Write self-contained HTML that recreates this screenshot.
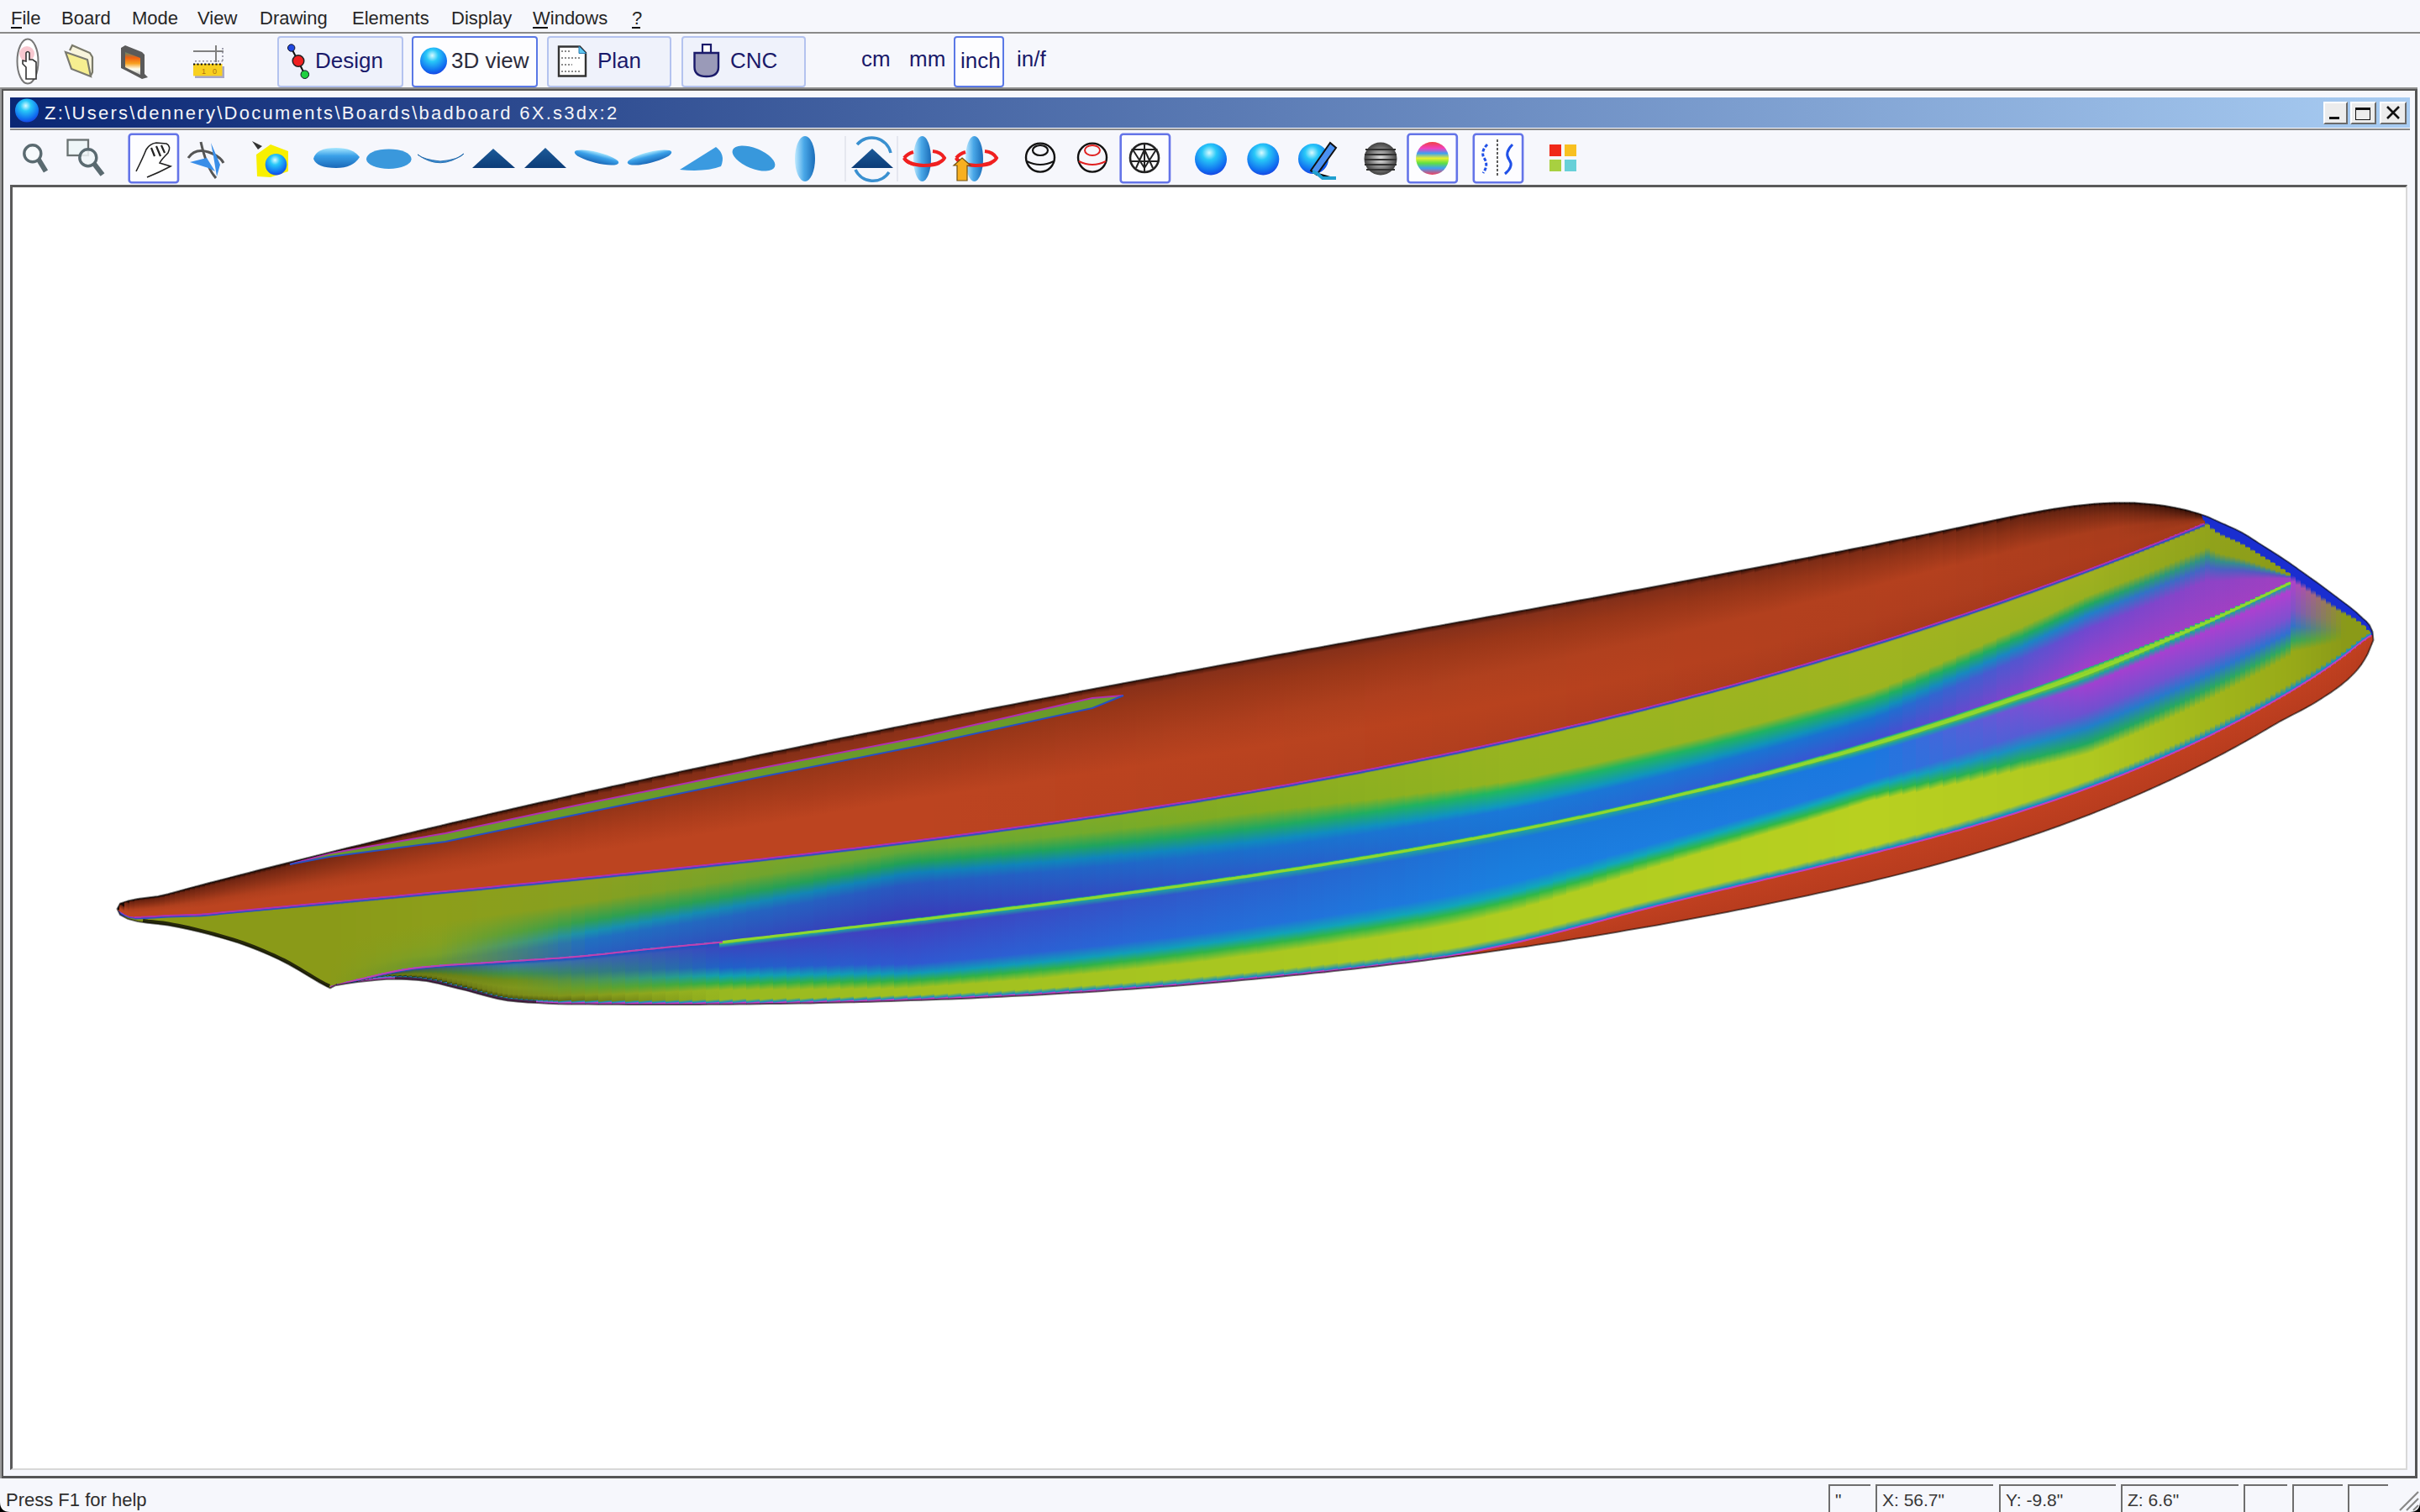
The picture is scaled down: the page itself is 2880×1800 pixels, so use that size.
<!DOCTYPE html>
<html><head><meta charset="utf-8">
<style>
*{margin:0;padding:0;box-sizing:border-box}
html,body{width:2880px;height:1800px;overflow:hidden;background:#f6f7fc;font-family:"Liberation Sans",sans-serif;position:relative}
.a{position:absolute}
.menu{font-size:22px;color:#262626;top:8px;line-height:28px}
.u{text-decoration:underline;text-underline-offset:3px}
.tbtn{position:absolute;top:43px;height:61px;border:2px solid #b4c3ef;border-radius:4px;background:#eff2fb}
.tbtn.sel{border-color:#5a78e6;background:#fdfdff}
.blab{position:absolute;font-size:26px;color:#1a1a6a;top:12px;line-height:30px}
.sbtn{position:absolute;top:158px;height:61px;border:2px solid #5a78e6;border-radius:4px;background:#fdfdff}
.pane{position:absolute;top:1767px;height:33px;border-left:2px solid #6e6e6e;border-top:2px solid #6e6e6e;font-size:21px;color:#383838;padding-left:6px;line-height:34px}
</style></head><body>
<!-- menu bar -->
<div class="a menu" style="left:13px">File</div>
<div class="a menu" style="left:73px">Board</div>
<div class="a menu" style="left:157px">Mode</div>
<div class="a menu" style="left:235px">View</div>
<div class="a menu" style="left:309px">Drawing</div>
<div class="a menu" style="left:419px">Elements</div>
<div class="a menu" style="left:537px">Display</div>
<div class="a menu" style="left:634px">Windows</div>
<div class="a menu" style="left:752px">?</div>
<div class="a" style="left:13px;top:32px;width:13px;height:2px;background:#111"></div>
<div class="a" style="left:634px;top:32px;width:18px;height:2px;background:#111"></div>
<div class="a" style="left:752px;top:32px;width:10px;height:2px;background:#111"></div>
<div class="a" style="left:0;top:38px;width:2880px;height:2px;background:#8a8a8a"></div>

<!-- main toolbar -->
<div class="tbtn" style="left:330px;width:150px"><div class="blab" style="left:43px">Design</div></div>
<div class="tbtn sel" style="left:490px;width:150px"><div class="blab" style="left:45px;color:#2c2c3c">3D view</div></div>
<div class="tbtn" style="left:651px;width:148px"><div class="blab" style="left:58px">Plan</div></div>
<div class="tbtn" style="left:811px;width:148px"><div class="blab" style="left:56px">CNC</div></div>
<div class="tbtn sel" style="left:1135px;width:60px"><div class="blab" style="left:6px">inch</div></div>
<div class="a blab" style="left:1025px;top:55px">cm</div>
<div class="a blab" style="left:1082px;top:55px">mm</div>
<div class="a blab" style="left:1210px;top:55px">in/f</div>

<!-- MDI window frame -->
<div class="a" style="left:0;top:104px;width:2877px;height:1656px;border-top:2px solid #8e8e8e;border-left:2px solid #9a9a9a"></div>
<div class="a" style="left:2px;top:106px;width:2875px;height:1654px;border-top:2px solid #555;border-left:2px solid #555;border-right:3px solid #555;border-bottom:3px solid #555;background:#f6f7fc"></div>
<!-- title bar -->
<div class="a" style="left:12px;top:116px;width:2856px;height:36px;background:linear-gradient(to right,#0a2674,#a8ccf2)"></div>
<div class="a" id="ttl" style="left:53px;top:121px;font-size:22px;line-height:28px;color:#f4f4f8;letter-spacing:2.28px">Z:\Users\dennery\Documents\Boards\badboard 6X.s3dx:2</div>
<div class="a" style="left:12px;top:153px;width:2856px;height:2px;background:#8a8a8a"></div>

<!-- canvas -->
<div class="a" style="left:12px;top:220px;width:2853px;height:1530px;border-top:3px solid #5a5a5a;border-left:3px solid #5a5a5a;border-right:2px solid #d8d8d8;border-bottom:2px solid #d8d8d8;background:#fff"></div>

<svg class="a" style="left:0;top:0" width="2880" height="1800" viewBox="0 0 2880 1800">
<defs><clipPath id="bc"><path d="M152.0,1072.6 L164.0,1070.0 L176.0,1068.6 L188.0,1067.0 L200.0,1064.3 L212.0,1060.9 L224.0,1057.6 L236.0,1054.5 L248.0,1051.3 L260.0,1048.2 L272.0,1045.1 L284.0,1042.0 L296.0,1038.9 L308.0,1035.8 L320.0,1032.8 L332.0,1029.7 L344.0,1026.7 L356.0,1023.7 L368.0,1020.7 L380.0,1017.7 L392.0,1014.7 L404.0,1011.7 L416.0,1008.8 L428.0,1005.9 L440.0,1003.0 L452.0,1000.0 L464.0,997.1 L476.0,994.2 L488.0,991.4 L500.0,988.5 L512.0,985.7 L524.0,982.9 L536.0,980.0 L548.0,977.2 L560.0,974.4 L572.0,971.6 L584.0,968.8 L596.0,966.0 L608.0,963.3 L620.0,960.5 L632.0,957.8 L644.0,955.1 L656.0,952.4 L668.0,949.7 L680.0,947.0 L692.0,944.3 L704.0,941.6 L716.0,939.0 L728.0,936.3 L740.0,933.7 L752.0,931.1 L764.0,928.4 L776.0,925.8 L788.0,923.2 L800.0,920.7 L812.0,918.1 L824.0,915.5 L836.0,913.0 L848.0,910.4 L860.0,907.9 L872.0,905.4 L884.0,902.9 L896.0,900.3 L908.0,897.8 L920.0,895.3 L932.0,892.9 L944.0,890.4 L956.0,887.9 L968.0,885.4 L980.0,883.0 L992.0,880.5 L1004.0,878.1 L1016.0,875.7 L1028.0,873.3 L1040.0,870.9 L1052.0,868.5 L1064.0,866.1 L1076.0,863.7 L1088.0,861.3 L1100.0,858.9 L1112.0,856.6 L1124.0,854.2 L1136.0,851.8 L1148.0,849.5 L1160.0,847.2 L1172.0,844.8 L1184.0,842.5 L1196.0,840.2 L1208.0,837.9 L1220.0,835.6 L1232.0,833.2 L1244.0,830.9 L1256.0,828.7 L1268.0,826.4 L1280.0,824.1 L1292.0,821.8 L1304.0,819.5 L1316.0,817.3 L1328.0,815.1 L1340.0,812.8 L1352.0,810.5 L1364.0,808.3 L1376.0,806.1 L1388.0,803.9 L1400.0,801.6 L1412.0,799.4 L1424.0,797.2 L1436.0,795.0 L1448.0,792.8 L1460.0,790.6 L1472.0,788.4 L1484.0,786.2 L1496.0,784.0 L1508.0,781.8 L1520.0,779.6 L1532.0,777.4 L1544.0,775.2 L1556.0,773.0 L1568.0,770.9 L1580.0,768.7 L1592.0,766.5 L1604.0,764.4 L1616.0,762.2 L1628.0,760.1 L1640.0,757.9 L1652.0,755.7 L1664.0,753.5 L1676.0,751.4 L1688.0,749.3 L1700.0,747.1 L1712.0,744.9 L1724.0,742.8 L1736.0,740.6 L1748.0,738.5 L1760.0,736.3 L1772.0,734.1 L1784.0,731.9 L1796.0,729.7 L1808.0,727.6 L1820.0,725.4 L1832.0,723.2 L1844.0,721.1 L1856.0,718.9 L1868.0,716.8 L1880.0,714.6 L1892.0,712.4 L1904.0,710.2 L1916.0,708.0 L1928.0,705.8 L1940.0,703.6 L1952.0,701.4 L1964.0,699.2 L1976.0,696.9 L1988.0,694.7 L2000.0,692.5 L2012.0,690.3 L2024.0,688.1 L2036.0,685.8 L2048.0,683.6 L2060.0,681.3 L2072.0,679.0 L2084.0,676.7 L2096.0,674.5 L2108.0,672.2 L2120.0,669.9 L2132.0,667.5 L2144.0,665.2 L2156.0,662.9 L2168.0,660.6 L2180.0,658.3 L2192.0,656.0 L2204.0,653.6 L2216.0,651.3 L2228.0,648.9 L2240.0,646.5 L2252.0,644.1 L2264.0,641.7 L2276.0,639.3 L2288.0,636.9 L2300.0,634.4 L2312.0,632.0 L2324.0,629.5 L2336.0,627.1 L2348.0,624.6 L2360.0,622.1 L2372.0,619.6 L2384.0,617.1 L2396.0,614.6 L2408.0,612.2 L2420.0,609.9 L2432.0,607.7 L2444.0,605.8 L2456.0,603.9 L2468.0,602.2 L2480.0,600.9 L2492.0,599.7 L2504.0,599.0 L2516.0,598.6 L2528.0,598.4 L2540.0,598.6 L2552.0,599.4 L2564.0,600.4 L2576.0,602.0 L2588.0,604.2 L2600.0,606.8 L2604.0,607.8 L2608.0,608.9 L2612.0,610.1 L2616.0,611.3 L2620.0,612.6 L2624.0,614.0 L2628.0,615.5 L2632.0,617.3 L2636.0,619.2 L2640.0,621.0 L2644.0,622.8 L2648.0,624.5 L2652.0,626.3 L2656.0,628.1 L2660.0,629.9 L2664.0,631.9 L2668.0,634.0 L2672.0,636.3 L2676.0,638.7 L2680.0,641.3 L2684.0,643.8 L2688.0,646.5 L2692.0,649.0 L2696.0,651.6 L2700.0,654.1 L2704.0,656.6 L2708.0,659.2 L2712.0,661.7 L2716.0,664.3 L2720.0,667.0 L2724.0,669.7 L2728.0,672.5 L2732.0,675.3 L2736.0,678.2 L2740.0,681.0 L2744.0,683.9 L2748.0,686.7 L2752.0,689.6 L2756.0,692.4 L2760.0,695.3 L2764.0,698.2 L2768.0,701.2 L2772.0,704.2 L2776.0,707.2 L2780.0,710.2 L2784.0,713.3 L2788.0,716.2 L2792.0,719.2 L2796.0,722.3 L2800.0,725.5 L2804.0,728.8 L2808.0,732.4 L2812.0,736.2 L2816.0,739.6 L2820.0,744.4 L2823.5,752.0 L2824.5,762.0 L2822.0,768.2 L2818.0,778.0 L2814.0,785.3 L2810.0,791.4 L2806.0,796.6 L2802.0,801.1 L2798.0,805.1 L2794.0,808.9 L2790.0,812.3 L2786.0,815.6 L2782.0,818.6 L2778.0,821.5 L2774.0,824.3 L2770.0,826.9 L2766.0,829.5 L2762.0,832.1 L2758.0,834.6 L2754.0,837.1 L2750.0,839.5 L2746.0,841.7 L2742.0,843.9 L2738.0,846.0 L2734.0,848.1 L2730.0,850.1 L2726.0,852.2 L2722.0,854.3 L2718.0,856.4 L2714.0,858.5 L2710.0,860.8 L2706.0,863.1 L2702.0,865.4 L2698.0,867.8 L2694.0,870.1 L2690.0,872.5 L2686.0,874.8 L2682.0,877.1 L2678.0,879.4 L2674.0,881.7 L2670.0,883.9 L2666.0,886.1 L2662.0,888.3 L2658.0,890.5 L2654.0,892.7 L2650.0,894.8 L2646.0,897.0 L2642.0,899.1 L2638.0,901.2 L2634.0,903.2 L2630.0,905.3 L2626.0,907.4 L2622.0,909.4 L2618.0,911.4 L2614.0,913.4 L2610.0,915.4 L2606.0,917.4 L2602.0,919.4 L2598.0,921.3 L2594.0,923.3 L2590.0,925.2 L2586.0,927.1 L2582.0,929.0 L2578.0,930.8 L2574.0,932.7 L2570.0,934.5 L2566.0,936.3 L2562.0,938.1 L2560.0,939.0 L2548.0,944.4 L2536.0,949.6 L2524.0,954.6 L2512.0,959.6 L2500.0,964.4 L2488.0,969.2 L2476.0,973.8 L2464.0,978.3 L2452.0,982.7 L2440.0,987.0 L2428.0,991.2 L2416.0,995.3 L2404.0,999.3 L2392.0,1003.2 L2380.0,1007.0 L2368.0,1010.7 L2356.0,1014.4 L2344.0,1018.0 L2332.0,1021.5 L2320.0,1024.9 L2308.0,1028.2 L2296.0,1031.5 L2284.0,1034.7 L2272.0,1037.8 L2260.0,1040.9 L2248.0,1043.9 L2236.0,1046.8 L2224.0,1049.7 L2212.0,1052.5 L2200.0,1055.3 L2188.0,1058.0 L2176.0,1060.7 L2164.0,1063.3 L2152.0,1065.9 L2140.0,1068.5 L2128.0,1071.1 L2116.0,1073.6 L2104.0,1076.0 L2092.0,1078.5 L2080.0,1080.9 L2068.0,1083.3 L2056.0,1085.7 L2044.0,1088.1 L2032.0,1090.3 L2020.0,1092.6 L2008.0,1094.8 L1996.0,1097.1 L1984.0,1099.3 L1972.0,1101.4 L1960.0,1103.5 L1948.0,1105.6 L1936.0,1107.6 L1924.0,1109.7 L1912.0,1111.8 L1900.0,1113.8 L1888.0,1115.7 L1876.0,1117.6 L1864.0,1119.5 L1852.0,1121.4 L1840.0,1123.3 L1828.0,1125.1 L1816.0,1126.9 L1804.0,1128.6 L1792.0,1130.3 L1780.0,1132.0 L1768.0,1133.7 L1756.0,1135.4 L1744.0,1137.0 L1732.0,1138.6 L1720.0,1140.2 L1708.0,1141.8 L1696.0,1143.4 L1684.0,1144.9 L1672.0,1146.4 L1660.0,1147.8 L1648.0,1149.3 L1636.0,1150.7 L1624.0,1152.1 L1612.0,1153.4 L1600.0,1154.7 L1588.0,1156.0 L1576.0,1157.4 L1564.0,1158.6 L1552.0,1159.9 L1540.0,1161.1 L1528.0,1162.3 L1516.0,1163.4 L1504.0,1164.6 L1492.0,1165.7 L1480.0,1166.8 L1468.0,1167.9 L1456.0,1169.0 L1444.0,1170.0 L1432.0,1171.0 L1420.0,1172.0 L1408.0,1173.0 L1396.0,1173.9 L1384.0,1174.8 L1372.0,1175.7 L1360.0,1176.6 L1348.0,1177.4 L1336.0,1178.3 L1324.0,1179.1 L1312.0,1179.9 L1300.0,1180.7 L1288.0,1181.4 L1276.0,1182.1 L1264.0,1182.8 L1252.0,1183.6 L1240.0,1184.3 L1228.0,1184.9 L1216.0,1185.5 L1204.0,1186.1 L1192.0,1186.7 L1180.0,1187.2 L1168.0,1187.8 L1156.0,1188.4 L1144.0,1188.9 L1132.0,1189.4 L1120.0,1189.8 L1108.0,1190.3 L1096.0,1190.7 L1084.0,1191.1 L1072.0,1191.5 L1060.0,1191.9 L1048.0,1192.3 L1036.0,1192.7 L1024.0,1193.0 L1012.0,1193.3 L1000.0,1193.5 L988.0,1193.8 L976.0,1194.1 L964.0,1194.4 L952.0,1194.6 L940.0,1194.8 L928.0,1195.0 L916.0,1195.1 L904.0,1195.3 L892.0,1195.5 L880.0,1195.6 L868.0,1195.7 L856.0,1195.8 L844.0,1195.8 L832.0,1195.9 L820.0,1195.9 L808.0,1196.0 L796.0,1196.0 L784.0,1196.0 L772.0,1196.0 L760.0,1196.0 L748.0,1195.9 L736.0,1195.8 L724.0,1195.8 L712.0,1195.7 L700.0,1195.6 L688.0,1195.5 L676.0,1195.4 L664.0,1195.2 L652.0,1194.7 L640.0,1194.1 L628.0,1193.4 L616.0,1192.4 L604.0,1191.2 L592.0,1188.9 L580.0,1186.0 L568.0,1182.7 L556.0,1179.4 L544.0,1176.5 L532.0,1173.5 L520.0,1170.4 L508.0,1168.0 L496.0,1166.7 L484.0,1165.9 L472.0,1165.5 L460.0,1165.8 L448.0,1166.7 L436.0,1167.9 L424.0,1169.2 L412.0,1171.1 L400.0,1173.0 L400.0,1172.6 L393.0,1176.3 L389.0,1174.4 L380.0,1169.6 L368.0,1162.5 L356.0,1155.2 L344.0,1148.3 L332.0,1142.2 L320.0,1136.7 L308.0,1131.6 L296.0,1126.9 L284.0,1122.6 L272.0,1118.9 L260.0,1115.4 L248.0,1112.1 L236.0,1109.1 L224.0,1106.3 L212.0,1103.8 L200.0,1101.5 L188.0,1100.0 L176.0,1098.7 L164.0,1096.9 L152.0,1093.9 L143.0,1089.0 L139.5,1082.0 L143.0,1075.5 Z"/></clipPath>
<linearGradient id="g0" gradientUnits="userSpaceOnUse" x1="139.0" y1="1074.0" x2="134.5" y2="1088.6"><stop offset="0.500" stop-color="#200a04"/><stop offset="0.507" stop-color="#6a2210"/><stop offset="0.522" stop-color="#8a3016"/><stop offset="0.537" stop-color="#b0401e"/><stop offset="0.550" stop-color="#bc4420"/><stop offset="0.562" stop-color="#bc4420"/><stop offset="0.594" stop-color="#b030b0"/><stop offset="0.688" stop-color="#3050c0"/></linearGradient>
<linearGradient id="g1" gradientUnits="userSpaceOnUse" x1="145.0" y1="1069.2" x2="133.2" y2="1089.0"><stop offset="0.299" stop-color="#200a04"/><stop offset="0.338" stop-color="#6a2210"/><stop offset="0.414" stop-color="#8a3016"/><stop offset="0.496" stop-color="#b0401e"/><stop offset="0.562" stop-color="#bc4420"/><stop offset="0.629" stop-color="#bc4420"/><stop offset="0.647" stop-color="#b030b0"/><stop offset="0.703" stop-color="#3050c0"/></linearGradient>
<linearGradient id="g2" gradientUnits="userSpaceOnUse" x1="151.0" y1="1065.0" x2="137.8" y2="1095.9"><stop offset="0.219" stop-color="#200a04"/><stop offset="0.272" stop-color="#6a2210"/><stop offset="0.375" stop-color="#8a3016"/><stop offset="0.488" stop-color="#b0401e"/><stop offset="0.577" stop-color="#bc4420"/><stop offset="0.668" stop-color="#bc4420"/><stop offset="0.681" stop-color="#b030b0"/><stop offset="0.722" stop-color="#3050c0"/><stop offset="0.750" stop-color="#8a9a18"/><stop offset="0.752" stop-color="#8a9a18"/><stop offset="0.752" stop-color="#8a9a18"/><stop offset="0.753" stop-color="#8a9a18"/><stop offset="0.753" stop-color="#8a9a18"/><stop offset="0.754" stop-color="#8a9a18"/></linearGradient>
<linearGradient id="g3" gradientUnits="userSpaceOnUse" x1="157.0" y1="1063.3" x2="152.8" y2="1102.9"><stop offset="0.200" stop-color="#200a04"/><stop offset="0.257" stop-color="#6b2210"/><stop offset="0.370" stop-color="#8a3016"/><stop offset="0.493" stop-color="#b0401e"/><stop offset="0.591" stop-color="#bc4420"/><stop offset="0.691" stop-color="#bc4420"/><stop offset="0.703" stop-color="#b030b0"/><stop offset="0.741" stop-color="#3050c0"/><stop offset="0.766" stop-color="#8a9a18"/><stop offset="0.770" stop-color="#8a9a18"/><stop offset="0.772" stop-color="#8a9a18"/><stop offset="0.774" stop-color="#8a9a18"/><stop offset="0.775" stop-color="#8a9a18"/><stop offset="0.775" stop-color="#8a9a18"/></linearGradient>
<linearGradient id="g4" gradientUnits="userSpaceOnUse" x1="163.0" y1="1062.2" x2="163.9" y2="1104.7"><stop offset="0.188" stop-color="#210a04"/><stop offset="0.245" stop-color="#6b2310"/><stop offset="0.357" stop-color="#8b3016"/><stop offset="0.479" stop-color="#b0401e"/><stop offset="0.577" stop-color="#bc4420"/><stop offset="0.676" stop-color="#bc4420"/><stop offset="0.688" stop-color="#b030b0"/><stop offset="0.723" stop-color="#3050c0"/><stop offset="0.747" stop-color="#8a9a18"/><stop offset="0.767" stop-color="#8a9a18"/><stop offset="0.776" stop-color="#8a9a18"/><stop offset="0.782" stop-color="#8a9a18"/><stop offset="0.786" stop-color="#8a9a18"/><stop offset="0.788" stop-color="#8a9a18"/></linearGradient>
<linearGradient id="g5" gradientUnits="userSpaceOnUse" x1="169.0" y1="1061.4" x2="170.9" y2="1105.7"><stop offset="0.180" stop-color="#210a04"/><stop offset="0.236" stop-color="#6b2310"/><stop offset="0.347" stop-color="#8b3016"/><stop offset="0.467" stop-color="#b0401e"/><stop offset="0.563" stop-color="#bc4420"/><stop offset="0.662" stop-color="#bc4420"/><stop offset="0.673" stop-color="#b030b0"/><stop offset="0.707" stop-color="#3050c0"/><stop offset="0.731" stop-color="#8a9a18"/><stop offset="0.763" stop-color="#8a9a18"/><stop offset="0.777" stop-color="#8a9a18"/><stop offset="0.787" stop-color="#8a9a18"/><stop offset="0.794" stop-color="#8a9a18"/><stop offset="0.797" stop-color="#8a9a18"/></linearGradient>
<linearGradient id="g6" gradientUnits="userSpaceOnUse" x1="175.0" y1="1060.7" x2="177.5" y2="1106.4"><stop offset="0.174" stop-color="#210a04"/><stop offset="0.229" stop-color="#6c2310"/><stop offset="0.338" stop-color="#8b3016"/><stop offset="0.457" stop-color="#b0401e"/><stop offset="0.551" stop-color="#bc4420"/><stop offset="0.649" stop-color="#bc4420"/><stop offset="0.659" stop-color="#b030b0"/><stop offset="0.692" stop-color="#3050c0"/><stop offset="0.716" stop-color="#8a9a18"/><stop offset="0.759" stop-color="#8a9a18"/><stop offset="0.777" stop-color="#8a9a18"/><stop offset="0.790" stop-color="#8a9a18"/><stop offset="0.799" stop-color="#8a9a18"/><stop offset="0.804" stop-color="#8a9a18"/></linearGradient>
<linearGradient id="g7" gradientUnits="userSpaceOnUse" x1="181.0" y1="1060.0" x2="183.9" y2="1107.0"><stop offset="0.169" stop-color="#210a04"/><stop offset="0.222" stop-color="#6c2310"/><stop offset="0.330" stop-color="#8b3016"/><stop offset="0.447" stop-color="#b0401e"/><stop offset="0.541" stop-color="#bc4420"/><stop offset="0.637" stop-color="#bc4420"/><stop offset="0.647" stop-color="#b030b0"/><stop offset="0.679" stop-color="#3050c0"/><stop offset="0.703" stop-color="#8a9a18"/><stop offset="0.755" stop-color="#8a9a18"/><stop offset="0.777" stop-color="#8a9a18"/><stop offset="0.793" stop-color="#8a9a18"/><stop offset="0.804" stop-color="#8a9a18"/><stop offset="0.809" stop-color="#8a9a18"/></linearGradient>
<linearGradient id="g8" gradientUnits="userSpaceOnUse" x1="187.0" y1="1059.1" x2="190.0" y2="1107.7"><stop offset="0.164" stop-color="#210b04"/><stop offset="0.216" stop-color="#6c2311"/><stop offset="0.323" stop-color="#8b3116"/><stop offset="0.439" stop-color="#b0401e"/><stop offset="0.532" stop-color="#bc4420"/><stop offset="0.627" stop-color="#bc4420"/><stop offset="0.638" stop-color="#b030b0"/><stop offset="0.668" stop-color="#3050c0"/><stop offset="0.692" stop-color="#8a9a18"/><stop offset="0.752" stop-color="#8a9a18"/><stop offset="0.777" stop-color="#8a9a18"/><stop offset="0.796" stop-color="#8a9a18"/><stop offset="0.809" stop-color="#8a9a18"/><stop offset="0.815" stop-color="#8a9a18"/></linearGradient>
<linearGradient id="g9" gradientUnits="userSpaceOnUse" x1="193.0" y1="1058.0" x2="195.8" y2="1108.4"><stop offset="0.158" stop-color="#210b04"/><stop offset="0.210" stop-color="#6c2311"/><stop offset="0.317" stop-color="#8b3116"/><stop offset="0.432" stop-color="#b0401e"/><stop offset="0.525" stop-color="#bc4420"/><stop offset="0.621" stop-color="#bc4420"/><stop offset="0.631" stop-color="#b030b0"/><stop offset="0.660" stop-color="#3050c0"/><stop offset="0.683" stop-color="#8a9a18"/><stop offset="0.751" stop-color="#8a9a18"/><stop offset="0.779" stop-color="#8a9a18"/><stop offset="0.801" stop-color="#8a9a18"/><stop offset="0.815" stop-color="#8a9a18"/><stop offset="0.822" stop-color="#8a9a18"/></linearGradient>
<linearGradient id="g10" gradientUnits="userSpaceOnUse" x1="199.0" y1="1056.5" x2="201.3" y2="1109.2"><stop offset="0.151" stop-color="#220b04"/><stop offset="0.203" stop-color="#6d2311"/><stop offset="0.310" stop-color="#8c3116"/><stop offset="0.426" stop-color="#b0401e"/><stop offset="0.519" stop-color="#bc4420"/><stop offset="0.616" stop-color="#bc4420"/><stop offset="0.625" stop-color="#b030b0"/><stop offset="0.654" stop-color="#3050c0"/><stop offset="0.676" stop-color="#8a9a18"/><stop offset="0.751" stop-color="#8a9a18"/><stop offset="0.783" stop-color="#8a9a18"/><stop offset="0.806" stop-color="#8a9a18"/><stop offset="0.822" stop-color="#8a9a18"/><stop offset="0.830" stop-color="#8a9a18"/></linearGradient>
<linearGradient id="g11" gradientUnits="userSpaceOnUse" x1="205.0" y1="1054.9" x2="206.9" y2="1110.3"><stop offset="0.144" stop-color="#220b04"/><stop offset="0.195" stop-color="#6d2311"/><stop offset="0.303" stop-color="#8c3116"/><stop offset="0.420" stop-color="#b0401e"/><stop offset="0.514" stop-color="#bc4420"/><stop offset="0.611" stop-color="#bc4420"/><stop offset="0.620" stop-color="#b030b0"/><stop offset="0.647" stop-color="#3050c0"/><stop offset="0.669" stop-color="#8a9a18"/><stop offset="0.752" stop-color="#8a9a18"/><stop offset="0.786" stop-color="#8a9a18"/><stop offset="0.812" stop-color="#8a9a18"/><stop offset="0.829" stop-color="#8a9a18"/><stop offset="0.838" stop-color="#8a9a18"/></linearGradient>
<linearGradient id="g12" gradientUnits="userSpaceOnUse" x1="211.0" y1="1053.2" x2="212.8" y2="1111.5"><stop offset="0.137" stop-color="#220b04"/><stop offset="0.188" stop-color="#6d2411"/><stop offset="0.297" stop-color="#8c3116"/><stop offset="0.414" stop-color="#b0401e"/><stop offset="0.508" stop-color="#bc4420"/><stop offset="0.607" stop-color="#bc4420"/><stop offset="0.615" stop-color="#b030b0"/><stop offset="0.641" stop-color="#3050c0"/><stop offset="0.662" stop-color="#8a9a18"/><stop offset="0.752" stop-color="#8a9a18"/><stop offset="0.790" stop-color="#8a9a18"/><stop offset="0.818" stop-color="#8a9a18"/><stop offset="0.836" stop-color="#8a9a18"/><stop offset="0.846" stop-color="#8a9a18"/></linearGradient>
<linearGradient id="g13" gradientUnits="userSpaceOnUse" x1="217.0" y1="1051.5" x2="218.8" y2="1112.8"><stop offset="0.130" stop-color="#220b04"/><stop offset="0.181" stop-color="#6d2411"/><stop offset="0.291" stop-color="#8c3116"/><stop offset="0.409" stop-color="#b0401e"/><stop offset="0.503" stop-color="#bc4420"/><stop offset="0.602" stop-color="#bc4420"/><stop offset="0.611" stop-color="#b030b0"/><stop offset="0.635" stop-color="#3050c0"/><stop offset="0.655" stop-color="#8a9a18"/><stop offset="0.752" stop-color="#8a9a18"/><stop offset="0.793" stop-color="#8a9a18"/><stop offset="0.823" stop-color="#8a9a18"/><stop offset="0.843" stop-color="#8a9a18"/><stop offset="0.853" stop-color="#8a9a18"/></linearGradient>
<linearGradient id="g14" gradientUnits="userSpaceOnUse" x1="223.0" y1="1049.9" x2="225.0" y2="1114.1"><stop offset="0.125" stop-color="#220b04"/><stop offset="0.175" stop-color="#6e2411"/><stop offset="0.285" stop-color="#8c3116"/><stop offset="0.403" stop-color="#b0401e"/><stop offset="0.497" stop-color="#bc4420"/><stop offset="0.597" stop-color="#bc4420"/><stop offset="0.605" stop-color="#b030b0"/><stop offset="0.629" stop-color="#3050c0"/><stop offset="0.648" stop-color="#8a9a18"/><stop offset="0.752" stop-color="#8a9a18"/><stop offset="0.795" stop-color="#8a9a18"/><stop offset="0.827" stop-color="#8a9a18"/><stop offset="0.849" stop-color="#8a9a18"/><stop offset="0.860" stop-color="#8a9a18"/></linearGradient>
<linearGradient id="g15" gradientUnits="userSpaceOnUse" x1="229.0" y1="1048.3" x2="231.4" y2="1115.4"><stop offset="0.119" stop-color="#220b04"/><stop offset="0.169" stop-color="#6e2411"/><stop offset="0.279" stop-color="#8c3116"/><stop offset="0.397" stop-color="#b0401e"/><stop offset="0.492" stop-color="#bc4420"/><stop offset="0.592" stop-color="#bc4420"/><stop offset="0.599" stop-color="#b030b0"/><stop offset="0.622" stop-color="#3050c0"/><stop offset="0.641" stop-color="#8a9a18"/><stop offset="0.751" stop-color="#8a9a18"/><stop offset="0.797" stop-color="#8a9a18"/><stop offset="0.832" stop-color="#8a9a18"/><stop offset="0.855" stop-color="#8a9a18"/><stop offset="0.866" stop-color="#8a9a18"/></linearGradient>
<linearGradient id="g16" gradientUnits="userSpaceOnUse" x1="235.0" y1="1046.7" x2="238.1" y2="1116.8"><stop offset="0.114" stop-color="#230b05"/><stop offset="0.163" stop-color="#6e2411"/><stop offset="0.273" stop-color="#8d3117"/><stop offset="0.391" stop-color="#b03f1d"/><stop offset="0.485" stop-color="#bc4420"/><stop offset="0.586" stop-color="#bc4420"/><stop offset="0.593" stop-color="#b030b0"/><stop offset="0.614" stop-color="#3050c0"/><stop offset="0.634" stop-color="#8a9a18"/><stop offset="0.750" stop-color="#8a9a18"/><stop offset="0.799" stop-color="#8a9a18"/><stop offset="0.835" stop-color="#8a9a18"/><stop offset="0.860" stop-color="#8a9a18"/><stop offset="0.872" stop-color="#8a9a18"/></linearGradient>
<linearGradient id="g17" gradientUnits="userSpaceOnUse" x1="241.0" y1="1045.2" x2="245.4" y2="1118.1"><stop offset="0.109" stop-color="#230b05"/><stop offset="0.158" stop-color="#6e2411"/><stop offset="0.267" stop-color="#8d3117"/><stop offset="0.385" stop-color="#b03f1d"/><stop offset="0.479" stop-color="#bc4420"/><stop offset="0.579" stop-color="#bc4420"/><stop offset="0.586" stop-color="#b030b0"/><stop offset="0.606" stop-color="#3050c0"/><stop offset="0.625" stop-color="#8a9a18"/><stop offset="0.749" stop-color="#8a9a18"/><stop offset="0.800" stop-color="#8a9a18"/><stop offset="0.838" stop-color="#8a9a18"/><stop offset="0.864" stop-color="#8a9a18"/><stop offset="0.877" stop-color="#8a9a18"/></linearGradient>
<linearGradient id="g18" gradientUnits="userSpaceOnUse" x1="247.0" y1="1043.6" x2="253.5" y2="1119.3"><stop offset="0.105" stop-color="#230b05"/><stop offset="0.152" stop-color="#6f2411"/><stop offset="0.261" stop-color="#8d3117"/><stop offset="0.377" stop-color="#b03f1d"/><stop offset="0.470" stop-color="#bc4420"/><stop offset="0.570" stop-color="#bc4420"/><stop offset="0.577" stop-color="#b030b0"/><stop offset="0.597" stop-color="#3050c0"/><stop offset="0.615" stop-color="#8a9a18"/><stop offset="0.746" stop-color="#8a9a18"/><stop offset="0.800" stop-color="#8a9a18"/><stop offset="0.841" stop-color="#8a9a18"/><stop offset="0.868" stop-color="#8a9a18"/><stop offset="0.882" stop-color="#8a9a18"/></linearGradient>
<linearGradient id="g19" gradientUnits="userSpaceOnUse" x1="253.0" y1="1042.0" x2="261.2" y2="1120.6"><stop offset="0.101" stop-color="#230b05"/><stop offset="0.147" stop-color="#6f2511"/><stop offset="0.254" stop-color="#8d3117"/><stop offset="0.369" stop-color="#b03f1d"/><stop offset="0.461" stop-color="#bc4420"/><stop offset="0.560" stop-color="#bc4420"/><stop offset="0.567" stop-color="#b030b0"/><stop offset="0.585" stop-color="#3050c0"/><stop offset="0.604" stop-color="#8a9a18"/><stop offset="0.742" stop-color="#8a9a18"/><stop offset="0.800" stop-color="#8a9a18"/><stop offset="0.843" stop-color="#8a9a18"/><stop offset="0.872" stop-color="#8a9a18"/><stop offset="0.887" stop-color="#8a9a18"/></linearGradient>
<linearGradient id="g20" gradientUnits="userSpaceOnUse" x1="259.0" y1="1040.4" x2="268.0" y2="1122.1"><stop offset="0.097" stop-color="#230b05"/><stop offset="0.142" stop-color="#6f2511"/><stop offset="0.248" stop-color="#8d3117"/><stop offset="0.361" stop-color="#b03f1d"/><stop offset="0.452" stop-color="#bc4420"/><stop offset="0.550" stop-color="#bc4420"/><stop offset="0.556" stop-color="#b030b0"/><stop offset="0.574" stop-color="#3050c0"/><stop offset="0.592" stop-color="#8a9a18"/><stop offset="0.738" stop-color="#8a9a18"/><stop offset="0.800" stop-color="#8a9a18"/><stop offset="0.845" stop-color="#8a9a18"/><stop offset="0.876" stop-color="#8a9a18"/><stop offset="0.891" stop-color="#8a9a18"/></linearGradient>
<linearGradient id="g21" gradientUnits="userSpaceOnUse" x1="265.0" y1="1038.9" x2="274.0" y2="1123.8"><stop offset="0.093" stop-color="#230b05"/><stop offset="0.137" stop-color="#702511"/><stop offset="0.241" stop-color="#8d3117"/><stop offset="0.353" stop-color="#b03f1d"/><stop offset="0.442" stop-color="#bc4420"/><stop offset="0.539" stop-color="#bc4420"/><stop offset="0.545" stop-color="#b030b0"/><stop offset="0.562" stop-color="#3050c0"/><stop offset="0.580" stop-color="#8a9a18"/><stop offset="0.735" stop-color="#8a9a18"/><stop offset="0.799" stop-color="#8a9a18"/><stop offset="0.847" stop-color="#8a9a18"/><stop offset="0.879" stop-color="#8a9a18"/><stop offset="0.895" stop-color="#8a9a18"/></linearGradient>
<linearGradient id="g22" gradientUnits="userSpaceOnUse" x1="271.0" y1="1037.3" x2="279.5" y2="1125.7"><stop offset="0.090" stop-color="#240b05"/><stop offset="0.133" stop-color="#702511"/><stop offset="0.236" stop-color="#8e3117"/><stop offset="0.346" stop-color="#b03f1d"/><stop offset="0.434" stop-color="#bc4420"/><stop offset="0.530" stop-color="#bc4420"/><stop offset="0.535" stop-color="#b030b0"/><stop offset="0.552" stop-color="#3050c0"/><stop offset="0.570" stop-color="#8a9a18"/><stop offset="0.731" stop-color="#8a9a18"/><stop offset="0.798" stop-color="#8a9a18"/><stop offset="0.849" stop-color="#8a9a18"/><stop offset="0.882" stop-color="#8a9a18"/><stop offset="0.899" stop-color="#8a9a18"/></linearGradient>
<linearGradient id="g23" gradientUnits="userSpaceOnUse" x1="277.0" y1="1035.8" x2="285.6" y2="1127.6"><stop offset="0.086" stop-color="#240c05"/><stop offset="0.129" stop-color="#702512"/><stop offset="0.230" stop-color="#8e3217"/><stop offset="0.339" stop-color="#b03f1d"/><stop offset="0.426" stop-color="#bc4420"/><stop offset="0.521" stop-color="#bc4420"/><stop offset="0.527" stop-color="#b030b0"/><stop offset="0.543" stop-color="#3050c0"/><stop offset="0.561" stop-color="#8a9a18"/><stop offset="0.728" stop-color="#8a9a18"/><stop offset="0.798" stop-color="#8a9a18"/><stop offset="0.850" stop-color="#8a9a18"/><stop offset="0.885" stop-color="#8a9a18"/><stop offset="0.903" stop-color="#8a9a18"/></linearGradient>
<linearGradient id="g24" gradientUnits="userSpaceOnUse" x1="283.0" y1="1034.2" x2="291.8" y2="1129.5"><stop offset="0.083" stop-color="#240c05"/><stop offset="0.125" stop-color="#702512"/><stop offset="0.225" stop-color="#8e3217"/><stop offset="0.332" stop-color="#b03f1d"/><stop offset="0.418" stop-color="#bc4420"/><stop offset="0.513" stop-color="#bc4420"/><stop offset="0.518" stop-color="#b030b0"/><stop offset="0.534" stop-color="#3050c0"/><stop offset="0.551" stop-color="#8a9a18"/><stop offset="0.725" stop-color="#8a9a18"/><stop offset="0.798" stop-color="#8a9a18"/><stop offset="0.852" stop-color="#8a9a18"/><stop offset="0.888" stop-color="#8a9a18"/><stop offset="0.906" stop-color="#8a9a18"/></linearGradient>
<linearGradient id="g25" gradientUnits="userSpaceOnUse" x1="289.0" y1="1032.7" x2="298.2" y2="1131.5"><stop offset="0.080" stop-color="#240c05"/><stop offset="0.121" stop-color="#712512"/><stop offset="0.220" stop-color="#8e3217"/><stop offset="0.326" stop-color="#b03f1d"/><stop offset="0.411" stop-color="#bc4420"/><stop offset="0.504" stop-color="#bc4420"/><stop offset="0.509" stop-color="#b030b0"/><stop offset="0.524" stop-color="#3050c0"/><stop offset="0.542" stop-color="#8a9a18"/><stop offset="0.722" stop-color="#8a9a18"/><stop offset="0.797" stop-color="#8a9a18"/><stop offset="0.853" stop-color="#8a9a18"/><stop offset="0.891" stop-color="#8a9a18"/><stop offset="0.910" stop-color="#8a9a18"/></linearGradient>
<linearGradient id="g26" gradientUnits="userSpaceOnUse" x1="295.0" y1="1031.1" x2="304.6" y2="1133.6"><stop offset="0.077" stop-color="#240c05"/><stop offset="0.117" stop-color="#712512"/><stop offset="0.215" stop-color="#8e3217"/><stop offset="0.319" stop-color="#b03f1d"/><stop offset="0.403" stop-color="#bc4420"/><stop offset="0.496" stop-color="#bc4420"/><stop offset="0.500" stop-color="#b030b0"/><stop offset="0.515" stop-color="#3050c0"/><stop offset="0.532" stop-color="#8a9a18"/><stop offset="0.719" stop-color="#8a9a18"/><stop offset="0.796" stop-color="#8a9a18"/><stop offset="0.855" stop-color="#8a9a18"/><stop offset="0.894" stop-color="#8a9a18"/><stop offset="0.913" stop-color="#8a9a18"/></linearGradient>
<linearGradient id="g27" gradientUnits="userSpaceOnUse" x1="301.0" y1="1029.6" x2="311.1" y2="1135.9"><stop offset="0.075" stop-color="#240c05"/><stop offset="0.113" stop-color="#712612"/><stop offset="0.210" stop-color="#8e3217"/><stop offset="0.313" stop-color="#b03f1d"/><stop offset="0.395" stop-color="#bc4420"/><stop offset="0.487" stop-color="#bc4420"/><stop offset="0.492" stop-color="#b030b0"/><stop offset="0.506" stop-color="#3050c0"/><stop offset="0.523" stop-color="#8a9a18"/><stop offset="0.715" stop-color="#8a9a18"/><stop offset="0.796" stop-color="#8a9a18"/><stop offset="0.856" stop-color="#8a9a18"/><stop offset="0.896" stop-color="#8a9a18"/><stop offset="0.916" stop-color="#8a9a18"/></linearGradient>
<linearGradient id="g28" gradientUnits="userSpaceOnUse" x1="307.0" y1="1028.1" x2="317.7" y2="1138.2"><stop offset="0.072" stop-color="#250c05"/><stop offset="0.109" stop-color="#712612"/><stop offset="0.205" stop-color="#8f3217"/><stop offset="0.306" stop-color="#b03f1d"/><stop offset="0.388" stop-color="#bc4420"/><stop offset="0.478" stop-color="#bc4420"/><stop offset="0.483" stop-color="#b030b0"/><stop offset="0.496" stop-color="#3050c0"/><stop offset="0.514" stop-color="#8a9a18"/><stop offset="0.712" stop-color="#8a9a18"/><stop offset="0.795" stop-color="#8a9a18"/><stop offset="0.857" stop-color="#8a9a18"/><stop offset="0.898" stop-color="#8a9a18"/><stop offset="0.919" stop-color="#8a9a18"/></linearGradient>
<linearGradient id="g29" gradientUnits="userSpaceOnUse" x1="313.0" y1="1026.5" x2="324.1" y2="1140.6"><stop offset="0.069" stop-color="#250c05"/><stop offset="0.106" stop-color="#722612"/><stop offset="0.200" stop-color="#8f3217"/><stop offset="0.300" stop-color="#b03f1d"/><stop offset="0.380" stop-color="#bc4420"/><stop offset="0.470" stop-color="#bc4420"/><stop offset="0.474" stop-color="#b030b0"/><stop offset="0.487" stop-color="#3050c0"/><stop offset="0.504" stop-color="#8a9a18"/><stop offset="0.709" stop-color="#8a9a18"/><stop offset="0.794" stop-color="#8a9a18"/><stop offset="0.858" stop-color="#8a9a18"/><stop offset="0.901" stop-color="#8a9a18"/><stop offset="0.922" stop-color="#8a9a18"/></linearGradient>
<linearGradient id="g30" gradientUnits="userSpaceOnUse" x1="319.0" y1="1025.0" x2="330.5" y2="1143.2"><stop offset="0.067" stop-color="#250c05"/><stop offset="0.103" stop-color="#722612"/><stop offset="0.195" stop-color="#8f3217"/><stop offset="0.294" stop-color="#b03f1d"/><stop offset="0.373" stop-color="#bc4420"/><stop offset="0.461" stop-color="#bc4420"/><stop offset="0.466" stop-color="#b030b0"/><stop offset="0.478" stop-color="#3050c0"/><stop offset="0.495" stop-color="#8a9a18"/><stop offset="0.706" stop-color="#8a9a18"/><stop offset="0.793" stop-color="#8a9a18"/><stop offset="0.859" stop-color="#8a9a18"/><stop offset="0.903" stop-color="#8a9a18"/><stop offset="0.925" stop-color="#8a9a18"/></linearGradient>
<linearGradient id="g31" gradientUnits="userSpaceOnUse" x1="325.0" y1="1023.5" x2="336.8" y2="1145.8"><stop offset="0.065" stop-color="#250c05"/><stop offset="0.099" stop-color="#722612"/><stop offset="0.191" stop-color="#8f3217"/><stop offset="0.288" stop-color="#b03f1d"/><stop offset="0.366" stop-color="#bc4420"/><stop offset="0.453" stop-color="#bc4420"/><stop offset="0.457" stop-color="#b030b0"/><stop offset="0.470" stop-color="#3050c0"/><stop offset="0.487" stop-color="#8a9a18"/><stop offset="0.702" stop-color="#8a9a18"/><stop offset="0.792" stop-color="#8a9a18"/><stop offset="0.860" stop-color="#8a9a18"/><stop offset="0.905" stop-color="#8a9a18"/><stop offset="0.927" stop-color="#8a9a18"/></linearGradient>
<linearGradient id="g32" gradientUnits="userSpaceOnUse" x1="331.0" y1="1022.0" x2="343.0" y2="1148.6"><stop offset="0.063" stop-color="#250c05"/><stop offset="0.096" stop-color="#722612"/><stop offset="0.187" stop-color="#8f3217"/><stop offset="0.282" stop-color="#b03f1d"/><stop offset="0.359" stop-color="#bc4420"/><stop offset="0.446" stop-color="#bc4420"/><stop offset="0.450" stop-color="#b030b0"/><stop offset="0.461" stop-color="#3050c0"/><stop offset="0.478" stop-color="#8a9a18"/><stop offset="0.699" stop-color="#8a9a18"/><stop offset="0.791" stop-color="#8a9a18"/><stop offset="0.860" stop-color="#8a9a18"/><stop offset="0.907" stop-color="#8a9a18"/><stop offset="0.930" stop-color="#8a9a18"/></linearGradient>
<linearGradient id="g33" gradientUnits="userSpaceOnUse" x1="337.0" y1="1020.5" x2="349.3" y2="1151.4"><stop offset="0.061" stop-color="#250c05"/><stop offset="0.093" stop-color="#732612"/><stop offset="0.182" stop-color="#8f3217"/><stop offset="0.277" stop-color="#b03f1d"/><stop offset="0.352" stop-color="#bc4420"/><stop offset="0.438" stop-color="#bc4420"/><stop offset="0.442" stop-color="#b030b0"/><stop offset="0.453" stop-color="#3050c0"/><stop offset="0.470" stop-color="#8a9a18"/><stop offset="0.696" stop-color="#8a9a18"/><stop offset="0.791" stop-color="#8a9a18"/><stop offset="0.861" stop-color="#8a9a18"/><stop offset="0.908" stop-color="#8a9a18"/><stop offset="0.932" stop-color="#8a9a18"/></linearGradient>
<linearGradient id="g34" gradientUnits="userSpaceOnUse" x1="343.0" y1="1018.9" x2="355.6" y2="1154.6"><stop offset="0.058" stop-color="#260c05"/><stop offset="0.091" stop-color="#732712"/><stop offset="0.178" stop-color="#903217"/><stop offset="0.271" stop-color="#b03f1d"/><stop offset="0.345" stop-color="#bc4420"/><stop offset="0.430" stop-color="#bc4420"/><stop offset="0.434" stop-color="#b030b0"/><stop offset="0.445" stop-color="#3050c0"/><stop offset="0.462" stop-color="#8a9a18"/><stop offset="0.693" stop-color="#8a9a18"/><stop offset="0.790" stop-color="#8a9a18"/><stop offset="0.862" stop-color="#8a9a18"/><stop offset="0.910" stop-color="#8a9a18"/><stop offset="0.934" stop-color="#8a9a18"/></linearGradient>
<linearGradient id="g35" gradientUnits="userSpaceOnUse" x1="349.0" y1="1017.4" x2="362.0" y2="1157.9"><stop offset="0.056" stop-color="#260c05"/><stop offset="0.088" stop-color="#732712"/><stop offset="0.174" stop-color="#903217"/><stop offset="0.265" stop-color="#b03f1d"/><stop offset="0.338" stop-color="#bc4420"/><stop offset="0.422" stop-color="#bc4420"/><stop offset="0.426" stop-color="#b030b0"/><stop offset="0.436" stop-color="#3050c0"/><stop offset="0.453" stop-color="#8a9a18"/><stop offset="0.690" stop-color="#8a9a18"/><stop offset="0.788" stop-color="#8a9a18"/><stop offset="0.862" stop-color="#8a9a18"/><stop offset="0.912" stop-color="#8a9a18"/><stop offset="0.936" stop-color="#8a9a18"/></linearGradient>
<linearGradient id="g36" gradientUnits="userSpaceOnUse" x1="355.0" y1="1015.9" x2="368.5" y2="1161.4"><stop offset="0.055" stop-color="#260c05"/><stop offset="0.085" stop-color="#742712"/><stop offset="0.170" stop-color="#903217"/><stop offset="0.259" stop-color="#b03f1d"/><stop offset="0.331" stop-color="#bc4420"/><stop offset="0.414" stop-color="#bc4420"/><stop offset="0.417" stop-color="#b030b0"/><stop offset="0.428" stop-color="#3050c0"/><stop offset="0.445" stop-color="#8a9a18"/><stop offset="0.687" stop-color="#8a9a18"/><stop offset="0.787" stop-color="#8a9a18"/><stop offset="0.863" stop-color="#8a9a18"/><stop offset="0.913" stop-color="#8a9a18"/><stop offset="0.939" stop-color="#8a9a18"/></linearGradient>
<linearGradient id="g37" gradientUnits="userSpaceOnUse" x1="361.0" y1="1014.4" x2="375.0" y2="1164.9"><stop offset="0.053" stop-color="#260c05"/><stop offset="0.082" stop-color="#742712"/><stop offset="0.166" stop-color="#903217"/><stop offset="0.254" stop-color="#b03f1d"/><stop offset="0.325" stop-color="#bc4420"/><stop offset="0.406" stop-color="#bc4420"/><stop offset="0.409" stop-color="#b030b0"/><stop offset="0.419" stop-color="#3050c0"/><stop offset="0.436" stop-color="#8a9a18"/><stop offset="0.683" stop-color="#8a9a18"/><stop offset="0.786" stop-color="#8a9a18"/><stop offset="0.863" stop-color="#8a9a18"/><stop offset="0.915" stop-color="#8a9a18"/><stop offset="0.941" stop-color="#8a9a18"/></linearGradient>
<linearGradient id="g38" gradientUnits="userSpaceOnUse" x1="367.0" y1="1012.9" x2="381.5" y2="1168.6"><stop offset="0.051" stop-color="#260d05"/><stop offset="0.080" stop-color="#742713"/><stop offset="0.162" stop-color="#903317"/><stop offset="0.249" stop-color="#b03f1d"/><stop offset="0.318" stop-color="#bc4420"/><stop offset="0.399" stop-color="#bc4420"/><stop offset="0.402" stop-color="#b030b0"/><stop offset="0.412" stop-color="#3050c0"/><stop offset="0.428" stop-color="#8a9a18"/><stop offset="0.680" stop-color="#8a9a18"/><stop offset="0.785" stop-color="#8a9a18"/><stop offset="0.864" stop-color="#8a9a18"/><stop offset="0.916" stop-color="#8a9a18"/><stop offset="0.943" stop-color="#8a9a18"/></linearGradient>
<linearGradient id="g39" gradientUnits="userSpaceOnUse" x1="373.0" y1="1011.4" x2="387.9" y2="1172.1"><stop offset="0.049" stop-color="#260d05"/><stop offset="0.077" stop-color="#742713"/><stop offset="0.158" stop-color="#903317"/><stop offset="0.244" stop-color="#b03f1d"/><stop offset="0.312" stop-color="#bc4420"/><stop offset="0.392" stop-color="#bc4420"/><stop offset="0.395" stop-color="#b030b0"/><stop offset="0.404" stop-color="#3050c0"/><stop offset="0.421" stop-color="#8a9a18"/><stop offset="0.678" stop-color="#8a9a18"/><stop offset="0.784" stop-color="#8a9a18"/><stop offset="0.864" stop-color="#8a9a18"/><stop offset="0.918" stop-color="#8a9a18"/><stop offset="0.944" stop-color="#8a9a18"/></linearGradient>
<linearGradient id="g40" gradientUnits="userSpaceOnUse" x1="379.0" y1="1009.9" x2="394.4" y2="1175.6"><stop offset="0.048" stop-color="#270d05"/><stop offset="0.075" stop-color="#752713"/><stop offset="0.155" stop-color="#913317"/><stop offset="0.240" stop-color="#b03f1d"/><stop offset="0.307" stop-color="#bc4420"/><stop offset="0.386" stop-color="#bc4420"/><stop offset="0.389" stop-color="#b030b0"/><stop offset="0.398" stop-color="#3050c0"/><stop offset="0.415" stop-color="#8a9a18"/><stop offset="0.675" stop-color="#8a9a18"/><stop offset="0.783" stop-color="#8a9a18"/><stop offset="0.865" stop-color="#8a9a18"/><stop offset="0.919" stop-color="#8a9a18"/><stop offset="0.946" stop-color="#8a9a18"/></linearGradient>
<linearGradient id="g41" gradientUnits="userSpaceOnUse" x1="385.0" y1="1008.4" x2="401.0" y2="1178.8"><stop offset="0.047" stop-color="#270d05"/><stop offset="0.073" stop-color="#752713"/><stop offset="0.152" stop-color="#913317"/><stop offset="0.236" stop-color="#b03f1d"/><stop offset="0.302" stop-color="#bc4420"/><stop offset="0.381" stop-color="#bc4420"/><stop offset="0.384" stop-color="#b030b0"/><stop offset="0.392" stop-color="#3050c0"/><stop offset="0.409" stop-color="#8a9a18"/><stop offset="0.673" stop-color="#8a9a18"/><stop offset="0.783" stop-color="#8a9a18"/><stop offset="0.865" stop-color="#8a9a18"/><stop offset="0.920" stop-color="#8a9a18"/><stop offset="0.948" stop-color="#8a9a18"/></linearGradient>
<linearGradient id="g42" gradientUnits="userSpaceOnUse" x1="391.0" y1="1006.9" x2="407.7" y2="1181.8"><stop offset="0.045" stop-color="#270d05"/><stop offset="0.071" stop-color="#752813"/><stop offset="0.150" stop-color="#913317"/><stop offset="0.232" stop-color="#b03f1d"/><stop offset="0.298" stop-color="#bc4420"/><stop offset="0.376" stop-color="#bc4420"/><stop offset="0.379" stop-color="#b030b0"/><stop offset="0.388" stop-color="#3050c0"/><stop offset="0.404" stop-color="#8a9a18"/><stop offset="0.671" stop-color="#8a9a18"/><stop offset="0.782" stop-color="#8a9a18"/><stop offset="0.866" stop-color="#8a9a18"/><stop offset="0.921" stop-color="#8a9a18"/><stop offset="0.949" stop-color="#8a9a18"/></linearGradient>
<linearGradient id="g43" gradientUnits="userSpaceOnUse" x1="397.0" y1="1005.4" x2="429.3" y2="1175.3"><stop offset="0.045" stop-color="#270d05"/><stop offset="0.071" stop-color="#752813"/><stop offset="0.151" stop-color="#913317"/><stop offset="0.236" stop-color="#b03f1d"/><stop offset="0.303" stop-color="#bc4420"/><stop offset="0.382" stop-color="#bc4420"/><stop offset="0.385" stop-color="#b030b0"/><stop offset="0.394" stop-color="#3050c0"/><stop offset="0.410" stop-color="#8a9a18"/><stop offset="0.674" stop-color="#8a9a18"/><stop offset="0.786" stop-color="#8a9a18"/><stop offset="0.868" stop-color="#899a19"/><stop offset="0.924" stop-color="#899a19"/><stop offset="0.951" stop-color="#899a19"/><stop offset="0.951" stop-color="#20a0c0"/><stop offset="0.957" stop-color="#c040b0"/><stop offset="0.965" stop-color="#2050c0"/></linearGradient>
<linearGradient id="g44" gradientUnits="userSpaceOnUse" x1="403.0" y1="1004.0" x2="435.0" y2="1174.5"><stop offset="0.045" stop-color="#270d05"/><stop offset="0.071" stop-color="#762813"/><stop offset="0.152" stop-color="#913317"/><stop offset="0.237" stop-color="#b03f1d"/><stop offset="0.306" stop-color="#bc4420"/><stop offset="0.386" stop-color="#bc4420"/><stop offset="0.389" stop-color="#b030b0"/><stop offset="0.397" stop-color="#3050c0"/><stop offset="0.414" stop-color="#8a9a18"/><stop offset="0.671" stop-color="#8a9a18"/><stop offset="0.784" stop-color="#8a9a19"/><stop offset="0.865" stop-color="#899a19"/><stop offset="0.920" stop-color="#879a1a"/><stop offset="0.947" stop-color="#879a1a"/><stop offset="0.947" stop-color="#20a0c0"/><stop offset="0.953" stop-color="#c040b0"/><stop offset="0.961" stop-color="#2050c0"/></linearGradient>
<linearGradient id="g45" gradientUnits="userSpaceOnUse" x1="409.0" y1="1002.5" x2="440.5" y2="1173.8"><stop offset="0.045" stop-color="#270d05"/><stop offset="0.071" stop-color="#762813"/><stop offset="0.153" stop-color="#913317"/><stop offset="0.239" stop-color="#b03f1d"/><stop offset="0.308" stop-color="#bc4420"/><stop offset="0.390" stop-color="#bc4420"/><stop offset="0.393" stop-color="#b030b0"/><stop offset="0.401" stop-color="#3050c0"/><stop offset="0.418" stop-color="#8a9b18"/><stop offset="0.668" stop-color="#8a9b18"/><stop offset="0.782" stop-color="#899b19"/><stop offset="0.863" stop-color="#889b1a"/><stop offset="0.916" stop-color="#869a1b"/><stop offset="0.943" stop-color="#869a1b"/><stop offset="0.943" stop-color="#20a0c0"/><stop offset="0.949" stop-color="#c040b0"/><stop offset="0.957" stop-color="#2050c0"/></linearGradient>
<linearGradient id="g46" gradientUnits="userSpaceOnUse" x1="415.0" y1="1001.0" x2="445.7" y2="1173.1"><stop offset="0.045" stop-color="#280d06"/><stop offset="0.071" stop-color="#762813"/><stop offset="0.154" stop-color="#923318"/><stop offset="0.241" stop-color="#b03e1c"/><stop offset="0.311" stop-color="#bc4420"/><stop offset="0.394" stop-color="#bc4420"/><stop offset="0.397" stop-color="#b030b0"/><stop offset="0.405" stop-color="#3050c0"/><stop offset="0.421" stop-color="#8a9b18"/><stop offset="0.666" stop-color="#8a9b18"/><stop offset="0.781" stop-color="#899b19"/><stop offset="0.861" stop-color="#879b1b"/><stop offset="0.914" stop-color="#849a1c"/><stop offset="0.940" stop-color="#849a1c"/><stop offset="0.940" stop-color="#20a0c0"/><stop offset="0.946" stop-color="#c040b0"/><stop offset="0.954" stop-color="#2050c0"/></linearGradient>
<linearGradient id="g47" gradientUnits="userSpaceOnUse" x1="421.0" y1="999.6" x2="450.8" y2="1172.5"><stop offset="0.045" stop-color="#280d06"/><stop offset="0.071" stop-color="#762813"/><stop offset="0.155" stop-color="#923318"/><stop offset="0.243" stop-color="#b03e1c"/><stop offset="0.313" stop-color="#bc4420"/><stop offset="0.398" stop-color="#bc4420"/><stop offset="0.401" stop-color="#b030b0"/><stop offset="0.409" stop-color="#3050c0"/><stop offset="0.425" stop-color="#8a9b18"/><stop offset="0.664" stop-color="#8a9b18"/><stop offset="0.780" stop-color="#899b1a"/><stop offset="0.858" stop-color="#869b1c"/><stop offset="0.911" stop-color="#839a1d"/><stop offset="0.937" stop-color="#839a1d"/><stop offset="0.937" stop-color="#20a0c0"/><stop offset="0.942" stop-color="#c040b0"/><stop offset="0.951" stop-color="#2050c0"/></linearGradient>
<linearGradient id="g48" gradientUnits="userSpaceOnUse" x1="427.0" y1="998.1" x2="455.8" y2="1172.1"><stop offset="0.045" stop-color="#280d06"/><stop offset="0.070" stop-color="#772813"/><stop offset="0.155" stop-color="#923318"/><stop offset="0.244" stop-color="#b03e1c"/><stop offset="0.316" stop-color="#bc4420"/><stop offset="0.401" stop-color="#bc4420"/><stop offset="0.404" stop-color="#b030b0"/><stop offset="0.412" stop-color="#3050c0"/><stop offset="0.428" stop-color="#8b9b19"/><stop offset="0.662" stop-color="#8b9b19"/><stop offset="0.779" stop-color="#889c1a"/><stop offset="0.856" stop-color="#869c1c"/><stop offset="0.908" stop-color="#81991e"/><stop offset="0.933" stop-color="#81991e"/><stop offset="0.933" stop-color="#20a0c0"/><stop offset="0.939" stop-color="#c040b0"/><stop offset="0.947" stop-color="#2050c0"/><stop offset="0.952" stop-color="#3f5020"/><stop offset="0.952" stop-color="#4e6219"/><stop offset="0.952" stop-color="#5d6b12"/><stop offset="0.952" stop-color="#606c12"/><stop offset="0.952" stop-color="#49520a"/><stop offset="0.952" stop-color="#272909"/><stop offset="0.952" stop-color="#1890c0"/><stop offset="0.952" stop-color="#c040c0"/></linearGradient>
<linearGradient id="g49" gradientUnits="userSpaceOnUse" x1="433.0" y1="996.7" x2="461.3" y2="1171.6"><stop offset="0.045" stop-color="#280d06"/><stop offset="0.070" stop-color="#772913"/><stop offset="0.156" stop-color="#923318"/><stop offset="0.246" stop-color="#b03e1c"/><stop offset="0.318" stop-color="#bc4420"/><stop offset="0.404" stop-color="#bc4420"/><stop offset="0.407" stop-color="#b030b0"/><stop offset="0.416" stop-color="#3050c0"/><stop offset="0.431" stop-color="#8b9b19"/><stop offset="0.659" stop-color="#8b9b19"/><stop offset="0.777" stop-color="#889c1b"/><stop offset="0.853" stop-color="#859c1d"/><stop offset="0.904" stop-color="#809920"/><stop offset="0.930" stop-color="#809920"/><stop offset="0.930" stop-color="#20a0c0"/><stop offset="0.935" stop-color="#c040b0"/><stop offset="0.943" stop-color="#2050c0"/><stop offset="0.948" stop-color="#3f5124"/><stop offset="0.948" stop-color="#4d641b"/><stop offset="0.948" stop-color="#5e6c12"/><stop offset="0.948" stop-color="#616d12"/><stop offset="0.948" stop-color="#4b540b"/><stop offset="0.948" stop-color="#292b09"/><stop offset="0.948" stop-color="#1890c0"/><stop offset="0.948" stop-color="#c040c0"/></linearGradient>
<linearGradient id="g50" gradientUnits="userSpaceOnUse" x1="439.0" y1="995.2" x2="467.5" y2="1170.9"><stop offset="0.044" stop-color="#280d06"/><stop offset="0.070" stop-color="#772913"/><stop offset="0.156" stop-color="#923318"/><stop offset="0.247" stop-color="#b03e1c"/><stop offset="0.320" stop-color="#bc4420"/><stop offset="0.408" stop-color="#bc4420"/><stop offset="0.410" stop-color="#b030b0"/><stop offset="0.419" stop-color="#3050c0"/><stop offset="0.434" stop-color="#8b9b19"/><stop offset="0.657" stop-color="#8b9b19"/><stop offset="0.775" stop-color="#889c1b"/><stop offset="0.850" stop-color="#849c1e"/><stop offset="0.901" stop-color="#7e9921"/><stop offset="0.926" stop-color="#7e9921"/><stop offset="0.926" stop-color="#20a0c0"/><stop offset="0.931" stop-color="#c040b0"/><stop offset="0.940" stop-color="#2050c0"/><stop offset="0.944" stop-color="#3f5328"/><stop offset="0.944" stop-color="#4d651c"/><stop offset="0.944" stop-color="#5f6d12"/><stop offset="0.944" stop-color="#626f13"/><stop offset="0.944" stop-color="#4c560b"/><stop offset="0.944" stop-color="#2a2c0a"/><stop offset="0.944" stop-color="#1890c0"/><stop offset="0.947" stop-color="#c040c0"/></linearGradient>
<linearGradient id="g51" gradientUnits="userSpaceOnUse" x1="445.0" y1="993.7" x2="473.7" y2="1170.3"><stop offset="0.044" stop-color="#280d06"/><stop offset="0.069" stop-color="#782913"/><stop offset="0.157" stop-color="#923318"/><stop offset="0.249" stop-color="#b03e1c"/><stop offset="0.322" stop-color="#bc4420"/><stop offset="0.411" stop-color="#bc4420"/><stop offset="0.413" stop-color="#b030b0"/><stop offset="0.422" stop-color="#3050c0"/><stop offset="0.437" stop-color="#8b9c19"/><stop offset="0.654" stop-color="#8b9c19"/><stop offset="0.773" stop-color="#889c1b"/><stop offset="0.848" stop-color="#839c1f"/><stop offset="0.897" stop-color="#7d9922"/><stop offset="0.922" stop-color="#7d9922"/><stop offset="0.922" stop-color="#20a0c0"/><stop offset="0.927" stop-color="#c040b0"/><stop offset="0.935" stop-color="#2050c0"/><stop offset="0.941" stop-color="#3f542c"/><stop offset="0.941" stop-color="#4c671e"/><stop offset="0.941" stop-color="#5f6e12"/><stop offset="0.941" stop-color="#637013"/><stop offset="0.941" stop-color="#4e580c"/><stop offset="0.941" stop-color="#2b2e0a"/><stop offset="0.941" stop-color="#1890c0"/><stop offset="0.948" stop-color="#c040c0"/></linearGradient>
<linearGradient id="g52" gradientUnits="userSpaceOnUse" x1="451.0" y1="992.3" x2="479.5" y2="1169.8"><stop offset="0.044" stop-color="#290d06"/><stop offset="0.069" stop-color="#782913"/><stop offset="0.157" stop-color="#933318"/><stop offset="0.250" stop-color="#b03e1c"/><stop offset="0.324" stop-color="#bc4420"/><stop offset="0.414" stop-color="#bc4420"/><stop offset="0.416" stop-color="#b030b0"/><stop offset="0.425" stop-color="#3050c0"/><stop offset="0.440" stop-color="#8b9c19"/><stop offset="0.652" stop-color="#8b9c19"/><stop offset="0.771" stop-color="#879d1c"/><stop offset="0.844" stop-color="#839d1f"/><stop offset="0.893" stop-color="#7b9923"/><stop offset="0.917" stop-color="#7b9923"/><stop offset="0.917" stop-color="#20a0c0"/><stop offset="0.923" stop-color="#c040b0"/><stop offset="0.931" stop-color="#2050c0"/><stop offset="0.937" stop-color="#3e5530"/><stop offset="0.937" stop-color="#4c681f"/><stop offset="0.937" stop-color="#607013"/><stop offset="0.937" stop-color="#647113"/><stop offset="0.937" stop-color="#4f5a0c"/><stop offset="0.937" stop-color="#2d2f0a"/><stop offset="0.940" stop-color="#1890c0"/><stop offset="0.948" stop-color="#c040c0"/></linearGradient>
<linearGradient id="g53" gradientUnits="userSpaceOnUse" x1="457.0" y1="990.8" x2="485.1" y2="1169.5"><stop offset="0.044" stop-color="#290e06"/><stop offset="0.069" stop-color="#782914"/><stop offset="0.158" stop-color="#933418"/><stop offset="0.251" stop-color="#b03e1c"/><stop offset="0.325" stop-color="#bc4420"/><stop offset="0.416" stop-color="#bc4420"/><stop offset="0.419" stop-color="#b030b0"/><stop offset="0.427" stop-color="#3050c0"/><stop offset="0.442" stop-color="#8b9c19"/><stop offset="0.649" stop-color="#8b9c19"/><stop offset="0.769" stop-color="#879d1c"/><stop offset="0.841" stop-color="#829d20"/><stop offset="0.889" stop-color="#7a9924"/><stop offset="0.913" stop-color="#7a9924"/><stop offset="0.913" stop-color="#20a0c0"/><stop offset="0.918" stop-color="#c040b0"/><stop offset="0.927" stop-color="#2050c0"/><stop offset="0.932" stop-color="#3e5735"/><stop offset="0.933" stop-color="#4b6a21"/><stop offset="0.933" stop-color="#607113"/><stop offset="0.934" stop-color="#657314"/><stop offset="0.934" stop-color="#515b0d"/><stop offset="0.934" stop-color="#2e310a"/><stop offset="0.940" stop-color="#1890c0"/><stop offset="0.948" stop-color="#c040c0"/></linearGradient>
<linearGradient id="g54" gradientUnits="userSpaceOnUse" x1="463.0" y1="989.4" x2="490.5" y2="1169.4"><stop offset="0.043" stop-color="#290e06"/><stop offset="0.068" stop-color="#782914"/><stop offset="0.158" stop-color="#933418"/><stop offset="0.252" stop-color="#b03e1c"/><stop offset="0.327" stop-color="#bc4420"/><stop offset="0.419" stop-color="#bc4420"/><stop offset="0.421" stop-color="#b030b0"/><stop offset="0.429" stop-color="#3050c0"/><stop offset="0.444" stop-color="#8b9c19"/><stop offset="0.645" stop-color="#8b9c19"/><stop offset="0.766" stop-color="#879d1c"/><stop offset="0.837" stop-color="#819d21"/><stop offset="0.884" stop-color="#789925"/><stop offset="0.908" stop-color="#789925"/><stop offset="0.908" stop-color="#20a0c0"/><stop offset="0.914" stop-color="#c040b0"/><stop offset="0.922" stop-color="#2050c0"/><stop offset="0.928" stop-color="#3e5839"/><stop offset="0.929" stop-color="#4b6b23"/><stop offset="0.931" stop-color="#617213"/><stop offset="0.933" stop-color="#667414"/><stop offset="0.934" stop-color="#535d0d"/><stop offset="0.935" stop-color="#2f330b"/><stop offset="0.940" stop-color="#1890c0"/><stop offset="0.948" stop-color="#c040c0"/></linearGradient>
<linearGradient id="g55" gradientUnits="userSpaceOnUse" x1="469.0" y1="987.9" x2="495.7" y2="1169.6"><stop offset="0.043" stop-color="#290e06"/><stop offset="0.068" stop-color="#792914"/><stop offset="0.158" stop-color="#933418"/><stop offset="0.252" stop-color="#b03e1c"/><stop offset="0.328" stop-color="#bc4420"/><stop offset="0.420" stop-color="#bc4420"/><stop offset="0.423" stop-color="#b030b0"/><stop offset="0.431" stop-color="#3050c0"/><stop offset="0.446" stop-color="#8b9c19"/><stop offset="0.642" stop-color="#8b9c19"/><stop offset="0.763" stop-color="#869e1d"/><stop offset="0.833" stop-color="#809e22"/><stop offset="0.880" stop-color="#779926"/><stop offset="0.903" stop-color="#779926"/><stop offset="0.903" stop-color="#20a0c0"/><stop offset="0.908" stop-color="#c040b0"/><stop offset="0.916" stop-color="#2050c0"/><stop offset="0.922" stop-color="#3e593d"/><stop offset="0.926" stop-color="#4a6d24"/><stop offset="0.929" stop-color="#627313"/><stop offset="0.931" stop-color="#677514"/><stop offset="0.934" stop-color="#545f0e"/><stop offset="0.935" stop-color="#31340b"/><stop offset="0.941" stop-color="#1890c0"/><stop offset="0.949" stop-color="#c040c0"/></linearGradient>
<linearGradient id="g56" gradientUnits="userSpaceOnUse" x1="475.0" y1="986.5" x2="500.7" y2="1170.0"><stop offset="0.043" stop-color="#290e06"/><stop offset="0.067" stop-color="#792914"/><stop offset="0.158" stop-color="#933418"/><stop offset="0.252" stop-color="#b03e1c"/><stop offset="0.328" stop-color="#bc4420"/><stop offset="0.422" stop-color="#bc4420"/><stop offset="0.424" stop-color="#b030b0"/><stop offset="0.432" stop-color="#3050c0"/><stop offset="0.447" stop-color="#8b9d19"/><stop offset="0.638" stop-color="#8b9d19"/><stop offset="0.759" stop-color="#869e1d"/><stop offset="0.828" stop-color="#809e22"/><stop offset="0.874" stop-color="#759927"/><stop offset="0.897" stop-color="#759927"/><stop offset="0.897" stop-color="#20a0c0"/><stop offset="0.902" stop-color="#c040b0"/><stop offset="0.910" stop-color="#2050c0"/><stop offset="0.917" stop-color="#3e5b41"/><stop offset="0.922" stop-color="#4a6e26"/><stop offset="0.926" stop-color="#627514"/><stop offset="0.930" stop-color="#687715"/><stop offset="0.934" stop-color="#56610e"/><stop offset="0.936" stop-color="#32360b"/><stop offset="0.941" stop-color="#1890c0"/><stop offset="0.949" stop-color="#c040c0"/></linearGradient>
<linearGradient id="g57" gradientUnits="userSpaceOnUse" x1="481.0" y1="985.0" x2="505.5" y2="1170.5"><stop offset="0.042" stop-color="#290e06"/><stop offset="0.066" stop-color="#792a14"/><stop offset="0.157" stop-color="#933418"/><stop offset="0.253" stop-color="#b03e1c"/><stop offset="0.329" stop-color="#bc4420"/><stop offset="0.423" stop-color="#bc4420"/><stop offset="0.425" stop-color="#b030b0"/><stop offset="0.433" stop-color="#3050c0"/><stop offset="0.448" stop-color="#8b9d19"/><stop offset="0.634" stop-color="#8b9d19"/><stop offset="0.755" stop-color="#869e1e"/><stop offset="0.823" stop-color="#7f9e23"/><stop offset="0.869" stop-color="#749929"/><stop offset="0.891" stop-color="#749929"/><stop offset="0.891" stop-color="#20a0c0"/><stop offset="0.897" stop-color="#c040b0"/><stop offset="0.905" stop-color="#2050c0"/><stop offset="0.911" stop-color="#3e5c45"/><stop offset="0.918" stop-color="#4a7027"/><stop offset="0.923" stop-color="#637614"/><stop offset="0.928" stop-color="#697815"/><stop offset="0.934" stop-color="#57630e"/><stop offset="0.936" stop-color="#33370b"/><stop offset="0.942" stop-color="#1890c0"/><stop offset="0.950" stop-color="#c040c0"/></linearGradient>
<linearGradient id="g58" gradientUnits="userSpaceOnUse" x1="487.0" y1="983.6" x2="509.9" y2="1171.3"><stop offset="0.042" stop-color="#2a0e06"/><stop offset="0.066" stop-color="#792a14"/><stop offset="0.157" stop-color="#943418"/><stop offset="0.252" stop-color="#b03e1c"/><stop offset="0.329" stop-color="#bc4420"/><stop offset="0.423" stop-color="#bc4420"/><stop offset="0.426" stop-color="#b030b0"/><stop offset="0.434" stop-color="#3050c0"/><stop offset="0.448" stop-color="#8b9d19"/><stop offset="0.629" stop-color="#8b9d19"/><stop offset="0.752" stop-color="#869e1e"/><stop offset="0.819" stop-color="#7e9e24"/><stop offset="0.863" stop-color="#72992a"/><stop offset="0.886" stop-color="#72992a"/><stop offset="0.886" stop-color="#20a0c0"/><stop offset="0.891" stop-color="#c040b0"/><stop offset="0.899" stop-color="#2050c0"/><stop offset="0.906" stop-color="#3d5e4a"/><stop offset="0.914" stop-color="#497129"/><stop offset="0.920" stop-color="#637714"/><stop offset="0.927" stop-color="#6a7a15"/><stop offset="0.934" stop-color="#59640f"/><stop offset="0.937" stop-color="#35390b"/><stop offset="0.942" stop-color="#1890c0"/><stop offset="0.950" stop-color="#c040c0"/></linearGradient>
<linearGradient id="g59" gradientUnits="userSpaceOnUse" x1="493.0" y1="982.2" x2="514.0" y2="1172.1"><stop offset="0.042" stop-color="#2a0e06"/><stop offset="0.065" stop-color="#7a2a14"/><stop offset="0.157" stop-color="#943418"/><stop offset="0.252" stop-color="#b03e1c"/><stop offset="0.329" stop-color="#bc4420"/><stop offset="0.424" stop-color="#bc4420"/><stop offset="0.426" stop-color="#b030b0"/><stop offset="0.434" stop-color="#3050c0"/><stop offset="0.448" stop-color="#8c9d1a"/><stop offset="0.625" stop-color="#8c9d1a"/><stop offset="0.748" stop-color="#859f1e"/><stop offset="0.814" stop-color="#7d9f25"/><stop offset="0.858" stop-color="#71982b"/><stop offset="0.880" stop-color="#71982b"/><stop offset="0.880" stop-color="#20a0c0"/><stop offset="0.886" stop-color="#c040b0"/><stop offset="0.893" stop-color="#2050c0"/><stop offset="0.900" stop-color="#3d5f4e"/><stop offset="0.910" stop-color="#49732b"/><stop offset="0.918" stop-color="#647815"/><stop offset="0.926" stop-color="#6b7b16"/><stop offset="0.934" stop-color="#5b660f"/><stop offset="0.938" stop-color="#363b0c"/><stop offset="0.943" stop-color="#1890c0"/><stop offset="0.951" stop-color="#c040c0"/></linearGradient>
<linearGradient id="g60" gradientUnits="userSpaceOnUse" x1="499.0" y1="980.8" x2="518.5" y2="1173.0"><stop offset="0.041" stop-color="#2a0e06"/><stop offset="0.064" stop-color="#7a2a14"/><stop offset="0.156" stop-color="#943418"/><stop offset="0.252" stop-color="#b03e1c"/><stop offset="0.328" stop-color="#bc4420"/><stop offset="0.424" stop-color="#bc4420"/><stop offset="0.426" stop-color="#b030b0"/><stop offset="0.434" stop-color="#3050c0"/><stop offset="0.448" stop-color="#8c9d1a"/><stop offset="0.621" stop-color="#8c9d1a"/><stop offset="0.745" stop-color="#859f1f"/><stop offset="0.810" stop-color="#7d9f25"/><stop offset="0.854" stop-color="#6f982c"/><stop offset="0.876" stop-color="#6f982c"/><stop offset="0.876" stop-color="#20a0c0"/><stop offset="0.881" stop-color="#c040b0"/><stop offset="0.889" stop-color="#2050c0"/><stop offset="0.896" stop-color="#3d6052"/><stop offset="0.907" stop-color="#48742c"/><stop offset="0.916" stop-color="#657915"/><stop offset="0.925" stop-color="#6c7c16"/><stop offset="0.934" stop-color="#5c6810"/><stop offset="0.938" stop-color="#373c0c"/><stop offset="0.943" stop-color="#1890c0"/><stop offset="0.951" stop-color="#c040c0"/></linearGradient>
<linearGradient id="g61" gradientUnits="userSpaceOnUse" x1="505.0" y1="979.3" x2="523.8" y2="1173.7"><stop offset="0.041" stop-color="#2a0e06"/><stop offset="0.064" stop-color="#7a2a14"/><stop offset="0.155" stop-color="#943418"/><stop offset="0.251" stop-color="#b03e1c"/><stop offset="0.328" stop-color="#bc4420"/><stop offset="0.424" stop-color="#bc4420"/><stop offset="0.426" stop-color="#b030b0"/><stop offset="0.434" stop-color="#3050c0"/><stop offset="0.448" stop-color="#8c9e1a"/><stop offset="0.617" stop-color="#8c9e1a"/><stop offset="0.741" stop-color="#859f1f"/><stop offset="0.806" stop-color="#7c9f26"/><stop offset="0.849" stop-color="#6e982d"/><stop offset="0.871" stop-color="#6e982d"/><stop offset="0.871" stop-color="#20a0c0"/><stop offset="0.876" stop-color="#c040b0"/><stop offset="0.884" stop-color="#2050c0"/><stop offset="0.891" stop-color="#3d6256"/><stop offset="0.904" stop-color="#48762e"/><stop offset="0.914" stop-color="#657b15"/><stop offset="0.924" stop-color="#6e7e16"/><stop offset="0.934" stop-color="#5e6a10"/><stop offset="0.939" stop-color="#393e0c"/><stop offset="0.944" stop-color="#1890c0"/><stop offset="0.952" stop-color="#c040c0"/></linearGradient>
<linearGradient id="g62" gradientUnits="userSpaceOnUse" x1="511.0" y1="977.9" x2="529.3" y2="1174.8"><stop offset="0.040" stop-color="#2a0e06"/><stop offset="0.063" stop-color="#7a2a14"/><stop offset="0.154" stop-color="#943418"/><stop offset="0.250" stop-color="#b03e1c"/><stop offset="0.327" stop-color="#bc4420"/><stop offset="0.423" stop-color="#bc4420"/><stop offset="0.425" stop-color="#b030b0"/><stop offset="0.433" stop-color="#3050c0"/><stop offset="0.447" stop-color="#8c9e1a"/><stop offset="0.612" stop-color="#8c9e1a"/><stop offset="0.737" stop-color="#84a01f"/><stop offset="0.801" stop-color="#7ba027"/><stop offset="0.843" stop-color="#6c982e"/><stop offset="0.865" stop-color="#6c982e"/><stop offset="0.865" stop-color="#20a0c0"/><stop offset="0.870" stop-color="#c040b0"/><stop offset="0.877" stop-color="#2050c0"/><stop offset="0.885" stop-color="#3d635a"/><stop offset="0.900" stop-color="#47772f"/><stop offset="0.911" stop-color="#667c15"/><stop offset="0.922" stop-color="#6f7f16"/><stop offset="0.934" stop-color="#5f6c11"/><stop offset="0.940" stop-color="#3a3f0c"/><stop offset="0.945" stop-color="#1890c0"/><stop offset="0.952" stop-color="#c040c0"/></linearGradient>
<linearGradient id="g63" gradientUnits="userSpaceOnUse" x1="517.0" y1="976.5" x2="535.0" y2="1176.1"><stop offset="0.040" stop-color="#2a0e06"/><stop offset="0.062" stop-color="#7a2a14"/><stop offset="0.153" stop-color="#943418"/><stop offset="0.249" stop-color="#b03e1c"/><stop offset="0.325" stop-color="#bc4420"/><stop offset="0.421" stop-color="#bc4420"/><stop offset="0.424" stop-color="#b030b0"/><stop offset="0.431" stop-color="#3050c0"/><stop offset="0.445" stop-color="#8c9e1a"/><stop offset="0.606" stop-color="#8c9e1a"/><stop offset="0.731" stop-color="#84a020"/><stop offset="0.795" stop-color="#7aa028"/><stop offset="0.837" stop-color="#6b982f"/><stop offset="0.858" stop-color="#6b982f"/><stop offset="0.858" stop-color="#20a0c0"/><stop offset="0.863" stop-color="#c040b0"/><stop offset="0.870" stop-color="#2050c0"/><stop offset="0.878" stop-color="#3d645e"/><stop offset="0.895" stop-color="#477931"/><stop offset="0.908" stop-color="#677d16"/><stop offset="0.921" stop-color="#708017"/><stop offset="0.934" stop-color="#616e11"/><stop offset="0.940" stop-color="#3b410d"/><stop offset="0.945" stop-color="#1890c0"/><stop offset="0.953" stop-color="#c040c0"/></linearGradient>
<linearGradient id="g64" gradientUnits="userSpaceOnUse" x1="523.0" y1="975.1" x2="540.6" y2="1177.6"><stop offset="0.039" stop-color="#2b0e06"/><stop offset="0.062" stop-color="#7b2a14"/><stop offset="0.152" stop-color="#943418"/><stop offset="0.247" stop-color="#b03e1c"/><stop offset="0.323" stop-color="#bc4420"/><stop offset="0.420" stop-color="#bc4420"/><stop offset="0.422" stop-color="#b030b0"/><stop offset="0.429" stop-color="#3050c0"/><stop offset="0.443" stop-color="#8c9e1a"/><stop offset="0.600" stop-color="#8c9e1a"/><stop offset="0.725" stop-color="#83a021"/><stop offset="0.787" stop-color="#78a02a"/><stop offset="0.829" stop-color="#699732"/><stop offset="0.850" stop-color="#699732"/><stop offset="0.850" stop-color="#20a0c0"/><stop offset="0.855" stop-color="#c040b0"/><stop offset="0.863" stop-color="#2050c0"/><stop offset="0.871" stop-color="#3c6663"/><stop offset="0.890" stop-color="#467a33"/><stop offset="0.904" stop-color="#677e16"/><stop offset="0.919" stop-color="#718217"/><stop offset="0.934" stop-color="#636f12"/><stop offset="0.941" stop-color="#3d430d"/><stop offset="0.946" stop-color="#1890c0"/><stop offset="0.953" stop-color="#c040c0"/></linearGradient>
<linearGradient id="g65" gradientUnits="userSpaceOnUse" x1="529.0" y1="973.7" x2="546.4" y2="1179.2"><stop offset="0.039" stop-color="#2b0e06"/><stop offset="0.061" stop-color="#7b2a14"/><stop offset="0.150" stop-color="#943418"/><stop offset="0.245" stop-color="#b03e1c"/><stop offset="0.321" stop-color="#bc4420"/><stop offset="0.418" stop-color="#bc4420"/><stop offset="0.420" stop-color="#b030b0"/><stop offset="0.427" stop-color="#3050c0"/><stop offset="0.440" stop-color="#8c9e1a"/><stop offset="0.594" stop-color="#8c9e1a"/><stop offset="0.717" stop-color="#80a022"/><stop offset="0.778" stop-color="#759f2f"/><stop offset="0.819" stop-color="#669637"/><stop offset="0.843" stop-color="#679537"/><stop offset="0.843" stop-color="#20a0c0"/><stop offset="0.848" stop-color="#c040b0"/><stop offset="0.855" stop-color="#2050c0"/><stop offset="0.864" stop-color="#3c6767"/><stop offset="0.884" stop-color="#467c34"/><stop offset="0.901" stop-color="#687f16"/><stop offset="0.917" stop-color="#728317"/><stop offset="0.934" stop-color="#647112"/><stop offset="0.942" stop-color="#3e440d"/><stop offset="0.947" stop-color="#1890c0"/><stop offset="0.954" stop-color="#c040c0"/></linearGradient>
<linearGradient id="g66" gradientUnits="userSpaceOnUse" x1="535.0" y1="972.2" x2="552.1" y2="1180.9"><stop offset="0.038" stop-color="#2b0e06"/><stop offset="0.060" stop-color="#7b2a14"/><stop offset="0.149" stop-color="#943418"/><stop offset="0.244" stop-color="#b03e1c"/><stop offset="0.319" stop-color="#bc4420"/><stop offset="0.416" stop-color="#bc4420"/><stop offset="0.418" stop-color="#b030b0"/><stop offset="0.425" stop-color="#3050c0"/><stop offset="0.438" stop-color="#8c9e1a"/><stop offset="0.589" stop-color="#8b9e1a"/><stop offset="0.709" stop-color="#7da024"/><stop offset="0.770" stop-color="#729f33"/><stop offset="0.810" stop-color="#64953c"/><stop offset="0.836" stop-color="#64933c"/><stop offset="0.836" stop-color="#20a0c0"/><stop offset="0.840" stop-color="#c040b0"/><stop offset="0.848" stop-color="#2050c0"/><stop offset="0.857" stop-color="#3c696b"/><stop offset="0.879" stop-color="#467d36"/><stop offset="0.898" stop-color="#688117"/><stop offset="0.916" stop-color="#738518"/><stop offset="0.934" stop-color="#667312"/><stop offset="0.943" stop-color="#3f460d"/><stop offset="0.948" stop-color="#1890c0"/><stop offset="0.955" stop-color="#c040c0"/></linearGradient>
<linearGradient id="g67" gradientUnits="userSpaceOnUse" x1="541.0" y1="970.8" x2="557.8" y2="1182.5"><stop offset="0.038" stop-color="#2b0e06"/><stop offset="0.060" stop-color="#7b2a14"/><stop offset="0.148" stop-color="#943418"/><stop offset="0.242" stop-color="#b03e1c"/><stop offset="0.317" stop-color="#bc4420"/><stop offset="0.414" stop-color="#bc4420"/><stop offset="0.416" stop-color="#b030b0"/><stop offset="0.423" stop-color="#3050c0"/><stop offset="0.436" stop-color="#8c9e1b"/><stop offset="0.584" stop-color="#8b9e1b"/><stop offset="0.702" stop-color="#7aa026"/><stop offset="0.762" stop-color="#6f9e38"/><stop offset="0.802" stop-color="#619341"/><stop offset="0.829" stop-color="#629141"/><stop offset="0.829" stop-color="#20a0c0"/><stop offset="0.834" stop-color="#c040b0"/><stop offset="0.841" stop-color="#2050c0"/><stop offset="0.850" stop-color="#3c6a6f"/><stop offset="0.875" stop-color="#457f37"/><stop offset="0.894" stop-color="#698217"/><stop offset="0.914" stop-color="#748618"/><stop offset="0.934" stop-color="#677513"/><stop offset="0.944" stop-color="#41470d"/><stop offset="0.948" stop-color="#1890c0"/><stop offset="0.955" stop-color="#c040c0"/></linearGradient>
<linearGradient id="g68" gradientUnits="userSpaceOnUse" x1="547.0" y1="969.4" x2="563.6" y2="1183.9"><stop offset="0.037" stop-color="#2b0e06"/><stop offset="0.059" stop-color="#7b2a14"/><stop offset="0.147" stop-color="#943418"/><stop offset="0.241" stop-color="#b03e1c"/><stop offset="0.316" stop-color="#bc4420"/><stop offset="0.413" stop-color="#bc4420"/><stop offset="0.415" stop-color="#b030b0"/><stop offset="0.422" stop-color="#3050c0"/><stop offset="0.434" stop-color="#8c9e1b"/><stop offset="0.579" stop-color="#8b9e1b"/><stop offset="0.695" stop-color="#77a027"/><stop offset="0.754" stop-color="#6b9e3c"/><stop offset="0.794" stop-color="#5f9246"/><stop offset="0.823" stop-color="#609046"/><stop offset="0.823" stop-color="#20a0c0"/><stop offset="0.827" stop-color="#c040b0"/><stop offset="0.834" stop-color="#2050c0"/><stop offset="0.844" stop-color="#3c6b73"/><stop offset="0.871" stop-color="#458039"/><stop offset="0.892" stop-color="#6a8317"/><stop offset="0.913" stop-color="#758718"/><stop offset="0.934" stop-color="#697713"/><stop offset="0.944" stop-color="#42490e"/><stop offset="0.949" stop-color="#1890c0"/><stop offset="0.956" stop-color="#c040c0"/></linearGradient>
<linearGradient id="g69" gradientUnits="userSpaceOnUse" x1="553.0" y1="968.0" x2="569.5" y2="1185.4"><stop offset="0.037" stop-color="#2b0e06"/><stop offset="0.058" stop-color="#7b2b14"/><stop offset="0.146" stop-color="#943418"/><stop offset="0.239" stop-color="#af3e1c"/><stop offset="0.314" stop-color="#bc4420"/><stop offset="0.411" stop-color="#bc4420"/><stop offset="0.413" stop-color="#b030b0"/><stop offset="0.420" stop-color="#3050c0"/><stop offset="0.433" stop-color="#8c9e1b"/><stop offset="0.574" stop-color="#8b9e1b"/><stop offset="0.688" stop-color="#75a029"/><stop offset="0.747" stop-color="#689d41"/><stop offset="0.787" stop-color="#5c914a"/><stop offset="0.817" stop-color="#5e8e4a"/><stop offset="0.817" stop-color="#20a0c0"/><stop offset="0.821" stop-color="#c040b0"/><stop offset="0.828" stop-color="#2050c0"/><stop offset="0.839" stop-color="#3c6d78"/><stop offset="0.867" stop-color="#44823b"/><stop offset="0.889" stop-color="#6a8417"/><stop offset="0.911" stop-color="#768919"/><stop offset="0.934" stop-color="#6b7814"/><stop offset="0.945" stop-color="#434b0e"/><stop offset="0.950" stop-color="#1890c0"/><stop offset="0.957" stop-color="#c040c0"/></linearGradient>
<linearGradient id="g70" gradientUnits="userSpaceOnUse" x1="559.0" y1="966.6" x2="575.7" y2="1187.0"><stop offset="0.036" stop-color="#2c0e06"/><stop offset="0.058" stop-color="#7c2b14"/><stop offset="0.144" stop-color="#943418"/><stop offset="0.238" stop-color="#af3e1c"/><stop offset="0.312" stop-color="#bc4420"/><stop offset="0.409" stop-color="#bc4420"/><stop offset="0.412" stop-color="#b030b0"/><stop offset="0.418" stop-color="#3050c0"/><stop offset="0.431" stop-color="#8c9e1b"/><stop offset="0.570" stop-color="#8b9e1b"/><stop offset="0.682" stop-color="#72a02a"/><stop offset="0.740" stop-color="#659d45"/><stop offset="0.779" stop-color="#5a8f4f"/><stop offset="0.811" stop-color="#5c8c4f"/><stop offset="0.811" stop-color="#20a0c0"/><stop offset="0.815" stop-color="#c040b0"/><stop offset="0.822" stop-color="#2050c0"/><stop offset="0.832" stop-color="#3b6e7c"/><stop offset="0.862" stop-color="#44833c"/><stop offset="0.886" stop-color="#6b8618"/><stop offset="0.910" stop-color="#778a19"/><stop offset="0.934" stop-color="#6c7a14"/><stop offset="0.946" stop-color="#454c0e"/><stop offset="0.950" stop-color="#1890c0"/><stop offset="0.957" stop-color="#c040c0"/></linearGradient>
<linearGradient id="g71" gradientUnits="userSpaceOnUse" x1="565.0" y1="965.2" x2="582.1" y2="1188.6"><stop offset="0.036" stop-color="#2c0e06"/><stop offset="0.057" stop-color="#7c2b14"/><stop offset="0.143" stop-color="#943418"/><stop offset="0.236" stop-color="#af3e1c"/><stop offset="0.310" stop-color="#bc4420"/><stop offset="0.408" stop-color="#bc4420"/><stop offset="0.410" stop-color="#b030b0"/><stop offset="0.417" stop-color="#3050c0"/><stop offset="0.429" stop-color="#8c9e1c"/><stop offset="0.565" stop-color="#8a9e1c"/><stop offset="0.675" stop-color="#6fa02c"/><stop offset="0.732" stop-color="#629c4a"/><stop offset="0.771" stop-color="#588e54"/><stop offset="0.804" stop-color="#5a8a54"/><stop offset="0.804" stop-color="#20a0c0"/><stop offset="0.809" stop-color="#c040b0"/><stop offset="0.816" stop-color="#2050c0"/><stop offset="0.826" stop-color="#3b6f80"/><stop offset="0.858" stop-color="#43853e"/><stop offset="0.883" stop-color="#6b8718"/><stop offset="0.909" stop-color="#788b19"/><stop offset="0.934" stop-color="#6e7c15"/><stop offset="0.947" stop-color="#464e0e"/><stop offset="0.951" stop-color="#1890c0"/><stop offset="0.958" stop-color="#c040c0"/></linearGradient>
<linearGradient id="g72" gradientUnits="userSpaceOnUse" x1="571.0" y1="963.8" x2="588.7" y2="1190.2"><stop offset="0.035" stop-color="#2c0e06"/><stop offset="0.056" stop-color="#7c2b14"/><stop offset="0.142" stop-color="#943418"/><stop offset="0.234" stop-color="#af3e1c"/><stop offset="0.309" stop-color="#bc4420"/><stop offset="0.406" stop-color="#bc4420"/><stop offset="0.408" stop-color="#b030b0"/><stop offset="0.415" stop-color="#3050c0"/><stop offset="0.427" stop-color="#8b9f1c"/><stop offset="0.560" stop-color="#8a9f1c"/><stop offset="0.668" stop-color="#6ca02e"/><stop offset="0.725" stop-color="#5e9b4f"/><stop offset="0.763" stop-color="#558d59"/><stop offset="0.798" stop-color="#578859"/><stop offset="0.798" stop-color="#20a0c0"/><stop offset="0.803" stop-color="#c040b0"/><stop offset="0.809" stop-color="#2050c0"/><stop offset="0.820" stop-color="#3b7184"/><stop offset="0.854" stop-color="#43863f"/><stop offset="0.880" stop-color="#6c8818"/><stop offset="0.907" stop-color="#798d1a"/><stop offset="0.934" stop-color="#6f7e15"/><stop offset="0.947" stop-color="#474f0f"/><stop offset="0.952" stop-color="#1890c0"/><stop offset="0.958" stop-color="#c040c0"/></linearGradient>
<linearGradient id="g73" gradientUnits="userSpaceOnUse" x1="577.0" y1="962.4" x2="595.3" y2="1191.7"><stop offset="0.035" stop-color="#2c0f06"/><stop offset="0.056" stop-color="#7c2b15"/><stop offset="0.141" stop-color="#953418"/><stop offset="0.233" stop-color="#af3e1c"/><stop offset="0.307" stop-color="#bc4420"/><stop offset="0.404" stop-color="#bc4420"/><stop offset="0.406" stop-color="#b030b0"/><stop offset="0.413" stop-color="#3050c0"/><stop offset="0.424" stop-color="#8b9f1c"/><stop offset="0.555" stop-color="#8a9f1c"/><stop offset="0.662" stop-color="#69a02f"/><stop offset="0.718" stop-color="#5b9b53"/><stop offset="0.756" stop-color="#538b5e"/><stop offset="0.792" stop-color="#55865e"/><stop offset="0.792" stop-color="#20a0c0"/><stop offset="0.796" stop-color="#c040b0"/><stop offset="0.803" stop-color="#2050c0"/><stop offset="0.814" stop-color="#3b7288"/><stop offset="0.849" stop-color="#428841"/><stop offset="0.878" stop-color="#6d8918"/><stop offset="0.906" stop-color="#7a8e1a"/><stop offset="0.934" stop-color="#718016"/><stop offset="0.948" stop-color="#49510f"/><stop offset="0.952" stop-color="#1890c0"/><stop offset="0.959" stop-color="#c040c0"/></linearGradient>
<linearGradient id="g74" gradientUnits="userSpaceOnUse" x1="583.0" y1="961.0" x2="601.9" y2="1193.2"><stop offset="0.034" stop-color="#2c0f06"/><stop offset="0.055" stop-color="#7c2b15"/><stop offset="0.139" stop-color="#953418"/><stop offset="0.231" stop-color="#af3e1c"/><stop offset="0.305" stop-color="#bc4420"/><stop offset="0.402" stop-color="#bc4420"/><stop offset="0.404" stop-color="#b030b0"/><stop offset="0.411" stop-color="#3050c0"/><stop offset="0.422" stop-color="#8b9f1c"/><stop offset="0.551" stop-color="#8a9f1c"/><stop offset="0.655" stop-color="#67a031"/><stop offset="0.711" stop-color="#589a58"/><stop offset="0.748" stop-color="#508a62"/><stop offset="0.786" stop-color="#538462"/><stop offset="0.786" stop-color="#20a0c0"/><stop offset="0.791" stop-color="#c040b0"/><stop offset="0.797" stop-color="#2050c0"/><stop offset="0.809" stop-color="#3b748c"/><stop offset="0.846" stop-color="#428943"/><stop offset="0.875" stop-color="#6d8a19"/><stop offset="0.904" stop-color="#7b901a"/><stop offset="0.934" stop-color="#738216"/><stop offset="0.949" stop-color="#4a530f"/><stop offset="0.953" stop-color="#1890c0"/><stop offset="0.959" stop-color="#c040c0"/></linearGradient>
<linearGradient id="g75" gradientUnits="userSpaceOnUse" x1="589.0" y1="959.6" x2="608.5" y2="1194.6"><stop offset="0.034" stop-color="#2c0f06"/><stop offset="0.055" stop-color="#7c2b15"/><stop offset="0.138" stop-color="#953418"/><stop offset="0.230" stop-color="#af3e1c"/><stop offset="0.303" stop-color="#bc4420"/><stop offset="0.401" stop-color="#bc4420"/><stop offset="0.403" stop-color="#b030b0"/><stop offset="0.409" stop-color="#3050c0"/><stop offset="0.421" stop-color="#8b9f1c"/><stop offset="0.546" stop-color="#8a9f1c"/><stop offset="0.650" stop-color="#64a032"/><stop offset="0.705" stop-color="#549a5c"/><stop offset="0.742" stop-color="#4e8967"/><stop offset="0.781" stop-color="#518367"/><stop offset="0.781" stop-color="#20a0c0"/><stop offset="0.785" stop-color="#c040b0"/><stop offset="0.792" stop-color="#2050c0"/><stop offset="0.804" stop-color="#3b7591"/><stop offset="0.842" stop-color="#428b44"/><stop offset="0.873" stop-color="#6e8c19"/><stop offset="0.903" stop-color="#7c911b"/><stop offset="0.934" stop-color="#748316"/><stop offset="0.949" stop-color="#4b540f"/><stop offset="0.954" stop-color="#1890c0"/><stop offset="0.960" stop-color="#c040c0"/></linearGradient>
<linearGradient id="g76" gradientUnits="userSpaceOnUse" x1="595.0" y1="958.2" x2="614.9" y2="1195.9"><stop offset="0.033" stop-color="#2d0f06"/><stop offset="0.054" stop-color="#7d2b15"/><stop offset="0.137" stop-color="#953418"/><stop offset="0.229" stop-color="#af3e1c"/><stop offset="0.302" stop-color="#bc4420"/><stop offset="0.399" stop-color="#bc4420"/><stop offset="0.401" stop-color="#b030b0"/><stop offset="0.408" stop-color="#3050c0"/><stop offset="0.419" stop-color="#8b9f1c"/><stop offset="0.542" stop-color="#8a9f1c"/><stop offset="0.644" stop-color="#61a034"/><stop offset="0.699" stop-color="#519961"/><stop offset="0.735" stop-color="#4b876c"/><stop offset="0.776" stop-color="#4e816c"/><stop offset="0.776" stop-color="#20a0c0"/><stop offset="0.781" stop-color="#c040b0"/><stop offset="0.787" stop-color="#2050c0"/><stop offset="0.799" stop-color="#3a7695"/><stop offset="0.839" stop-color="#418c46"/><stop offset="0.870" stop-color="#6e8d19"/><stop offset="0.902" stop-color="#7d921b"/><stop offset="0.934" stop-color="#768517"/><stop offset="0.950" stop-color="#4c560f"/><stop offset="0.954" stop-color="#1890c0"/><stop offset="0.960" stop-color="#c040c0"/></linearGradient>
<linearGradient id="g77" gradientUnits="userSpaceOnUse" x1="601.0" y1="956.9" x2="620.8" y2="1197.1"><stop offset="0.033" stop-color="#2d0f06"/><stop offset="0.054" stop-color="#7d2b15"/><stop offset="0.136" stop-color="#953418"/><stop offset="0.228" stop-color="#af3e1c"/><stop offset="0.301" stop-color="#bc4420"/><stop offset="0.398" stop-color="#bc4420"/><stop offset="0.400" stop-color="#b030b0"/><stop offset="0.407" stop-color="#3050c0"/><stop offset="0.418" stop-color="#8b9f1d"/><stop offset="0.539" stop-color="#899f1d"/><stop offset="0.639" stop-color="#5ea036"/><stop offset="0.694" stop-color="#4e9965"/><stop offset="0.730" stop-color="#498671"/><stop offset="0.772" stop-color="#4c7f71"/><stop offset="0.772" stop-color="#20a0c0"/><stop offset="0.777" stop-color="#c040b0"/><stop offset="0.783" stop-color="#2050c0"/><stop offset="0.795" stop-color="#3a7899"/><stop offset="0.836" stop-color="#418e47"/><stop offset="0.869" stop-color="#6f8e1a"/><stop offset="0.901" stop-color="#7e941b"/><stop offset="0.934" stop-color="#778717"/><stop offset="0.950" stop-color="#4e5710"/><stop offset="0.955" stop-color="#1890c0"/><stop offset="0.961" stop-color="#c040c0"/></linearGradient>
<linearGradient id="g78" gradientUnits="userSpaceOnUse" x1="607.0" y1="955.5" x2="626.6" y2="1198.0"><stop offset="0.033" stop-color="#2d0f06"/><stop offset="0.053" stop-color="#7d2b15"/><stop offset="0.136" stop-color="#953418"/><stop offset="0.227" stop-color="#af3e1c"/><stop offset="0.300" stop-color="#bc4420"/><stop offset="0.398" stop-color="#bc4420"/><stop offset="0.400" stop-color="#b030b0"/><stop offset="0.406" stop-color="#3050c0"/><stop offset="0.417" stop-color="#8b9f1d"/><stop offset="0.536" stop-color="#899f1d"/><stop offset="0.636" stop-color="#5ba037"/><stop offset="0.689" stop-color="#4b986a"/><stop offset="0.725" stop-color="#468576"/><stop offset="0.769" stop-color="#4a7d76"/><stop offset="0.769" stop-color="#20a0c0"/><stop offset="0.773" stop-color="#c040b0"/><stop offset="0.780" stop-color="#2050c0"/><stop offset="0.792" stop-color="#3a799d"/><stop offset="0.834" stop-color="#408f49"/><stop offset="0.867" stop-color="#708f1a"/><stop offset="0.901" stop-color="#7f951c"/><stop offset="0.934" stop-color="#798918"/><stop offset="0.951" stop-color="#4f5910"/><stop offset="0.955" stop-color="#1890c0"/><stop offset="0.961" stop-color="#c040c0"/></linearGradient>
<linearGradient id="g79" gradientUnits="userSpaceOnUse" x1="613.0" y1="954.1" x2="632.5" y2="1198.6"><stop offset="0.033" stop-color="#2d0f06"/><stop offset="0.053" stop-color="#7d2b15"/><stop offset="0.135" stop-color="#953418"/><stop offset="0.226" stop-color="#af3e1c"/><stop offset="0.299" stop-color="#bc4420"/><stop offset="0.398" stop-color="#bc4420"/><stop offset="0.400" stop-color="#b030b0"/><stop offset="0.406" stop-color="#3050c0"/><stop offset="0.417" stop-color="#8b9f1d"/><stop offset="0.535" stop-color="#899f1d"/><stop offset="0.632" stop-color="#59a039"/><stop offset="0.686" stop-color="#47986e"/><stop offset="0.722" stop-color="#44837a"/><stop offset="0.767" stop-color="#487b7a"/><stop offset="0.767" stop-color="#20a0c0"/><stop offset="0.771" stop-color="#c040b0"/><stop offset="0.777" stop-color="#2050c0"/><stop offset="0.790" stop-color="#3a7aa0"/><stop offset="0.832" stop-color="#40904b"/><stop offset="0.866" stop-color="#6f901b"/><stop offset="0.900" stop-color="#7f961c"/><stop offset="0.934" stop-color="#7a8a18"/><stop offset="0.951" stop-color="#515b10"/><stop offset="0.955" stop-color="#1890c0"/><stop offset="0.961" stop-color="#c040c0"/></linearGradient>
<linearGradient id="g80" gradientUnits="userSpaceOnUse" x1="619.0" y1="952.8" x2="638.6" y2="1199.1"><stop offset="0.032" stop-color="#2d0f06"/><stop offset="0.053" stop-color="#7d2b15"/><stop offset="0.135" stop-color="#953418"/><stop offset="0.226" stop-color="#af3e1c"/><stop offset="0.299" stop-color="#bc4420"/><stop offset="0.398" stop-color="#bc4420"/><stop offset="0.400" stop-color="#b030b0"/><stop offset="0.406" stop-color="#3050c0"/><stop offset="0.417" stop-color="#8b9f1d"/><stop offset="0.533" stop-color="#899f1d"/><stop offset="0.630" stop-color="#56a03a"/><stop offset="0.683" stop-color="#449773"/><stop offset="0.718" stop-color="#41827f"/><stop offset="0.765" stop-color="#46797f"/><stop offset="0.765" stop-color="#20a0c0"/><stop offset="0.769" stop-color="#c040b0"/><stop offset="0.775" stop-color="#2050c0"/><stop offset="0.788" stop-color="#3a78a1"/><stop offset="0.832" stop-color="#3f8e4e"/><stop offset="0.866" stop-color="#6d911f"/><stop offset="0.900" stop-color="#7d971d"/><stop offset="0.934" stop-color="#7b8b18"/><stop offset="0.951" stop-color="#525d11"/><stop offset="0.956" stop-color="#1890c0"/><stop offset="0.962" stop-color="#c040c0"/></linearGradient>
<linearGradient id="g81" gradientUnits="userSpaceOnUse" x1="625.0" y1="951.4" x2="644.8" y2="1199.6"><stop offset="0.032" stop-color="#2d0f06"/><stop offset="0.052" stop-color="#7d2b15"/><stop offset="0.134" stop-color="#953418"/><stop offset="0.226" stop-color="#af3e1c"/><stop offset="0.299" stop-color="#bc4420"/><stop offset="0.398" stop-color="#bc4420"/><stop offset="0.400" stop-color="#b030b0"/><stop offset="0.406" stop-color="#3050c0"/><stop offset="0.417" stop-color="#8b9f1e"/><stop offset="0.531" stop-color="#889f1e"/><stop offset="0.627" stop-color="#53a03c"/><stop offset="0.680" stop-color="#419777"/><stop offset="0.715" stop-color="#3f8184"/><stop offset="0.764" stop-color="#447784"/><stop offset="0.764" stop-color="#20a0c0"/><stop offset="0.768" stop-color="#c040b0"/><stop offset="0.774" stop-color="#2050c0"/><stop offset="0.786" stop-color="#3a77a2"/><stop offset="0.831" stop-color="#3e8d51"/><stop offset="0.865" stop-color="#6b9122"/><stop offset="0.899" stop-color="#7c971e"/><stop offset="0.934" stop-color="#7c8d18"/><stop offset="0.952" stop-color="#545f11"/><stop offset="0.956" stop-color="#1890c0"/><stop offset="0.962" stop-color="#c040c0"/></linearGradient>
<linearGradient id="g82" gradientUnits="userSpaceOnUse" x1="631.0" y1="950.0" x2="651.1" y2="1200.0"><stop offset="0.032" stop-color="#2e0f06"/><stop offset="0.052" stop-color="#7e2b15"/><stop offset="0.134" stop-color="#953418"/><stop offset="0.225" stop-color="#af3e1c"/><stop offset="0.299" stop-color="#bc4420"/><stop offset="0.399" stop-color="#bc4420"/><stop offset="0.401" stop-color="#b030b0"/><stop offset="0.407" stop-color="#3050c0"/><stop offset="0.418" stop-color="#8b9f1e"/><stop offset="0.530" stop-color="#889f1e"/><stop offset="0.624" stop-color="#50a03e"/><stop offset="0.677" stop-color="#3e967c"/><stop offset="0.712" stop-color="#3c7f89"/><stop offset="0.762" stop-color="#417589"/><stop offset="0.762" stop-color="#20a0c0"/><stop offset="0.766" stop-color="#c040b0"/><stop offset="0.772" stop-color="#2050c0"/><stop offset="0.785" stop-color="#3a76a3"/><stop offset="0.830" stop-color="#3d8c54"/><stop offset="0.865" stop-color="#689126"/><stop offset="0.899" stop-color="#7a9820"/><stop offset="0.933" stop-color="#7c8e19"/><stop offset="0.952" stop-color="#566211"/><stop offset="0.956" stop-color="#1890c0"/><stop offset="0.962" stop-color="#c040c0"/></linearGradient>
<linearGradient id="g83" gradientUnits="userSpaceOnUse" x1="637.0" y1="948.7" x2="657.4" y2="1200.3"><stop offset="0.032" stop-color="#2e0f06"/><stop offset="0.052" stop-color="#7e2b15"/><stop offset="0.133" stop-color="#953418"/><stop offset="0.225" stop-color="#af3e1c"/><stop offset="0.298" stop-color="#bc4420"/><stop offset="0.399" stop-color="#bc4420"/><stop offset="0.401" stop-color="#b030b0"/><stop offset="0.407" stop-color="#3050c0"/><stop offset="0.418" stop-color="#8b9f1e"/><stop offset="0.528" stop-color="#889f1e"/><stop offset="0.622" stop-color="#4da03f"/><stop offset="0.674" stop-color="#3a9680"/><stop offset="0.709" stop-color="#3a7e8e"/><stop offset="0.761" stop-color="#3f748e"/><stop offset="0.761" stop-color="#20a0c0"/><stop offset="0.765" stop-color="#c040b0"/><stop offset="0.771" stop-color="#2050c0"/><stop offset="0.784" stop-color="#3a75a3"/><stop offset="0.830" stop-color="#3d8b57"/><stop offset="0.865" stop-color="#66922a"/><stop offset="0.899" stop-color="#789921"/><stop offset="0.933" stop-color="#7d8f19"/><stop offset="0.952" stop-color="#586412"/><stop offset="0.957" stop-color="#1890c0"/><stop offset="0.962" stop-color="#c040c0"/></linearGradient>
<linearGradient id="g84" gradientUnits="userSpaceOnUse" x1="643.0" y1="947.3" x2="663.8" y2="1200.6"><stop offset="0.031" stop-color="#2e0f06"/><stop offset="0.052" stop-color="#7e2b15"/><stop offset="0.133" stop-color="#953418"/><stop offset="0.225" stop-color="#af3e1c"/><stop offset="0.298" stop-color="#bc4420"/><stop offset="0.399" stop-color="#bc4420"/><stop offset="0.401" stop-color="#b030b0"/><stop offset="0.407" stop-color="#3050c0"/><stop offset="0.418" stop-color="#8b9f1e"/><stop offset="0.527" stop-color="#889f1e"/><stop offset="0.619" stop-color="#4ba041"/><stop offset="0.672" stop-color="#379585"/><stop offset="0.706" stop-color="#377d92"/><stop offset="0.760" stop-color="#3d7292"/><stop offset="0.760" stop-color="#20a0c0"/><stop offset="0.763" stop-color="#c040b0"/><stop offset="0.769" stop-color="#2050c0"/><stop offset="0.782" stop-color="#3a74a4"/><stop offset="0.829" stop-color="#3c8a5a"/><stop offset="0.864" stop-color="#64922d"/><stop offset="0.899" stop-color="#769922"/><stop offset="0.933" stop-color="#7e9019"/><stop offset="0.952" stop-color="#596612"/><stop offset="0.957" stop-color="#1890c0"/><stop offset="0.963" stop-color="#c040c0"/></linearGradient>
<linearGradient id="g85" gradientUnits="userSpaceOnUse" x1="649.0" y1="946.0" x2="670.1" y2="1200.9"><stop offset="0.031" stop-color="#2e0f07"/><stop offset="0.051" stop-color="#7e2c15"/><stop offset="0.132" stop-color="#953518"/><stop offset="0.224" stop-color="#ae3d1c"/><stop offset="0.298" stop-color="#bc4420"/><stop offset="0.400" stop-color="#bc4420"/><stop offset="0.402" stop-color="#b030b0"/><stop offset="0.407" stop-color="#3050c0"/><stop offset="0.418" stop-color="#8b9f1e"/><stop offset="0.525" stop-color="#889f1e"/><stop offset="0.617" stop-color="#48a042"/><stop offset="0.669" stop-color="#349589"/><stop offset="0.704" stop-color="#357b97"/><stop offset="0.758" stop-color="#3b7097"/><stop offset="0.758" stop-color="#20a0c0"/><stop offset="0.762" stop-color="#c040b0"/><stop offset="0.768" stop-color="#2050c0"/><stop offset="0.781" stop-color="#3a72a5"/><stop offset="0.829" stop-color="#3b895d"/><stop offset="0.864" stop-color="#619231"/><stop offset="0.898" stop-color="#749a23"/><stop offset="0.932" stop-color="#7f9119"/><stop offset="0.952" stop-color="#5b6812"/><stop offset="0.957" stop-color="#1890c0"/><stop offset="0.963" stop-color="#c040c0"/></linearGradient>
<linearGradient id="g86" gradientUnits="userSpaceOnUse" x1="655.0" y1="944.6" x2="676.4" y2="1201.1"><stop offset="0.031" stop-color="#2e0f07"/><stop offset="0.051" stop-color="#7e2c15"/><stop offset="0.132" stop-color="#953518"/><stop offset="0.224" stop-color="#ae3d1c"/><stop offset="0.298" stop-color="#bc4420"/><stop offset="0.400" stop-color="#bc4420"/><stop offset="0.402" stop-color="#b030b0"/><stop offset="0.408" stop-color="#3050c0"/><stop offset="0.419" stop-color="#8aa01e"/><stop offset="0.524" stop-color="#88a01e"/><stop offset="0.615" stop-color="#45a044"/><stop offset="0.667" stop-color="#30948e"/><stop offset="0.701" stop-color="#327a9c"/><stop offset="0.757" stop-color="#386e9c"/><stop offset="0.757" stop-color="#20a0c0"/><stop offset="0.761" stop-color="#c040b0"/><stop offset="0.767" stop-color="#2050c0"/><stop offset="0.780" stop-color="#3a71a6"/><stop offset="0.829" stop-color="#3a8860"/><stop offset="0.864" stop-color="#5f9335"/><stop offset="0.898" stop-color="#729b24"/><stop offset="0.932" stop-color="#7f9219"/><stop offset="0.953" stop-color="#5d6b13"/><stop offset="0.957" stop-color="#1890c0"/><stop offset="0.963" stop-color="#c040c0"/></linearGradient>
<linearGradient id="g87" gradientUnits="userSpaceOnUse" x1="661.0" y1="943.2" x2="682.8" y2="1201.2"><stop offset="0.031" stop-color="#2e0f07"/><stop offset="0.051" stop-color="#7e2c15"/><stop offset="0.131" stop-color="#953518"/><stop offset="0.224" stop-color="#ae3d1c"/><stop offset="0.298" stop-color="#bc4420"/><stop offset="0.401" stop-color="#bc4420"/><stop offset="0.402" stop-color="#b030b0"/><stop offset="0.408" stop-color="#3050c0"/><stop offset="0.419" stop-color="#8aa01f"/><stop offset="0.523" stop-color="#87a01f"/><stop offset="0.613" stop-color="#42a046"/><stop offset="0.664" stop-color="#2d9393"/><stop offset="0.699" stop-color="#3079a1"/><stop offset="0.757" stop-color="#366ca1"/><stop offset="0.757" stop-color="#20a0c0"/><stop offset="0.760" stop-color="#c040b0"/><stop offset="0.766" stop-color="#2050c0"/><stop offset="0.779" stop-color="#3a70a6"/><stop offset="0.829" stop-color="#3a8663"/><stop offset="0.864" stop-color="#5d9338"/><stop offset="0.898" stop-color="#709b25"/><stop offset="0.932" stop-color="#80931a"/><stop offset="0.953" stop-color="#5e6d13"/><stop offset="0.958" stop-color="#1890c0"/><stop offset="0.963" stop-color="#c040c0"/></linearGradient>
<linearGradient id="g88" gradientUnits="userSpaceOnUse" x1="672.0" y1="940.8" x2="694.7" y2="1201.3"><stop offset="0.030" stop-color="#2f0f07"/><stop offset="0.051" stop-color="#7f2c15"/><stop offset="0.131" stop-color="#953518"/><stop offset="0.224" stop-color="#ae3d1c"/><stop offset="0.298" stop-color="#bc4420"/><stop offset="0.402" stop-color="#bc4420"/><stop offset="0.404" stop-color="#b030b0"/><stop offset="0.409" stop-color="#3050c0"/><stop offset="0.420" stop-color="#8aa01f"/><stop offset="0.521" stop-color="#87a01f"/><stop offset="0.609" stop-color="#3da049"/><stop offset="0.660" stop-color="#27929b"/><stop offset="0.695" stop-color="#2c76aa"/><stop offset="0.755" stop-color="#3269aa"/><stop offset="0.755" stop-color="#20a0c0"/><stop offset="0.759" stop-color="#c040b0"/><stop offset="0.765" stop-color="#2050c0"/><stop offset="0.778" stop-color="#3a6ea8"/><stop offset="0.829" stop-color="#388469"/><stop offset="0.864" stop-color="#58943f"/><stop offset="0.898" stop-color="#6c9c27"/><stop offset="0.931" stop-color="#81951a"/><stop offset="0.953" stop-color="#627114"/><stop offset="0.958" stop-color="#1890c0"/><stop offset="0.964" stop-color="#c040c0"/></linearGradient>
<linearGradient id="g89" gradientUnits="userSpaceOnUse" x1="688.0" y1="937.2" x2="712.6" y2="1201.2"><stop offset="0.030" stop-color="#2f0f07"/><stop offset="0.050" stop-color="#7f2c15"/><stop offset="0.130" stop-color="#953518"/><stop offset="0.223" stop-color="#ae3d1c"/><stop offset="0.298" stop-color="#bc4420"/><stop offset="0.403" stop-color="#bc4420"/><stop offset="0.405" stop-color="#b030b0"/><stop offset="0.411" stop-color="#3050c0"/><stop offset="0.421" stop-color="#8aa020"/><stop offset="0.518" stop-color="#86a020"/><stop offset="0.604" stop-color="#36a04d"/><stop offset="0.655" stop-color="#1f91a7"/><stop offset="0.689" stop-color="#2573b6"/><stop offset="0.753" stop-color="#2c64b6"/><stop offset="0.753" stop-color="#20a0c0"/><stop offset="0.757" stop-color="#c040b0"/><stop offset="0.763" stop-color="#2050c0"/><stop offset="0.776" stop-color="#396baa"/><stop offset="0.829" stop-color="#368171"/><stop offset="0.864" stop-color="#529548"/><stop offset="0.897" stop-color="#679e2a"/><stop offset="0.930" stop-color="#83981a"/><stop offset="0.953" stop-color="#667715"/><stop offset="0.959" stop-color="#1890c0"/><stop offset="0.964" stop-color="#c040c0"/></linearGradient>
<linearGradient id="g90" gradientUnits="userSpaceOnUse" x1="704.0" y1="933.6" x2="730.9" y2="1200.9"><stop offset="0.030" stop-color="#300f07"/><stop offset="0.050" stop-color="#802c15"/><stop offset="0.129" stop-color="#953518"/><stop offset="0.223" stop-color="#ae3d1c"/><stop offset="0.298" stop-color="#bc4420"/><stop offset="0.405" stop-color="#bc4420"/><stop offset="0.407" stop-color="#b030b0"/><stop offset="0.413" stop-color="#3050c0"/><stop offset="0.423" stop-color="#8aa020"/><stop offset="0.516" stop-color="#86a020"/><stop offset="0.599" stop-color="#30a050"/><stop offset="0.649" stop-color="#1890b0"/><stop offset="0.683" stop-color="#2070c0"/><stop offset="0.750" stop-color="#2860c0"/><stop offset="0.750" stop-color="#20a0c0"/><stop offset="0.754" stop-color="#c040b0"/><stop offset="0.760" stop-color="#2050c0"/><stop offset="0.773" stop-color="#3967ac"/><stop offset="0.828" stop-color="#347e79"/><stop offset="0.863" stop-color="#4c9652"/><stop offset="0.896" stop-color="#62a02c"/><stop offset="0.929" stop-color="#859b1b"/><stop offset="0.953" stop-color="#6b7d16"/><stop offset="0.959" stop-color="#1890c0"/><stop offset="0.965" stop-color="#c040c0"/></linearGradient>
<linearGradient id="g91" gradientUnits="userSpaceOnUse" x1="720.0" y1="930.1" x2="748.7" y2="1200.7"><stop offset="0.029" stop-color="#301007"/><stop offset="0.049" stop-color="#802c16"/><stop offset="0.128" stop-color="#963518"/><stop offset="0.223" stop-color="#ae3d1c"/><stop offset="0.298" stop-color="#bc4420"/><stop offset="0.407" stop-color="#bc4420"/><stop offset="0.409" stop-color="#b030b0"/><stop offset="0.414" stop-color="#3050c0"/><stop offset="0.424" stop-color="#89a021"/><stop offset="0.513" stop-color="#84a021"/><stop offset="0.594" stop-color="#2fa050"/><stop offset="0.643" stop-color="#188fb0"/><stop offset="0.677" stop-color="#206fc0"/><stop offset="0.747" stop-color="#295ec0"/><stop offset="0.747" stop-color="#20a0c0"/><stop offset="0.751" stop-color="#c040b0"/><stop offset="0.756" stop-color="#2050c0"/><stop offset="0.770" stop-color="#3964ae"/><stop offset="0.827" stop-color="#327b81"/><stop offset="0.862" stop-color="#46975c"/><stop offset="0.896" stop-color="#5da12f"/><stop offset="0.928" stop-color="#879e1c"/><stop offset="0.954" stop-color="#708317"/><stop offset="0.960" stop-color="#1890c0"/><stop offset="0.965" stop-color="#c040c0"/></linearGradient>
<linearGradient id="g92" gradientUnits="userSpaceOnUse" x1="736.0" y1="926.6" x2="765.7" y2="1200.6"><stop offset="0.029" stop-color="#311007"/><stop offset="0.049" stop-color="#812c16"/><stop offset="0.127" stop-color="#963518"/><stop offset="0.222" stop-color="#ae3d1c"/><stop offset="0.298" stop-color="#bc4420"/><stop offset="0.408" stop-color="#bc4420"/><stop offset="0.410" stop-color="#b030b0"/><stop offset="0.415" stop-color="#3050c0"/><stop offset="0.425" stop-color="#88a122"/><stop offset="0.510" stop-color="#82a122"/><stop offset="0.588" stop-color="#2ea051"/><stop offset="0.637" stop-color="#178eb1"/><stop offset="0.671" stop-color="#216ec0"/><stop offset="0.744" stop-color="#2a5cbf"/><stop offset="0.744" stop-color="#20a0c0"/><stop offset="0.747" stop-color="#c040b0"/><stop offset="0.753" stop-color="#2050c0"/><stop offset="0.766" stop-color="#3961b0"/><stop offset="0.826" stop-color="#307889"/><stop offset="0.861" stop-color="#409865"/><stop offset="0.895" stop-color="#58a332"/><stop offset="0.927" stop-color="#89a11c"/><stop offset="0.954" stop-color="#748918"/><stop offset="0.960" stop-color="#1890c0"/><stop offset="0.966" stop-color="#c040c0"/></linearGradient>
<linearGradient id="g93" gradientUnits="userSpaceOnUse" x1="752.0" y1="923.1" x2="781.3" y2="1200.9"><stop offset="0.028" stop-color="#311007"/><stop offset="0.048" stop-color="#812d16"/><stop offset="0.126" stop-color="#963518"/><stop offset="0.221" stop-color="#ad3d1c"/><stop offset="0.298" stop-color="#bc4420"/><stop offset="0.410" stop-color="#bc4420"/><stop offset="0.411" stop-color="#b030b0"/><stop offset="0.417" stop-color="#3050c0"/><stop offset="0.427" stop-color="#86a122"/><stop offset="0.507" stop-color="#81a123"/><stop offset="0.583" stop-color="#2ea051"/><stop offset="0.631" stop-color="#178eb1"/><stop offset="0.665" stop-color="#216dc0"/><stop offset="0.740" stop-color="#2a5bbf"/><stop offset="0.740" stop-color="#20a0c0"/><stop offset="0.744" stop-color="#c040b0"/><stop offset="0.749" stop-color="#2050c0"/><stop offset="0.763" stop-color="#395eb2"/><stop offset="0.826" stop-color="#2e7591"/><stop offset="0.861" stop-color="#3a996f"/><stop offset="0.894" stop-color="#53a535"/><stop offset="0.925" stop-color="#8ba41d"/><stop offset="0.954" stop-color="#798f19"/><stop offset="0.961" stop-color="#1890c0"/><stop offset="0.966" stop-color="#c040c0"/></linearGradient>
<linearGradient id="g94" gradientUnits="userSpaceOnUse" x1="768.0" y1="919.6" x2="796.8" y2="1201.0"><stop offset="0.028" stop-color="#311007"/><stop offset="0.048" stop-color="#812d16"/><stop offset="0.125" stop-color="#963518"/><stop offset="0.221" stop-color="#ad3d1c"/><stop offset="0.298" stop-color="#bc4420"/><stop offset="0.411" stop-color="#bc4420"/><stop offset="0.413" stop-color="#b030b0"/><stop offset="0.418" stop-color="#3050c0"/><stop offset="0.428" stop-color="#85a123"/><stop offset="0.505" stop-color="#7fa124"/><stop offset="0.578" stop-color="#2da051"/><stop offset="0.626" stop-color="#178db1"/><stop offset="0.660" stop-color="#216cc0"/><stop offset="0.737" stop-color="#2b59bf"/><stop offset="0.737" stop-color="#20a0c0"/><stop offset="0.741" stop-color="#c040b0"/><stop offset="0.746" stop-color="#2050c0"/><stop offset="0.760" stop-color="#395ab4"/><stop offset="0.825" stop-color="#2c7299"/><stop offset="0.860" stop-color="#339a79"/><stop offset="0.893" stop-color="#4ea638"/><stop offset="0.924" stop-color="#8da71d"/><stop offset="0.954" stop-color="#7d951a"/><stop offset="0.961" stop-color="#1890c0"/><stop offset="0.967" stop-color="#c040c0"/></linearGradient>
<linearGradient id="g95" gradientUnits="userSpaceOnUse" x1="784.0" y1="916.1" x2="812.9" y2="1201.1"><stop offset="0.028" stop-color="#321007"/><stop offset="0.047" stop-color="#822d16"/><stop offset="0.124" stop-color="#963518"/><stop offset="0.220" stop-color="#ad3d1c"/><stop offset="0.297" stop-color="#bc4420"/><stop offset="0.412" stop-color="#bc4420"/><stop offset="0.414" stop-color="#b030b0"/><stop offset="0.419" stop-color="#3050c0"/><stop offset="0.429" stop-color="#84a224"/><stop offset="0.503" stop-color="#7ea225"/><stop offset="0.574" stop-color="#2ca052"/><stop offset="0.620" stop-color="#168cb2"/><stop offset="0.655" stop-color="#226bc0"/><stop offset="0.735" stop-color="#2c58be"/><stop offset="0.735" stop-color="#20a0c0"/><stop offset="0.738" stop-color="#c040b0"/><stop offset="0.744" stop-color="#2050c0"/><stop offset="0.758" stop-color="#3957b6"/><stop offset="0.825" stop-color="#2a6fa2"/><stop offset="0.860" stop-color="#2d9b82"/><stop offset="0.892" stop-color="#48a83b"/><stop offset="0.923" stop-color="#8faa1e"/><stop offset="0.954" stop-color="#829b1b"/><stop offset="0.962" stop-color="#1890c0"/><stop offset="0.967" stop-color="#c040c0"/></linearGradient>
<linearGradient id="g96" gradientUnits="userSpaceOnUse" x1="800.0" y1="912.7" x2="829.0" y2="1201.1"><stop offset="0.027" stop-color="#321007"/><stop offset="0.047" stop-color="#822d16"/><stop offset="0.123" stop-color="#963518"/><stop offset="0.220" stop-color="#ad3d1c"/><stop offset="0.297" stop-color="#bc4420"/><stop offset="0.414" stop-color="#bc4420"/><stop offset="0.415" stop-color="#b030b0"/><stop offset="0.420" stop-color="#3050c0"/><stop offset="0.430" stop-color="#83a224"/><stop offset="0.500" stop-color="#7ca226"/><stop offset="0.569" stop-color="#2ca052"/><stop offset="0.616" stop-color="#168cb2"/><stop offset="0.651" stop-color="#226ac0"/><stop offset="0.733" stop-color="#2d56be"/><stop offset="0.733" stop-color="#20a0c0"/><stop offset="0.736" stop-color="#c040b0"/><stop offset="0.741" stop-color="#2050c0"/><stop offset="0.755" stop-color="#3854b8"/><stop offset="0.825" stop-color="#286caa"/><stop offset="0.860" stop-color="#279c8c"/><stop offset="0.891" stop-color="#43aa3d"/><stop offset="0.921" stop-color="#91ad1e"/><stop offset="0.954" stop-color="#87a11c"/><stop offset="0.962" stop-color="#1890c0"/><stop offset="0.967" stop-color="#c040c0"/></linearGradient>
<linearGradient id="g97" gradientUnits="userSpaceOnUse" x1="816.0" y1="909.3" x2="844.7" y2="1201.1"><stop offset="0.027" stop-color="#331007"/><stop offset="0.046" stop-color="#832d16"/><stop offset="0.122" stop-color="#963518"/><stop offset="0.219" stop-color="#ad3d1c"/><stop offset="0.297" stop-color="#bc4420"/><stop offset="0.415" stop-color="#bc4420"/><stop offset="0.416" stop-color="#b030b0"/><stop offset="0.422" stop-color="#3050c0"/><stop offset="0.431" stop-color="#82a225"/><stop offset="0.498" stop-color="#7aa227"/><stop offset="0.565" stop-color="#2ba052"/><stop offset="0.611" stop-color="#168bb2"/><stop offset="0.646" stop-color="#2269c0"/><stop offset="0.731" stop-color="#2e54be"/><stop offset="0.731" stop-color="#20a0c0"/><stop offset="0.734" stop-color="#c040b0"/><stop offset="0.739" stop-color="#2050c0"/><stop offset="0.754" stop-color="#3851ba"/><stop offset="0.825" stop-color="#2668b2"/><stop offset="0.860" stop-color="#219d95"/><stop offset="0.891" stop-color="#3eab40"/><stop offset="0.920" stop-color="#93b01f"/><stop offset="0.954" stop-color="#8ba71d"/><stop offset="0.963" stop-color="#1890c0"/><stop offset="0.968" stop-color="#c040c0"/></linearGradient>
<linearGradient id="g98" gradientUnits="userSpaceOnUse" x1="832.0" y1="905.8" x2="861.3" y2="1201.0"><stop offset="0.027" stop-color="#331007"/><stop offset="0.046" stop-color="#832d16"/><stop offset="0.121" stop-color="#963518"/><stop offset="0.218" stop-color="#ad3d1c"/><stop offset="0.296" stop-color="#bc4420"/><stop offset="0.416" stop-color="#bc4420"/><stop offset="0.417" stop-color="#b030b0"/><stop offset="0.423" stop-color="#3050c0"/><stop offset="0.432" stop-color="#81a326"/><stop offset="0.496" stop-color="#79a328"/><stop offset="0.561" stop-color="#2aa053"/><stop offset="0.606" stop-color="#158ab3"/><stop offset="0.642" stop-color="#2368c0"/><stop offset="0.729" stop-color="#2e53bd"/><stop offset="0.729" stop-color="#20a0c0"/><stop offset="0.733" stop-color="#c040b0"/><stop offset="0.738" stop-color="#2050c0"/><stop offset="0.752" stop-color="#384ebc"/><stop offset="0.826" stop-color="#2465ba"/><stop offset="0.860" stop-color="#1b9e9f"/><stop offset="0.890" stop-color="#39ad43"/><stop offset="0.918" stop-color="#95b31f"/><stop offset="0.954" stop-color="#90ad1e"/><stop offset="0.963" stop-color="#1890c0"/><stop offset="0.968" stop-color="#c040c0"/></linearGradient>
<linearGradient id="g99" gradientUnits="userSpaceOnUse" x1="848.0" y1="902.4" x2="879.1" y2="1200.6"><stop offset="0.027" stop-color="#341007"/><stop offset="0.045" stop-color="#842e16"/><stop offset="0.120" stop-color="#963518"/><stop offset="0.218" stop-color="#ac3d1c"/><stop offset="0.296" stop-color="#bc4420"/><stop offset="0.417" stop-color="#bc4420"/><stop offset="0.418" stop-color="#b030b0"/><stop offset="0.423" stop-color="#3050c0"/><stop offset="0.433" stop-color="#80a326"/><stop offset="0.493" stop-color="#77a329"/><stop offset="0.557" stop-color="#2aa053"/><stop offset="0.602" stop-color="#158ab3"/><stop offset="0.638" stop-color="#2367c0"/><stop offset="0.727" stop-color="#2f51bd"/><stop offset="0.727" stop-color="#20a0c0"/><stop offset="0.731" stop-color="#c040b0"/><stop offset="0.736" stop-color="#2050c0"/><stop offset="0.750" stop-color="#384abe"/><stop offset="0.826" stop-color="#2262c2"/><stop offset="0.860" stop-color="#159fa9"/><stop offset="0.890" stop-color="#34af46"/><stop offset="0.917" stop-color="#97b620"/><stop offset="0.954" stop-color="#95b31f"/><stop offset="0.964" stop-color="#1890c0"/><stop offset="0.968" stop-color="#c040c0"/></linearGradient>
<linearGradient id="g100" gradientUnits="userSpaceOnUse" x1="864.0" y1="899.1" x2="898.0" y2="1199.9"><stop offset="0.026" stop-color="#341107"/><stop offset="0.045" stop-color="#842e17"/><stop offset="0.119" stop-color="#973518"/><stop offset="0.217" stop-color="#ac3d1c"/><stop offset="0.295" stop-color="#bc4420"/><stop offset="0.418" stop-color="#bc4420"/><stop offset="0.419" stop-color="#b030b0"/><stop offset="0.424" stop-color="#3050c0"/><stop offset="0.433" stop-color="#7fa327"/><stop offset="0.491" stop-color="#76a32a"/><stop offset="0.552" stop-color="#29a053"/><stop offset="0.597" stop-color="#1589b3"/><stop offset="0.633" stop-color="#2366c0"/><stop offset="0.725" stop-color="#3050bd"/><stop offset="0.728" stop-color="#20b080"/><stop offset="0.731" stop-color="#98d828"/><stop offset="0.734" stop-color="#70c030"/><stop offset="0.738" stop-color="#20a0a0"/><stop offset="0.752" stop-color="#3848c0"/><stop offset="0.830" stop-color="#2060c8"/><stop offset="0.863" stop-color="#10a0b0"/><stop offset="0.891" stop-color="#30b048"/><stop offset="0.917" stop-color="#98b820"/><stop offset="0.954" stop-color="#98b820"/><stop offset="0.964" stop-color="#1890c0"/><stop offset="0.969" stop-color="#c040c0"/></linearGradient>
<linearGradient id="g101" gradientUnits="userSpaceOnUse" x1="880.0" y1="895.7" x2="916.0" y2="1199.3"><stop offset="0.026" stop-color="#351107"/><stop offset="0.044" stop-color="#852e17"/><stop offset="0.118" stop-color="#973518"/><stop offset="0.216" stop-color="#ac3d1c"/><stop offset="0.294" stop-color="#bc4420"/><stop offset="0.418" stop-color="#bc4420"/><stop offset="0.420" stop-color="#b030b0"/><stop offset="0.425" stop-color="#3050c0"/><stop offset="0.434" stop-color="#7ea428"/><stop offset="0.488" stop-color="#74a42b"/><stop offset="0.548" stop-color="#28a054"/><stop offset="0.592" stop-color="#1488b4"/><stop offset="0.628" stop-color="#2465c0"/><stop offset="0.722" stop-color="#314ebc"/><stop offset="0.725" stop-color="#20b080"/><stop offset="0.728" stop-color="#98d828"/><stop offset="0.731" stop-color="#70c030"/><stop offset="0.735" stop-color="#20a0a0"/><stop offset="0.749" stop-color="#3947c0"/><stop offset="0.830" stop-color="#215fc9"/><stop offset="0.863" stop-color="#109fb1"/><stop offset="0.892" stop-color="#30b048"/><stop offset="0.918" stop-color="#99b920"/><stop offset="0.954" stop-color="#99b920"/><stop offset="0.964" stop-color="#1890c0"/><stop offset="0.969" stop-color="#c040c0"/></linearGradient>
<linearGradient id="g102" gradientUnits="userSpaceOnUse" x1="896.0" y1="892.3" x2="931.5" y2="1199.3"><stop offset="0.026" stop-color="#351107"/><stop offset="0.044" stop-color="#852e17"/><stop offset="0.117" stop-color="#973518"/><stop offset="0.215" stop-color="#ac3d1c"/><stop offset="0.294" stop-color="#bc4420"/><stop offset="0.419" stop-color="#bc4420"/><stop offset="0.421" stop-color="#b030b0"/><stop offset="0.426" stop-color="#3050c0"/><stop offset="0.435" stop-color="#7da428"/><stop offset="0.486" stop-color="#72a42c"/><stop offset="0.543" stop-color="#28a054"/><stop offset="0.587" stop-color="#1488b4"/><stop offset="0.623" stop-color="#2464c0"/><stop offset="0.719" stop-color="#314cbc"/><stop offset="0.722" stop-color="#20b080"/><stop offset="0.725" stop-color="#98d828"/><stop offset="0.728" stop-color="#70c030"/><stop offset="0.732" stop-color="#20a0a0"/><stop offset="0.746" stop-color="#3947c0"/><stop offset="0.831" stop-color="#235fc9"/><stop offset="0.864" stop-color="#109fb1"/><stop offset="0.893" stop-color="#30b048"/><stop offset="0.919" stop-color="#99b920"/><stop offset="0.955" stop-color="#99b920"/><stop offset="0.965" stop-color="#1890c0"/><stop offset="0.969" stop-color="#c040c0"/></linearGradient>
<linearGradient id="g103" gradientUnits="userSpaceOnUse" x1="912.0" y1="889.0" x2="948.2" y2="1199.0"><stop offset="0.025" stop-color="#351107"/><stop offset="0.044" stop-color="#852e17"/><stop offset="0.116" stop-color="#973518"/><stop offset="0.214" stop-color="#ac3d1c"/><stop offset="0.293" stop-color="#bc4420"/><stop offset="0.420" stop-color="#bc4420"/><stop offset="0.422" stop-color="#b030b0"/><stop offset="0.426" stop-color="#3050c0"/><stop offset="0.435" stop-color="#7ba429"/><stop offset="0.483" stop-color="#71a42d"/><stop offset="0.539" stop-color="#27a054"/><stop offset="0.582" stop-color="#1487b4"/><stop offset="0.619" stop-color="#2463c0"/><stop offset="0.716" stop-color="#324bbc"/><stop offset="0.720" stop-color="#20b080"/><stop offset="0.722" stop-color="#98d828"/><stop offset="0.725" stop-color="#70c030"/><stop offset="0.729" stop-color="#20a0a0"/><stop offset="0.744" stop-color="#3a46c0"/><stop offset="0.832" stop-color="#245eca"/><stop offset="0.866" stop-color="#109eb2"/><stop offset="0.894" stop-color="#30b048"/><stop offset="0.920" stop-color="#9aba20"/><stop offset="0.955" stop-color="#9aba20"/><stop offset="0.965" stop-color="#1890c0"/><stop offset="0.970" stop-color="#c040c0"/></linearGradient>
<linearGradient id="g104" gradientUnits="userSpaceOnUse" x1="928.0" y1="885.7" x2="965.1" y2="1198.6"><stop offset="0.025" stop-color="#361107"/><stop offset="0.043" stop-color="#862e17"/><stop offset="0.115" stop-color="#973518"/><stop offset="0.213" stop-color="#ac3d1c"/><stop offset="0.293" stop-color="#bc4420"/><stop offset="0.421" stop-color="#bc4420"/><stop offset="0.422" stop-color="#b030b0"/><stop offset="0.427" stop-color="#3050c0"/><stop offset="0.436" stop-color="#7aa52a"/><stop offset="0.481" stop-color="#6fa52e"/><stop offset="0.535" stop-color="#26a055"/><stop offset="0.577" stop-color="#1386b5"/><stop offset="0.614" stop-color="#2562c0"/><stop offset="0.714" stop-color="#3349bb"/><stop offset="0.717" stop-color="#20b080"/><stop offset="0.719" stop-color="#98d828"/><stop offset="0.722" stop-color="#70c030"/><stop offset="0.726" stop-color="#20a0a0"/><stop offset="0.741" stop-color="#3a46c0"/><stop offset="0.833" stop-color="#255eca"/><stop offset="0.867" stop-color="#109eb2"/><stop offset="0.895" stop-color="#30b048"/><stop offset="0.921" stop-color="#9aba20"/><stop offset="0.955" stop-color="#9aba20"/><stop offset="0.965" stop-color="#1890c0"/><stop offset="0.970" stop-color="#c040c0"/></linearGradient>
<linearGradient id="g105" gradientUnits="userSpaceOnUse" x1="944.0" y1="882.4" x2="981.2" y2="1198.4"><stop offset="0.025" stop-color="#361108"/><stop offset="0.043" stop-color="#862f17"/><stop offset="0.113" stop-color="#973618"/><stop offset="0.213" stop-color="#ab3c1c"/><stop offset="0.292" stop-color="#bc4420"/><stop offset="0.421" stop-color="#bc4420"/><stop offset="0.423" stop-color="#b030b0"/><stop offset="0.427" stop-color="#3050c0"/><stop offset="0.436" stop-color="#79a52a"/><stop offset="0.479" stop-color="#6ea52f"/><stop offset="0.531" stop-color="#26a055"/><stop offset="0.573" stop-color="#1386b5"/><stop offset="0.610" stop-color="#2561c0"/><stop offset="0.711" stop-color="#3448bb"/><stop offset="0.714" stop-color="#20b080"/><stop offset="0.716" stop-color="#98d828"/><stop offset="0.720" stop-color="#70c030"/><stop offset="0.723" stop-color="#20a0a0"/><stop offset="0.738" stop-color="#3b45c0"/><stop offset="0.835" stop-color="#265dcb"/><stop offset="0.868" stop-color="#109db3"/><stop offset="0.896" stop-color="#30b048"/><stop offset="0.923" stop-color="#9bbb20"/><stop offset="0.955" stop-color="#9bbb20"/><stop offset="0.966" stop-color="#1890c0"/><stop offset="0.970" stop-color="#c040c0"/></linearGradient>
<linearGradient id="g106" gradientUnits="userSpaceOnUse" x1="960.0" y1="879.1" x2="997.7" y2="1198.0"><stop offset="0.025" stop-color="#371108"/><stop offset="0.042" stop-color="#872f17"/><stop offset="0.112" stop-color="#973618"/><stop offset="0.212" stop-color="#ab3c1c"/><stop offset="0.291" stop-color="#bc4420"/><stop offset="0.422" stop-color="#bc4420"/><stop offset="0.423" stop-color="#b030b0"/><stop offset="0.428" stop-color="#3050c0"/><stop offset="0.437" stop-color="#78a52b"/><stop offset="0.476" stop-color="#6ca530"/><stop offset="0.527" stop-color="#25a055"/><stop offset="0.568" stop-color="#1385b5"/><stop offset="0.606" stop-color="#2560c0"/><stop offset="0.709" stop-color="#3446bb"/><stop offset="0.712" stop-color="#20b080"/><stop offset="0.714" stop-color="#98d828"/><stop offset="0.717" stop-color="#70c030"/><stop offset="0.721" stop-color="#20a0a0"/><stop offset="0.736" stop-color="#3c44c0"/><stop offset="0.836" stop-color="#275ccc"/><stop offset="0.870" stop-color="#109cb4"/><stop offset="0.897" stop-color="#30b048"/><stop offset="0.924" stop-color="#9cbc20"/><stop offset="0.956" stop-color="#9cbc20"/><stop offset="0.966" stop-color="#1890c0"/><stop offset="0.971" stop-color="#c040c0"/></linearGradient>
<linearGradient id="g107" gradientUnits="userSpaceOnUse" x1="976.0" y1="875.8" x2="1014.9" y2="1197.4"><stop offset="0.025" stop-color="#371108"/><stop offset="0.042" stop-color="#872f17"/><stop offset="0.111" stop-color="#973618"/><stop offset="0.211" stop-color="#ab3c1c"/><stop offset="0.290" stop-color="#bc4420"/><stop offset="0.422" stop-color="#bc4420"/><stop offset="0.424" stop-color="#b030b0"/><stop offset="0.428" stop-color="#3050c0"/><stop offset="0.437" stop-color="#77a62c"/><stop offset="0.474" stop-color="#6aa631"/><stop offset="0.523" stop-color="#24a056"/><stop offset="0.564" stop-color="#1284b6"/><stop offset="0.601" stop-color="#265fc0"/><stop offset="0.706" stop-color="#3544ba"/><stop offset="0.709" stop-color="#20b080"/><stop offset="0.712" stop-color="#98d828"/><stop offset="0.715" stop-color="#70c030"/><stop offset="0.719" stop-color="#20a0a0"/><stop offset="0.734" stop-color="#3c44c0"/><stop offset="0.838" stop-color="#285ccc"/><stop offset="0.871" stop-color="#109cb4"/><stop offset="0.899" stop-color="#30b048"/><stop offset="0.925" stop-color="#9cbc20"/><stop offset="0.956" stop-color="#9cbc20"/><stop offset="0.966" stop-color="#1890c0"/><stop offset="0.971" stop-color="#c040c0"/></linearGradient>
<linearGradient id="g108" gradientUnits="userSpaceOnUse" x1="992.0" y1="872.5" x2="1031.2" y2="1197.0"><stop offset="0.024" stop-color="#381108"/><stop offset="0.041" stop-color="#882f17"/><stop offset="0.110" stop-color="#973618"/><stop offset="0.210" stop-color="#ab3c1c"/><stop offset="0.289" stop-color="#bc4420"/><stop offset="0.423" stop-color="#bc4420"/><stop offset="0.424" stop-color="#b030b0"/><stop offset="0.429" stop-color="#3050c0"/><stop offset="0.437" stop-color="#76a62c"/><stop offset="0.472" stop-color="#69a632"/><stop offset="0.519" stop-color="#24a056"/><stop offset="0.559" stop-color="#1284b6"/><stop offset="0.597" stop-color="#265ec0"/><stop offset="0.704" stop-color="#3643ba"/><stop offset="0.707" stop-color="#20b080"/><stop offset="0.709" stop-color="#98d828"/><stop offset="0.713" stop-color="#70c030"/><stop offset="0.716" stop-color="#20a0a0"/><stop offset="0.732" stop-color="#3d43c0"/><stop offset="0.839" stop-color="#2a5bcd"/><stop offset="0.873" stop-color="#109bb5"/><stop offset="0.900" stop-color="#30b048"/><stop offset="0.926" stop-color="#9dbd20"/><stop offset="0.956" stop-color="#9dbd20"/><stop offset="0.967" stop-color="#1890c0"/><stop offset="0.971" stop-color="#c040c0"/></linearGradient>
<linearGradient id="g109" gradientUnits="userSpaceOnUse" x1="1008.0" y1="869.3" x2="1047.0" y2="1196.7"><stop offset="0.024" stop-color="#381208"/><stop offset="0.041" stop-color="#882f18"/><stop offset="0.109" stop-color="#983618"/><stop offset="0.209" stop-color="#ab3c1c"/><stop offset="0.288" stop-color="#bc4420"/><stop offset="0.423" stop-color="#bc4420"/><stop offset="0.425" stop-color="#b030b0"/><stop offset="0.429" stop-color="#3050c0"/><stop offset="0.438" stop-color="#75a72d"/><stop offset="0.469" stop-color="#67a734"/><stop offset="0.515" stop-color="#23a057"/><stop offset="0.555" stop-color="#1183b7"/><stop offset="0.593" stop-color="#275cc0"/><stop offset="0.702" stop-color="#3741b9"/><stop offset="0.705" stop-color="#20b080"/><stop offset="0.707" stop-color="#98d828"/><stop offset="0.710" stop-color="#70c030"/><stop offset="0.714" stop-color="#20a0a0"/><stop offset="0.729" stop-color="#3d43c0"/><stop offset="0.841" stop-color="#2b5bcd"/><stop offset="0.874" stop-color="#109bb5"/><stop offset="0.902" stop-color="#30b048"/><stop offset="0.928" stop-color="#9dbd20"/><stop offset="0.956" stop-color="#9dbd20"/><stop offset="0.967" stop-color="#1890c0"/><stop offset="0.971" stop-color="#c040c0"/></linearGradient>
<linearGradient id="g110" gradientUnits="userSpaceOnUse" x1="1024.0" y1="866.1" x2="1063.7" y2="1196.2"><stop offset="0.024" stop-color="#381208"/><stop offset="0.041" stop-color="#882f18"/><stop offset="0.108" stop-color="#983618"/><stop offset="0.208" stop-color="#ab3c1c"/><stop offset="0.287" stop-color="#bc4420"/><stop offset="0.423" stop-color="#bc4420"/><stop offset="0.425" stop-color="#b030b0"/><stop offset="0.429" stop-color="#3050c0"/><stop offset="0.438" stop-color="#74a72e"/><stop offset="0.467" stop-color="#66a735"/><stop offset="0.511" stop-color="#22a057"/><stop offset="0.551" stop-color="#1182b7"/><stop offset="0.589" stop-color="#275bc0"/><stop offset="0.700" stop-color="#3740b9"/><stop offset="0.703" stop-color="#20b080"/><stop offset="0.705" stop-color="#98d828"/><stop offset="0.708" stop-color="#70c030"/><stop offset="0.712" stop-color="#20a0a0"/><stop offset="0.727" stop-color="#3e42c0"/><stop offset="0.842" stop-color="#2c5ace"/><stop offset="0.876" stop-color="#109ab6"/><stop offset="0.903" stop-color="#30b048"/><stop offset="0.929" stop-color="#9ebe20"/><stop offset="0.957" stop-color="#9ebe20"/><stop offset="0.967" stop-color="#1890c0"/><stop offset="0.972" stop-color="#c040c0"/></linearGradient>
<linearGradient id="g111" gradientUnits="userSpaceOnUse" x1="1040.0" y1="862.9" x2="1080.9" y2="1195.5"><stop offset="0.024" stop-color="#391208"/><stop offset="0.040" stop-color="#893018"/><stop offset="0.106" stop-color="#983618"/><stop offset="0.206" stop-color="#aa3c1c"/><stop offset="0.286" stop-color="#bc4420"/><stop offset="0.424" stop-color="#bc4420"/><stop offset="0.425" stop-color="#b030b0"/><stop offset="0.430" stop-color="#3050c0"/><stop offset="0.438" stop-color="#73a72e"/><stop offset="0.465" stop-color="#64a736"/><stop offset="0.507" stop-color="#22a057"/><stop offset="0.547" stop-color="#1182b7"/><stop offset="0.585" stop-color="#275ac0"/><stop offset="0.698" stop-color="#383eb9"/><stop offset="0.701" stop-color="#20b080"/><stop offset="0.703" stop-color="#98d828"/><stop offset="0.706" stop-color="#70c030"/><stop offset="0.710" stop-color="#20a0a0"/><stop offset="0.725" stop-color="#3f41c0"/><stop offset="0.844" stop-color="#2d59cf"/><stop offset="0.878" stop-color="#1099b7"/><stop offset="0.905" stop-color="#30b048"/><stop offset="0.931" stop-color="#9fbf20"/><stop offset="0.957" stop-color="#9fbf20"/><stop offset="0.967" stop-color="#1890c0"/><stop offset="0.972" stop-color="#c040c0"/></linearGradient>
<linearGradient id="g112" gradientUnits="userSpaceOnUse" x1="1056.0" y1="859.7" x2="1097.4" y2="1194.9"><stop offset="0.024" stop-color="#391208"/><stop offset="0.040" stop-color="#893018"/><stop offset="0.105" stop-color="#983618"/><stop offset="0.205" stop-color="#aa3c1c"/><stop offset="0.285" stop-color="#bc4420"/><stop offset="0.424" stop-color="#bc4420"/><stop offset="0.425" stop-color="#b030b0"/><stop offset="0.430" stop-color="#3050c0"/><stop offset="0.438" stop-color="#72a82f"/><stop offset="0.462" stop-color="#62a837"/><stop offset="0.503" stop-color="#21a058"/><stop offset="0.543" stop-color="#1081b8"/><stop offset="0.581" stop-color="#2859c0"/><stop offset="0.696" stop-color="#393cb8"/><stop offset="0.699" stop-color="#20b080"/><stop offset="0.701" stop-color="#98d828"/><stop offset="0.705" stop-color="#70c030"/><stop offset="0.708" stop-color="#20a0a0"/><stop offset="0.724" stop-color="#3f41c0"/><stop offset="0.847" stop-color="#2e59cf"/><stop offset="0.880" stop-color="#1099b7"/><stop offset="0.906" stop-color="#30b048"/><stop offset="0.932" stop-color="#9fbf20"/><stop offset="0.957" stop-color="#9fbf20"/><stop offset="0.968" stop-color="#1890c0"/><stop offset="0.972" stop-color="#c040c0"/></linearGradient>
<linearGradient id="g113" gradientUnits="userSpaceOnUse" x1="1072.0" y1="856.5" x2="1113.4" y2="1194.5"><stop offset="0.023" stop-color="#3a1208"/><stop offset="0.039" stop-color="#8a3018"/><stop offset="0.104" stop-color="#983618"/><stop offset="0.204" stop-color="#aa3c1c"/><stop offset="0.284" stop-color="#bc4420"/><stop offset="0.424" stop-color="#bc4420"/><stop offset="0.426" stop-color="#b030b0"/><stop offset="0.430" stop-color="#3050c0"/><stop offset="0.438" stop-color="#70a830"/><stop offset="0.460" stop-color="#61a838"/><stop offset="0.500" stop-color="#20a058"/><stop offset="0.539" stop-color="#1080b8"/><stop offset="0.578" stop-color="#2858c0"/><stop offset="0.694" stop-color="#3a3bb8"/><stop offset="0.697" stop-color="#20b080"/><stop offset="0.699" stop-color="#98d828"/><stop offset="0.703" stop-color="#70c030"/><stop offset="0.707" stop-color="#20a0a0"/><stop offset="0.723" stop-color="#4040c0"/><stop offset="0.849" stop-color="#2f58d0"/><stop offset="0.882" stop-color="#1098b8"/><stop offset="0.908" stop-color="#30b048"/><stop offset="0.934" stop-color="#a0c020"/><stop offset="0.957" stop-color="#a0c020"/><stop offset="0.968" stop-color="#1890c0"/><stop offset="0.972" stop-color="#c040c0"/></linearGradient>
<linearGradient id="g114" gradientUnits="userSpaceOnUse" x1="1088.0" y1="853.3" x2="1129.8" y2="1193.9"><stop offset="0.023" stop-color="#3a1208"/><stop offset="0.039" stop-color="#8a3018"/><stop offset="0.103" stop-color="#983618"/><stop offset="0.204" stop-color="#aa3c1c"/><stop offset="0.284" stop-color="#bc4420"/><stop offset="0.424" stop-color="#bc4420"/><stop offset="0.426" stop-color="#b030b0"/><stop offset="0.430" stop-color="#3050c0"/><stop offset="0.438" stop-color="#71a830"/><stop offset="0.460" stop-color="#61a837"/><stop offset="0.499" stop-color="#20a058"/><stop offset="0.538" stop-color="#1080b8"/><stop offset="0.577" stop-color="#2859c0"/><stop offset="0.692" stop-color="#3a3bb8"/><stop offset="0.695" stop-color="#20b080"/><stop offset="0.698" stop-color="#98d828"/><stop offset="0.702" stop-color="#70c030"/><stop offset="0.706" stop-color="#20a0a0"/><stop offset="0.722" stop-color="#4041c0"/><stop offset="0.850" stop-color="#3058d0"/><stop offset="0.883" stop-color="#1098b8"/><stop offset="0.908" stop-color="#30b048"/><stop offset="0.934" stop-color="#a0c020"/><stop offset="0.958" stop-color="#a0c020"/><stop offset="0.968" stop-color="#1890c0"/><stop offset="0.973" stop-color="#c040c0"/></linearGradient>
<linearGradient id="g115" gradientUnits="userSpaceOnUse" x1="1104.0" y1="850.1" x2="1146.9" y2="1193.1"><stop offset="0.023" stop-color="#3a1208"/><stop offset="0.039" stop-color="#8a3018"/><stop offset="0.103" stop-color="#983618"/><stop offset="0.204" stop-color="#aa3c1c"/><stop offset="0.285" stop-color="#bc4420"/><stop offset="0.424" stop-color="#bc4420"/><stop offset="0.426" stop-color="#b030b0"/><stop offset="0.430" stop-color="#3050c0"/><stop offset="0.438" stop-color="#72a82f"/><stop offset="0.461" stop-color="#62a837"/><stop offset="0.501" stop-color="#20a058"/><stop offset="0.539" stop-color="#1080b8"/><stop offset="0.577" stop-color="#2759c1"/><stop offset="0.691" stop-color="#393cb9"/><stop offset="0.694" stop-color="#20b080"/><stop offset="0.696" stop-color="#98d828"/><stop offset="0.701" stop-color="#70c030"/><stop offset="0.705" stop-color="#20a0a0"/><stop offset="0.721" stop-color="#3f42c1"/><stop offset="0.849" stop-color="#2f59d1"/><stop offset="0.882" stop-color="#1099b8"/><stop offset="0.907" stop-color="#30b048"/><stop offset="0.933" stop-color="#a1c020"/><stop offset="0.958" stop-color="#a1c020"/><stop offset="0.968" stop-color="#1890c0"/><stop offset="0.973" stop-color="#c040c0"/></linearGradient>
<linearGradient id="g116" gradientUnits="userSpaceOnUse" x1="1120.0" y1="847.0" x2="1163.7" y2="1192.3"><stop offset="0.023" stop-color="#3a1208"/><stop offset="0.039" stop-color="#8a3018"/><stop offset="0.103" stop-color="#983618"/><stop offset="0.204" stop-color="#aa3c1c"/><stop offset="0.285" stop-color="#bc4420"/><stop offset="0.424" stop-color="#bb4420"/><stop offset="0.426" stop-color="#b030b0"/><stop offset="0.430" stop-color="#3050c0"/><stop offset="0.438" stop-color="#73a82e"/><stop offset="0.462" stop-color="#64a836"/><stop offset="0.502" stop-color="#20a159"/><stop offset="0.541" stop-color="#1081b9"/><stop offset="0.578" stop-color="#275ac1"/><stop offset="0.689" stop-color="#383dba"/><stop offset="0.692" stop-color="#20b080"/><stop offset="0.695" stop-color="#98d828"/><stop offset="0.699" stop-color="#70c030"/><stop offset="0.703" stop-color="#20a0a0"/><stop offset="0.719" stop-color="#3e43c1"/><stop offset="0.848" stop-color="#2f5ad1"/><stop offset="0.881" stop-color="#1099b8"/><stop offset="0.906" stop-color="#30b048"/><stop offset="0.932" stop-color="#a1c120"/><stop offset="0.958" stop-color="#a1c120"/><stop offset="0.969" stop-color="#1890c0"/><stop offset="0.973" stop-color="#c040c0"/></linearGradient>
<linearGradient id="g117" gradientUnits="userSpaceOnUse" x1="1136.0" y1="843.8" x2="1180.2" y2="1191.6"><stop offset="0.023" stop-color="#3a1208"/><stop offset="0.039" stop-color="#8a3018"/><stop offset="0.102" stop-color="#983618"/><stop offset="0.203" stop-color="#aa3c1c"/><stop offset="0.285" stop-color="#bc4420"/><stop offset="0.424" stop-color="#bb4420"/><stop offset="0.426" stop-color="#b030b0"/><stop offset="0.430" stop-color="#3050c0"/><stop offset="0.438" stop-color="#74a92e"/><stop offset="0.464" stop-color="#65a935"/><stop offset="0.503" stop-color="#20a159"/><stop offset="0.542" stop-color="#1081b9"/><stop offset="0.579" stop-color="#265bc2"/><stop offset="0.687" stop-color="#383fba"/><stop offset="0.690" stop-color="#20b080"/><stop offset="0.693" stop-color="#98d828"/><stop offset="0.697" stop-color="#70c030"/><stop offset="0.702" stop-color="#20a0a0"/><stop offset="0.718" stop-color="#3d44c2"/><stop offset="0.846" stop-color="#2e5bd1"/><stop offset="0.880" stop-color="#1099b8"/><stop offset="0.905" stop-color="#30b148"/><stop offset="0.931" stop-color="#a1c120"/><stop offset="0.958" stop-color="#a1c120"/><stop offset="0.969" stop-color="#1890c0"/><stop offset="0.973" stop-color="#c040c0"/></linearGradient>
<linearGradient id="g118" gradientUnits="userSpaceOnUse" x1="1152.0" y1="840.7" x2="1196.9" y2="1190.8"><stop offset="0.022" stop-color="#3a1208"/><stop offset="0.039" stop-color="#8a3018"/><stop offset="0.102" stop-color="#983618"/><stop offset="0.203" stop-color="#ab3c1c"/><stop offset="0.286" stop-color="#bc4420"/><stop offset="0.424" stop-color="#bb4320"/><stop offset="0.426" stop-color="#b030b0"/><stop offset="0.430" stop-color="#3050c0"/><stop offset="0.438" stop-color="#75a92d"/><stop offset="0.465" stop-color="#66a934"/><stop offset="0.505" stop-color="#20a159"/><stop offset="0.544" stop-color="#1081b9"/><stop offset="0.579" stop-color="#265cc2"/><stop offset="0.686" stop-color="#3740bb"/><stop offset="0.689" stop-color="#20b080"/><stop offset="0.692" stop-color="#98d828"/><stop offset="0.696" stop-color="#70c030"/><stop offset="0.700" stop-color="#20a0a0"/><stop offset="0.716" stop-color="#3c46c2"/><stop offset="0.845" stop-color="#2e5cd2"/><stop offset="0.879" stop-color="#109ab8"/><stop offset="0.904" stop-color="#30b148"/><stop offset="0.930" stop-color="#a2c120"/><stop offset="0.958" stop-color="#a2c120"/><stop offset="0.969" stop-color="#1890c0"/><stop offset="0.973" stop-color="#c040c0"/></linearGradient>
<linearGradient id="g119" gradientUnits="userSpaceOnUse" x1="1168.0" y1="837.6" x2="1214.0" y2="1189.8"><stop offset="0.022" stop-color="#3a1208"/><stop offset="0.038" stop-color="#8a3018"/><stop offset="0.102" stop-color="#983618"/><stop offset="0.203" stop-color="#ab3c1c"/><stop offset="0.286" stop-color="#bc4420"/><stop offset="0.424" stop-color="#bb4320"/><stop offset="0.426" stop-color="#b030b0"/><stop offset="0.430" stop-color="#3050c0"/><stop offset="0.438" stop-color="#75a92d"/><stop offset="0.466" stop-color="#68a933"/><stop offset="0.506" stop-color="#20a25a"/><stop offset="0.545" stop-color="#1082ba"/><stop offset="0.580" stop-color="#255dc3"/><stop offset="0.684" stop-color="#3741bb"/><stop offset="0.687" stop-color="#20b080"/><stop offset="0.690" stop-color="#98d828"/><stop offset="0.694" stop-color="#70c030"/><stop offset="0.699" stop-color="#20a0a0"/><stop offset="0.715" stop-color="#3b47c3"/><stop offset="0.844" stop-color="#2d5dd2"/><stop offset="0.877" stop-color="#109ab8"/><stop offset="0.903" stop-color="#30b148"/><stop offset="0.929" stop-color="#a2c120"/><stop offset="0.958" stop-color="#a2c120"/><stop offset="0.969" stop-color="#1890c0"/><stop offset="0.973" stop-color="#c040c0"/></linearGradient>
<linearGradient id="g120" gradientUnits="userSpaceOnUse" x1="1184.0" y1="834.5" x2="1230.8" y2="1188.9"><stop offset="0.022" stop-color="#3a1208"/><stop offset="0.038" stop-color="#893018"/><stop offset="0.101" stop-color="#983618"/><stop offset="0.203" stop-color="#ab3d1c"/><stop offset="0.286" stop-color="#bb4420"/><stop offset="0.424" stop-color="#ba4320"/><stop offset="0.425" stop-color="#b030b0"/><stop offset="0.430" stop-color="#3050c0"/><stop offset="0.437" stop-color="#76a92c"/><stop offset="0.467" stop-color="#69a932"/><stop offset="0.507" stop-color="#20a25a"/><stop offset="0.546" stop-color="#1082ba"/><stop offset="0.581" stop-color="#255ec3"/><stop offset="0.683" stop-color="#3642bc"/><stop offset="0.686" stop-color="#20b080"/><stop offset="0.689" stop-color="#98d828"/><stop offset="0.693" stop-color="#70c030"/><stop offset="0.697" stop-color="#20a0a0"/><stop offset="0.713" stop-color="#3a48c3"/><stop offset="0.843" stop-color="#2d5ed2"/><stop offset="0.876" stop-color="#109ab8"/><stop offset="0.902" stop-color="#30b148"/><stop offset="0.928" stop-color="#a2c220"/><stop offset="0.958" stop-color="#a2c220"/><stop offset="0.969" stop-color="#1890c0"/><stop offset="0.974" stop-color="#c040c0"/></linearGradient>
<linearGradient id="g121" gradientUnits="userSpaceOnUse" x1="1200.0" y1="831.4" x2="1247.0" y2="1188.1"><stop offset="0.022" stop-color="#3a1208"/><stop offset="0.038" stop-color="#893018"/><stop offset="0.101" stop-color="#983618"/><stop offset="0.203" stop-color="#ab3d1c"/><stop offset="0.287" stop-color="#bb4420"/><stop offset="0.424" stop-color="#ba4320"/><stop offset="0.425" stop-color="#b030b0"/><stop offset="0.429" stop-color="#3050c0"/><stop offset="0.437" stop-color="#77a92b"/><stop offset="0.468" stop-color="#6aa931"/><stop offset="0.509" stop-color="#20a25a"/><stop offset="0.548" stop-color="#1082ba"/><stop offset="0.581" stop-color="#245fc3"/><stop offset="0.681" stop-color="#3544bd"/><stop offset="0.684" stop-color="#20b080"/><stop offset="0.687" stop-color="#98d828"/><stop offset="0.691" stop-color="#70c030"/><stop offset="0.696" stop-color="#20a0a0"/><stop offset="0.712" stop-color="#3a49c4"/><stop offset="0.842" stop-color="#2c5fd3"/><stop offset="0.875" stop-color="#109bb8"/><stop offset="0.901" stop-color="#30b148"/><stop offset="0.927" stop-color="#a3c220"/><stop offset="0.958" stop-color="#a3c220"/><stop offset="0.970" stop-color="#1890c0"/><stop offset="0.974" stop-color="#c040c0"/></linearGradient>
<linearGradient id="g122" gradientUnits="userSpaceOnUse" x1="1216.0" y1="828.3" x2="1263.2" y2="1187.4"><stop offset="0.022" stop-color="#3a1208"/><stop offset="0.038" stop-color="#893018"/><stop offset="0.101" stop-color="#983618"/><stop offset="0.203" stop-color="#ab3d1c"/><stop offset="0.287" stop-color="#bb4420"/><stop offset="0.424" stop-color="#ba4320"/><stop offset="0.425" stop-color="#b030b0"/><stop offset="0.429" stop-color="#3050c0"/><stop offset="0.437" stop-color="#78a92b"/><stop offset="0.469" stop-color="#6ca930"/><stop offset="0.510" stop-color="#20a35b"/><stop offset="0.549" stop-color="#1083bb"/><stop offset="0.582" stop-color="#2360c4"/><stop offset="0.680" stop-color="#3545bd"/><stop offset="0.683" stop-color="#20b080"/><stop offset="0.686" stop-color="#98d828"/><stop offset="0.690" stop-color="#70c030"/><stop offset="0.694" stop-color="#20a0a0"/><stop offset="0.710" stop-color="#394bc5"/><stop offset="0.840" stop-color="#2c60d3"/><stop offset="0.874" stop-color="#109bb8"/><stop offset="0.899" stop-color="#30b248"/><stop offset="0.926" stop-color="#a3c220"/><stop offset="0.958" stop-color="#a3c220"/><stop offset="0.970" stop-color="#1890c0"/><stop offset="0.974" stop-color="#c040c0"/></linearGradient>
<linearGradient id="g123" gradientUnits="userSpaceOnUse" x1="1232.0" y1="825.2" x2="1280.1" y2="1186.3"><stop offset="0.022" stop-color="#3a1208"/><stop offset="0.038" stop-color="#893018"/><stop offset="0.100" stop-color="#983618"/><stop offset="0.203" stop-color="#ab3d1c"/><stop offset="0.287" stop-color="#bb4420"/><stop offset="0.423" stop-color="#b94320"/><stop offset="0.425" stop-color="#b030b0"/><stop offset="0.429" stop-color="#3050c0"/><stop offset="0.437" stop-color="#79a92a"/><stop offset="0.470" stop-color="#6da92f"/><stop offset="0.511" stop-color="#20a35b"/><stop offset="0.550" stop-color="#1083bb"/><stop offset="0.583" stop-color="#2361c4"/><stop offset="0.679" stop-color="#3446be"/><stop offset="0.682" stop-color="#20b080"/><stop offset="0.684" stop-color="#98d828"/><stop offset="0.688" stop-color="#70c030"/><stop offset="0.693" stop-color="#20a0a0"/><stop offset="0.709" stop-color="#384cc5"/><stop offset="0.839" stop-color="#2b60d3"/><stop offset="0.873" stop-color="#109bb8"/><stop offset="0.898" stop-color="#30b248"/><stop offset="0.926" stop-color="#a3c320"/><stop offset="0.958" stop-color="#a3c320"/><stop offset="0.970" stop-color="#1890c0"/><stop offset="0.974" stop-color="#c040c0"/></linearGradient>
<linearGradient id="g124" gradientUnits="userSpaceOnUse" x1="1248.0" y1="822.2" x2="1297.4" y2="1185.1"><stop offset="0.022" stop-color="#3a1208"/><stop offset="0.038" stop-color="#893018"/><stop offset="0.100" stop-color="#983618"/><stop offset="0.202" stop-color="#ab3d1c"/><stop offset="0.287" stop-color="#bb4420"/><stop offset="0.423" stop-color="#b94320"/><stop offset="0.424" stop-color="#b030b0"/><stop offset="0.428" stop-color="#3050c0"/><stop offset="0.436" stop-color="#7aaa2a"/><stop offset="0.471" stop-color="#6eaa2e"/><stop offset="0.513" stop-color="#20a35b"/><stop offset="0.552" stop-color="#1083bb"/><stop offset="0.584" stop-color="#2262c5"/><stop offset="0.678" stop-color="#3448be"/><stop offset="0.680" stop-color="#20b080"/><stop offset="0.683" stop-color="#98d828"/><stop offset="0.687" stop-color="#70c030"/><stop offset="0.692" stop-color="#20a0a0"/><stop offset="0.708" stop-color="#374dc6"/><stop offset="0.838" stop-color="#2b61d4"/><stop offset="0.872" stop-color="#109cb8"/><stop offset="0.897" stop-color="#30b248"/><stop offset="0.925" stop-color="#a4c320"/><stop offset="0.958" stop-color="#a4c320"/><stop offset="0.970" stop-color="#1890c0"/><stop offset="0.974" stop-color="#c040c0"/></linearGradient>
<linearGradient id="g125" gradientUnits="userSpaceOnUse" x1="1264.0" y1="819.1" x2="1314.3" y2="1183.9"><stop offset="0.022" stop-color="#3a1208"/><stop offset="0.038" stop-color="#893019"/><stop offset="0.100" stop-color="#993618"/><stop offset="0.202" stop-color="#ac3d1d"/><stop offset="0.287" stop-color="#bb431f"/><stop offset="0.423" stop-color="#b9421f"/><stop offset="0.424" stop-color="#b030b0"/><stop offset="0.428" stop-color="#3050c0"/><stop offset="0.436" stop-color="#7baa29"/><stop offset="0.471" stop-color="#70aa2d"/><stop offset="0.514" stop-color="#20a45c"/><stop offset="0.553" stop-color="#1084bc"/><stop offset="0.584" stop-color="#2263c5"/><stop offset="0.677" stop-color="#3349bf"/><stop offset="0.679" stop-color="#20b080"/><stop offset="0.682" stop-color="#98d828"/><stop offset="0.686" stop-color="#70c030"/><stop offset="0.690" stop-color="#20a0a0"/><stop offset="0.707" stop-color="#364ec6"/><stop offset="0.837" stop-color="#2a62d4"/><stop offset="0.871" stop-color="#109cb8"/><stop offset="0.896" stop-color="#30b248"/><stop offset="0.923" stop-color="#a4c320"/><stop offset="0.958" stop-color="#a4c320"/><stop offset="0.970" stop-color="#1890c0"/><stop offset="0.974" stop-color="#c040c0"/></linearGradient>
<linearGradient id="g126" gradientUnits="userSpaceOnUse" x1="1280.0" y1="816.1" x2="1331.1" y2="1182.7"><stop offset="0.021" stop-color="#3a1208"/><stop offset="0.037" stop-color="#893019"/><stop offset="0.099" stop-color="#993618"/><stop offset="0.202" stop-color="#ac3d1d"/><stop offset="0.287" stop-color="#bb431f"/><stop offset="0.422" stop-color="#b9421f"/><stop offset="0.423" stop-color="#b030b0"/><stop offset="0.427" stop-color="#3050c0"/><stop offset="0.435" stop-color="#7caa28"/><stop offset="0.472" stop-color="#71aa2d"/><stop offset="0.515" stop-color="#20a45c"/><stop offset="0.554" stop-color="#1084bc"/><stop offset="0.585" stop-color="#2163c6"/><stop offset="0.675" stop-color="#324ac0"/><stop offset="0.678" stop-color="#20b080"/><stop offset="0.681" stop-color="#98d828"/><stop offset="0.685" stop-color="#70c030"/><stop offset="0.689" stop-color="#20a0a0"/><stop offset="0.706" stop-color="#3550c7"/><stop offset="0.836" stop-color="#2a63d4"/><stop offset="0.870" stop-color="#109cb8"/><stop offset="0.895" stop-color="#30b248"/><stop offset="0.922" stop-color="#a4c320"/><stop offset="0.958" stop-color="#a4c320"/><stop offset="0.971" stop-color="#1890c0"/><stop offset="0.975" stop-color="#c040c0"/></linearGradient>
<linearGradient id="g127" gradientUnits="userSpaceOnUse" x1="1296.0" y1="813.1" x2="1347.5" y2="1181.7"><stop offset="0.021" stop-color="#3a1208"/><stop offset="0.037" stop-color="#893019"/><stop offset="0.099" stop-color="#993618"/><stop offset="0.201" stop-color="#ac3d1d"/><stop offset="0.288" stop-color="#bb431f"/><stop offset="0.422" stop-color="#b8421f"/><stop offset="0.423" stop-color="#b030b0"/><stop offset="0.427" stop-color="#3050c0"/><stop offset="0.434" stop-color="#7daa28"/><stop offset="0.473" stop-color="#73aa2c"/><stop offset="0.516" stop-color="#20a45c"/><stop offset="0.555" stop-color="#1084bc"/><stop offset="0.585" stop-color="#2164c6"/><stop offset="0.674" stop-color="#324cc0"/><stop offset="0.677" stop-color="#20b080"/><stop offset="0.679" stop-color="#98d828"/><stop offset="0.683" stop-color="#70c030"/><stop offset="0.688" stop-color="#20a0a0"/><stop offset="0.704" stop-color="#3551c7"/><stop offset="0.835" stop-color="#2964d5"/><stop offset="0.868" stop-color="#109db8"/><stop offset="0.894" stop-color="#30b248"/><stop offset="0.921" stop-color="#a5c420"/><stop offset="0.958" stop-color="#a5c420"/><stop offset="0.971" stop-color="#1890c0"/><stop offset="0.975" stop-color="#c040c0"/></linearGradient>
<linearGradient id="g128" gradientUnits="userSpaceOnUse" x1="1312.0" y1="810.1" x2="1363.9" y2="1180.6"><stop offset="0.021" stop-color="#3a1208"/><stop offset="0.037" stop-color="#893019"/><stop offset="0.099" stop-color="#993618"/><stop offset="0.201" stop-color="#ac3d1d"/><stop offset="0.288" stop-color="#bb431f"/><stop offset="0.421" stop-color="#b8421f"/><stop offset="0.422" stop-color="#b030b0"/><stop offset="0.426" stop-color="#3050c0"/><stop offset="0.434" stop-color="#7eaa27"/><stop offset="0.474" stop-color="#74aa2b"/><stop offset="0.517" stop-color="#20a45c"/><stop offset="0.556" stop-color="#1084bc"/><stop offset="0.586" stop-color="#2065c7"/><stop offset="0.673" stop-color="#314dc1"/><stop offset="0.675" stop-color="#20b080"/><stop offset="0.678" stop-color="#98d828"/><stop offset="0.682" stop-color="#70c030"/><stop offset="0.687" stop-color="#20a0a0"/><stop offset="0.703" stop-color="#3452c8"/><stop offset="0.834" stop-color="#2965d5"/><stop offset="0.867" stop-color="#109db8"/><stop offset="0.892" stop-color="#30b348"/><stop offset="0.920" stop-color="#a5c420"/><stop offset="0.958" stop-color="#a5c420"/><stop offset="0.971" stop-color="#1890c0"/><stop offset="0.975" stop-color="#c040c0"/></linearGradient>
<linearGradient id="g129" gradientUnits="userSpaceOnUse" x1="1328.0" y1="807.1" x2="1381.1" y2="1179.2"><stop offset="0.021" stop-color="#3a1208"/><stop offset="0.037" stop-color="#893019"/><stop offset="0.098" stop-color="#993618"/><stop offset="0.201" stop-color="#ac3d1d"/><stop offset="0.288" stop-color="#bb431f"/><stop offset="0.421" stop-color="#b8421f"/><stop offset="0.422" stop-color="#b030b0"/><stop offset="0.426" stop-color="#3050c0"/><stop offset="0.433" stop-color="#7faa27"/><stop offset="0.474" stop-color="#75aa2a"/><stop offset="0.518" stop-color="#20a55d"/><stop offset="0.557" stop-color="#1085bd"/><stop offset="0.587" stop-color="#2066c7"/><stop offset="0.672" stop-color="#314ec1"/><stop offset="0.674" stop-color="#20b080"/><stop offset="0.677" stop-color="#98d828"/><stop offset="0.681" stop-color="#70c030"/><stop offset="0.685" stop-color="#20a0a0"/><stop offset="0.702" stop-color="#3353c8"/><stop offset="0.833" stop-color="#2866d6"/><stop offset="0.866" stop-color="#109eb8"/><stop offset="0.891" stop-color="#30b348"/><stop offset="0.919" stop-color="#a6c420"/><stop offset="0.958" stop-color="#a6c420"/><stop offset="0.971" stop-color="#1890c0"/><stop offset="0.975" stop-color="#c040c0"/></linearGradient>
<linearGradient id="g130" gradientUnits="userSpaceOnUse" x1="1344.0" y1="804.0" x2="1398.3" y2="1177.8"><stop offset="0.021" stop-color="#3a1208"/><stop offset="0.037" stop-color="#893019"/><stop offset="0.098" stop-color="#993618"/><stop offset="0.201" stop-color="#ac3d1d"/><stop offset="0.288" stop-color="#bb431f"/><stop offset="0.420" stop-color="#b8421f"/><stop offset="0.421" stop-color="#b030b0"/><stop offset="0.425" stop-color="#3050c0"/><stop offset="0.433" stop-color="#80ab26"/><stop offset="0.475" stop-color="#77ab29"/><stop offset="0.519" stop-color="#20a55d"/><stop offset="0.559" stop-color="#1085bd"/><stop offset="0.587" stop-color="#1f67c8"/><stop offset="0.671" stop-color="#304fc2"/><stop offset="0.673" stop-color="#20b080"/><stop offset="0.676" stop-color="#98d828"/><stop offset="0.680" stop-color="#70c030"/><stop offset="0.684" stop-color="#20a0a0"/><stop offset="0.701" stop-color="#3255c9"/><stop offset="0.831" stop-color="#2867d6"/><stop offset="0.865" stop-color="#109eb8"/><stop offset="0.890" stop-color="#30b348"/><stop offset="0.918" stop-color="#a6c420"/><stop offset="0.958" stop-color="#a6c420"/><stop offset="0.971" stop-color="#1890c0"/><stop offset="0.975" stop-color="#c040c0"/></linearGradient>
<linearGradient id="g131" gradientUnits="userSpaceOnUse" x1="1360.0" y1="801.0" x2="1415.1" y2="1176.5"><stop offset="0.021" stop-color="#3a1208"/><stop offset="0.037" stop-color="#883019"/><stop offset="0.097" stop-color="#993618"/><stop offset="0.200" stop-color="#ac3e1d"/><stop offset="0.288" stop-color="#ba431f"/><stop offset="0.419" stop-color="#b7421f"/><stop offset="0.421" stop-color="#b030b0"/><stop offset="0.425" stop-color="#3050c0"/><stop offset="0.432" stop-color="#81ab25"/><stop offset="0.476" stop-color="#78ab28"/><stop offset="0.520" stop-color="#20a55d"/><stop offset="0.560" stop-color="#1085bd"/><stop offset="0.588" stop-color="#1f68c8"/><stop offset="0.669" stop-color="#2f51c3"/><stop offset="0.672" stop-color="#20b080"/><stop offset="0.675" stop-color="#98d828"/><stop offset="0.679" stop-color="#70c030"/><stop offset="0.683" stop-color="#20a0a0"/><stop offset="0.700" stop-color="#3156c9"/><stop offset="0.830" stop-color="#2768d6"/><stop offset="0.864" stop-color="#109eb8"/><stop offset="0.889" stop-color="#30b348"/><stop offset="0.917" stop-color="#a6c520"/><stop offset="0.958" stop-color="#a6c520"/><stop offset="0.971" stop-color="#1890c0"/><stop offset="0.975" stop-color="#c040c0"/></linearGradient>
<linearGradient id="g132" gradientUnits="userSpaceOnUse" x1="1376.0" y1="798.1" x2="1431.4" y2="1175.3"><stop offset="0.021" stop-color="#3a1208"/><stop offset="0.037" stop-color="#883019"/><stop offset="0.097" stop-color="#993618"/><stop offset="0.200" stop-color="#ac3e1d"/><stop offset="0.287" stop-color="#ba431f"/><stop offset="0.418" stop-color="#b7421f"/><stop offset="0.420" stop-color="#b030b0"/><stop offset="0.424" stop-color="#3050c0"/><stop offset="0.431" stop-color="#82ab25"/><stop offset="0.476" stop-color="#79ab27"/><stop offset="0.521" stop-color="#20a65e"/><stop offset="0.561" stop-color="#1086be"/><stop offset="0.588" stop-color="#1e69c8"/><stop offset="0.668" stop-color="#2f52c3"/><stop offset="0.671" stop-color="#20b080"/><stop offset="0.674" stop-color="#98d828"/><stop offset="0.678" stop-color="#70c030"/><stop offset="0.682" stop-color="#20a0a0"/><stop offset="0.699" stop-color="#3057ca"/><stop offset="0.829" stop-color="#2768d7"/><stop offset="0.863" stop-color="#109fb8"/><stop offset="0.888" stop-color="#30b348"/><stop offset="0.916" stop-color="#a7c520"/><stop offset="0.958" stop-color="#a7c520"/><stop offset="0.971" stop-color="#1890c0"/><stop offset="0.975" stop-color="#c040c0"/></linearGradient>
<linearGradient id="g133" gradientUnits="userSpaceOnUse" x1="1392.0" y1="795.1" x2="1448.2" y2="1173.9"><stop offset="0.021" stop-color="#3a1208"/><stop offset="0.037" stop-color="#883019"/><stop offset="0.097" stop-color="#993618"/><stop offset="0.199" stop-color="#ad3e1d"/><stop offset="0.287" stop-color="#ba431f"/><stop offset="0.418" stop-color="#b7411f"/><stop offset="0.419" stop-color="#b030b0"/><stop offset="0.423" stop-color="#3050c0"/><stop offset="0.430" stop-color="#83ab24"/><stop offset="0.477" stop-color="#7bab26"/><stop offset="0.522" stop-color="#20a65e"/><stop offset="0.562" stop-color="#1086be"/><stop offset="0.589" stop-color="#1e6ac9"/><stop offset="0.667" stop-color="#2e53c4"/><stop offset="0.670" stop-color="#20b080"/><stop offset="0.673" stop-color="#98d828"/><stop offset="0.677" stop-color="#70c030"/><stop offset="0.681" stop-color="#20a0a0"/><stop offset="0.698" stop-color="#3058ca"/><stop offset="0.828" stop-color="#2669d7"/><stop offset="0.862" stop-color="#109fb8"/><stop offset="0.886" stop-color="#30b348"/><stop offset="0.915" stop-color="#a7c520"/><stop offset="0.958" stop-color="#a7c520"/><stop offset="0.972" stop-color="#1890c0"/><stop offset="0.975" stop-color="#c040c0"/></linearGradient>
<linearGradient id="g134" gradientUnits="userSpaceOnUse" x1="1408.0" y1="792.1" x2="1465.8" y2="1172.2"><stop offset="0.021" stop-color="#3a1208"/><stop offset="0.036" stop-color="#883019"/><stop offset="0.096" stop-color="#993618"/><stop offset="0.199" stop-color="#ad3e1d"/><stop offset="0.287" stop-color="#ba431f"/><stop offset="0.417" stop-color="#b7411f"/><stop offset="0.418" stop-color="#b030b0"/><stop offset="0.422" stop-color="#3050c0"/><stop offset="0.429" stop-color="#84ab23"/><stop offset="0.477" stop-color="#7cab25"/><stop offset="0.523" stop-color="#20a65e"/><stop offset="0.563" stop-color="#1086be"/><stop offset="0.590" stop-color="#1d6bc9"/><stop offset="0.666" stop-color="#2d55c5"/><stop offset="0.669" stop-color="#20b080"/><stop offset="0.672" stop-color="#98d828"/><stop offset="0.675" stop-color="#70c030"/><stop offset="0.680" stop-color="#20a0a0"/><stop offset="0.697" stop-color="#2f5acb"/><stop offset="0.827" stop-color="#266ad7"/><stop offset="0.860" stop-color="#109fb8"/><stop offset="0.885" stop-color="#30b448"/><stop offset="0.914" stop-color="#a7c520"/><stop offset="0.958" stop-color="#a7c520"/><stop offset="0.972" stop-color="#1890c0"/><stop offset="0.976" stop-color="#c040c0"/></linearGradient>
<linearGradient id="g135" gradientUnits="userSpaceOnUse" x1="1424.0" y1="789.2" x2="1482.6" y2="1170.7"><stop offset="0.020" stop-color="#3a1208"/><stop offset="0.036" stop-color="#883019"/><stop offset="0.096" stop-color="#993618"/><stop offset="0.198" stop-color="#ad3e1d"/><stop offset="0.287" stop-color="#ba431f"/><stop offset="0.416" stop-color="#b6411f"/><stop offset="0.417" stop-color="#b030b0"/><stop offset="0.421" stop-color="#3050c0"/><stop offset="0.429" stop-color="#85ab23"/><stop offset="0.478" stop-color="#7eab24"/><stop offset="0.524" stop-color="#20a75f"/><stop offset="0.564" stop-color="#1087bf"/><stop offset="0.590" stop-color="#1d6cca"/><stop offset="0.665" stop-color="#2d56c5"/><stop offset="0.668" stop-color="#20b080"/><stop offset="0.670" stop-color="#98d828"/><stop offset="0.674" stop-color="#70c030"/><stop offset="0.679" stop-color="#20a0a0"/><stop offset="0.696" stop-color="#2e5bcb"/><stop offset="0.826" stop-color="#256bd8"/><stop offset="0.859" stop-color="#10a0b8"/><stop offset="0.884" stop-color="#30b448"/><stop offset="0.913" stop-color="#a8c620"/><stop offset="0.958" stop-color="#a8c620"/><stop offset="0.972" stop-color="#1890c0"/><stop offset="0.976" stop-color="#c040c0"/></linearGradient>
<linearGradient id="g136" gradientUnits="userSpaceOnUse" x1="1440.0" y1="786.2" x2="1499.3" y2="1169.2"><stop offset="0.020" stop-color="#3a1208"/><stop offset="0.036" stop-color="#883019"/><stop offset="0.095" stop-color="#993618"/><stop offset="0.198" stop-color="#ad3e1d"/><stop offset="0.287" stop-color="#ba431f"/><stop offset="0.415" stop-color="#b6411f"/><stop offset="0.416" stop-color="#b030b0"/><stop offset="0.420" stop-color="#3050c0"/><stop offset="0.428" stop-color="#86ab22"/><stop offset="0.478" stop-color="#7fab23"/><stop offset="0.524" stop-color="#20a75f"/><stop offset="0.565" stop-color="#1087bf"/><stop offset="0.591" stop-color="#1c6dca"/><stop offset="0.664" stop-color="#2c57c6"/><stop offset="0.667" stop-color="#20b080"/><stop offset="0.669" stop-color="#98d828"/><stop offset="0.673" stop-color="#70c030"/><stop offset="0.678" stop-color="#20a0a0"/><stop offset="0.695" stop-color="#2d5ccc"/><stop offset="0.825" stop-color="#256cd8"/><stop offset="0.858" stop-color="#10a0b8"/><stop offset="0.883" stop-color="#30b448"/><stop offset="0.912" stop-color="#a8c620"/><stop offset="0.958" stop-color="#a8c620"/><stop offset="0.972" stop-color="#1890c0"/><stop offset="0.976" stop-color="#c040c0"/></linearGradient>
<linearGradient id="g137" gradientUnits="userSpaceOnUse" x1="1456.0" y1="783.3" x2="1516.5" y2="1167.4"><stop offset="0.020" stop-color="#3a1208"/><stop offset="0.036" stop-color="#883019"/><stop offset="0.095" stop-color="#993618"/><stop offset="0.197" stop-color="#ad3e1d"/><stop offset="0.287" stop-color="#ba431f"/><stop offset="0.414" stop-color="#b6411f"/><stop offset="0.415" stop-color="#b030b0"/><stop offset="0.419" stop-color="#3050c0"/><stop offset="0.426" stop-color="#87ac22"/><stop offset="0.478" stop-color="#80ac23"/><stop offset="0.525" stop-color="#20a75f"/><stop offset="0.566" stop-color="#1087bf"/><stop offset="0.591" stop-color="#1b6dcb"/><stop offset="0.663" stop-color="#2c58c6"/><stop offset="0.665" stop-color="#20b080"/><stop offset="0.668" stop-color="#98d828"/><stop offset="0.672" stop-color="#70c030"/><stop offset="0.677" stop-color="#20a0a0"/><stop offset="0.694" stop-color="#2c5dcd"/><stop offset="0.824" stop-color="#246dd8"/><stop offset="0.857" stop-color="#10a0b8"/><stop offset="0.881" stop-color="#30b448"/><stop offset="0.910" stop-color="#a8c620"/><stop offset="0.958" stop-color="#a8c620"/><stop offset="0.972" stop-color="#1890c0"/><stop offset="0.976" stop-color="#c040c0"/></linearGradient>
<linearGradient id="g138" gradientUnits="userSpaceOnUse" x1="1472.0" y1="780.4" x2="1532.8" y2="1165.9"><stop offset="0.020" stop-color="#3a1208"/><stop offset="0.036" stop-color="#883019"/><stop offset="0.095" stop-color="#993618"/><stop offset="0.197" stop-color="#ad3e1d"/><stop offset="0.286" stop-color="#ba431f"/><stop offset="0.413" stop-color="#b5411f"/><stop offset="0.414" stop-color="#b030b0"/><stop offset="0.418" stop-color="#3050c0"/><stop offset="0.425" stop-color="#88ac21"/><stop offset="0.479" stop-color="#82ac22"/><stop offset="0.526" stop-color="#20a75f"/><stop offset="0.567" stop-color="#1087bf"/><stop offset="0.592" stop-color="#1b6ecb"/><stop offset="0.662" stop-color="#2b5ac7"/><stop offset="0.665" stop-color="#20b080"/><stop offset="0.667" stop-color="#98d828"/><stop offset="0.671" stop-color="#70c030"/><stop offset="0.676" stop-color="#20a0a0"/><stop offset="0.693" stop-color="#2b5fcd"/><stop offset="0.823" stop-color="#246ed9"/><stop offset="0.856" stop-color="#10a1b8"/><stop offset="0.880" stop-color="#30b448"/><stop offset="0.909" stop-color="#a9c720"/><stop offset="0.958" stop-color="#a9c720"/><stop offset="0.972" stop-color="#1890c0"/><stop offset="0.976" stop-color="#c040c0"/></linearGradient>
<linearGradient id="g139" gradientUnits="userSpaceOnUse" x1="1488.0" y1="777.4" x2="1549.7" y2="1164.2"><stop offset="0.020" stop-color="#3a1208"/><stop offset="0.036" stop-color="#883019"/><stop offset="0.094" stop-color="#993618"/><stop offset="0.197" stop-color="#ad3e1d"/><stop offset="0.286" stop-color="#ba431f"/><stop offset="0.412" stop-color="#b5411f"/><stop offset="0.413" stop-color="#b030b0"/><stop offset="0.417" stop-color="#3050c0"/><stop offset="0.424" stop-color="#89ac20"/><stop offset="0.479" stop-color="#83ac21"/><stop offset="0.527" stop-color="#20a860"/><stop offset="0.568" stop-color="#1088c0"/><stop offset="0.592" stop-color="#1a6fcc"/><stop offset="0.661" stop-color="#2a5bc8"/><stop offset="0.664" stop-color="#20b080"/><stop offset="0.666" stop-color="#98d828"/><stop offset="0.670" stop-color="#70c030"/><stop offset="0.675" stop-color="#20a0a0"/><stop offset="0.692" stop-color="#2a60ce"/><stop offset="0.822" stop-color="#246fd9"/><stop offset="0.855" stop-color="#10a1b8"/><stop offset="0.879" stop-color="#30b548"/><stop offset="0.908" stop-color="#a9c720"/><stop offset="0.958" stop-color="#a9c720"/><stop offset="0.972" stop-color="#1890c0"/><stop offset="0.976" stop-color="#c040c0"/></linearGradient>
<linearGradient id="g140" gradientUnits="userSpaceOnUse" x1="1504.0" y1="774.5" x2="1567.6" y2="1162.1"><stop offset="0.020" stop-color="#3a1208"/><stop offset="0.036" stop-color="#883019"/><stop offset="0.094" stop-color="#993618"/><stop offset="0.196" stop-color="#ae3e1d"/><stop offset="0.286" stop-color="#ba431f"/><stop offset="0.411" stop-color="#b5401f"/><stop offset="0.412" stop-color="#b030b0"/><stop offset="0.416" stop-color="#3050c0"/><stop offset="0.423" stop-color="#8aac20"/><stop offset="0.480" stop-color="#84ac20"/><stop offset="0.527" stop-color="#20a860"/><stop offset="0.568" stop-color="#1088c0"/><stop offset="0.592" stop-color="#1a70cc"/><stop offset="0.660" stop-color="#2a5cc8"/><stop offset="0.662" stop-color="#20b080"/><stop offset="0.665" stop-color="#98d828"/><stop offset="0.669" stop-color="#70c030"/><stop offset="0.674" stop-color="#20a0a0"/><stop offset="0.691" stop-color="#2a61ce"/><stop offset="0.820" stop-color="#2370d9"/><stop offset="0.853" stop-color="#10a1b8"/><stop offset="0.878" stop-color="#30b548"/><stop offset="0.907" stop-color="#a9c720"/><stop offset="0.958" stop-color="#a9c720"/><stop offset="0.972" stop-color="#1890c0"/><stop offset="0.976" stop-color="#c040c0"/></linearGradient>
<linearGradient id="g141" gradientUnits="userSpaceOnUse" x1="1520.0" y1="771.6" x2="1584.4" y2="1160.4"><stop offset="0.020" stop-color="#3a1208"/><stop offset="0.036" stop-color="#883019"/><stop offset="0.093" stop-color="#993618"/><stop offset="0.195" stop-color="#ae3e1d"/><stop offset="0.285" stop-color="#ba431f"/><stop offset="0.410" stop-color="#b5401f"/><stop offset="0.411" stop-color="#b030b0"/><stop offset="0.415" stop-color="#3050c0"/><stop offset="0.422" stop-color="#8bad20"/><stop offset="0.481" stop-color="#85ad20"/><stop offset="0.528" stop-color="#20a960"/><stop offset="0.569" stop-color="#1089c0"/><stop offset="0.592" stop-color="#1a71cd"/><stop offset="0.659" stop-color="#295ec9"/><stop offset="0.661" stop-color="#20b080"/><stop offset="0.664" stop-color="#98d828"/><stop offset="0.668" stop-color="#70c030"/><stop offset="0.672" stop-color="#20a0a0"/><stop offset="0.690" stop-color="#2962cf"/><stop offset="0.819" stop-color="#2370da"/><stop offset="0.852" stop-color="#10a2b8"/><stop offset="0.876" stop-color="#30b548"/><stop offset="0.906" stop-color="#aac720"/><stop offset="0.957" stop-color="#aac720"/><stop offset="0.972" stop-color="#1890c0"/><stop offset="0.976" stop-color="#c040c0"/></linearGradient>
<linearGradient id="g142" gradientUnits="userSpaceOnUse" x1="1536.0" y1="768.6" x2="1601.3" y2="1158.6"><stop offset="0.020" stop-color="#3a1208"/><stop offset="0.036" stop-color="#873019"/><stop offset="0.093" stop-color="#993618"/><stop offset="0.195" stop-color="#ae3f1d"/><stop offset="0.285" stop-color="#b9431f"/><stop offset="0.409" stop-color="#b4401f"/><stop offset="0.410" stop-color="#b030b0"/><stop offset="0.414" stop-color="#3050c0"/><stop offset="0.421" stop-color="#8cad20"/><stop offset="0.482" stop-color="#86ad20"/><stop offset="0.528" stop-color="#20aa60"/><stop offset="0.569" stop-color="#108ac0"/><stop offset="0.592" stop-color="#1a71cd"/><stop offset="0.658" stop-color="#285fc9"/><stop offset="0.660" stop-color="#20b080"/><stop offset="0.663" stop-color="#98d828"/><stop offset="0.667" stop-color="#70c030"/><stop offset="0.671" stop-color="#20a0a0"/><stop offset="0.689" stop-color="#2863cf"/><stop offset="0.818" stop-color="#2271da"/><stop offset="0.851" stop-color="#10a2b8"/><stop offset="0.875" stop-color="#30b548"/><stop offset="0.904" stop-color="#aac820"/><stop offset="0.957" stop-color="#aac820"/><stop offset="0.973" stop-color="#1890c0"/><stop offset="0.976" stop-color="#c040c0"/></linearGradient>
<linearGradient id="g143" gradientUnits="userSpaceOnUse" x1="1552.0" y1="765.7" x2="1618.7" y2="1156.5"><stop offset="0.020" stop-color="#3a1208"/><stop offset="0.035" stop-color="#873019"/><stop offset="0.092" stop-color="#993618"/><stop offset="0.194" stop-color="#ae3f1d"/><stop offset="0.284" stop-color="#b9431f"/><stop offset="0.407" stop-color="#b4401f"/><stop offset="0.408" stop-color="#b030b0"/><stop offset="0.412" stop-color="#3050c0"/><stop offset="0.419" stop-color="#8cad20"/><stop offset="0.483" stop-color="#87ad20"/><stop offset="0.528" stop-color="#20ab60"/><stop offset="0.569" stop-color="#108bc0"/><stop offset="0.591" stop-color="#1a71ce"/><stop offset="0.657" stop-color="#2760ca"/><stop offset="0.659" stop-color="#20b080"/><stop offset="0.662" stop-color="#98d828"/><stop offset="0.666" stop-color="#70c030"/><stop offset="0.670" stop-color="#20a0a0"/><stop offset="0.688" stop-color="#2765d0"/><stop offset="0.817" stop-color="#2272da"/><stop offset="0.850" stop-color="#10a2b8"/><stop offset="0.874" stop-color="#30b548"/><stop offset="0.903" stop-color="#aac820"/><stop offset="0.957" stop-color="#aac820"/><stop offset="0.973" stop-color="#1890c0"/><stop offset="0.976" stop-color="#c040c0"/></linearGradient>
<linearGradient id="g144" gradientUnits="userSpaceOnUse" x1="1568.0" y1="762.9" x2="1635.2" y2="1154.7"><stop offset="0.020" stop-color="#3a1208"/><stop offset="0.035" stop-color="#873019"/><stop offset="0.092" stop-color="#993618"/><stop offset="0.194" stop-color="#ae3f1d"/><stop offset="0.284" stop-color="#b9431f"/><stop offset="0.406" stop-color="#b4401f"/><stop offset="0.407" stop-color="#b030b0"/><stop offset="0.411" stop-color="#3050c0"/><stop offset="0.418" stop-color="#8dae20"/><stop offset="0.485" stop-color="#88ae20"/><stop offset="0.528" stop-color="#20ac60"/><stop offset="0.569" stop-color="#108cc0"/><stop offset="0.591" stop-color="#1a72cf"/><stop offset="0.655" stop-color="#2661cb"/><stop offset="0.658" stop-color="#20b080"/><stop offset="0.661" stop-color="#98d828"/><stop offset="0.665" stop-color="#70c030"/><stop offset="0.669" stop-color="#20a0a0"/><stop offset="0.687" stop-color="#2666d0"/><stop offset="0.816" stop-color="#2173db"/><stop offset="0.848" stop-color="#10a3b8"/><stop offset="0.872" stop-color="#30b548"/><stop offset="0.902" stop-color="#abc820"/><stop offset="0.957" stop-color="#abc820"/><stop offset="0.973" stop-color="#1890c0"/><stop offset="0.976" stop-color="#c040c0"/></linearGradient>
<linearGradient id="g145" gradientUnits="userSpaceOnUse" x1="1584.0" y1="760.0" x2="1652.0" y2="1152.7"><stop offset="0.020" stop-color="#3a1208"/><stop offset="0.035" stop-color="#873019"/><stop offset="0.091" stop-color="#993618"/><stop offset="0.193" stop-color="#ae3f1d"/><stop offset="0.283" stop-color="#b9431f"/><stop offset="0.405" stop-color="#b4401f"/><stop offset="0.406" stop-color="#b030b0"/><stop offset="0.409" stop-color="#3050c0"/><stop offset="0.417" stop-color="#8eae20"/><stop offset="0.486" stop-color="#88ae20"/><stop offset="0.528" stop-color="#20ac60"/><stop offset="0.569" stop-color="#108cc0"/><stop offset="0.591" stop-color="#1a72cf"/><stop offset="0.654" stop-color="#2663cb"/><stop offset="0.657" stop-color="#20b080"/><stop offset="0.660" stop-color="#98d828"/><stop offset="0.664" stop-color="#70c030"/><stop offset="0.668" stop-color="#20a0a0"/><stop offset="0.685" stop-color="#2567d1"/><stop offset="0.814" stop-color="#2174db"/><stop offset="0.847" stop-color="#10a3b8"/><stop offset="0.871" stop-color="#30b648"/><stop offset="0.901" stop-color="#abc820"/><stop offset="0.957" stop-color="#abc820"/><stop offset="0.973" stop-color="#1890c0"/><stop offset="0.977" stop-color="#c040c0"/></linearGradient>
<linearGradient id="g146" gradientUnits="userSpaceOnUse" x1="1600.0" y1="757.1" x2="1669.4" y2="1150.5"><stop offset="0.020" stop-color="#3a1208"/><stop offset="0.035" stop-color="#873019"/><stop offset="0.091" stop-color="#993618"/><stop offset="0.192" stop-color="#ae3f1d"/><stop offset="0.283" stop-color="#b9431f"/><stop offset="0.403" stop-color="#b3401f"/><stop offset="0.404" stop-color="#b030b0"/><stop offset="0.408" stop-color="#3050c0"/><stop offset="0.415" stop-color="#8faf20"/><stop offset="0.487" stop-color="#89af20"/><stop offset="0.528" stop-color="#20ad60"/><stop offset="0.569" stop-color="#108dc0"/><stop offset="0.590" stop-color="#1a73d0"/><stop offset="0.653" stop-color="#2564cc"/><stop offset="0.656" stop-color="#20b080"/><stop offset="0.658" stop-color="#98d828"/><stop offset="0.662" stop-color="#70c030"/><stop offset="0.667" stop-color="#20a0a0"/><stop offset="0.684" stop-color="#2568d1"/><stop offset="0.813" stop-color="#2075dc"/><stop offset="0.846" stop-color="#10a4b8"/><stop offset="0.869" stop-color="#30b648"/><stop offset="0.899" stop-color="#acc920"/><stop offset="0.957" stop-color="#acc920"/><stop offset="0.973" stop-color="#1890c0"/><stop offset="0.977" stop-color="#c040c0"/></linearGradient>
<linearGradient id="g147" gradientUnits="userSpaceOnUse" x1="1616.0" y1="754.2" x2="1686.5" y2="1148.4"><stop offset="0.020" stop-color="#3a1208"/><stop offset="0.035" stop-color="#873019"/><stop offset="0.090" stop-color="#993618"/><stop offset="0.192" stop-color="#ae3f1d"/><stop offset="0.282" stop-color="#b9431f"/><stop offset="0.402" stop-color="#b3401f"/><stop offset="0.403" stop-color="#b030b0"/><stop offset="0.407" stop-color="#3050c0"/><stop offset="0.414" stop-color="#8faf20"/><stop offset="0.489" stop-color="#8aaf20"/><stop offset="0.528" stop-color="#20ae60"/><stop offset="0.569" stop-color="#108ec0"/><stop offset="0.590" stop-color="#1a73d1"/><stop offset="0.652" stop-color="#2465cd"/><stop offset="0.654" stop-color="#20b080"/><stop offset="0.657" stop-color="#98d828"/><stop offset="0.661" stop-color="#70c030"/><stop offset="0.666" stop-color="#20a0a0"/><stop offset="0.683" stop-color="#246ad2"/><stop offset="0.812" stop-color="#2076dc"/><stop offset="0.844" stop-color="#10a4b8"/><stop offset="0.868" stop-color="#30b648"/><stop offset="0.898" stop-color="#acc920"/><stop offset="0.957" stop-color="#acc920"/><stop offset="0.973" stop-color="#1890c0"/><stop offset="0.977" stop-color="#c040c0"/></linearGradient>
<linearGradient id="g148" gradientUnits="userSpaceOnUse" x1="1632.0" y1="751.3" x2="1703.9" y2="1146.1"><stop offset="0.020" stop-color="#3a1208"/><stop offset="0.035" stop-color="#87301a"/><stop offset="0.090" stop-color="#9a3618"/><stop offset="0.191" stop-color="#af3f1e"/><stop offset="0.281" stop-color="#b9421e"/><stop offset="0.400" stop-color="#b33f1e"/><stop offset="0.401" stop-color="#b030b0"/><stop offset="0.405" stop-color="#3050c0"/><stop offset="0.412" stop-color="#90b020"/><stop offset="0.490" stop-color="#8bb020"/><stop offset="0.528" stop-color="#20af60"/><stop offset="0.569" stop-color="#108fc0"/><stop offset="0.589" stop-color="#1a74d1"/><stop offset="0.651" stop-color="#2367cd"/><stop offset="0.653" stop-color="#20b080"/><stop offset="0.656" stop-color="#98d828"/><stop offset="0.660" stop-color="#70c030"/><stop offset="0.664" stop-color="#20a0a0"/><stop offset="0.682" stop-color="#236bd2"/><stop offset="0.811" stop-color="#1f77dc"/><stop offset="0.843" stop-color="#10a4b8"/><stop offset="0.867" stop-color="#30b648"/><stop offset="0.897" stop-color="#acc920"/><stop offset="0.957" stop-color="#acc920"/><stop offset="0.973" stop-color="#1890c0"/><stop offset="0.977" stop-color="#c040c0"/></linearGradient>
<linearGradient id="g149" gradientUnits="userSpaceOnUse" x1="1648.0" y1="748.4" x2="1721.2" y2="1143.7"><stop offset="0.020" stop-color="#3a1208"/><stop offset="0.035" stop-color="#87301a"/><stop offset="0.089" stop-color="#9a3618"/><stop offset="0.190" stop-color="#af3f1e"/><stop offset="0.281" stop-color="#b9421e"/><stop offset="0.398" stop-color="#b33f1e"/><stop offset="0.400" stop-color="#b030b0"/><stop offset="0.403" stop-color="#3050c0"/><stop offset="0.411" stop-color="#91b020"/><stop offset="0.491" stop-color="#8cb020"/><stop offset="0.528" stop-color="#20b060"/><stop offset="0.569" stop-color="#1090c0"/><stop offset="0.589" stop-color="#1a74d2"/><stop offset="0.650" stop-color="#2268ce"/><stop offset="0.652" stop-color="#20b080"/><stop offset="0.655" stop-color="#98d828"/><stop offset="0.659" stop-color="#70c030"/><stop offset="0.663" stop-color="#20a0a0"/><stop offset="0.681" stop-color="#226cd3"/><stop offset="0.809" stop-color="#1f78dd"/><stop offset="0.842" stop-color="#10a5b8"/><stop offset="0.865" stop-color="#30b648"/><stop offset="0.896" stop-color="#adc920"/><stop offset="0.957" stop-color="#adc920"/><stop offset="0.973" stop-color="#1890c0"/><stop offset="0.977" stop-color="#c040c0"/></linearGradient>
<linearGradient id="g150" gradientUnits="userSpaceOnUse" x1="1664.0" y1="745.5" x2="1738.2" y2="1141.4"><stop offset="0.020" stop-color="#3a1208"/><stop offset="0.035" stop-color="#87301a"/><stop offset="0.089" stop-color="#9a3618"/><stop offset="0.189" stop-color="#af3f1e"/><stop offset="0.280" stop-color="#b9421e"/><stop offset="0.397" stop-color="#b23f1e"/><stop offset="0.398" stop-color="#b030b0"/><stop offset="0.402" stop-color="#3050c0"/><stop offset="0.409" stop-color="#92b020"/><stop offset="0.492" stop-color="#8db020"/><stop offset="0.527" stop-color="#20b160"/><stop offset="0.569" stop-color="#1091c0"/><stop offset="0.588" stop-color="#1a74d3"/><stop offset="0.648" stop-color="#2169cf"/><stop offset="0.651" stop-color="#20b080"/><stop offset="0.654" stop-color="#98d828"/><stop offset="0.658" stop-color="#70c030"/><stop offset="0.662" stop-color="#20a0a0"/><stop offset="0.680" stop-color="#216dd3"/><stop offset="0.808" stop-color="#1e78dd"/><stop offset="0.840" stop-color="#10a5b8"/><stop offset="0.864" stop-color="#30b648"/><stop offset="0.894" stop-color="#adca20"/><stop offset="0.957" stop-color="#adca20"/><stop offset="0.973" stop-color="#1890c0"/><stop offset="0.977" stop-color="#c040c0"/></linearGradient>
<linearGradient id="g151" gradientUnits="userSpaceOnUse" x1="1680.0" y1="742.7" x2="1754.9" y2="1139.2"><stop offset="0.019" stop-color="#3a1208"/><stop offset="0.034" stop-color="#87301a"/><stop offset="0.088" stop-color="#9a3618"/><stop offset="0.188" stop-color="#af3f1e"/><stop offset="0.279" stop-color="#b9421e"/><stop offset="0.395" stop-color="#b23f1e"/><stop offset="0.396" stop-color="#b030b0"/><stop offset="0.400" stop-color="#3050c0"/><stop offset="0.407" stop-color="#92b120"/><stop offset="0.493" stop-color="#8eb120"/><stop offset="0.527" stop-color="#20b260"/><stop offset="0.569" stop-color="#1092c0"/><stop offset="0.587" stop-color="#1a75d3"/><stop offset="0.647" stop-color="#206acf"/><stop offset="0.650" stop-color="#20b080"/><stop offset="0.652" stop-color="#98d828"/><stop offset="0.656" stop-color="#70c030"/><stop offset="0.661" stop-color="#20a0a0"/><stop offset="0.679" stop-color="#206fd4"/><stop offset="0.807" stop-color="#1e79dd"/><stop offset="0.839" stop-color="#10a5b8"/><stop offset="0.862" stop-color="#30b748"/><stop offset="0.893" stop-color="#adca20"/><stop offset="0.956" stop-color="#adca20"/><stop offset="0.973" stop-color="#1890c0"/><stop offset="0.977" stop-color="#c040c0"/></linearGradient>
<linearGradient id="g152" gradientUnits="userSpaceOnUse" x1="1696.0" y1="739.8" x2="1771.7" y2="1137.0"><stop offset="0.019" stop-color="#3a1208"/><stop offset="0.034" stop-color="#87301a"/><stop offset="0.088" stop-color="#9a3618"/><stop offset="0.188" stop-color="#af3f1e"/><stop offset="0.278" stop-color="#b9421e"/><stop offset="0.393" stop-color="#b23f1e"/><stop offset="0.394" stop-color="#b030b0"/><stop offset="0.398" stop-color="#3050c0"/><stop offset="0.405" stop-color="#93b120"/><stop offset="0.494" stop-color="#8eb120"/><stop offset="0.527" stop-color="#20b260"/><stop offset="0.569" stop-color="#1092c0"/><stop offset="0.587" stop-color="#1a75d4"/><stop offset="0.646" stop-color="#206cd0"/><stop offset="0.648" stop-color="#20b080"/><stop offset="0.651" stop-color="#98d828"/><stop offset="0.655" stop-color="#70c030"/><stop offset="0.660" stop-color="#20a0a0"/><stop offset="0.677" stop-color="#1f70d5"/><stop offset="0.805" stop-color="#1d7ade"/><stop offset="0.838" stop-color="#10a6b8"/><stop offset="0.861" stop-color="#30b748"/><stop offset="0.892" stop-color="#aeca20"/><stop offset="0.956" stop-color="#aeca20"/><stop offset="0.973" stop-color="#1890c0"/><stop offset="0.977" stop-color="#c040c0"/></linearGradient>
<linearGradient id="g153" gradientUnits="userSpaceOnUse" x1="1712.0" y1="736.9" x2="1788.8" y2="1134.5"><stop offset="0.019" stop-color="#3a1208"/><stop offset="0.034" stop-color="#86301a"/><stop offset="0.087" stop-color="#9a3618"/><stop offset="0.187" stop-color="#af401e"/><stop offset="0.278" stop-color="#b8421e"/><stop offset="0.392" stop-color="#b13f1e"/><stop offset="0.393" stop-color="#b030b0"/><stop offset="0.396" stop-color="#3050c0"/><stop offset="0.404" stop-color="#94b220"/><stop offset="0.495" stop-color="#8fb220"/><stop offset="0.527" stop-color="#20b360"/><stop offset="0.569" stop-color="#1093c0"/><stop offset="0.586" stop-color="#1a76d4"/><stop offset="0.645" stop-color="#1f6dd0"/><stop offset="0.647" stop-color="#20b080"/><stop offset="0.650" stop-color="#98d828"/><stop offset="0.654" stop-color="#70c030"/><stop offset="0.658" stop-color="#20a0a0"/><stop offset="0.676" stop-color="#1f71d5"/><stop offset="0.804" stop-color="#1d7bde"/><stop offset="0.836" stop-color="#10a6b8"/><stop offset="0.859" stop-color="#30b748"/><stop offset="0.890" stop-color="#aecb20"/><stop offset="0.956" stop-color="#aecb20"/><stop offset="0.973" stop-color="#1890c0"/><stop offset="0.977" stop-color="#c040c0"/></linearGradient>
<linearGradient id="g154" gradientUnits="userSpaceOnUse" x1="1728.0" y1="734.1" x2="1806.2" y2="1131.8"><stop offset="0.019" stop-color="#3a1208"/><stop offset="0.034" stop-color="#86301a"/><stop offset="0.087" stop-color="#9a3618"/><stop offset="0.186" stop-color="#af401e"/><stop offset="0.277" stop-color="#b8421e"/><stop offset="0.390" stop-color="#b13f1e"/><stop offset="0.391" stop-color="#b030b0"/><stop offset="0.395" stop-color="#3050c0"/><stop offset="0.402" stop-color="#95b220"/><stop offset="0.496" stop-color="#90b220"/><stop offset="0.527" stop-color="#20b460"/><stop offset="0.568" stop-color="#1094c0"/><stop offset="0.586" stop-color="#1a76d5"/><stop offset="0.643" stop-color="#1e6ed1"/><stop offset="0.646" stop-color="#20b080"/><stop offset="0.649" stop-color="#98d828"/><stop offset="0.653" stop-color="#70c030"/><stop offset="0.657" stop-color="#20a0a0"/><stop offset="0.675" stop-color="#1e72d6"/><stop offset="0.802" stop-color="#1c7cde"/><stop offset="0.834" stop-color="#10a6b8"/><stop offset="0.857" stop-color="#30b748"/><stop offset="0.888" stop-color="#aecb20"/><stop offset="0.955" stop-color="#aecb20"/><stop offset="0.972" stop-color="#1890c0"/><stop offset="0.976" stop-color="#c040c0"/><stop offset="0.979" stop-color="#c04020"/><stop offset="0.981" stop-color="#b83c1e"/></linearGradient>
<linearGradient id="g155" gradientUnits="userSpaceOnUse" x1="1744.0" y1="731.2" x2="1823.8" y2="1129.1"><stop offset="0.019" stop-color="#3a1208"/><stop offset="0.034" stop-color="#86301a"/><stop offset="0.086" stop-color="#9a3618"/><stop offset="0.185" stop-color="#b0401e"/><stop offset="0.276" stop-color="#b8421e"/><stop offset="0.388" stop-color="#b13e1e"/><stop offset="0.389" stop-color="#b030b0"/><stop offset="0.393" stop-color="#3050c0"/><stop offset="0.400" stop-color="#95b320"/><stop offset="0.497" stop-color="#91b320"/><stop offset="0.526" stop-color="#20b560"/><stop offset="0.568" stop-color="#1095c0"/><stop offset="0.585" stop-color="#1a77d6"/><stop offset="0.642" stop-color="#1d70d2"/><stop offset="0.644" stop-color="#20b080"/><stop offset="0.647" stop-color="#98d828"/><stop offset="0.651" stop-color="#70c030"/><stop offset="0.656" stop-color="#20a0a0"/><stop offset="0.674" stop-color="#1d74d6"/><stop offset="0.800" stop-color="#1c7ddf"/><stop offset="0.831" stop-color="#10a7b8"/><stop offset="0.854" stop-color="#30b748"/><stop offset="0.885" stop-color="#afcb20"/><stop offset="0.953" stop-color="#afcb20"/><stop offset="0.970" stop-color="#1890c0"/><stop offset="0.974" stop-color="#c040c0"/><stop offset="0.977" stop-color="#c04020"/><stop offset="0.981" stop-color="#b83c1e"/></linearGradient>
<linearGradient id="g156" gradientUnits="userSpaceOnUse" x1="1760.0" y1="728.3" x2="1841.2" y2="1126.3"><stop offset="0.019" stop-color="#3a1208"/><stop offset="0.034" stop-color="#86301a"/><stop offset="0.086" stop-color="#9a3618"/><stop offset="0.184" stop-color="#b0401e"/><stop offset="0.275" stop-color="#b8421e"/><stop offset="0.386" stop-color="#b13e1e"/><stop offset="0.387" stop-color="#b030b0"/><stop offset="0.391" stop-color="#3050c0"/><stop offset="0.398" stop-color="#96b320"/><stop offset="0.498" stop-color="#92b320"/><stop offset="0.526" stop-color="#20b660"/><stop offset="0.568" stop-color="#1096c0"/><stop offset="0.584" stop-color="#1a77d6"/><stop offset="0.641" stop-color="#1c71d2"/><stop offset="0.643" stop-color="#20b080"/><stop offset="0.646" stop-color="#98d828"/><stop offset="0.650" stop-color="#70c030"/><stop offset="0.655" stop-color="#20a0a0"/><stop offset="0.672" stop-color="#1c75d7"/><stop offset="0.797" stop-color="#1b7edf"/><stop offset="0.829" stop-color="#10a7b8"/><stop offset="0.851" stop-color="#30b848"/><stop offset="0.882" stop-color="#afcb20"/><stop offset="0.950" stop-color="#afcb20"/><stop offset="0.968" stop-color="#1890c0"/><stop offset="0.971" stop-color="#c040c0"/><stop offset="0.975" stop-color="#c04020"/><stop offset="0.981" stop-color="#b83c1e"/></linearGradient>
<linearGradient id="g157" gradientUnits="userSpaceOnUse" x1="1776.0" y1="725.3" x2="1858.2" y2="1123.6"><stop offset="0.019" stop-color="#3a1208"/><stop offset="0.034" stop-color="#86301a"/><stop offset="0.085" stop-color="#9a3618"/><stop offset="0.183" stop-color="#b0401e"/><stop offset="0.274" stop-color="#b8421e"/><stop offset="0.384" stop-color="#b03e1e"/><stop offset="0.385" stop-color="#b030b0"/><stop offset="0.389" stop-color="#3050c0"/><stop offset="0.396" stop-color="#97b320"/><stop offset="0.499" stop-color="#93b320"/><stop offset="0.526" stop-color="#20b760"/><stop offset="0.568" stop-color="#1097c0"/><stop offset="0.583" stop-color="#1a77d7"/><stop offset="0.639" stop-color="#1b72d3"/><stop offset="0.642" stop-color="#20b080"/><stop offset="0.645" stop-color="#98d828"/><stop offset="0.649" stop-color="#70c030"/><stop offset="0.653" stop-color="#20a0a0"/><stop offset="0.671" stop-color="#1b76d7"/><stop offset="0.795" stop-color="#1b7fdf"/><stop offset="0.826" stop-color="#10a7b8"/><stop offset="0.848" stop-color="#30b848"/><stop offset="0.878" stop-color="#afcc20"/><stop offset="0.948" stop-color="#afcc20"/><stop offset="0.965" stop-color="#1890c0"/><stop offset="0.969" stop-color="#c040c0"/><stop offset="0.973" stop-color="#c04020"/><stop offset="0.981" stop-color="#b83c1e"/></linearGradient>
<linearGradient id="g158" gradientUnits="userSpaceOnUse" x1="1792.0" y1="722.4" x2="1874.9" y2="1121.1"><stop offset="0.019" stop-color="#3a1208"/><stop offset="0.034" stop-color="#86301a"/><stop offset="0.085" stop-color="#9a3618"/><stop offset="0.182" stop-color="#b0401e"/><stop offset="0.273" stop-color="#b8421e"/><stop offset="0.382" stop-color="#b03e1e"/><stop offset="0.383" stop-color="#b030b0"/><stop offset="0.386" stop-color="#3050c0"/><stop offset="0.394" stop-color="#98b420"/><stop offset="0.500" stop-color="#94b420"/><stop offset="0.525" stop-color="#20b860"/><stop offset="0.567" stop-color="#1098c0"/><stop offset="0.583" stop-color="#1a78d8"/><stop offset="0.638" stop-color="#1a73d4"/><stop offset="0.640" stop-color="#20b080"/><stop offset="0.643" stop-color="#98d828"/><stop offset="0.647" stop-color="#70c030"/><stop offset="0.652" stop-color="#20a0a0"/><stop offset="0.669" stop-color="#1a77d8"/><stop offset="0.792" stop-color="#1a80e0"/><stop offset="0.823" stop-color="#10a8b8"/><stop offset="0.844" stop-color="#30b848"/><stop offset="0.875" stop-color="#b0cc20"/><stop offset="0.945" stop-color="#b0cc20"/><stop offset="0.963" stop-color="#1890c0"/><stop offset="0.966" stop-color="#c040c0"/><stop offset="0.970" stop-color="#c04020"/><stop offset="0.981" stop-color="#b83c1e"/></linearGradient>
<linearGradient id="g159" gradientUnits="userSpaceOnUse" x1="1808.0" y1="719.6" x2="1891.5" y2="1118.6"><stop offset="0.019" stop-color="#3a1208"/><stop offset="0.034" stop-color="#86301a"/><stop offset="0.084" stop-color="#9a3618"/><stop offset="0.181" stop-color="#b0401e"/><stop offset="0.272" stop-color="#b8421e"/><stop offset="0.380" stop-color="#b03e1e"/><stop offset="0.381" stop-color="#b030b0"/><stop offset="0.384" stop-color="#3050c0"/><stop offset="0.392" stop-color="#98b420"/><stop offset="0.499" stop-color="#94b420"/><stop offset="0.524" stop-color="#20b860"/><stop offset="0.566" stop-color="#1098c0"/><stop offset="0.581" stop-color="#1a78d8"/><stop offset="0.636" stop-color="#1b73d4"/><stop offset="0.639" stop-color="#20b080"/><stop offset="0.642" stop-color="#98d828"/><stop offset="0.646" stop-color="#70c030"/><stop offset="0.650" stop-color="#20a0a0"/><stop offset="0.668" stop-color="#1a78d8"/><stop offset="0.789" stop-color="#1a80e0"/><stop offset="0.819" stop-color="#10a8b8"/><stop offset="0.840" stop-color="#30b848"/><stop offset="0.871" stop-color="#b0cc20"/><stop offset="0.942" stop-color="#b0cc20"/><stop offset="0.960" stop-color="#1890c0"/><stop offset="0.963" stop-color="#c040c0"/><stop offset="0.967" stop-color="#c04020"/><stop offset="0.981" stop-color="#b83c1e"/></linearGradient>
<linearGradient id="g160" gradientUnits="userSpaceOnUse" x1="1824.0" y1="716.7" x2="1909.0" y2="1115.6"><stop offset="0.019" stop-color="#391208"/><stop offset="0.034" stop-color="#85301a"/><stop offset="0.084" stop-color="#9a3618"/><stop offset="0.180" stop-color="#b0401e"/><stop offset="0.271" stop-color="#b8421e"/><stop offset="0.377" stop-color="#b03e1e"/><stop offset="0.379" stop-color="#b030b0"/><stop offset="0.382" stop-color="#3050c0"/><stop offset="0.390" stop-color="#98b420"/><stop offset="0.498" stop-color="#94b420"/><stop offset="0.523" stop-color="#20b860"/><stop offset="0.564" stop-color="#1098c0"/><stop offset="0.580" stop-color="#1a78d8"/><stop offset="0.635" stop-color="#1c72d4"/><stop offset="0.637" stop-color="#20b080"/><stop offset="0.640" stop-color="#98d828"/><stop offset="0.644" stop-color="#70c030"/><stop offset="0.649" stop-color="#20a0a0"/><stop offset="0.666" stop-color="#1a78d8"/><stop offset="0.785" stop-color="#1a80e0"/><stop offset="0.814" stop-color="#10a8b8"/><stop offset="0.836" stop-color="#30b848"/><stop offset="0.865" stop-color="#b0cc20"/><stop offset="0.939" stop-color="#b0cc20"/><stop offset="0.956" stop-color="#1890c0"/><stop offset="0.960" stop-color="#c040c0"/><stop offset="0.963" stop-color="#c04020"/><stop offset="0.981" stop-color="#b83c1e"/></linearGradient>
<linearGradient id="g161" gradientUnits="userSpaceOnUse" x1="1840.0" y1="713.8" x2="1927.1" y2="1112.2"><stop offset="0.019" stop-color="#391208"/><stop offset="0.033" stop-color="#85301a"/><stop offset="0.083" stop-color="#9a3618"/><stop offset="0.178" stop-color="#b0401e"/><stop offset="0.270" stop-color="#b7421e"/><stop offset="0.375" stop-color="#af3e1e"/><stop offset="0.376" stop-color="#b030b0"/><stop offset="0.380" stop-color="#3050c0"/><stop offset="0.387" stop-color="#99b420"/><stop offset="0.496" stop-color="#95b420"/><stop offset="0.521" stop-color="#20b760"/><stop offset="0.563" stop-color="#1097bf"/><stop offset="0.578" stop-color="#1a77d7"/><stop offset="0.633" stop-color="#1e71d4"/><stop offset="0.636" stop-color="#20b080"/><stop offset="0.639" stop-color="#98d828"/><stop offset="0.643" stop-color="#70c030"/><stop offset="0.647" stop-color="#20a0a0"/><stop offset="0.664" stop-color="#1a78d9"/><stop offset="0.781" stop-color="#1b7fe0"/><stop offset="0.810" stop-color="#10a8b8"/><stop offset="0.831" stop-color="#30b848"/><stop offset="0.860" stop-color="#b1cc20"/><stop offset="0.935" stop-color="#b1cc20"/><stop offset="0.952" stop-color="#1890c0"/><stop offset="0.956" stop-color="#c040c0"/><stop offset="0.960" stop-color="#c04020"/><stop offset="0.981" stop-color="#b83c1e"/></linearGradient>
<linearGradient id="g162" gradientUnits="userSpaceOnUse" x1="1856.0" y1="710.9" x2="1944.3" y2="1109.2"><stop offset="0.019" stop-color="#381108"/><stop offset="0.033" stop-color="#852f19"/><stop offset="0.083" stop-color="#993618"/><stop offset="0.177" stop-color="#b0401e"/><stop offset="0.269" stop-color="#b7421e"/><stop offset="0.373" stop-color="#af3e1e"/><stop offset="0.374" stop-color="#b030b0"/><stop offset="0.377" stop-color="#3050c0"/><stop offset="0.385" stop-color="#99b420"/><stop offset="0.494" stop-color="#95b420"/><stop offset="0.519" stop-color="#20b760"/><stop offset="0.560" stop-color="#1097bf"/><stop offset="0.576" stop-color="#1a77d7"/><stop offset="0.632" stop-color="#1f6fd3"/><stop offset="0.634" stop-color="#20b080"/><stop offset="0.637" stop-color="#98d828"/><stop offset="0.641" stop-color="#70c030"/><stop offset="0.646" stop-color="#20a0a0"/><stop offset="0.662" stop-color="#1a78d9"/><stop offset="0.776" stop-color="#1b7fe0"/><stop offset="0.805" stop-color="#10a8b8"/><stop offset="0.826" stop-color="#30b848"/><stop offset="0.854" stop-color="#b1cd20"/><stop offset="0.931" stop-color="#b1cd20"/><stop offset="0.949" stop-color="#1890c0"/><stop offset="0.952" stop-color="#c040c0"/><stop offset="0.956" stop-color="#c04020"/><stop offset="0.981" stop-color="#b83c1e"/></linearGradient>
<linearGradient id="g163" gradientUnits="userSpaceOnUse" x1="1872.0" y1="708.0" x2="1961.1" y2="1106.3"><stop offset="0.019" stop-color="#381108"/><stop offset="0.033" stop-color="#842f19"/><stop offset="0.082" stop-color="#993618"/><stop offset="0.176" stop-color="#b1401e"/><stop offset="0.267" stop-color="#b7411e"/><stop offset="0.370" stop-color="#af3d1e"/><stop offset="0.371" stop-color="#b030b0"/><stop offset="0.375" stop-color="#3050c0"/><stop offset="0.382" stop-color="#99b420"/><stop offset="0.492" stop-color="#95b420"/><stop offset="0.518" stop-color="#20b760"/><stop offset="0.558" stop-color="#1097bf"/><stop offset="0.574" stop-color="#1a77d7"/><stop offset="0.630" stop-color="#206ed3"/><stop offset="0.632" stop-color="#20b080"/><stop offset="0.635" stop-color="#98d828"/><stop offset="0.639" stop-color="#70c030"/><stop offset="0.644" stop-color="#20a0a0"/><stop offset="0.660" stop-color="#1a78d9"/><stop offset="0.772" stop-color="#1b7fe0"/><stop offset="0.800" stop-color="#10a8b8"/><stop offset="0.821" stop-color="#30b848"/><stop offset="0.848" stop-color="#b1cd20"/><stop offset="0.927" stop-color="#b1cd20"/><stop offset="0.945" stop-color="#1890c0"/><stop offset="0.948" stop-color="#c040c0"/><stop offset="0.952" stop-color="#c04020"/><stop offset="0.981" stop-color="#b83c1e"/></linearGradient>
<linearGradient id="g164" gradientUnits="userSpaceOnUse" x1="1888.0" y1="705.1" x2="1978.5" y2="1103.2"><stop offset="0.019" stop-color="#371108"/><stop offset="0.033" stop-color="#842f19"/><stop offset="0.082" stop-color="#993618"/><stop offset="0.174" stop-color="#b1401e"/><stop offset="0.266" stop-color="#b7411e"/><stop offset="0.368" stop-color="#af3d1e"/><stop offset="0.369" stop-color="#b030b0"/><stop offset="0.373" stop-color="#3050c0"/><stop offset="0.380" stop-color="#9ab420"/><stop offset="0.491" stop-color="#96b420"/><stop offset="0.516" stop-color="#20b660"/><stop offset="0.556" stop-color="#1096be"/><stop offset="0.572" stop-color="#1a76d6"/><stop offset="0.628" stop-color="#226dd3"/><stop offset="0.631" stop-color="#20b080"/><stop offset="0.634" stop-color="#98d828"/><stop offset="0.638" stop-color="#70c030"/><stop offset="0.642" stop-color="#20a0a0"/><stop offset="0.658" stop-color="#1a78da"/><stop offset="0.768" stop-color="#1b7ee0"/><stop offset="0.795" stop-color="#10a8b8"/><stop offset="0.816" stop-color="#30b848"/><stop offset="0.843" stop-color="#b2cd20"/><stop offset="0.923" stop-color="#b2cd20"/><stop offset="0.940" stop-color="#1890c0"/><stop offset="0.944" stop-color="#c040c0"/><stop offset="0.948" stop-color="#c04020"/><stop offset="0.981" stop-color="#b83c1e"/></linearGradient>
<linearGradient id="g165" gradientUnits="userSpaceOnUse" x1="1904.0" y1="702.2" x2="1995.9" y2="1099.9"><stop offset="0.019" stop-color="#371108"/><stop offset="0.033" stop-color="#842f19"/><stop offset="0.081" stop-color="#993618"/><stop offset="0.173" stop-color="#b1401e"/><stop offset="0.265" stop-color="#b6411e"/><stop offset="0.365" stop-color="#ae3d1e"/><stop offset="0.367" stop-color="#b030b0"/><stop offset="0.370" stop-color="#3050c0"/><stop offset="0.378" stop-color="#9ab420"/><stop offset="0.489" stop-color="#96b420"/><stop offset="0.514" stop-color="#20b660"/><stop offset="0.554" stop-color="#1096be"/><stop offset="0.570" stop-color="#1a76d6"/><stop offset="0.626" stop-color="#236bd3"/><stop offset="0.629" stop-color="#20b080"/><stop offset="0.632" stop-color="#98d828"/><stop offset="0.636" stop-color="#70c030"/><stop offset="0.641" stop-color="#20a0a0"/><stop offset="0.656" stop-color="#1a78da"/><stop offset="0.763" stop-color="#1b7ee0"/><stop offset="0.790" stop-color="#10a8b8"/><stop offset="0.811" stop-color="#30b848"/><stop offset="0.837" stop-color="#b2cd20"/><stop offset="0.920" stop-color="#b2cd20"/><stop offset="0.937" stop-color="#1890c0"/><stop offset="0.940" stop-color="#c040c0"/><stop offset="0.944" stop-color="#c04020"/><stop offset="0.981" stop-color="#b83c1e"/></linearGradient>
<linearGradient id="g166" gradientUnits="userSpaceOnUse" x1="1920.0" y1="699.2" x2="2012.9" y2="1096.7"><stop offset="0.019" stop-color="#361108"/><stop offset="0.033" stop-color="#832f19"/><stop offset="0.081" stop-color="#993618"/><stop offset="0.171" stop-color="#b1401e"/><stop offset="0.264" stop-color="#b6411e"/><stop offset="0.363" stop-color="#ae3d1e"/><stop offset="0.364" stop-color="#b030b0"/><stop offset="0.368" stop-color="#3050c0"/><stop offset="0.375" stop-color="#9ab420"/><stop offset="0.487" stop-color="#96b420"/><stop offset="0.512" stop-color="#20b660"/><stop offset="0.552" stop-color="#1096be"/><stop offset="0.568" stop-color="#1a76d6"/><stop offset="0.625" stop-color="#256ad3"/><stop offset="0.627" stop-color="#20b080"/><stop offset="0.630" stop-color="#98d828"/><stop offset="0.634" stop-color="#70c030"/><stop offset="0.639" stop-color="#20a0a0"/><stop offset="0.654" stop-color="#1a78da"/><stop offset="0.759" stop-color="#1c7ee0"/><stop offset="0.785" stop-color="#10a8b8"/><stop offset="0.806" stop-color="#30b848"/><stop offset="0.832" stop-color="#b2cd20"/><stop offset="0.916" stop-color="#b2cd20"/><stop offset="0.933" stop-color="#1890c0"/><stop offset="0.936" stop-color="#c040c0"/><stop offset="0.940" stop-color="#c04020"/><stop offset="0.981" stop-color="#b83c1e"/></linearGradient>
<linearGradient id="g167" gradientUnits="userSpaceOnUse" x1="1936.0" y1="696.3" x2="2029.6" y2="1093.6"><stop offset="0.019" stop-color="#361007"/><stop offset="0.033" stop-color="#832e18"/><stop offset="0.080" stop-color="#983518"/><stop offset="0.170" stop-color="#b1401e"/><stop offset="0.263" stop-color="#b6411e"/><stop offset="0.360" stop-color="#ae3d1d"/><stop offset="0.361" stop-color="#b030b0"/><stop offset="0.365" stop-color="#3050c0"/><stop offset="0.373" stop-color="#9bb420"/><stop offset="0.485" stop-color="#97b420"/><stop offset="0.510" stop-color="#20b560"/><stop offset="0.550" stop-color="#1095bd"/><stop offset="0.566" stop-color="#1a75d5"/><stop offset="0.623" stop-color="#2669d3"/><stop offset="0.625" stop-color="#20b080"/><stop offset="0.628" stop-color="#98d828"/><stop offset="0.632" stop-color="#70c030"/><stop offset="0.637" stop-color="#20a0a0"/><stop offset="0.652" stop-color="#1a78db"/><stop offset="0.755" stop-color="#1c7de0"/><stop offset="0.780" stop-color="#10a8b8"/><stop offset="0.801" stop-color="#30b848"/><stop offset="0.826" stop-color="#b3cd20"/><stop offset="0.912" stop-color="#b3cd20"/><stop offset="0.929" stop-color="#1890c0"/><stop offset="0.932" stop-color="#c040c0"/><stop offset="0.936" stop-color="#c04020"/><stop offset="0.981" stop-color="#b83c1e"/></linearGradient>
<linearGradient id="g168" gradientUnits="userSpaceOnUse" x1="1952.0" y1="693.4" x2="2046.8" y2="1090.2"><stop offset="0.019" stop-color="#351007"/><stop offset="0.033" stop-color="#822e18"/><stop offset="0.080" stop-color="#983518"/><stop offset="0.168" stop-color="#b1401e"/><stop offset="0.261" stop-color="#b6411e"/><stop offset="0.358" stop-color="#ae3d1d"/><stop offset="0.359" stop-color="#b030b0"/><stop offset="0.362" stop-color="#3050c0"/><stop offset="0.370" stop-color="#9bb420"/><stop offset="0.483" stop-color="#97b420"/><stop offset="0.508" stop-color="#20b560"/><stop offset="0.547" stop-color="#1095bd"/><stop offset="0.564" stop-color="#1a75d5"/><stop offset="0.621" stop-color="#2767d3"/><stop offset="0.623" stop-color="#20b080"/><stop offset="0.626" stop-color="#98d828"/><stop offset="0.631" stop-color="#70c030"/><stop offset="0.635" stop-color="#20a0a0"/><stop offset="0.650" stop-color="#1a78db"/><stop offset="0.751" stop-color="#1c7de0"/><stop offset="0.776" stop-color="#10a8b8"/><stop offset="0.796" stop-color="#30b848"/><stop offset="0.821" stop-color="#b3cd20"/><stop offset="0.909" stop-color="#b3cd20"/><stop offset="0.925" stop-color="#1890c0"/><stop offset="0.929" stop-color="#c040c0"/><stop offset="0.933" stop-color="#c04020"/><stop offset="0.981" stop-color="#b83c1e"/></linearGradient>
<linearGradient id="g169" gradientUnits="userSpaceOnUse" x1="1968.0" y1="690.4" x2="2064.7" y2="1086.4"><stop offset="0.019" stop-color="#351007"/><stop offset="0.032" stop-color="#822e18"/><stop offset="0.079" stop-color="#983518"/><stop offset="0.167" stop-color="#b1401e"/><stop offset="0.260" stop-color="#b5411e"/><stop offset="0.355" stop-color="#ad3d1d"/><stop offset="0.356" stop-color="#b030b0"/><stop offset="0.360" stop-color="#3050c0"/><stop offset="0.367" stop-color="#9bb420"/><stop offset="0.481" stop-color="#97b420"/><stop offset="0.506" stop-color="#20b560"/><stop offset="0.545" stop-color="#1095bd"/><stop offset="0.562" stop-color="#1a75d5"/><stop offset="0.619" stop-color="#2966d2"/><stop offset="0.622" stop-color="#20b080"/><stop offset="0.625" stop-color="#98d828"/><stop offset="0.629" stop-color="#70c030"/><stop offset="0.633" stop-color="#20a0a0"/><stop offset="0.648" stop-color="#1a78db"/><stop offset="0.747" stop-color="#1c7de0"/><stop offset="0.771" stop-color="#10a8b8"/><stop offset="0.792" stop-color="#30b848"/><stop offset="0.816" stop-color="#b3ce20"/><stop offset="0.906" stop-color="#b3ce20"/><stop offset="0.922" stop-color="#1890c0"/><stop offset="0.926" stop-color="#c040c0"/><stop offset="0.929" stop-color="#c04020"/><stop offset="0.981" stop-color="#b83c1e"/></linearGradient>
<linearGradient id="g170" gradientUnits="userSpaceOnUse" x1="1984.0" y1="687.4" x2="2082.0" y2="1083.0"><stop offset="0.019" stop-color="#341007"/><stop offset="0.032" stop-color="#822e18"/><stop offset="0.079" stop-color="#983518"/><stop offset="0.165" stop-color="#b1401e"/><stop offset="0.258" stop-color="#b5411e"/><stop offset="0.352" stop-color="#ad3d1d"/><stop offset="0.353" stop-color="#b030b0"/><stop offset="0.357" stop-color="#3050c0"/><stop offset="0.364" stop-color="#9bb420"/><stop offset="0.478" stop-color="#97b420"/><stop offset="0.504" stop-color="#20b560"/><stop offset="0.543" stop-color="#1095bd"/><stop offset="0.559" stop-color="#1a75d5"/><stop offset="0.617" stop-color="#2a65d2"/><stop offset="0.620" stop-color="#20b080"/><stop offset="0.622" stop-color="#98d828"/><stop offset="0.627" stop-color="#70c030"/><stop offset="0.631" stop-color="#20a0a0"/><stop offset="0.645" stop-color="#1a78db"/><stop offset="0.743" stop-color="#1d7de0"/><stop offset="0.767" stop-color="#10a8b8"/><stop offset="0.788" stop-color="#30b848"/><stop offset="0.811" stop-color="#b3ce20"/><stop offset="0.903" stop-color="#b3ce20"/><stop offset="0.919" stop-color="#1890c0"/><stop offset="0.923" stop-color="#c040c0"/><stop offset="0.927" stop-color="#c04020"/><stop offset="0.981" stop-color="#b83c1e"/></linearGradient>
<linearGradient id="g171" gradientUnits="userSpaceOnUse" x1="2000.0" y1="684.5" x2="2098.9" y2="1079.6"><stop offset="0.019" stop-color="#341007"/><stop offset="0.032" stop-color="#812e18"/><stop offset="0.078" stop-color="#983518"/><stop offset="0.164" stop-color="#b2401e"/><stop offset="0.257" stop-color="#b5401e"/><stop offset="0.349" stop-color="#ad3c1d"/><stop offset="0.350" stop-color="#b030b0"/><stop offset="0.354" stop-color="#3050c0"/><stop offset="0.361" stop-color="#9cb420"/><stop offset="0.476" stop-color="#98b420"/><stop offset="0.502" stop-color="#20b460"/><stop offset="0.540" stop-color="#1094bc"/><stop offset="0.557" stop-color="#1a74d4"/><stop offset="0.615" stop-color="#2c63d2"/><stop offset="0.617" stop-color="#20b080"/><stop offset="0.620" stop-color="#98d828"/><stop offset="0.625" stop-color="#70c030"/><stop offset="0.629" stop-color="#20a0a0"/><stop offset="0.643" stop-color="#1a78dc"/><stop offset="0.739" stop-color="#1d7ce0"/><stop offset="0.762" stop-color="#10a8b8"/><stop offset="0.783" stop-color="#30b848"/><stop offset="0.806" stop-color="#b4ce20"/><stop offset="0.900" stop-color="#b4ce20"/><stop offset="0.917" stop-color="#1890c0"/><stop offset="0.920" stop-color="#c040c0"/><stop offset="0.924" stop-color="#c04020"/><stop offset="0.981" stop-color="#b83c1e"/></linearGradient>
<linearGradient id="g172" gradientUnits="userSpaceOnUse" x1="2016.0" y1="681.5" x2="2116.2" y2="1075.9"><stop offset="0.019" stop-color="#330f07"/><stop offset="0.032" stop-color="#812d17"/><stop offset="0.078" stop-color="#973518"/><stop offset="0.162" stop-color="#b2401e"/><stop offset="0.255" stop-color="#b5401e"/><stop offset="0.346" stop-color="#ad3c1d"/><stop offset="0.347" stop-color="#b030b0"/><stop offset="0.351" stop-color="#3050c0"/><stop offset="0.358" stop-color="#9cb420"/><stop offset="0.474" stop-color="#98b420"/><stop offset="0.500" stop-color="#20b460"/><stop offset="0.538" stop-color="#1094bc"/><stop offset="0.554" stop-color="#1a74d4"/><stop offset="0.613" stop-color="#2d62d2"/><stop offset="0.615" stop-color="#20b080"/><stop offset="0.618" stop-color="#98d828"/><stop offset="0.623" stop-color="#70c030"/><stop offset="0.628" stop-color="#20a0a0"/><stop offset="0.642" stop-color="#1a78dc"/><stop offset="0.736" stop-color="#1d7ce0"/><stop offset="0.758" stop-color="#10a8b8"/><stop offset="0.780" stop-color="#30b848"/><stop offset="0.802" stop-color="#b4ce20"/><stop offset="0.898" stop-color="#b4ce20"/><stop offset="0.914" stop-color="#1890c0"/><stop offset="0.918" stop-color="#c040c0"/><stop offset="0.922" stop-color="#c04020"/><stop offset="0.981" stop-color="#b83c1e"/></linearGradient>
<linearGradient id="g173" gradientUnits="userSpaceOnUse" x1="2032.0" y1="678.6" x2="2133.4" y2="1072.2"><stop offset="0.019" stop-color="#330f07"/><stop offset="0.032" stop-color="#802d17"/><stop offset="0.077" stop-color="#973518"/><stop offset="0.160" stop-color="#b2401e"/><stop offset="0.253" stop-color="#b4401e"/><stop offset="0.343" stop-color="#ac3c1d"/><stop offset="0.344" stop-color="#b030b0"/><stop offset="0.348" stop-color="#3050c0"/><stop offset="0.355" stop-color="#9cb420"/><stop offset="0.472" stop-color="#98b420"/><stop offset="0.498" stop-color="#20b460"/><stop offset="0.535" stop-color="#1094bc"/><stop offset="0.552" stop-color="#1a74d4"/><stop offset="0.611" stop-color="#2e61d2"/><stop offset="0.613" stop-color="#20b080"/><stop offset="0.616" stop-color="#98d828"/><stop offset="0.621" stop-color="#70c030"/><stop offset="0.626" stop-color="#20a0a0"/><stop offset="0.640" stop-color="#1a78dc"/><stop offset="0.733" stop-color="#1d7ce0"/><stop offset="0.755" stop-color="#10a8b8"/><stop offset="0.776" stop-color="#30b848"/><stop offset="0.798" stop-color="#b4ce20"/><stop offset="0.896" stop-color="#b4ce20"/><stop offset="0.912" stop-color="#1890c0"/><stop offset="0.916" stop-color="#c040c0"/><stop offset="0.919" stop-color="#c04020"/><stop offset="0.981" stop-color="#b83c1e"/></linearGradient>
<linearGradient id="g174" gradientUnits="userSpaceOnUse" x1="2048.0" y1="675.6" x2="2150.6" y2="1068.5"><stop offset="0.019" stop-color="#320f07"/><stop offset="0.032" stop-color="#802d17"/><stop offset="0.077" stop-color="#973518"/><stop offset="0.159" stop-color="#b2401e"/><stop offset="0.252" stop-color="#b4401e"/><stop offset="0.340" stop-color="#ac3c1d"/><stop offset="0.341" stop-color="#b030b0"/><stop offset="0.345" stop-color="#3050c0"/><stop offset="0.352" stop-color="#9db420"/><stop offset="0.469" stop-color="#99b420"/><stop offset="0.495" stop-color="#20b360"/><stop offset="0.532" stop-color="#1093bb"/><stop offset="0.549" stop-color="#1a73d3"/><stop offset="0.608" stop-color="#305fd2"/><stop offset="0.611" stop-color="#20b080"/><stop offset="0.614" stop-color="#98d828"/><stop offset="0.619" stop-color="#70c030"/><stop offset="0.625" stop-color="#20a0a0"/><stop offset="0.638" stop-color="#1a78dd"/><stop offset="0.729" stop-color="#1d7be0"/><stop offset="0.751" stop-color="#10a8b8"/><stop offset="0.772" stop-color="#30b848"/><stop offset="0.794" stop-color="#b5ce20"/><stop offset="0.894" stop-color="#b5ce20"/><stop offset="0.910" stop-color="#1890c0"/><stop offset="0.914" stop-color="#c040c0"/><stop offset="0.917" stop-color="#c04020"/><stop offset="0.981" stop-color="#b83c1e"/></linearGradient>
<linearGradient id="g175" gradientUnits="userSpaceOnUse" x1="2064.0" y1="672.5" x2="2167.8" y2="1064.7"><stop offset="0.019" stop-color="#320f07"/><stop offset="0.032" stop-color="#802d17"/><stop offset="0.076" stop-color="#973518"/><stop offset="0.157" stop-color="#b2401e"/><stop offset="0.250" stop-color="#b4401e"/><stop offset="0.337" stop-color="#ac3c1d"/><stop offset="0.338" stop-color="#b030b0"/><stop offset="0.342" stop-color="#3050c0"/><stop offset="0.349" stop-color="#9db420"/><stop offset="0.467" stop-color="#99b420"/><stop offset="0.493" stop-color="#20b360"/><stop offset="0.530" stop-color="#1093bb"/><stop offset="0.547" stop-color="#1a73d3"/><stop offset="0.606" stop-color="#315ed2"/><stop offset="0.609" stop-color="#20b080"/><stop offset="0.612" stop-color="#98d828"/><stop offset="0.618" stop-color="#70c030"/><stop offset="0.624" stop-color="#20a0a0"/><stop offset="0.636" stop-color="#1a78dd"/><stop offset="0.726" stop-color="#1e7be0"/><stop offset="0.747" stop-color="#10a8b8"/><stop offset="0.769" stop-color="#30b848"/><stop offset="0.790" stop-color="#b5ce20"/><stop offset="0.892" stop-color="#b5ce20"/><stop offset="0.908" stop-color="#1890c0"/><stop offset="0.912" stop-color="#c040c0"/><stop offset="0.916" stop-color="#c04020"/><stop offset="0.981" stop-color="#b83c1e"/></linearGradient>
<linearGradient id="g176" gradientUnits="userSpaceOnUse" x1="2080.0" y1="669.5" x2="2185.0" y2="1060.7"><stop offset="0.019" stop-color="#310f07"/><stop offset="0.032" stop-color="#7f2d17"/><stop offset="0.076" stop-color="#973518"/><stop offset="0.155" stop-color="#b2401e"/><stop offset="0.248" stop-color="#b4401e"/><stop offset="0.334" stop-color="#ac3c1d"/><stop offset="0.335" stop-color="#b030b0"/><stop offset="0.338" stop-color="#3050c0"/><stop offset="0.346" stop-color="#9db420"/><stop offset="0.464" stop-color="#99b420"/><stop offset="0.491" stop-color="#20b360"/><stop offset="0.527" stop-color="#1093bb"/><stop offset="0.544" stop-color="#1a73d3"/><stop offset="0.604" stop-color="#335dd1"/><stop offset="0.606" stop-color="#20b080"/><stop offset="0.610" stop-color="#98d828"/><stop offset="0.616" stop-color="#70c030"/><stop offset="0.622" stop-color="#20a0a0"/><stop offset="0.635" stop-color="#1a78dd"/><stop offset="0.723" stop-color="#1e7be0"/><stop offset="0.744" stop-color="#10a8b8"/><stop offset="0.765" stop-color="#30b848"/><stop offset="0.786" stop-color="#b5cf20"/><stop offset="0.891" stop-color="#b5cf20"/><stop offset="0.907" stop-color="#1890c0"/><stop offset="0.911" stop-color="#c040c0"/><stop offset="0.914" stop-color="#c04020"/><stop offset="0.981" stop-color="#b83c1e"/></linearGradient>
<linearGradient id="g177" gradientUnits="userSpaceOnUse" x1="2096.0" y1="666.5" x2="2202.6" y2="1056.5"><stop offset="0.019" stop-color="#310e07"/><stop offset="0.032" stop-color="#7f2c16"/><stop offset="0.075" stop-color="#963518"/><stop offset="0.154" stop-color="#b2401e"/><stop offset="0.246" stop-color="#b3401e"/><stop offset="0.330" stop-color="#ab3c1d"/><stop offset="0.331" stop-color="#b030b0"/><stop offset="0.335" stop-color="#3050c0"/><stop offset="0.343" stop-color="#9db420"/><stop offset="0.462" stop-color="#99b420"/><stop offset="0.488" stop-color="#20b360"/><stop offset="0.524" stop-color="#1093bb"/><stop offset="0.542" stop-color="#1a73d3"/><stop offset="0.602" stop-color="#345bd1"/><stop offset="0.604" stop-color="#20b080"/><stop offset="0.608" stop-color="#98d828"/><stop offset="0.614" stop-color="#70c030"/><stop offset="0.620" stop-color="#20a0a0"/><stop offset="0.633" stop-color="#1a78dd"/><stop offset="0.720" stop-color="#1e7be0"/><stop offset="0.740" stop-color="#10a8b8"/><stop offset="0.762" stop-color="#30b848"/><stop offset="0.782" stop-color="#b5cf20"/><stop offset="0.889" stop-color="#b5cf20"/><stop offset="0.905" stop-color="#1890c0"/><stop offset="0.909" stop-color="#c040c0"/><stop offset="0.913" stop-color="#c04020"/><stop offset="0.981" stop-color="#b83c1e"/></linearGradient>
<linearGradient id="g178" gradientUnits="userSpaceOnUse" x1="2112.0" y1="663.4" x2="2219.9" y2="1052.5"><stop offset="0.019" stop-color="#300e07"/><stop offset="0.031" stop-color="#7f2c16"/><stop offset="0.075" stop-color="#963518"/><stop offset="0.152" stop-color="#b2401e"/><stop offset="0.244" stop-color="#b3401e"/><stop offset="0.327" stop-color="#ab3c1d"/><stop offset="0.328" stop-color="#b030b0"/><stop offset="0.332" stop-color="#3050c0"/><stop offset="0.339" stop-color="#9eb420"/><stop offset="0.459" stop-color="#9ab420"/><stop offset="0.485" stop-color="#20b260"/><stop offset="0.521" stop-color="#1092ba"/><stop offset="0.539" stop-color="#1a72d2"/><stop offset="0.599" stop-color="#355ad1"/><stop offset="0.601" stop-color="#20b080"/><stop offset="0.606" stop-color="#98d828"/><stop offset="0.612" stop-color="#70c030"/><stop offset="0.618" stop-color="#20a0a0"/><stop offset="0.631" stop-color="#1a78de"/><stop offset="0.717" stop-color="#1e7ae0"/><stop offset="0.737" stop-color="#10a8b8"/><stop offset="0.758" stop-color="#30b848"/><stop offset="0.778" stop-color="#b6cf20"/><stop offset="0.888" stop-color="#b6cf20"/><stop offset="0.904" stop-color="#1890c0"/><stop offset="0.908" stop-color="#c040c0"/><stop offset="0.911" stop-color="#c04020"/><stop offset="0.981" stop-color="#b83c1e"/></linearGradient>
<linearGradient id="g179" gradientUnits="userSpaceOnUse" x1="2128.0" y1="660.3" x2="2236.9" y2="1048.5"><stop offset="0.019" stop-color="#300e07"/><stop offset="0.031" stop-color="#7e2c16"/><stop offset="0.074" stop-color="#963518"/><stop offset="0.150" stop-color="#b3401e"/><stop offset="0.242" stop-color="#b33f1e"/><stop offset="0.323" stop-color="#ab3b1d"/><stop offset="0.325" stop-color="#b030b0"/><stop offset="0.328" stop-color="#3050c0"/><stop offset="0.336" stop-color="#9eb420"/><stop offset="0.456" stop-color="#9ab420"/><stop offset="0.483" stop-color="#20b260"/><stop offset="0.518" stop-color="#1092ba"/><stop offset="0.536" stop-color="#1a72d2"/><stop offset="0.596" stop-color="#3759d1"/><stop offset="0.599" stop-color="#20b080"/><stop offset="0.603" stop-color="#98d828"/><stop offset="0.609" stop-color="#70c030"/><stop offset="0.616" stop-color="#20a0a0"/><stop offset="0.629" stop-color="#1a78de"/><stop offset="0.714" stop-color="#1f7ae0"/><stop offset="0.733" stop-color="#10a8b8"/><stop offset="0.755" stop-color="#30b848"/><stop offset="0.775" stop-color="#b6cf20"/><stop offset="0.887" stop-color="#b6cf20"/><stop offset="0.903" stop-color="#1890c0"/><stop offset="0.907" stop-color="#c040c0"/><stop offset="0.910" stop-color="#c04020"/><stop offset="0.981" stop-color="#b83c1e"/></linearGradient>
<linearGradient id="g180" gradientUnits="userSpaceOnUse" x1="2144.0" y1="657.2" x2="2254.0" y2="1044.4"><stop offset="0.019" stop-color="#2f0e07"/><stop offset="0.031" stop-color="#7e2c16"/><stop offset="0.073" stop-color="#963518"/><stop offset="0.148" stop-color="#b3401e"/><stop offset="0.240" stop-color="#b23f1e"/><stop offset="0.320" stop-color="#aa3b1d"/><stop offset="0.321" stop-color="#b030b0"/><stop offset="0.325" stop-color="#3050c0"/><stop offset="0.332" stop-color="#9eb420"/><stop offset="0.453" stop-color="#9ab420"/><stop offset="0.480" stop-color="#20b260"/><stop offset="0.515" stop-color="#1092ba"/><stop offset="0.533" stop-color="#1a72d2"/><stop offset="0.594" stop-color="#3857d1"/><stop offset="0.596" stop-color="#20b080"/><stop offset="0.601" stop-color="#98d828"/><stop offset="0.607" stop-color="#70c030"/><stop offset="0.614" stop-color="#20a0a0"/><stop offset="0.626" stop-color="#1a78de"/><stop offset="0.710" stop-color="#1f7ae0"/><stop offset="0.730" stop-color="#10a8b8"/><stop offset="0.752" stop-color="#30b848"/><stop offset="0.771" stop-color="#b6cf20"/><stop offset="0.885" stop-color="#b6cf20"/><stop offset="0.902" stop-color="#1890c0"/><stop offset="0.906" stop-color="#c040c0"/><stop offset="0.909" stop-color="#c04020"/><stop offset="0.981" stop-color="#b83c1e"/></linearGradient>
<linearGradient id="g181" gradientUnits="userSpaceOnUse" x1="2160.0" y1="654.1" x2="2271.0" y2="1040.3"><stop offset="0.019" stop-color="#2e0e07"/><stop offset="0.031" stop-color="#7d2c16"/><stop offset="0.073" stop-color="#963518"/><stop offset="0.146" stop-color="#b3401e"/><stop offset="0.238" stop-color="#b23f1e"/><stop offset="0.316" stop-color="#aa3b1d"/><stop offset="0.318" stop-color="#b030b0"/><stop offset="0.321" stop-color="#3050c0"/><stop offset="0.329" stop-color="#9fb420"/><stop offset="0.451" stop-color="#9bb420"/><stop offset="0.477" stop-color="#20b160"/><stop offset="0.512" stop-color="#1091b9"/><stop offset="0.530" stop-color="#1a71d1"/><stop offset="0.591" stop-color="#3a56d1"/><stop offset="0.593" stop-color="#20b080"/><stop offset="0.598" stop-color="#98d828"/><stop offset="0.605" stop-color="#70c030"/><stop offset="0.612" stop-color="#20a0a0"/><stop offset="0.624" stop-color="#1a78df"/><stop offset="0.707" stop-color="#1f79e0"/><stop offset="0.726" stop-color="#10a8b8"/><stop offset="0.748" stop-color="#30b848"/><stop offset="0.767" stop-color="#b7cf20"/><stop offset="0.884" stop-color="#b7cf20"/><stop offset="0.901" stop-color="#1890c0"/><stop offset="0.904" stop-color="#c040c0"/><stop offset="0.908" stop-color="#c04020"/><stop offset="0.981" stop-color="#b83c1e"/></linearGradient>
<linearGradient id="g182" gradientUnits="userSpaceOnUse" x1="2176.0" y1="651.0" x2="2288.3" y2="1035.9"><stop offset="0.019" stop-color="#2e0d06"/><stop offset="0.031" stop-color="#7d2b15"/><stop offset="0.072" stop-color="#953418"/><stop offset="0.145" stop-color="#b3401e"/><stop offset="0.236" stop-color="#b23f1e"/><stop offset="0.313" stop-color="#aa3b1c"/><stop offset="0.314" stop-color="#b030b0"/><stop offset="0.317" stop-color="#3050c0"/><stop offset="0.325" stop-color="#9fb420"/><stop offset="0.448" stop-color="#9bb420"/><stop offset="0.474" stop-color="#20b160"/><stop offset="0.508" stop-color="#1091b9"/><stop offset="0.527" stop-color="#1a71d1"/><stop offset="0.588" stop-color="#3b55d1"/><stop offset="0.591" stop-color="#20b080"/><stop offset="0.596" stop-color="#98d828"/><stop offset="0.602" stop-color="#70c030"/><stop offset="0.610" stop-color="#20a0a0"/><stop offset="0.622" stop-color="#1a78df"/><stop offset="0.704" stop-color="#1f79e0"/><stop offset="0.722" stop-color="#10a8b8"/><stop offset="0.745" stop-color="#30b848"/><stop offset="0.763" stop-color="#b7cf20"/><stop offset="0.883" stop-color="#b7cf20"/><stop offset="0.900" stop-color="#1890c0"/><stop offset="0.903" stop-color="#c040c0"/><stop offset="0.907" stop-color="#c04020"/><stop offset="0.981" stop-color="#b83c1e"/></linearGradient>
<linearGradient id="g183" gradientUnits="userSpaceOnUse" x1="2192.0" y1="648.0" x2="2305.7" y2="1031.5"><stop offset="0.019" stop-color="#2d0d06"/><stop offset="0.031" stop-color="#7d2b15"/><stop offset="0.071" stop-color="#953418"/><stop offset="0.143" stop-color="#b3401e"/><stop offset="0.233" stop-color="#b23f1e"/><stop offset="0.309" stop-color="#aa3b1c"/><stop offset="0.310" stop-color="#b030b0"/><stop offset="0.314" stop-color="#3050c0"/><stop offset="0.321" stop-color="#9fb420"/><stop offset="0.445" stop-color="#9bb420"/><stop offset="0.471" stop-color="#20b160"/><stop offset="0.505" stop-color="#1091b9"/><stop offset="0.524" stop-color="#1a71d1"/><stop offset="0.585" stop-color="#3c53d0"/><stop offset="0.588" stop-color="#20b080"/><stop offset="0.593" stop-color="#98d828"/><stop offset="0.600" stop-color="#70c030"/><stop offset="0.608" stop-color="#20a0a0"/><stop offset="0.619" stop-color="#1a78df"/><stop offset="0.700" stop-color="#1f79e0"/><stop offset="0.718" stop-color="#10a8b8"/><stop offset="0.741" stop-color="#30b848"/><stop offset="0.759" stop-color="#b7d020"/><stop offset="0.882" stop-color="#b7d020"/><stop offset="0.899" stop-color="#1890c0"/><stop offset="0.902" stop-color="#c040c0"/><stop offset="0.906" stop-color="#c04020"/><stop offset="0.981" stop-color="#b83c1e"/></linearGradient>
<linearGradient id="g184" gradientUnits="userSpaceOnUse" x1="2208.0" y1="644.8" x2="2322.9" y2="1026.9"><stop offset="0.019" stop-color="#2d0d06"/><stop offset="0.031" stop-color="#7c2b15"/><stop offset="0.071" stop-color="#953418"/><stop offset="0.141" stop-color="#b3401e"/><stop offset="0.231" stop-color="#b13f1e"/><stop offset="0.305" stop-color="#a93b1c"/><stop offset="0.306" stop-color="#b030b0"/><stop offset="0.310" stop-color="#3050c0"/><stop offset="0.318" stop-color="#a0b420"/><stop offset="0.441" stop-color="#9cb420"/><stop offset="0.468" stop-color="#20b060"/><stop offset="0.502" stop-color="#1090b8"/><stop offset="0.520" stop-color="#1a70d0"/><stop offset="0.582" stop-color="#3e52d0"/><stop offset="0.585" stop-color="#20b080"/><stop offset="0.590" stop-color="#98d828"/><stop offset="0.597" stop-color="#70c030"/><stop offset="0.606" stop-color="#20a0a0"/><stop offset="0.617" stop-color="#1a78e0"/><stop offset="0.697" stop-color="#2078e0"/><stop offset="0.715" stop-color="#10a8b8"/><stop offset="0.737" stop-color="#30b848"/><stop offset="0.755" stop-color="#b8d020"/><stop offset="0.881" stop-color="#b8d020"/><stop offset="0.898" stop-color="#1890c0"/><stop offset="0.902" stop-color="#c040c0"/><stop offset="0.905" stop-color="#c04020"/><stop offset="0.981" stop-color="#b83c1e"/></linearGradient>
<linearGradient id="g185" gradientUnits="userSpaceOnUse" x1="2224.0" y1="641.7" x2="2340.2" y2="1022.2"><stop offset="0.019" stop-color="#2c0d06"/><stop offset="0.031" stop-color="#7c2b15"/><stop offset="0.070" stop-color="#953418"/><stop offset="0.139" stop-color="#b3401e"/><stop offset="0.229" stop-color="#b13f1e"/><stop offset="0.301" stop-color="#a93b1c"/><stop offset="0.302" stop-color="#b030b0"/><stop offset="0.306" stop-color="#3050c0"/><stop offset="0.314" stop-color="#a0b420"/><stop offset="0.438" stop-color="#9cb420"/><stop offset="0.465" stop-color="#20b060"/><stop offset="0.498" stop-color="#1090b8"/><stop offset="0.517" stop-color="#1a70d0"/><stop offset="0.579" stop-color="#3f51d0"/><stop offset="0.582" stop-color="#20b080"/><stop offset="0.587" stop-color="#98d828"/><stop offset="0.595" stop-color="#70c030"/><stop offset="0.603" stop-color="#20a0a0"/><stop offset="0.614" stop-color="#1a78e0"/><stop offset="0.693" stop-color="#2078e0"/><stop offset="0.711" stop-color="#10a8b8"/><stop offset="0.734" stop-color="#30b848"/><stop offset="0.751" stop-color="#b8d020"/><stop offset="0.881" stop-color="#b8d020"/><stop offset="0.897" stop-color="#1890c0"/><stop offset="0.901" stop-color="#c040c0"/><stop offset="0.905" stop-color="#c04020"/><stop offset="0.981" stop-color="#b83c1e"/></linearGradient>
<linearGradient id="g186" gradientUnits="userSpaceOnUse" x1="2240.0" y1="638.5" x2="2357.1" y2="1017.6"><stop offset="0.019" stop-color="#2c0d06"/><stop offset="0.030" stop-color="#7b2b15"/><stop offset="0.069" stop-color="#953418"/><stop offset="0.137" stop-color="#b4401e"/><stop offset="0.226" stop-color="#b13e1e"/><stop offset="0.297" stop-color="#a93a1c"/><stop offset="0.298" stop-color="#b030b0"/><stop offset="0.302" stop-color="#3050c0"/><stop offset="0.310" stop-color="#a0b420"/><stop offset="0.433" stop-color="#9cb420"/><stop offset="0.460" stop-color="#20b060"/><stop offset="0.493" stop-color="#118fb9"/><stop offset="0.512" stop-color="#1d6fd0"/><stop offset="0.576" stop-color="#434fd0"/><stop offset="0.579" stop-color="#20b080"/><stop offset="0.584" stop-color="#98d828"/><stop offset="0.592" stop-color="#70c030"/><stop offset="0.601" stop-color="#20a0a0"/><stop offset="0.612" stop-color="#1e76df"/><stop offset="0.690" stop-color="#2377df"/><stop offset="0.709" stop-color="#11a7b9"/><stop offset="0.733" stop-color="#2fb749"/><stop offset="0.751" stop-color="#b8d020"/><stop offset="0.880" stop-color="#b8d020"/><stop offset="0.897" stop-color="#1890c0"/><stop offset="0.900" stop-color="#c040c0"/><stop offset="0.904" stop-color="#c04020"/><stop offset="0.981" stop-color="#b83c1e"/></linearGradient>
<linearGradient id="g187" gradientUnits="userSpaceOnUse" x1="2256.0" y1="635.3" x2="2373.9" y2="1013.1"><stop offset="0.019" stop-color="#2b0d06"/><stop offset="0.030" stop-color="#7b2b15"/><stop offset="0.069" stop-color="#953418"/><stop offset="0.135" stop-color="#b4401e"/><stop offset="0.224" stop-color="#b13e1e"/><stop offset="0.293" stop-color="#a93a1c"/><stop offset="0.295" stop-color="#b030b0"/><stop offset="0.298" stop-color="#3050c0"/><stop offset="0.306" stop-color="#a0b420"/><stop offset="0.426" stop-color="#9cb420"/><stop offset="0.453" stop-color="#20af60"/><stop offset="0.485" stop-color="#128eba"/><stop offset="0.506" stop-color="#226cd0"/><stop offset="0.573" stop-color="#494ecf"/><stop offset="0.576" stop-color="#20b080"/><stop offset="0.581" stop-color="#98d828"/><stop offset="0.589" stop-color="#70c030"/><stop offset="0.598" stop-color="#20a0a0"/><stop offset="0.610" stop-color="#2773de"/><stop offset="0.688" stop-color="#2874de"/><stop offset="0.709" stop-color="#12a4ba"/><stop offset="0.734" stop-color="#2eb64a"/><stop offset="0.753" stop-color="#b7cf20"/><stop offset="0.879" stop-color="#b7cf20"/><stop offset="0.896" stop-color="#1890c0"/><stop offset="0.900" stop-color="#c040c0"/><stop offset="0.903" stop-color="#c04020"/><stop offset="0.981" stop-color="#b83c1e"/></linearGradient>
<linearGradient id="g188" gradientUnits="userSpaceOnUse" x1="2272.0" y1="632.1" x2="2391.2" y2="1008.0"><stop offset="0.019" stop-color="#2b0c06"/><stop offset="0.030" stop-color="#7b2a14"/><stop offset="0.068" stop-color="#943418"/><stop offset="0.133" stop-color="#b4401e"/><stop offset="0.221" stop-color="#b03e1e"/><stop offset="0.289" stop-color="#a83a1c"/><stop offset="0.291" stop-color="#b030b0"/><stop offset="0.294" stop-color="#3050c0"/><stop offset="0.302" stop-color="#a0b320"/><stop offset="0.418" stop-color="#9bb320"/><stop offset="0.445" stop-color="#20af60"/><stop offset="0.477" stop-color="#138dbb"/><stop offset="0.500" stop-color="#286ad0"/><stop offset="0.570" stop-color="#4f4dcf"/><stop offset="0.573" stop-color="#20b080"/><stop offset="0.578" stop-color="#98d828"/><stop offset="0.586" stop-color="#70c030"/><stop offset="0.595" stop-color="#20a0a0"/><stop offset="0.607" stop-color="#2f6fdd"/><stop offset="0.686" stop-color="#2d72dd"/><stop offset="0.708" stop-color="#13a2bb"/><stop offset="0.735" stop-color="#2db54c"/><stop offset="0.755" stop-color="#b7cf20"/><stop offset="0.878" stop-color="#b7cf20"/><stop offset="0.896" stop-color="#1890c0"/><stop offset="0.899" stop-color="#c040c0"/><stop offset="0.903" stop-color="#c04020"/><stop offset="0.981" stop-color="#b83c1e"/></linearGradient>
<linearGradient id="g189" gradientUnits="userSpaceOnUse" x1="2288.0" y1="628.9" x2="2408.8" y2="1002.6"><stop offset="0.019" stop-color="#2a0c06"/><stop offset="0.030" stop-color="#7a2a14"/><stop offset="0.067" stop-color="#943418"/><stop offset="0.131" stop-color="#b4401e"/><stop offset="0.218" stop-color="#b03e1e"/><stop offset="0.285" stop-color="#a83a1c"/><stop offset="0.286" stop-color="#b030b0"/><stop offset="0.290" stop-color="#3050c0"/><stop offset="0.298" stop-color="#a0b320"/><stop offset="0.410" stop-color="#9bb320"/><stop offset="0.438" stop-color="#20ae60"/><stop offset="0.470" stop-color="#148cbc"/><stop offset="0.494" stop-color="#2d67d0"/><stop offset="0.567" stop-color="#554cce"/><stop offset="0.570" stop-color="#20b080"/><stop offset="0.575" stop-color="#98d828"/><stop offset="0.583" stop-color="#70c030"/><stop offset="0.592" stop-color="#20a0a0"/><stop offset="0.605" stop-color="#386cdc"/><stop offset="0.684" stop-color="#326fdc"/><stop offset="0.708" stop-color="#149fbc"/><stop offset="0.736" stop-color="#2cb44d"/><stop offset="0.757" stop-color="#b6ce20"/><stop offset="0.878" stop-color="#b6ce20"/><stop offset="0.895" stop-color="#1890c0"/><stop offset="0.899" stop-color="#c040c0"/><stop offset="0.902" stop-color="#c04020"/><stop offset="0.981" stop-color="#b83c1e"/></linearGradient>
<linearGradient id="g190" gradientUnits="userSpaceOnUse" x1="2304.0" y1="625.6" x2="2425.8" y2="997.4"><stop offset="0.019" stop-color="#2a0c06"/><stop offset="0.030" stop-color="#792a14"/><stop offset="0.067" stop-color="#943418"/><stop offset="0.129" stop-color="#b4401e"/><stop offset="0.216" stop-color="#b03e1e"/><stop offset="0.281" stop-color="#a83a1c"/><stop offset="0.282" stop-color="#b030b0"/><stop offset="0.286" stop-color="#3050c0"/><stop offset="0.294" stop-color="#a0b320"/><stop offset="0.403" stop-color="#9bb320"/><stop offset="0.430" stop-color="#20ae60"/><stop offset="0.462" stop-color="#158bbd"/><stop offset="0.487" stop-color="#3265d0"/><stop offset="0.564" stop-color="#5b4bce"/><stop offset="0.567" stop-color="#20b080"/><stop offset="0.572" stop-color="#98d828"/><stop offset="0.580" stop-color="#70c030"/><stop offset="0.590" stop-color="#20a0a0"/><stop offset="0.603" stop-color="#4068db"/><stop offset="0.682" stop-color="#376ddb"/><stop offset="0.708" stop-color="#159dbd"/><stop offset="0.738" stop-color="#2bb34f"/><stop offset="0.759" stop-color="#b6ce20"/><stop offset="0.877" stop-color="#b6ce20"/><stop offset="0.895" stop-color="#1890c0"/><stop offset="0.899" stop-color="#c040c0"/><stop offset="0.902" stop-color="#c04020"/><stop offset="0.981" stop-color="#b83c1e"/></linearGradient>
<linearGradient id="g191" gradientUnits="userSpaceOnUse" x1="2320.0" y1="622.3" x2="2442.2" y2="992.6"><stop offset="0.019" stop-color="#290c06"/><stop offset="0.030" stop-color="#772914"/><stop offset="0.066" stop-color="#923318"/><stop offset="0.128" stop-color="#b3401e"/><stop offset="0.213" stop-color="#b03e1e"/><stop offset="0.277" stop-color="#a83a1c"/><stop offset="0.278" stop-color="#b030b0"/><stop offset="0.282" stop-color="#3050c0"/><stop offset="0.290" stop-color="#a0b320"/><stop offset="0.395" stop-color="#9bb320"/><stop offset="0.423" stop-color="#20ad60"/><stop offset="0.454" stop-color="#168abe"/><stop offset="0.481" stop-color="#3862d0"/><stop offset="0.561" stop-color="#614acd"/><stop offset="0.564" stop-color="#20b080"/><stop offset="0.569" stop-color="#98d828"/><stop offset="0.577" stop-color="#70c030"/><stop offset="0.587" stop-color="#20a0a0"/><stop offset="0.600" stop-color="#4965da"/><stop offset="0.680" stop-color="#3c6ada"/><stop offset="0.708" stop-color="#169abe"/><stop offset="0.739" stop-color="#2ab250"/><stop offset="0.762" stop-color="#b5cd20"/><stop offset="0.877" stop-color="#b5cd20"/><stop offset="0.895" stop-color="#1890c0"/><stop offset="0.898" stop-color="#c040c0"/><stop offset="0.902" stop-color="#c04020"/><stop offset="0.981" stop-color="#b83c1e"/></linearGradient>
<linearGradient id="g192" gradientUnits="userSpaceOnUse" x1="2336.0" y1="619.1" x2="2458.8" y2="987.4"><stop offset="0.020" stop-color="#280b06"/><stop offset="0.030" stop-color="#752813"/><stop offset="0.066" stop-color="#903317"/><stop offset="0.127" stop-color="#b23f1e"/><stop offset="0.209" stop-color="#af3e1e"/><stop offset="0.273" stop-color="#a83a1c"/><stop offset="0.274" stop-color="#b030b0"/><stop offset="0.278" stop-color="#3050c0"/><stop offset="0.286" stop-color="#a0b220"/><stop offset="0.387" stop-color="#9ab220"/><stop offset="0.415" stop-color="#20ad60"/><stop offset="0.446" stop-color="#1789bf"/><stop offset="0.475" stop-color="#3d60d0"/><stop offset="0.558" stop-color="#6749cd"/><stop offset="0.560" stop-color="#20b080"/><stop offset="0.566" stop-color="#98d828"/><stop offset="0.575" stop-color="#70c030"/><stop offset="0.584" stop-color="#20a0a0"/><stop offset="0.598" stop-color="#5161d9"/><stop offset="0.678" stop-color="#4168d9"/><stop offset="0.708" stop-color="#1798bf"/><stop offset="0.741" stop-color="#29b152"/><stop offset="0.764" stop-color="#b5cd20"/><stop offset="0.876" stop-color="#b5cd20"/><stop offset="0.894" stop-color="#1890c0"/><stop offset="0.898" stop-color="#c040c0"/><stop offset="0.902" stop-color="#c04020"/><stop offset="0.980" stop-color="#b83c1e"/></linearGradient>
<linearGradient id="g193" gradientUnits="userSpaceOnUse" x1="2352.0" y1="615.8" x2="2476.0" y2="981.5"><stop offset="0.020" stop-color="#280b06"/><stop offset="0.030" stop-color="#722813"/><stop offset="0.066" stop-color="#8f3217"/><stop offset="0.126" stop-color="#b13f1e"/><stop offset="0.206" stop-color="#af3e1e"/><stop offset="0.268" stop-color="#a83a1c"/><stop offset="0.270" stop-color="#b030b0"/><stop offset="0.273" stop-color="#3050c0"/><stop offset="0.281" stop-color="#a0b220"/><stop offset="0.379" stop-color="#9ab220"/><stop offset="0.407" stop-color="#20ac60"/><stop offset="0.438" stop-color="#1888c0"/><stop offset="0.468" stop-color="#435dd0"/><stop offset="0.555" stop-color="#6e48cc"/><stop offset="0.557" stop-color="#20b080"/><stop offset="0.563" stop-color="#98d828"/><stop offset="0.572" stop-color="#70c030"/><stop offset="0.581" stop-color="#20a0a0"/><stop offset="0.596" stop-color="#5a5dd8"/><stop offset="0.676" stop-color="#4665d8"/><stop offset="0.708" stop-color="#1895c0"/><stop offset="0.742" stop-color="#28b053"/><stop offset="0.767" stop-color="#b4cc20"/><stop offset="0.876" stop-color="#b4cc20"/><stop offset="0.894" stop-color="#1890c0"/><stop offset="0.898" stop-color="#c040c0"/><stop offset="0.901" stop-color="#c04020"/><stop offset="0.980" stop-color="#b83c1e"/></linearGradient>
<linearGradient id="g194" gradientUnits="userSpaceOnUse" x1="2368.0" y1="612.4" x2="2493.4" y2="975.4"><stop offset="0.020" stop-color="#270b05"/><stop offset="0.030" stop-color="#702713"/><stop offset="0.065" stop-color="#8d3217"/><stop offset="0.125" stop-color="#b03f1d"/><stop offset="0.203" stop-color="#af3d1d"/><stop offset="0.264" stop-color="#a83a1c"/><stop offset="0.265" stop-color="#b030b0"/><stop offset="0.269" stop-color="#3050c0"/><stop offset="0.277" stop-color="#a0b220"/><stop offset="0.371" stop-color="#9ab220"/><stop offset="0.399" stop-color="#20ac60"/><stop offset="0.430" stop-color="#1987c1"/><stop offset="0.462" stop-color="#485ad0"/><stop offset="0.552" stop-color="#7447cc"/><stop offset="0.554" stop-color="#20b080"/><stop offset="0.560" stop-color="#98d828"/><stop offset="0.569" stop-color="#70c030"/><stop offset="0.578" stop-color="#20a0a0"/><stop offset="0.594" stop-color="#625ad7"/><stop offset="0.674" stop-color="#4b62d7"/><stop offset="0.708" stop-color="#1992c1"/><stop offset="0.744" stop-color="#27af55"/><stop offset="0.769" stop-color="#b4cc20"/><stop offset="0.876" stop-color="#b4cc20"/><stop offset="0.894" stop-color="#1890c0"/><stop offset="0.897" stop-color="#c040c0"/><stop offset="0.901" stop-color="#c04020"/><stop offset="0.980" stop-color="#b83c1e"/></linearGradient>
<linearGradient id="g195" gradientUnits="userSpaceOnUse" x1="2384.0" y1="609.1" x2="2510.0" y2="969.7"><stop offset="0.020" stop-color="#260a05"/><stop offset="0.030" stop-color="#6e2612"/><stop offset="0.065" stop-color="#8c3116"/><stop offset="0.123" stop-color="#af3e1d"/><stop offset="0.200" stop-color="#ae3d1d"/><stop offset="0.260" stop-color="#a83a1c"/><stop offset="0.261" stop-color="#b030b0"/><stop offset="0.265" stop-color="#3050c0"/><stop offset="0.273" stop-color="#a0b220"/><stop offset="0.363" stop-color="#9ab220"/><stop offset="0.391" stop-color="#20ab60"/><stop offset="0.422" stop-color="#1a86c2"/><stop offset="0.455" stop-color="#4e58d0"/><stop offset="0.549" stop-color="#7a46cb"/><stop offset="0.551" stop-color="#20b080"/><stop offset="0.557" stop-color="#98d828"/><stop offset="0.566" stop-color="#70c030"/><stop offset="0.576" stop-color="#20a0a0"/><stop offset="0.591" stop-color="#6b56d6"/><stop offset="0.672" stop-color="#5060d6"/><stop offset="0.708" stop-color="#1a90c2"/><stop offset="0.746" stop-color="#26ae56"/><stop offset="0.772" stop-color="#b3cb20"/><stop offset="0.875" stop-color="#b3cb20"/><stop offset="0.893" stop-color="#1890c0"/><stop offset="0.897" stop-color="#c040c0"/><stop offset="0.901" stop-color="#c04020"/><stop offset="0.980" stop-color="#b83c1e"/></linearGradient>
<linearGradient id="g196" gradientUnits="userSpaceOnUse" x1="2400.0" y1="605.8" x2="2526.5" y2="963.9"><stop offset="0.020" stop-color="#250a05"/><stop offset="0.030" stop-color="#6b2512"/><stop offset="0.064" stop-color="#8a3016"/><stop offset="0.122" stop-color="#af3e1d"/><stop offset="0.196" stop-color="#ae3d1d"/><stop offset="0.255" stop-color="#a83a1c"/><stop offset="0.256" stop-color="#b030b0"/><stop offset="0.260" stop-color="#3050c0"/><stop offset="0.268" stop-color="#a0b120"/><stop offset="0.355" stop-color="#99b120"/><stop offset="0.383" stop-color="#20ab60"/><stop offset="0.414" stop-color="#1b85c3"/><stop offset="0.448" stop-color="#5355d0"/><stop offset="0.545" stop-color="#8045cb"/><stop offset="0.548" stop-color="#20b080"/><stop offset="0.554" stop-color="#98d828"/><stop offset="0.563" stop-color="#70c030"/><stop offset="0.573" stop-color="#20a0a0"/><stop offset="0.589" stop-color="#7353d5"/><stop offset="0.670" stop-color="#555dd5"/><stop offset="0.708" stop-color="#1b8dc3"/><stop offset="0.748" stop-color="#25ad58"/><stop offset="0.775" stop-color="#b3cb20"/><stop offset="0.875" stop-color="#b3cb20"/><stop offset="0.893" stop-color="#1890c0"/><stop offset="0.897" stop-color="#c040c0"/><stop offset="0.901" stop-color="#c04020"/><stop offset="0.980" stop-color="#b83c1e"/></linearGradient>
<linearGradient id="g197" gradientUnits="userSpaceOnUse" x1="2411.0" y1="603.6" x2="2538.1" y2="959.6"><stop offset="0.020" stop-color="#250a05"/><stop offset="0.030" stop-color="#6a2512"/><stop offset="0.064" stop-color="#893016"/><stop offset="0.121" stop-color="#ae3e1d"/><stop offset="0.194" stop-color="#ae3d1d"/><stop offset="0.252" stop-color="#a83a1c"/><stop offset="0.253" stop-color="#b030b0"/><stop offset="0.257" stop-color="#3050c0"/><stop offset="0.265" stop-color="#a0b120"/><stop offset="0.349" stop-color="#99b120"/><stop offset="0.378" stop-color="#20aa60"/><stop offset="0.408" stop-color="#1b85c3"/><stop offset="0.444" stop-color="#5754d0"/><stop offset="0.543" stop-color="#8445ca"/><stop offset="0.546" stop-color="#20b080"/><stop offset="0.552" stop-color="#98d828"/><stop offset="0.561" stop-color="#70c030"/><stop offset="0.572" stop-color="#20a0a0"/><stop offset="0.588" stop-color="#7950d5"/><stop offset="0.669" stop-color="#595cd5"/><stop offset="0.708" stop-color="#1b8cc3"/><stop offset="0.749" stop-color="#25ad59"/><stop offset="0.777" stop-color="#b2ca20"/><stop offset="0.875" stop-color="#b2ca20"/><stop offset="0.893" stop-color="#1890c0"/><stop offset="0.897" stop-color="#c040c0"/><stop offset="0.900" stop-color="#c04020"/><stop offset="0.980" stop-color="#b83c1e"/></linearGradient>
<linearGradient id="g198" gradientUnits="userSpaceOnUse" x1="2417.0" y1="602.5" x2="2544.4" y2="957.3"><stop offset="0.020" stop-color="#250a05"/><stop offset="0.030" stop-color="#692512"/><stop offset="0.064" stop-color="#883016"/><stop offset="0.120" stop-color="#ae3e1d"/><stop offset="0.192" stop-color="#ae3d1d"/><stop offset="0.250" stop-color="#a83a1c"/><stop offset="0.251" stop-color="#b030b0"/><stop offset="0.255" stop-color="#3050c0"/><stop offset="0.263" stop-color="#a0b120"/><stop offset="0.346" stop-color="#99b120"/><stop offset="0.374" stop-color="#20aa60"/><stop offset="0.404" stop-color="#1c84c4"/><stop offset="0.441" stop-color="#5953d0"/><stop offset="0.542" stop-color="#8644ca"/><stop offset="0.544" stop-color="#20b080"/><stop offset="0.551" stop-color="#98d828"/><stop offset="0.560" stop-color="#70c030"/><stop offset="0.571" stop-color="#20a0a0"/><stop offset="0.587" stop-color="#7c4fd4"/><stop offset="0.668" stop-color="#5a5bd4"/><stop offset="0.708" stop-color="#1c8bc4"/><stop offset="0.750" stop-color="#24ac5a"/><stop offset="0.778" stop-color="#b2ca20"/><stop offset="0.874" stop-color="#b2ca20"/><stop offset="0.893" stop-color="#1890c0"/><stop offset="0.896" stop-color="#c040c0"/><stop offset="0.900" stop-color="#c04020"/><stop offset="0.980" stop-color="#b83c1e"/></linearGradient>
<linearGradient id="g199" gradientUnits="userSpaceOnUse" x1="2423.0" y1="601.4" x2="2550.5" y2="954.9"><stop offset="0.020" stop-color="#240a05"/><stop offset="0.030" stop-color="#682412"/><stop offset="0.064" stop-color="#883016"/><stop offset="0.119" stop-color="#ad3e1d"/><stop offset="0.191" stop-color="#ae3d1d"/><stop offset="0.247" stop-color="#a83a1c"/><stop offset="0.249" stop-color="#b030b0"/><stop offset="0.252" stop-color="#3050c0"/><stop offset="0.261" stop-color="#a0b120"/><stop offset="0.342" stop-color="#99b120"/><stop offset="0.371" stop-color="#20aa60"/><stop offset="0.401" stop-color="#1c84c4"/><stop offset="0.438" stop-color="#5b52d0"/><stop offset="0.541" stop-color="#8844ca"/><stop offset="0.543" stop-color="#20b080"/><stop offset="0.550" stop-color="#98d828"/><stop offset="0.559" stop-color="#70c030"/><stop offset="0.570" stop-color="#20a0a0"/><stop offset="0.587" stop-color="#7f4ed4"/><stop offset="0.668" stop-color="#5c5ad4"/><stop offset="0.708" stop-color="#1c8ac4"/><stop offset="0.751" stop-color="#24ac5a"/><stop offset="0.779" stop-color="#b2ca20"/><stop offset="0.874" stop-color="#b2ca20"/><stop offset="0.893" stop-color="#1890c0"/><stop offset="0.896" stop-color="#c040c0"/><stop offset="0.900" stop-color="#c04020"/><stop offset="0.980" stop-color="#b83c1e"/></linearGradient>
<linearGradient id="g200" gradientUnits="userSpaceOnUse" x1="2429.0" y1="600.3" x2="2556.6" y2="952.6"><stop offset="0.020" stop-color="#240a05"/><stop offset="0.030" stop-color="#672412"/><stop offset="0.063" stop-color="#872f16"/><stop offset="0.119" stop-color="#ad3e1d"/><stop offset="0.189" stop-color="#ae3d1d"/><stop offset="0.245" stop-color="#a83a1c"/><stop offset="0.247" stop-color="#b030b0"/><stop offset="0.250" stop-color="#3050c0"/><stop offset="0.259" stop-color="#a0b120"/><stop offset="0.339" stop-color="#99b120"/><stop offset="0.368" stop-color="#20aa60"/><stop offset="0.398" stop-color="#1c84c4"/><stop offset="0.435" stop-color="#5d51d0"/><stop offset="0.539" stop-color="#8b44ca"/><stop offset="0.542" stop-color="#20b080"/><stop offset="0.549" stop-color="#98d828"/><stop offset="0.558" stop-color="#70c030"/><stop offset="0.569" stop-color="#20a0a0"/><stop offset="0.586" stop-color="#824cd4"/><stop offset="0.667" stop-color="#5e59d4"/><stop offset="0.709" stop-color="#1c89c4"/><stop offset="0.752" stop-color="#24ac5b"/><stop offset="0.781" stop-color="#b2ca20"/><stop offset="0.874" stop-color="#b2ca20"/><stop offset="0.893" stop-color="#1890c0"/><stop offset="0.896" stop-color="#c040c0"/><stop offset="0.900" stop-color="#c04020"/><stop offset="0.980" stop-color="#b83c1e"/></linearGradient>
<linearGradient id="g201" gradientUnits="userSpaceOnUse" x1="2435.0" y1="599.2" x2="2562.7" y2="950.3"><stop offset="0.020" stop-color="#240a05"/><stop offset="0.030" stop-color="#662412"/><stop offset="0.063" stop-color="#862f16"/><stop offset="0.118" stop-color="#ad3e1d"/><stop offset="0.187" stop-color="#ae3d1d"/><stop offset="0.243" stop-color="#a83a1c"/><stop offset="0.244" stop-color="#b030b0"/><stop offset="0.248" stop-color="#3050c0"/><stop offset="0.256" stop-color="#a0b120"/><stop offset="0.336" stop-color="#99b120"/><stop offset="0.364" stop-color="#20aa60"/><stop offset="0.394" stop-color="#1d83c5"/><stop offset="0.433" stop-color="#5f50d0"/><stop offset="0.538" stop-color="#8d43ca"/><stop offset="0.540" stop-color="#20b080"/><stop offset="0.547" stop-color="#98d828"/><stop offset="0.557" stop-color="#70c030"/><stop offset="0.569" stop-color="#20a0a0"/><stop offset="0.586" stop-color="#864bd3"/><stop offset="0.667" stop-color="#6058d3"/><stop offset="0.709" stop-color="#1d88c5"/><stop offset="0.752" stop-color="#23ab5b"/><stop offset="0.782" stop-color="#b2ca20"/><stop offset="0.874" stop-color="#b2ca20"/><stop offset="0.893" stop-color="#1890c0"/><stop offset="0.896" stop-color="#c040c0"/><stop offset="0.900" stop-color="#c04020"/><stop offset="0.980" stop-color="#b83c1e"/></linearGradient>
<linearGradient id="g202" gradientUnits="userSpaceOnUse" x1="2441.0" y1="598.2" x2="2568.8" y2="947.9"><stop offset="0.020" stop-color="#240905"/><stop offset="0.030" stop-color="#652411"/><stop offset="0.063" stop-color="#862f15"/><stop offset="0.117" stop-color="#ac3d1d"/><stop offset="0.186" stop-color="#ad3d1d"/><stop offset="0.241" stop-color="#a83a1c"/><stop offset="0.242" stop-color="#b030b0"/><stop offset="0.246" stop-color="#3050c0"/><stop offset="0.254" stop-color="#a0b120"/><stop offset="0.332" stop-color="#99b120"/><stop offset="0.361" stop-color="#20a960"/><stop offset="0.390" stop-color="#1d83c5"/><stop offset="0.430" stop-color="#614fd0"/><stop offset="0.536" stop-color="#8f43c9"/><stop offset="0.539" stop-color="#20b080"/><stop offset="0.546" stop-color="#98d828"/><stop offset="0.556" stop-color="#70c030"/><stop offset="0.568" stop-color="#20a0a0"/><stop offset="0.585" stop-color="#894ad3"/><stop offset="0.666" stop-color="#6257d3"/><stop offset="0.709" stop-color="#1d87c5"/><stop offset="0.753" stop-color="#23ab5c"/><stop offset="0.783" stop-color="#b1c920"/><stop offset="0.874" stop-color="#b1c920"/><stop offset="0.892" stop-color="#1890c0"/><stop offset="0.896" stop-color="#c040c0"/><stop offset="0.900" stop-color="#c04020"/><stop offset="0.980" stop-color="#b83c1e"/></linearGradient>
<linearGradient id="g203" gradientUnits="userSpaceOnUse" x1="2447.0" y1="597.3" x2="2575.0" y2="945.4"><stop offset="0.020" stop-color="#230905"/><stop offset="0.030" stop-color="#652311"/><stop offset="0.062" stop-color="#852f15"/><stop offset="0.116" stop-color="#ac3d1d"/><stop offset="0.184" stop-color="#ad3d1d"/><stop offset="0.238" stop-color="#a83a1c"/><stop offset="0.240" stop-color="#b030b0"/><stop offset="0.243" stop-color="#3050c0"/><stop offset="0.252" stop-color="#a0b120"/><stop offset="0.328" stop-color="#99b120"/><stop offset="0.357" stop-color="#20a960"/><stop offset="0.387" stop-color="#1e82c6"/><stop offset="0.427" stop-color="#634ed0"/><stop offset="0.535" stop-color="#9242c9"/><stop offset="0.537" stop-color="#20b080"/><stop offset="0.545" stop-color="#98d828"/><stop offset="0.555" stop-color="#70c030"/><stop offset="0.567" stop-color="#20a0a0"/><stop offset="0.584" stop-color="#8c48d2"/><stop offset="0.665" stop-color="#6456d2"/><stop offset="0.709" stop-color="#1e86c6"/><stop offset="0.754" stop-color="#22aa5c"/><stop offset="0.784" stop-color="#b1c920"/><stop offset="0.874" stop-color="#b1c920"/><stop offset="0.892" stop-color="#1890c0"/><stop offset="0.896" stop-color="#c040c0"/><stop offset="0.900" stop-color="#c04020"/><stop offset="0.980" stop-color="#b83c1e"/></linearGradient>
<linearGradient id="g204" gradientUnits="userSpaceOnUse" x1="2453.0" y1="596.3" x2="2579.3" y2="944.5"><stop offset="0.020" stop-color="#230905"/><stop offset="0.030" stop-color="#642311"/><stop offset="0.062" stop-color="#852e15"/><stop offset="0.115" stop-color="#ac3d1d"/><stop offset="0.182" stop-color="#ad3d1d"/><stop offset="0.236" stop-color="#a83a1c"/><stop offset="0.237" stop-color="#b030b0"/><stop offset="0.241" stop-color="#3050c0"/><stop offset="0.249" stop-color="#a0b120"/><stop offset="0.324" stop-color="#99b120"/><stop offset="0.353" stop-color="#20a960"/><stop offset="0.383" stop-color="#1e82c6"/><stop offset="0.424" stop-color="#654dd0"/><stop offset="0.533" stop-color="#9442c9"/><stop offset="0.536" stop-color="#20b080"/><stop offset="0.543" stop-color="#98d828"/><stop offset="0.554" stop-color="#70c030"/><stop offset="0.566" stop-color="#20a0a0"/><stop offset="0.584" stop-color="#8f47d2"/><stop offset="0.665" stop-color="#6655d2"/><stop offset="0.709" stop-color="#1e85c6"/><stop offset="0.755" stop-color="#22aa5d"/><stop offset="0.785" stop-color="#b1c920"/><stop offset="0.873" stop-color="#b1c920"/><stop offset="0.892" stop-color="#1890c0"/><stop offset="0.896" stop-color="#c040c0"/><stop offset="0.900" stop-color="#c04020"/><stop offset="0.980" stop-color="#b83c1e"/></linearGradient>
<linearGradient id="g205" gradientUnits="userSpaceOnUse" x1="2459.0" y1="595.4" x2="2581.5" y2="945.3"><stop offset="0.020" stop-color="#230905"/><stop offset="0.030" stop-color="#632311"/><stop offset="0.062" stop-color="#842e15"/><stop offset="0.114" stop-color="#ab3d1d"/><stop offset="0.180" stop-color="#ad3d1d"/><stop offset="0.233" stop-color="#a83a1c"/><stop offset="0.235" stop-color="#b030b0"/><stop offset="0.238" stop-color="#3050c0"/><stop offset="0.247" stop-color="#a0b020"/><stop offset="0.320" stop-color="#98b020"/><stop offset="0.350" stop-color="#20a960"/><stop offset="0.379" stop-color="#1e82c6"/><stop offset="0.420" stop-color="#674cd0"/><stop offset="0.531" stop-color="#9642c9"/><stop offset="0.534" stop-color="#20b080"/><stop offset="0.542" stop-color="#98d828"/><stop offset="0.553" stop-color="#70c030"/><stop offset="0.565" stop-color="#20a0a0"/><stop offset="0.583" stop-color="#9246d2"/><stop offset="0.664" stop-color="#6854d2"/><stop offset="0.709" stop-color="#1e84c6"/><stop offset="0.755" stop-color="#22aa5e"/><stop offset="0.786" stop-color="#b1c920"/><stop offset="0.873" stop-color="#b1c920"/><stop offset="0.892" stop-color="#1890c0"/><stop offset="0.896" stop-color="#c040c0"/><stop offset="0.899" stop-color="#c04020"/><stop offset="0.980" stop-color="#b83c1e"/></linearGradient>
<linearGradient id="g206" gradientUnits="userSpaceOnUse" x1="2465.0" y1="594.6" x2="2583.3" y2="946.1"><stop offset="0.020" stop-color="#220904"/><stop offset="0.030" stop-color="#622211"/><stop offset="0.061" stop-color="#842e15"/><stop offset="0.113" stop-color="#ab3d1c"/><stop offset="0.178" stop-color="#ad3c1c"/><stop offset="0.231" stop-color="#a83a1c"/><stop offset="0.232" stop-color="#b030b0"/><stop offset="0.236" stop-color="#3050c0"/><stop offset="0.244" stop-color="#a0b020"/><stop offset="0.316" stop-color="#98b020"/><stop offset="0.346" stop-color="#20a960"/><stop offset="0.375" stop-color="#1f81c7"/><stop offset="0.417" stop-color="#694bd0"/><stop offset="0.530" stop-color="#9841c9"/><stop offset="0.532" stop-color="#20b080"/><stop offset="0.540" stop-color="#98d828"/><stop offset="0.551" stop-color="#70c030"/><stop offset="0.564" stop-color="#20a0a0"/><stop offset="0.582" stop-color="#9544d1"/><stop offset="0.663" stop-color="#6a53d1"/><stop offset="0.709" stop-color="#1f83c7"/><stop offset="0.756" stop-color="#21a95e"/><stop offset="0.787" stop-color="#b1c920"/><stop offset="0.873" stop-color="#b1c920"/><stop offset="0.892" stop-color="#1890c0"/><stop offset="0.895" stop-color="#c040c0"/><stop offset="0.899" stop-color="#c04020"/><stop offset="0.980" stop-color="#b83c1e"/></linearGradient>
<linearGradient id="g207" gradientUnits="userSpaceOnUse" x1="2471.0" y1="593.9" x2="2585.0" y2="946.9"><stop offset="0.021" stop-color="#220904"/><stop offset="0.030" stop-color="#612211"/><stop offset="0.061" stop-color="#832e15"/><stop offset="0.112" stop-color="#ab3d1c"/><stop offset="0.176" stop-color="#ad3c1c"/><stop offset="0.228" stop-color="#a83a1c"/><stop offset="0.229" stop-color="#b030b0"/><stop offset="0.233" stop-color="#3050c0"/><stop offset="0.241" stop-color="#a0b020"/><stop offset="0.312" stop-color="#98b020"/><stop offset="0.341" stop-color="#20a860"/><stop offset="0.371" stop-color="#1f81c7"/><stop offset="0.414" stop-color="#6b4ad0"/><stop offset="0.528" stop-color="#9b41c8"/><stop offset="0.530" stop-color="#20b080"/><stop offset="0.538" stop-color="#98d828"/><stop offset="0.550" stop-color="#70c030"/><stop offset="0.563" stop-color="#20a0a0"/><stop offset="0.581" stop-color="#9943d1"/><stop offset="0.662" stop-color="#6c52d1"/><stop offset="0.709" stop-color="#1f82c7"/><stop offset="0.757" stop-color="#21a95f"/><stop offset="0.788" stop-color="#b0c820"/><stop offset="0.873" stop-color="#b0c820"/><stop offset="0.891" stop-color="#1890c0"/><stop offset="0.895" stop-color="#c040c0"/><stop offset="0.899" stop-color="#c04020"/><stop offset="0.979" stop-color="#b83c1e"/></linearGradient>
<linearGradient id="g208" gradientUnits="userSpaceOnUse" x1="2477.0" y1="593.2" x2="2586.5" y2="947.6"><stop offset="0.021" stop-color="#220904"/><stop offset="0.030" stop-color="#602211"/><stop offset="0.061" stop-color="#822e15"/><stop offset="0.111" stop-color="#aa3d1c"/><stop offset="0.174" stop-color="#ad3c1c"/><stop offset="0.225" stop-color="#a83a1c"/><stop offset="0.226" stop-color="#b030b0"/><stop offset="0.230" stop-color="#3050c0"/><stop offset="0.238" stop-color="#a0b020"/><stop offset="0.308" stop-color="#98b020"/><stop offset="0.337" stop-color="#20a860"/><stop offset="0.367" stop-color="#1f81c7"/><stop offset="0.410" stop-color="#6d49d0"/><stop offset="0.526" stop-color="#9d41c8"/><stop offset="0.528" stop-color="#20b080"/><stop offset="0.537" stop-color="#98d828"/><stop offset="0.548" stop-color="#70c030"/><stop offset="0.561" stop-color="#20a0a0"/><stop offset="0.580" stop-color="#9c42d1"/><stop offset="0.661" stop-color="#6d51d1"/><stop offset="0.709" stop-color="#1f81c7"/><stop offset="0.757" stop-color="#21a95f"/><stop offset="0.789" stop-color="#b0c820"/><stop offset="0.872" stop-color="#b0c820"/><stop offset="0.891" stop-color="#1890c0"/><stop offset="0.895" stop-color="#c040c0"/><stop offset="0.899" stop-color="#c04020"/><stop offset="0.979" stop-color="#b83c1e"/></linearGradient>
<linearGradient id="g209" gradientUnits="userSpaceOnUse" x1="2483.0" y1="592.5" x2="2587.8" y2="948.2"><stop offset="0.021" stop-color="#220904"/><stop offset="0.030" stop-color="#5f2211"/><stop offset="0.060" stop-color="#822d15"/><stop offset="0.110" stop-color="#aa3d1c"/><stop offset="0.171" stop-color="#ad3c1c"/><stop offset="0.221" stop-color="#a83a1c"/><stop offset="0.223" stop-color="#b030b0"/><stop offset="0.227" stop-color="#3050c0"/><stop offset="0.235" stop-color="#a0b020"/><stop offset="0.303" stop-color="#98b020"/><stop offset="0.333" stop-color="#20a860"/><stop offset="0.362" stop-color="#2080c8"/><stop offset="0.406" stop-color="#6f48d0"/><stop offset="0.524" stop-color="#9f40c8"/><stop offset="0.526" stop-color="#20b080"/><stop offset="0.535" stop-color="#98d828"/><stop offset="0.546" stop-color="#70c030"/><stop offset="0.560" stop-color="#20a0a0"/><stop offset="0.578" stop-color="#9f40d0"/><stop offset="0.660" stop-color="#6f50d0"/><stop offset="0.709" stop-color="#2080c8"/><stop offset="0.757" stop-color="#20a860"/><stop offset="0.790" stop-color="#b0c820"/><stop offset="0.872" stop-color="#b0c820"/><stop offset="0.891" stop-color="#1890c0"/><stop offset="0.895" stop-color="#c040c0"/><stop offset="0.899" stop-color="#c04020"/><stop offset="0.979" stop-color="#b83c1e"/></linearGradient>
<linearGradient id="g210" gradientUnits="userSpaceOnUse" x1="2489.0" y1="591.9" x2="2589.2" y2="948.6"><stop offset="0.021" stop-color="#210904"/><stop offset="0.030" stop-color="#5f2111"/><stop offset="0.060" stop-color="#812d15"/><stop offset="0.109" stop-color="#aa3d1c"/><stop offset="0.169" stop-color="#ad3c1c"/><stop offset="0.218" stop-color="#a83a1c"/><stop offset="0.219" stop-color="#b030b0"/><stop offset="0.223" stop-color="#3050c0"/><stop offset="0.232" stop-color="#a0b020"/><stop offset="0.300" stop-color="#98b020"/><stop offset="0.330" stop-color="#21a761"/><stop offset="0.359" stop-color="#217fc8"/><stop offset="0.403" stop-color="#7148d0"/><stop offset="0.522" stop-color="#a040c8"/><stop offset="0.524" stop-color="#20b080"/><stop offset="0.533" stop-color="#98d828"/><stop offset="0.544" stop-color="#70c030"/><stop offset="0.558" stop-color="#20a0a0"/><stop offset="0.577" stop-color="#a040d0"/><stop offset="0.658" stop-color="#7050d0"/><stop offset="0.708" stop-color="#2080c8"/><stop offset="0.757" stop-color="#20a860"/><stop offset="0.790" stop-color="#b0c820"/><stop offset="0.872" stop-color="#b0c820"/><stop offset="0.891" stop-color="#1890c0"/><stop offset="0.895" stop-color="#c040c0"/><stop offset="0.898" stop-color="#c04020"/><stop offset="0.979" stop-color="#b83c1e"/></linearGradient>
<linearGradient id="g211" gradientUnits="userSpaceOnUse" x1="2495.0" y1="591.5" x2="2590.4" y2="948.9"><stop offset="0.021" stop-color="#210804"/><stop offset="0.030" stop-color="#5e2110"/><stop offset="0.059" stop-color="#802d14"/><stop offset="0.107" stop-color="#a93c1c"/><stop offset="0.166" stop-color="#ac3c1c"/><stop offset="0.214" stop-color="#a83a1c"/><stop offset="0.216" stop-color="#b030b0"/><stop offset="0.220" stop-color="#3050c0"/><stop offset="0.228" stop-color="#9faf20"/><stop offset="0.297" stop-color="#97af20"/><stop offset="0.326" stop-color="#21a663"/><stop offset="0.356" stop-color="#237ec8"/><stop offset="0.401" stop-color="#7248cf"/><stop offset="0.520" stop-color="#a040c8"/><stop offset="0.522" stop-color="#20b080"/><stop offset="0.531" stop-color="#98d828"/><stop offset="0.542" stop-color="#70c030"/><stop offset="0.555" stop-color="#20a0a0"/><stop offset="0.574" stop-color="#a140d0"/><stop offset="0.657" stop-color="#7150d0"/><stop offset="0.706" stop-color="#217fc8"/><stop offset="0.755" stop-color="#21a860"/><stop offset="0.788" stop-color="#afc720"/><stop offset="0.871" stop-color="#afc720"/><stop offset="0.890" stop-color="#1890c0"/><stop offset="0.894" stop-color="#c040c0"/><stop offset="0.898" stop-color="#c04020"/><stop offset="0.979" stop-color="#b83c1e"/></linearGradient>
<linearGradient id="g212" gradientUnits="userSpaceOnUse" x1="2501.0" y1="591.2" x2="2591.6" y2="949.0"><stop offset="0.021" stop-color="#210804"/><stop offset="0.030" stop-color="#5d2110"/><stop offset="0.059" stop-color="#802d14"/><stop offset="0.106" stop-color="#a93c1c"/><stop offset="0.163" stop-color="#ac3c1c"/><stop offset="0.210" stop-color="#a83a1c"/><stop offset="0.212" stop-color="#b030b0"/><stop offset="0.216" stop-color="#3050c0"/><stop offset="0.224" stop-color="#9faf1f"/><stop offset="0.293" stop-color="#97af1f"/><stop offset="0.323" stop-color="#22a564"/><stop offset="0.353" stop-color="#247dc7"/><stop offset="0.398" stop-color="#7347cf"/><stop offset="0.517" stop-color="#a040c7"/><stop offset="0.520" stop-color="#20b080"/><stop offset="0.528" stop-color="#98d828"/><stop offset="0.539" stop-color="#70c030"/><stop offset="0.552" stop-color="#20a0a0"/><stop offset="0.571" stop-color="#a140d0"/><stop offset="0.655" stop-color="#7150d0"/><stop offset="0.704" stop-color="#217fc9"/><stop offset="0.754" stop-color="#21a860"/><stop offset="0.787" stop-color="#aec61f"/><stop offset="0.871" stop-color="#aec61f"/><stop offset="0.890" stop-color="#1890c0"/><stop offset="0.894" stop-color="#c040c0"/><stop offset="0.898" stop-color="#c04020"/><stop offset="0.979" stop-color="#b83c1e"/></linearGradient>
<linearGradient id="g213" gradientUnits="userSpaceOnUse" x1="2507.0" y1="590.9" x2="2592.8" y2="949.1"><stop offset="0.021" stop-color="#210804"/><stop offset="0.030" stop-color="#5c2110"/><stop offset="0.058" stop-color="#7f2c14"/><stop offset="0.104" stop-color="#a93c1c"/><stop offset="0.160" stop-color="#ac3c1c"/><stop offset="0.206" stop-color="#a83a1c"/><stop offset="0.208" stop-color="#b030b0"/><stop offset="0.212" stop-color="#3050c0"/><stop offset="0.220" stop-color="#9eae1f"/><stop offset="0.289" stop-color="#97ae1f"/><stop offset="0.319" stop-color="#23a466"/><stop offset="0.349" stop-color="#267cc7"/><stop offset="0.395" stop-color="#7447cf"/><stop offset="0.515" stop-color="#a040c7"/><stop offset="0.517" stop-color="#20b080"/><stop offset="0.525" stop-color="#98d828"/><stop offset="0.536" stop-color="#70c030"/><stop offset="0.549" stop-color="#20a0a0"/><stop offset="0.568" stop-color="#a140d0"/><stop offset="0.652" stop-color="#7150d0"/><stop offset="0.703" stop-color="#217fc9"/><stop offset="0.752" stop-color="#21a860"/><stop offset="0.786" stop-color="#aec51f"/><stop offset="0.870" stop-color="#aec51f"/><stop offset="0.890" stop-color="#1890c0"/><stop offset="0.894" stop-color="#c040c0"/><stop offset="0.898" stop-color="#c04020"/><stop offset="0.979" stop-color="#b83c1e"/></linearGradient>
<linearGradient id="g214" gradientUnits="userSpaceOnUse" x1="2513.0" y1="590.7" x2="2593.7" y2="949.0"><stop offset="0.021" stop-color="#200804"/><stop offset="0.030" stop-color="#5b2010"/><stop offset="0.057" stop-color="#7f2c14"/><stop offset="0.102" stop-color="#a83c1c"/><stop offset="0.157" stop-color="#ac3c1c"/><stop offset="0.202" stop-color="#a83a1c"/><stop offset="0.203" stop-color="#b030b0"/><stop offset="0.207" stop-color="#3050c0"/><stop offset="0.216" stop-color="#9dad1f"/><stop offset="0.285" stop-color="#96ad1f"/><stop offset="0.316" stop-color="#24a367"/><stop offset="0.346" stop-color="#277ac7"/><stop offset="0.391" stop-color="#7647ce"/><stop offset="0.512" stop-color="#a040c7"/><stop offset="0.515" stop-color="#20b080"/><stop offset="0.523" stop-color="#98d828"/><stop offset="0.534" stop-color="#70c030"/><stop offset="0.546" stop-color="#20a0a0"/><stop offset="0.566" stop-color="#a240d0"/><stop offset="0.650" stop-color="#7250d0"/><stop offset="0.701" stop-color="#227ec9"/><stop offset="0.751" stop-color="#22a860"/><stop offset="0.784" stop-color="#adc51f"/><stop offset="0.870" stop-color="#adc51f"/><stop offset="0.889" stop-color="#1890c0"/><stop offset="0.893" stop-color="#c040c0"/><stop offset="0.897" stop-color="#c04020"/><stop offset="0.979" stop-color="#b83c1e"/></linearGradient>
<linearGradient id="g215" gradientUnits="userSpaceOnUse" x1="2519.0" y1="590.5" x2="2594.5" y2="948.8"><stop offset="0.021" stop-color="#200804"/><stop offset="0.030" stop-color="#5a2010"/><stop offset="0.057" stop-color="#7e2c14"/><stop offset="0.101" stop-color="#a83c1c"/><stop offset="0.153" stop-color="#ac3c1c"/><stop offset="0.197" stop-color="#a83a1c"/><stop offset="0.199" stop-color="#b030b0"/><stop offset="0.203" stop-color="#3050c0"/><stop offset="0.211" stop-color="#9dad1f"/><stop offset="0.281" stop-color="#96ad1f"/><stop offset="0.312" stop-color="#25a269"/><stop offset="0.342" stop-color="#2979c7"/><stop offset="0.388" stop-color="#7747ce"/><stop offset="0.509" stop-color="#a040c7"/><stop offset="0.512" stop-color="#20b080"/><stop offset="0.520" stop-color="#98d828"/><stop offset="0.531" stop-color="#70c030"/><stop offset="0.543" stop-color="#20a0a0"/><stop offset="0.562" stop-color="#a240d0"/><stop offset="0.648" stop-color="#7250d0"/><stop offset="0.699" stop-color="#227ec9"/><stop offset="0.749" stop-color="#22a860"/><stop offset="0.783" stop-color="#adc41f"/><stop offset="0.869" stop-color="#adc41f"/><stop offset="0.889" stop-color="#1890c0"/><stop offset="0.893" stop-color="#c040c0"/><stop offset="0.897" stop-color="#c04020"/><stop offset="0.979" stop-color="#b83c1e"/></linearGradient>
<linearGradient id="g216" gradientUnits="userSpaceOnUse" x1="2525.0" y1="590.4" x2="2595.2" y2="948.4"><stop offset="0.022" stop-color="#200804"/><stop offset="0.030" stop-color="#591f10"/><stop offset="0.057" stop-color="#7c2b14"/><stop offset="0.099" stop-color="#a73b1c"/><stop offset="0.150" stop-color="#ab3c1c"/><stop offset="0.193" stop-color="#a83a1c"/><stop offset="0.194" stop-color="#b030b0"/><stop offset="0.198" stop-color="#3050c0"/><stop offset="0.207" stop-color="#9cac1f"/><stop offset="0.277" stop-color="#96ac1f"/><stop offset="0.308" stop-color="#25a16b"/><stop offset="0.338" stop-color="#2b78c7"/><stop offset="0.384" stop-color="#7847cd"/><stop offset="0.507" stop-color="#a040c7"/><stop offset="0.509" stop-color="#20b080"/><stop offset="0.517" stop-color="#98d828"/><stop offset="0.527" stop-color="#70c030"/><stop offset="0.539" stop-color="#20a0a0"/><stop offset="0.559" stop-color="#a340d0"/><stop offset="0.645" stop-color="#7350d0"/><stop offset="0.697" stop-color="#237dc9"/><stop offset="0.747" stop-color="#23a860"/><stop offset="0.781" stop-color="#acc31f"/><stop offset="0.868" stop-color="#acc31f"/><stop offset="0.888" stop-color="#1890c0"/><stop offset="0.892" stop-color="#c040c0"/><stop offset="0.896" stop-color="#c04020"/><stop offset="0.978" stop-color="#b83c1e"/></linearGradient>
<linearGradient id="g217" gradientUnits="userSpaceOnUse" x1="2531.0" y1="590.4" x2="2595.8" y2="948.0"><stop offset="0.022" stop-color="#1f0804"/><stop offset="0.030" stop-color="#571f0f"/><stop offset="0.057" stop-color="#7a2b14"/><stop offset="0.098" stop-color="#a53b1b"/><stop offset="0.146" stop-color="#ab3c1c"/><stop offset="0.188" stop-color="#a73a1c"/><stop offset="0.189" stop-color="#b030b0"/><stop offset="0.193" stop-color="#3050c0"/><stop offset="0.202" stop-color="#9cac1e"/><stop offset="0.273" stop-color="#95ac1e"/><stop offset="0.304" stop-color="#26a06c"/><stop offset="0.334" stop-color="#2c77c6"/><stop offset="0.381" stop-color="#7946cd"/><stop offset="0.504" stop-color="#a040c6"/><stop offset="0.506" stop-color="#20b080"/><stop offset="0.514" stop-color="#98d828"/><stop offset="0.524" stop-color="#70c030"/><stop offset="0.536" stop-color="#20a0a0"/><stop offset="0.556" stop-color="#a340d0"/><stop offset="0.642" stop-color="#7350d0"/><stop offset="0.694" stop-color="#237dca"/><stop offset="0.745" stop-color="#23a860"/><stop offset="0.780" stop-color="#abc21e"/><stop offset="0.868" stop-color="#abc21e"/><stop offset="0.888" stop-color="#1890c0"/><stop offset="0.892" stop-color="#c040c0"/><stop offset="0.896" stop-color="#c04020"/><stop offset="0.978" stop-color="#b83c1e"/></linearGradient>
<linearGradient id="g218" gradientUnits="userSpaceOnUse" x1="2537.0" y1="590.5" x2="2596.3" y2="947.3"><stop offset="0.022" stop-color="#1f0804"/><stop offset="0.031" stop-color="#551e0f"/><stop offset="0.056" stop-color="#782a13"/><stop offset="0.097" stop-color="#a33a1b"/><stop offset="0.142" stop-color="#aa3c1c"/><stop offset="0.182" stop-color="#a73a1c"/><stop offset="0.184" stop-color="#b030b0"/><stop offset="0.188" stop-color="#3050c0"/><stop offset="0.197" stop-color="#9bab1e"/><stop offset="0.268" stop-color="#95ab1e"/><stop offset="0.299" stop-color="#279f6e"/><stop offset="0.330" stop-color="#2e76c6"/><stop offset="0.377" stop-color="#7a46cd"/><stop offset="0.500" stop-color="#a040c6"/><stop offset="0.503" stop-color="#20b080"/><stop offset="0.510" stop-color="#98d828"/><stop offset="0.521" stop-color="#70c030"/><stop offset="0.532" stop-color="#20a0a0"/><stop offset="0.552" stop-color="#a340d0"/><stop offset="0.640" stop-color="#7350d0"/><stop offset="0.692" stop-color="#237dca"/><stop offset="0.743" stop-color="#23a860"/><stop offset="0.778" stop-color="#abc21e"/><stop offset="0.867" stop-color="#abc21e"/><stop offset="0.887" stop-color="#1890c0"/><stop offset="0.891" stop-color="#c040c0"/><stop offset="0.895" stop-color="#c04020"/><stop offset="0.978" stop-color="#b83c1e"/></linearGradient>
<linearGradient id="g219" gradientUnits="userSpaceOnUse" x1="2543.0" y1="590.8" x2="2596.7" y2="946.5"><stop offset="0.022" stop-color="#1e0804"/><stop offset="0.031" stop-color="#531d0e"/><stop offset="0.056" stop-color="#762913"/><stop offset="0.095" stop-color="#a2391b"/><stop offset="0.138" stop-color="#a93c1c"/><stop offset="0.177" stop-color="#a63a1c"/><stop offset="0.178" stop-color="#b030b0"/><stop offset="0.182" stop-color="#3050c0"/><stop offset="0.191" stop-color="#9bab1e"/><stop offset="0.263" stop-color="#95ab1e"/><stop offset="0.294" stop-color="#289e6f"/><stop offset="0.325" stop-color="#2f74c6"/><stop offset="0.372" stop-color="#7c46cc"/><stop offset="0.497" stop-color="#a040c6"/><stop offset="0.500" stop-color="#20b080"/><stop offset="0.507" stop-color="#98d828"/><stop offset="0.517" stop-color="#70c030"/><stop offset="0.528" stop-color="#20a0a0"/><stop offset="0.549" stop-color="#a440d0"/><stop offset="0.637" stop-color="#7450d0"/><stop offset="0.690" stop-color="#247cca"/><stop offset="0.741" stop-color="#24a860"/><stop offset="0.776" stop-color="#aac11e"/><stop offset="0.866" stop-color="#aac11e"/><stop offset="0.886" stop-color="#1890c0"/><stop offset="0.891" stop-color="#c040c0"/><stop offset="0.895" stop-color="#c04020"/><stop offset="0.978" stop-color="#b83c1e"/></linearGradient>
<linearGradient id="g220" gradientUnits="userSpaceOnUse" x1="2549.0" y1="591.2" x2="2597.1" y2="945.4"><stop offset="0.022" stop-color="#1e0704"/><stop offset="0.031" stop-color="#521c0e"/><stop offset="0.056" stop-color="#752913"/><stop offset="0.093" stop-color="#a0391a"/><stop offset="0.133" stop-color="#a93b1b"/><stop offset="0.171" stop-color="#a63a1b"/><stop offset="0.172" stop-color="#b030b0"/><stop offset="0.176" stop-color="#3050c0"/><stop offset="0.185" stop-color="#9aaa1e"/><stop offset="0.258" stop-color="#94aa1e"/><stop offset="0.289" stop-color="#289d71"/><stop offset="0.320" stop-color="#3173c6"/><stop offset="0.368" stop-color="#7d46cc"/><stop offset="0.493" stop-color="#a040c6"/><stop offset="0.496" stop-color="#20b080"/><stop offset="0.503" stop-color="#98d828"/><stop offset="0.513" stop-color="#70c030"/><stop offset="0.524" stop-color="#20a0a0"/><stop offset="0.545" stop-color="#a440d0"/><stop offset="0.634" stop-color="#7450d0"/><stop offset="0.687" stop-color="#247cca"/><stop offset="0.739" stop-color="#24a860"/><stop offset="0.774" stop-color="#aac01e"/><stop offset="0.865" stop-color="#aac01e"/><stop offset="0.886" stop-color="#1890c0"/><stop offset="0.890" stop-color="#c040c0"/><stop offset="0.894" stop-color="#c04020"/><stop offset="0.978" stop-color="#b83c1e"/></linearGradient>
<linearGradient id="g221" gradientUnits="userSpaceOnUse" x1="2555.0" y1="591.6" x2="2597.4" y2="944.2"><stop offset="0.022" stop-color="#1d0704"/><stop offset="0.031" stop-color="#501c0d"/><stop offset="0.055" stop-color="#732813"/><stop offset="0.091" stop-color="#9e381a"/><stop offset="0.129" stop-color="#a83b1b"/><stop offset="0.164" stop-color="#a53a1b"/><stop offset="0.166" stop-color="#b030b0"/><stop offset="0.170" stop-color="#3050c0"/><stop offset="0.179" stop-color="#9aaa1e"/><stop offset="0.252" stop-color="#94aa1e"/><stop offset="0.284" stop-color="#299c73"/><stop offset="0.315" stop-color="#3372c6"/><stop offset="0.363" stop-color="#7e46cb"/><stop offset="0.490" stop-color="#a040c6"/><stop offset="0.492" stop-color="#20b080"/><stop offset="0.499" stop-color="#98d828"/><stop offset="0.509" stop-color="#70c030"/><stop offset="0.520" stop-color="#20a0a0"/><stop offset="0.541" stop-color="#a540d0"/><stop offset="0.630" stop-color="#7550d0"/><stop offset="0.684" stop-color="#257bca"/><stop offset="0.736" stop-color="#25a860"/><stop offset="0.772" stop-color="#a9bf1e"/><stop offset="0.864" stop-color="#a9bf1e"/><stop offset="0.885" stop-color="#1890c0"/><stop offset="0.889" stop-color="#c040c0"/><stop offset="0.893" stop-color="#c04020"/><stop offset="0.978" stop-color="#b83c1e"/></linearGradient>
<linearGradient id="g222" gradientUnits="userSpaceOnUse" x1="2561.0" y1="592.1" x2="2597.8" y2="942.7"><stop offset="0.023" stop-color="#1d0704"/><stop offset="0.031" stop-color="#4e1b0d"/><stop offset="0.055" stop-color="#712813"/><stop offset="0.088" stop-color="#9d381a"/><stop offset="0.124" stop-color="#a83b1b"/><stop offset="0.158" stop-color="#a53a1b"/><stop offset="0.159" stop-color="#b030b0"/><stop offset="0.163" stop-color="#3050c0"/><stop offset="0.172" stop-color="#99a91d"/><stop offset="0.246" stop-color="#94a91d"/><stop offset="0.278" stop-color="#2a9b74"/><stop offset="0.310" stop-color="#3471c5"/><stop offset="0.358" stop-color="#7f45cb"/><stop offset="0.486" stop-color="#a040c5"/><stop offset="0.489" stop-color="#20b080"/><stop offset="0.495" stop-color="#98d828"/><stop offset="0.505" stop-color="#70c030"/><stop offset="0.515" stop-color="#20a0a0"/><stop offset="0.536" stop-color="#a540d0"/><stop offset="0.627" stop-color="#7550d0"/><stop offset="0.682" stop-color="#257bcb"/><stop offset="0.734" stop-color="#25a860"/><stop offset="0.770" stop-color="#a8bf1d"/><stop offset="0.863" stop-color="#a8bf1d"/><stop offset="0.884" stop-color="#1890c0"/><stop offset="0.888" stop-color="#c040c0"/><stop offset="0.893" stop-color="#c04020"/><stop offset="0.977" stop-color="#b83c1e"/></linearGradient>
<linearGradient id="g223" gradientUnits="userSpaceOnUse" x1="2567.0" y1="592.7" x2="2598.1" y2="941.1"><stop offset="0.023" stop-color="#1d0704"/><stop offset="0.031" stop-color="#4c1a0d"/><stop offset="0.054" stop-color="#6f2712"/><stop offset="0.086" stop-color="#9b3719"/><stop offset="0.119" stop-color="#a73b1b"/><stop offset="0.150" stop-color="#a53a1b"/><stop offset="0.152" stop-color="#b030b0"/><stop offset="0.156" stop-color="#3050c0"/><stop offset="0.165" stop-color="#99a91d"/><stop offset="0.240" stop-color="#93a91d"/><stop offset="0.272" stop-color="#2b9a76"/><stop offset="0.304" stop-color="#3670c5"/><stop offset="0.353" stop-color="#8045cb"/><stop offset="0.482" stop-color="#a040c5"/><stop offset="0.484" stop-color="#20b080"/><stop offset="0.491" stop-color="#98d828"/><stop offset="0.500" stop-color="#70c030"/><stop offset="0.511" stop-color="#20a0a0"/><stop offset="0.532" stop-color="#a540d0"/><stop offset="0.624" stop-color="#7550d0"/><stop offset="0.679" stop-color="#257bcb"/><stop offset="0.731" stop-color="#25a860"/><stop offset="0.768" stop-color="#a8be1d"/><stop offset="0.862" stop-color="#a8be1d"/><stop offset="0.883" stop-color="#1890c0"/><stop offset="0.888" stop-color="#c040c0"/><stop offset="0.892" stop-color="#c04020"/><stop offset="0.977" stop-color="#b83c1e"/></linearGradient>
<linearGradient id="g224" gradientUnits="userSpaceOnUse" x1="2573.0" y1="593.5" x2="2598.5" y2="939.3"><stop offset="0.023" stop-color="#1c0704"/><stop offset="0.031" stop-color="#4b190c"/><stop offset="0.053" stop-color="#6d2612"/><stop offset="0.083" stop-color="#9a3619"/><stop offset="0.113" stop-color="#a63b1b"/><stop offset="0.143" stop-color="#a43a1b"/><stop offset="0.144" stop-color="#b030b0"/><stop offset="0.148" stop-color="#3050c0"/><stop offset="0.158" stop-color="#98a81d"/><stop offset="0.233" stop-color="#93a81d"/><stop offset="0.265" stop-color="#2c9977"/><stop offset="0.298" stop-color="#376ec5"/><stop offset="0.347" stop-color="#8245ca"/><stop offset="0.477" stop-color="#a040c5"/><stop offset="0.480" stop-color="#20b080"/><stop offset="0.486" stop-color="#98d828"/><stop offset="0.495" stop-color="#70c030"/><stop offset="0.506" stop-color="#20a0a0"/><stop offset="0.527" stop-color="#a640d0"/><stop offset="0.620" stop-color="#7650d0"/><stop offset="0.675" stop-color="#267acb"/><stop offset="0.728" stop-color="#26a860"/><stop offset="0.766" stop-color="#a7bd1d"/><stop offset="0.861" stop-color="#a7bd1d"/><stop offset="0.882" stop-color="#1890c0"/><stop offset="0.887" stop-color="#c040c0"/><stop offset="0.891" stop-color="#c04020"/><stop offset="0.977" stop-color="#b83c1e"/></linearGradient>
<linearGradient id="g225" gradientUnits="userSpaceOnUse" x1="2579.0" y1="594.5" x2="2598.8" y2="937.2"><stop offset="0.023" stop-color="#1c0704"/><stop offset="0.031" stop-color="#49180c"/><stop offset="0.051" stop-color="#6b2612"/><stop offset="0.079" stop-color="#983619"/><stop offset="0.107" stop-color="#a63b1b"/><stop offset="0.134" stop-color="#a43a1b"/><stop offset="0.136" stop-color="#b030b0"/><stop offset="0.140" stop-color="#3050c0"/><stop offset="0.150" stop-color="#97a71d"/><stop offset="0.225" stop-color="#93a71d"/><stop offset="0.258" stop-color="#2c9879"/><stop offset="0.291" stop-color="#396dc5"/><stop offset="0.340" stop-color="#8345ca"/><stop offset="0.472" stop-color="#a040c5"/><stop offset="0.475" stop-color="#20b080"/><stop offset="0.481" stop-color="#98d828"/><stop offset="0.490" stop-color="#70c030"/><stop offset="0.500" stop-color="#20a0a0"/><stop offset="0.522" stop-color="#a640d0"/><stop offset="0.616" stop-color="#7650d0"/><stop offset="0.672" stop-color="#267acb"/><stop offset="0.725" stop-color="#26a860"/><stop offset="0.763" stop-color="#a7bc1d"/><stop offset="0.860" stop-color="#a7bc1d"/><stop offset="0.881" stop-color="#1890c0"/><stop offset="0.886" stop-color="#c040c0"/><stop offset="0.890" stop-color="#c04020"/><stop offset="0.977" stop-color="#b83c1e"/></linearGradient>
<linearGradient id="g226" gradientUnits="userSpaceOnUse" x1="2585.0" y1="595.6" x2="2599.1" y2="935.0"><stop offset="0.024" stop-color="#1b0704"/><stop offset="0.030" stop-color="#47180b"/><stop offset="0.050" stop-color="#692512"/><stop offset="0.075" stop-color="#963518"/><stop offset="0.100" stop-color="#a53b1b"/><stop offset="0.125" stop-color="#a33a1b"/><stop offset="0.127" stop-color="#b030b0"/><stop offset="0.131" stop-color="#3050c0"/><stop offset="0.141" stop-color="#97a71d"/><stop offset="0.217" stop-color="#92a71d"/><stop offset="0.251" stop-color="#2d977b"/><stop offset="0.284" stop-color="#3b6cc5"/><stop offset="0.334" stop-color="#8445c9"/><stop offset="0.467" stop-color="#a040c5"/><stop offset="0.470" stop-color="#20b080"/><stop offset="0.476" stop-color="#98d828"/><stop offset="0.485" stop-color="#70c030"/><stop offset="0.494" stop-color="#20a0a0"/><stop offset="0.516" stop-color="#a740d0"/><stop offset="0.611" stop-color="#7750d0"/><stop offset="0.668" stop-color="#2779cb"/><stop offset="0.722" stop-color="#27a860"/><stop offset="0.760" stop-color="#a6bc1d"/><stop offset="0.858" stop-color="#a6bc1d"/><stop offset="0.880" stop-color="#1890c0"/><stop offset="0.885" stop-color="#c040c0"/><stop offset="0.889" stop-color="#c04020"/><stop offset="0.976" stop-color="#b83c1e"/></linearGradient>
<linearGradient id="g227" gradientUnits="userSpaceOnUse" x1="2591.0" y1="596.8" x2="2599.4" y2="932.5"><stop offset="0.024" stop-color="#1b0704"/><stop offset="0.030" stop-color="#45170b"/><stop offset="0.048" stop-color="#672411"/><stop offset="0.071" stop-color="#953418"/><stop offset="0.093" stop-color="#a43b1b"/><stop offset="0.116" stop-color="#a33a1b"/><stop offset="0.118" stop-color="#b030b0"/><stop offset="0.122" stop-color="#3050c0"/><stop offset="0.132" stop-color="#96a61c"/><stop offset="0.209" stop-color="#92a61c"/><stop offset="0.243" stop-color="#2e967c"/><stop offset="0.276" stop-color="#3c6bc4"/><stop offset="0.327" stop-color="#8544c9"/><stop offset="0.461" stop-color="#a040c4"/><stop offset="0.464" stop-color="#20b080"/><stop offset="0.470" stop-color="#98d828"/><stop offset="0.479" stop-color="#70c030"/><stop offset="0.489" stop-color="#20a0a0"/><stop offset="0.511" stop-color="#a740d0"/><stop offset="0.607" stop-color="#7750d0"/><stop offset="0.665" stop-color="#2779cc"/><stop offset="0.719" stop-color="#27a860"/><stop offset="0.757" stop-color="#a5bb1c"/><stop offset="0.857" stop-color="#a5bb1c"/><stop offset="0.879" stop-color="#1890c0"/><stop offset="0.884" stop-color="#c040c0"/><stop offset="0.888" stop-color="#c04020"/><stop offset="0.976" stop-color="#b83c1e"/></linearGradient>
<linearGradient id="g228" gradientUnits="userSpaceOnUse" x1="2597.0" y1="598.1" x2="2599.8" y2="929.8"><stop offset="0.024" stop-color="#1a0704"/><stop offset="0.030" stop-color="#44160a"/><stop offset="0.046" stop-color="#652411"/><stop offset="0.067" stop-color="#933418"/><stop offset="0.086" stop-color="#a43b1b"/><stop offset="0.106" stop-color="#a23a1b"/><stop offset="0.108" stop-color="#b030b0"/><stop offset="0.112" stop-color="#3050c0"/><stop offset="0.122" stop-color="#96a61c"/><stop offset="0.200" stop-color="#91a61c"/><stop offset="0.234" stop-color="#2f957e"/><stop offset="0.269" stop-color="#3e6ac4"/><stop offset="0.320" stop-color="#8644c9"/><stop offset="0.456" stop-color="#a040c4"/><stop offset="0.459" stop-color="#20b080"/><stop offset="0.465" stop-color="#98d828"/><stop offset="0.473" stop-color="#70c030"/><stop offset="0.482" stop-color="#20a0a0"/><stop offset="0.505" stop-color="#a740d0"/><stop offset="0.602" stop-color="#7750d0"/><stop offset="0.661" stop-color="#2779cc"/><stop offset="0.716" stop-color="#27a860"/><stop offset="0.755" stop-color="#a5ba1c"/><stop offset="0.856" stop-color="#a5ba1c"/><stop offset="0.878" stop-color="#1890c0"/><stop offset="0.883" stop-color="#c040c0"/><stop offset="0.887" stop-color="#c04020"/><stop offset="0.976" stop-color="#b83c1e"/></linearGradient>
<linearGradient id="g229" gradientUnits="userSpaceOnUse" x1="2603.0" y1="599.6" x2="2603.0" y2="926.9"><stop offset="0.024" stop-color="#1a0604"/><stop offset="0.030" stop-color="#42150a"/><stop offset="0.044" stop-color="#632311"/><stop offset="0.062" stop-color="#913317"/><stop offset="0.078" stop-color="#a33a1a"/><stop offset="0.096" stop-color="#a23a1a"/><stop offset="0.097" stop-color="#b030b0"/><stop offset="0.102" stop-color="#3050c0"/><stop offset="0.112" stop-color="#95a51c"/><stop offset="0.191" stop-color="#91a51c"/><stop offset="0.225" stop-color="#30947f"/><stop offset="0.260" stop-color="#3f68c4"/><stop offset="0.312" stop-color="#8844c8"/><stop offset="0.450" stop-color="#a040c4"/><stop offset="0.453" stop-color="#20b080"/><stop offset="0.458" stop-color="#98d828"/><stop offset="0.467" stop-color="#70c030"/><stop offset="0.476" stop-color="#20a0a0"/><stop offset="0.499" stop-color="#a840d0"/><stop offset="0.597" stop-color="#7850d0"/><stop offset="0.657" stop-color="#2878cc"/><stop offset="0.712" stop-color="#28a860"/><stop offset="0.751" stop-color="#a4b91c"/><stop offset="0.854" stop-color="#a4b91c"/><stop offset="0.877" stop-color="#1890c0"/><stop offset="0.881" stop-color="#c040c0"/><stop offset="0.886" stop-color="#c04020"/><stop offset="0.976" stop-color="#b83c1e"/></linearGradient>
<linearGradient id="g230" gradientUnits="userSpaceOnUse" x1="2609.0" y1="601.2" x2="2609.0" y2="923.9"><stop offset="0.025" stop-color="#1a0604"/><stop offset="0.029" stop-color="#40150a"/><stop offset="0.041" stop-color="#612211"/><stop offset="0.056" stop-color="#903217"/><stop offset="0.069" stop-color="#a23a1a"/><stop offset="0.084" stop-color="#a23a1a"/><stop offset="0.086" stop-color="#b030b0"/><stop offset="0.090" stop-color="#3050c0"/><stop offset="0.101" stop-color="#95a51c"/><stop offset="0.181" stop-color="#91a51c"/><stop offset="0.216" stop-color="#309381"/><stop offset="0.251" stop-color="#4167c4"/><stop offset="0.303" stop-color="#8944c8"/><stop offset="0.443" stop-color="#a040c4"/><stop offset="0.446" stop-color="#20b080"/><stop offset="0.452" stop-color="#98d828"/><stop offset="0.460" stop-color="#70c030"/><stop offset="0.469" stop-color="#20a0a0"/><stop offset="0.492" stop-color="#a840d0"/><stop offset="0.592" stop-color="#7850d0"/><stop offset="0.652" stop-color="#2878cc"/><stop offset="0.708" stop-color="#28a860"/><stop offset="0.748" stop-color="#a4b91c"/><stop offset="0.852" stop-color="#a4b91c"/><stop offset="0.875" stop-color="#1890c0"/><stop offset="0.880" stop-color="#c040c0"/><stop offset="0.885" stop-color="#c04020"/><stop offset="0.975" stop-color="#b83c1e"/></linearGradient>
<linearGradient id="g231" gradientUnits="userSpaceOnUse" x1="2615.0" y1="603.0" x2="2615.0" y2="920.9"><stop offset="0.025" stop-color="#190604"/><stop offset="0.029" stop-color="#3e1409"/><stop offset="0.039" stop-color="#5f2211"/><stop offset="0.050" stop-color="#8e3217"/><stop offset="0.060" stop-color="#a23a1a"/><stop offset="0.072" stop-color="#a13a1a"/><stop offset="0.074" stop-color="#b030b0"/><stop offset="0.078" stop-color="#3050c0"/><stop offset="0.089" stop-color="#94a41c"/><stop offset="0.170" stop-color="#90a41c"/><stop offset="0.206" stop-color="#319283"/><stop offset="0.241" stop-color="#4366c4"/><stop offset="0.294" stop-color="#8a44c7"/><stop offset="0.436" stop-color="#a040c4"/><stop offset="0.439" stop-color="#20b080"/><stop offset="0.445" stop-color="#98d828"/><stop offset="0.452" stop-color="#70c030"/><stop offset="0.461" stop-color="#20a0a0"/><stop offset="0.485" stop-color="#a940d0"/><stop offset="0.586" stop-color="#7950d0"/><stop offset="0.647" stop-color="#2977cc"/><stop offset="0.704" stop-color="#29a860"/><stop offset="0.744" stop-color="#a3b81c"/><stop offset="0.850" stop-color="#a3b81c"/><stop offset="0.874" stop-color="#1890c0"/><stop offset="0.879" stop-color="#c040c0"/><stop offset="0.883" stop-color="#c04020"/><stop offset="0.975" stop-color="#b83c1e"/></linearGradient>
<linearGradient id="g232" gradientUnits="userSpaceOnUse" x1="2621.0" y1="604.9" x2="2621.0" y2="917.9"><stop offset="0.026" stop-color="#190604"/><stop offset="0.028" stop-color="#3d1309"/><stop offset="0.035" stop-color="#5d2110"/><stop offset="0.044" stop-color="#8c3116"/><stop offset="0.051" stop-color="#a13a1a"/><stop offset="0.059" stop-color="#a13a1a"/><stop offset="0.060" stop-color="#b030b0"/><stop offset="0.065" stop-color="#3050c0"/><stop offset="0.076" stop-color="#94a41b"/><stop offset="0.159" stop-color="#90a41b"/><stop offset="0.195" stop-color="#329184"/><stop offset="0.231" stop-color="#4465c3"/><stop offset="0.285" stop-color="#8b43c7"/><stop offset="0.429" stop-color="#a040c3"/><stop offset="0.432" stop-color="#20b080"/><stop offset="0.437" stop-color="#98d828"/><stop offset="0.445" stop-color="#70c030"/><stop offset="0.453" stop-color="#20a0a0"/><stop offset="0.477" stop-color="#a940d0"/><stop offset="0.580" stop-color="#7950d0"/><stop offset="0.642" stop-color="#2977cd"/><stop offset="0.699" stop-color="#29a860"/><stop offset="0.741" stop-color="#a2b71b"/><stop offset="0.848" stop-color="#a2b71b"/><stop offset="0.872" stop-color="#1890c0"/><stop offset="0.877" stop-color="#c040c0"/><stop offset="0.882" stop-color="#c04020"/><stop offset="0.974" stop-color="#b83c1e"/></linearGradient>
<linearGradient id="g233" gradientUnits="userSpaceOnUse" x1="2627.0" y1="607.1" x2="2627.0" y2="914.8"><stop offset="0.026" stop-color="#1830d0"/><stop offset="0.049" stop-color="#1830d0"/><stop offset="0.060" stop-color="#93a31b"/><stop offset="0.145" stop-color="#90a31b"/><stop offset="0.181" stop-color="#339086"/><stop offset="0.218" stop-color="#4664c3"/><stop offset="0.273" stop-color="#8c43c7"/><stop offset="0.420" stop-color="#a040c3"/><stop offset="0.424" stop-color="#20b080"/><stop offset="0.429" stop-color="#98d828"/><stop offset="0.436" stop-color="#70c030"/><stop offset="0.445" stop-color="#20a0a0"/><stop offset="0.469" stop-color="#a940d0"/><stop offset="0.574" stop-color="#7950d0"/><stop offset="0.637" stop-color="#2977cd"/><stop offset="0.695" stop-color="#29a860"/><stop offset="0.736" stop-color="#a2b61b"/><stop offset="0.846" stop-color="#a2b61b"/><stop offset="0.870" stop-color="#1890c0"/><stop offset="0.875" stop-color="#c040c0"/><stop offset="0.880" stop-color="#c04020"/><stop offset="0.974" stop-color="#b83c1e"/></linearGradient>
<linearGradient id="g234" gradientUnits="userSpaceOnUse" x1="2633.0" y1="609.8" x2="2633.0" y2="911.8"><stop offset="0.026" stop-color="#1830d0"/><stop offset="0.060" stop-color="#1830d0"/><stop offset="0.070" stop-color="#92a21b"/><stop offset="0.150" stop-color="#8fa21b"/><stop offset="0.185" stop-color="#348f87"/><stop offset="0.220" stop-color="#4763c3"/><stop offset="0.272" stop-color="#8d43c6"/><stop offset="0.411" stop-color="#a040c3"/><stop offset="0.414" stop-color="#20b080"/><stop offset="0.419" stop-color="#98d828"/><stop offset="0.427" stop-color="#70c030"/><stop offset="0.435" stop-color="#20a0a0"/><stop offset="0.459" stop-color="#aa40d0"/><stop offset="0.566" stop-color="#7a50d0"/><stop offset="0.630" stop-color="#2a76cd"/><stop offset="0.689" stop-color="#2aa860"/><stop offset="0.732" stop-color="#a1b61b"/><stop offset="0.844" stop-color="#a1b61b"/><stop offset="0.868" stop-color="#1890c0"/><stop offset="0.873" stop-color="#c040c0"/><stop offset="0.878" stop-color="#c04020"/><stop offset="0.974" stop-color="#b83c1e"/></linearGradient>
<linearGradient id="g235" gradientUnits="userSpaceOnUse" x1="2639.0" y1="612.5" x2="2639.0" y2="908.6"><stop offset="0.027" stop-color="#1830d0"/><stop offset="0.067" stop-color="#1830d0"/><stop offset="0.077" stop-color="#92a21b"/><stop offset="0.153" stop-color="#8fa21b"/><stop offset="0.186" stop-color="#348e89"/><stop offset="0.219" stop-color="#4961c3"/><stop offset="0.269" stop-color="#8f43c6"/><stop offset="0.401" stop-color="#a040c3"/><stop offset="0.404" stop-color="#20b080"/><stop offset="0.409" stop-color="#98d828"/><stop offset="0.416" stop-color="#70c030"/><stop offset="0.424" stop-color="#20a0a0"/><stop offset="0.449" stop-color="#aa40d0"/><stop offset="0.558" stop-color="#7a50d0"/><stop offset="0.623" stop-color="#2a76cd"/><stop offset="0.683" stop-color="#2aa860"/><stop offset="0.726" stop-color="#a1b51b"/><stop offset="0.841" stop-color="#a1b51b"/><stop offset="0.866" stop-color="#1890c0"/><stop offset="0.871" stop-color="#c040c0"/><stop offset="0.876" stop-color="#c04020"/><stop offset="0.973" stop-color="#b83c1e"/></linearGradient>
<linearGradient id="g236" gradientUnits="userSpaceOnUse" x1="2645.0" y1="615.2" x2="2645.0" y2="905.5"><stop offset="0.028" stop-color="#1830d0"/><stop offset="0.071" stop-color="#1830d0"/><stop offset="0.081" stop-color="#91a11b"/><stop offset="0.153" stop-color="#8fa11b"/><stop offset="0.185" stop-color="#358d8a"/><stop offset="0.217" stop-color="#4a60c3"/><stop offset="0.264" stop-color="#9043c5"/><stop offset="0.391" stop-color="#a040c3"/><stop offset="0.394" stop-color="#20b080"/><stop offset="0.399" stop-color="#98d828"/><stop offset="0.406" stop-color="#70c030"/><stop offset="0.414" stop-color="#20a0a0"/><stop offset="0.439" stop-color="#ab40d0"/><stop offset="0.550" stop-color="#7b50d0"/><stop offset="0.616" stop-color="#2b75cd"/><stop offset="0.677" stop-color="#2ba860"/><stop offset="0.721" stop-color="#a0b41b"/><stop offset="0.838" stop-color="#a0b41b"/><stop offset="0.864" stop-color="#1890c0"/><stop offset="0.869" stop-color="#c040c0"/><stop offset="0.874" stop-color="#c04020"/><stop offset="0.972" stop-color="#b83c1e"/></linearGradient>
<linearGradient id="g237" gradientUnits="userSpaceOnUse" x1="2651.0" y1="617.8" x2="2651.0" y2="902.3"><stop offset="0.028" stop-color="#1830d0"/><stop offset="0.073" stop-color="#1830d0"/><stop offset="0.082" stop-color="#91a11a"/><stop offset="0.152" stop-color="#8ea11a"/><stop offset="0.183" stop-color="#368c8c"/><stop offset="0.213" stop-color="#4c5fc2"/><stop offset="0.259" stop-color="#9142c5"/><stop offset="0.380" stop-color="#a040c2"/><stop offset="0.384" stop-color="#20b080"/><stop offset="0.388" stop-color="#98d828"/><stop offset="0.395" stop-color="#70c030"/><stop offset="0.402" stop-color="#20a0a0"/><stop offset="0.429" stop-color="#ab40d0"/><stop offset="0.541" stop-color="#7b50d0"/><stop offset="0.609" stop-color="#2b75ce"/><stop offset="0.671" stop-color="#2ba860"/><stop offset="0.716" stop-color="#9fb31a"/><stop offset="0.835" stop-color="#9fb31a"/><stop offset="0.861" stop-color="#1890c0"/><stop offset="0.866" stop-color="#c040c0"/><stop offset="0.872" stop-color="#c04020"/><stop offset="0.972" stop-color="#b83c1e"/></linearGradient>
<linearGradient id="g238" gradientUnits="userSpaceOnUse" x1="2657.0" y1="620.5" x2="2657.0" y2="899.1"><stop offset="0.029" stop-color="#1830d0"/><stop offset="0.074" stop-color="#1830d0"/><stop offset="0.083" stop-color="#90a01a"/><stop offset="0.150" stop-color="#8ea01a"/><stop offset="0.179" stop-color="#378b8e"/><stop offset="0.208" stop-color="#4e5ec2"/><stop offset="0.252" stop-color="#9242c5"/><stop offset="0.369" stop-color="#a040c2"/><stop offset="0.372" stop-color="#20b080"/><stop offset="0.377" stop-color="#98d828"/><stop offset="0.383" stop-color="#70c030"/><stop offset="0.391" stop-color="#20a0a0"/><stop offset="0.417" stop-color="#ab40d0"/><stop offset="0.532" stop-color="#7b50d0"/><stop offset="0.602" stop-color="#2b75ce"/><stop offset="0.664" stop-color="#2ba860"/><stop offset="0.710" stop-color="#9fb31a"/><stop offset="0.832" stop-color="#9fb31a"/><stop offset="0.859" stop-color="#1890c0"/><stop offset="0.864" stop-color="#c040c0"/><stop offset="0.869" stop-color="#c04020"/><stop offset="0.971" stop-color="#b83c1e"/></linearGradient>
<linearGradient id="g239" gradientUnits="userSpaceOnUse" x1="2663.0" y1="623.4" x2="2663.0" y2="895.8"><stop offset="0.029" stop-color="#1830d0"/><stop offset="0.074" stop-color="#1830d0"/><stop offset="0.084" stop-color="#90a01a"/><stop offset="0.148" stop-color="#8ea01a"/><stop offset="0.176" stop-color="#388a8f"/><stop offset="0.203" stop-color="#4f5dc2"/><stop offset="0.245" stop-color="#9342c4"/><stop offset="0.357" stop-color="#a040c2"/><stop offset="0.360" stop-color="#20b080"/><stop offset="0.365" stop-color="#98d828"/><stop offset="0.371" stop-color="#70c030"/><stop offset="0.378" stop-color="#20a0a0"/><stop offset="0.405" stop-color="#ac40d0"/><stop offset="0.523" stop-color="#7c50d0"/><stop offset="0.593" stop-color="#2c74ce"/><stop offset="0.657" stop-color="#2ca860"/><stop offset="0.704" stop-color="#9eb21a"/><stop offset="0.829" stop-color="#9eb21a"/><stop offset="0.856" stop-color="#1890c0"/><stop offset="0.861" stop-color="#c040c0"/><stop offset="0.867" stop-color="#c04020"/><stop offset="0.971" stop-color="#b83c1e"/></linearGradient>
<linearGradient id="g240" gradientUnits="userSpaceOnUse" x1="2669.0" y1="626.6" x2="2669.0" y2="892.5"><stop offset="0.030" stop-color="#1830d0"/><stop offset="0.076" stop-color="#1830d0"/><stop offset="0.085" stop-color="#8f9f1a"/><stop offset="0.146" stop-color="#8d9f1a"/><stop offset="0.172" stop-color="#388991"/><stop offset="0.198" stop-color="#515bc2"/><stop offset="0.238" stop-color="#9542c4"/><stop offset="0.343" stop-color="#a040c2"/><stop offset="0.347" stop-color="#20b080"/><stop offset="0.351" stop-color="#98d828"/><stop offset="0.357" stop-color="#70c030"/><stop offset="0.364" stop-color="#20a0a0"/><stop offset="0.392" stop-color="#ac40d0"/><stop offset="0.512" stop-color="#7c50d0"/><stop offset="0.584" stop-color="#2c74ce"/><stop offset="0.649" stop-color="#2ca860"/><stop offset="0.697" stop-color="#9eb11a"/><stop offset="0.825" stop-color="#9eb11a"/><stop offset="0.853" stop-color="#1890c0"/><stop offset="0.858" stop-color="#c040c0"/><stop offset="0.864" stop-color="#c04020"/><stop offset="0.970" stop-color="#b83c1e"/></linearGradient>
<linearGradient id="g241" gradientUnits="userSpaceOnUse" x1="2675.0" y1="630.1" x2="2675.0" y2="889.1"><stop offset="0.031" stop-color="#1830d0"/><stop offset="0.078" stop-color="#1830d0"/><stop offset="0.086" stop-color="#8f9f1a"/><stop offset="0.143" stop-color="#8d9f1a"/><stop offset="0.168" stop-color="#398892"/><stop offset="0.193" stop-color="#525ac2"/><stop offset="0.230" stop-color="#9642c3"/><stop offset="0.328" stop-color="#a040c2"/><stop offset="0.332" stop-color="#20b080"/><stop offset="0.336" stop-color="#98d828"/><stop offset="0.342" stop-color="#70c030"/><stop offset="0.349" stop-color="#20a0a0"/><stop offset="0.377" stop-color="#ad40d0"/><stop offset="0.500" stop-color="#7d50d0"/><stop offset="0.574" stop-color="#2d73ce"/><stop offset="0.640" stop-color="#2da860"/><stop offset="0.690" stop-color="#9db01a"/><stop offset="0.821" stop-color="#9db01a"/><stop offset="0.849" stop-color="#1890c0"/><stop offset="0.855" stop-color="#c040c0"/><stop offset="0.861" stop-color="#c04020"/><stop offset="0.969" stop-color="#b83c1e"/></linearGradient>
<linearGradient id="g242" gradientUnits="userSpaceOnUse" x1="2681.0" y1="633.9" x2="2681.0" y2="885.7"><stop offset="0.032" stop-color="#1830d0"/><stop offset="0.079" stop-color="#1830d0"/><stop offset="0.088" stop-color="#8e9e19"/><stop offset="0.140" stop-color="#8d9e19"/><stop offset="0.163" stop-color="#3a8794"/><stop offset="0.186" stop-color="#5459c1"/><stop offset="0.220" stop-color="#9741c3"/><stop offset="0.312" stop-color="#a040c1"/><stop offset="0.316" stop-color="#20b080"/><stop offset="0.320" stop-color="#98d828"/><stop offset="0.325" stop-color="#70c030"/><stop offset="0.332" stop-color="#20a0a0"/><stop offset="0.361" stop-color="#ad40d0"/><stop offset="0.487" stop-color="#7d50d0"/><stop offset="0.563" stop-color="#2d73cf"/><stop offset="0.631" stop-color="#2da860"/><stop offset="0.681" stop-color="#9cb019"/><stop offset="0.816" stop-color="#9cb019"/><stop offset="0.845" stop-color="#1890c0"/><stop offset="0.851" stop-color="#c040c0"/><stop offset="0.857" stop-color="#c04020"/><stop offset="0.968" stop-color="#b83c1e"/></linearGradient>
<linearGradient id="g243" gradientUnits="userSpaceOnUse" x1="2687.0" y1="637.8" x2="2687.0" y2="882.2"><stop offset="0.033" stop-color="#1830d0"/><stop offset="0.081" stop-color="#1830d0"/><stop offset="0.089" stop-color="#8e9e19"/><stop offset="0.137" stop-color="#8c9e19"/><stop offset="0.158" stop-color="#3b8696"/><stop offset="0.179" stop-color="#5658c1"/><stop offset="0.210" stop-color="#9841c3"/><stop offset="0.294" stop-color="#a040c1"/><stop offset="0.298" stop-color="#20b080"/><stop offset="0.302" stop-color="#98d828"/><stop offset="0.307" stop-color="#70c030"/><stop offset="0.313" stop-color="#20a0a0"/><stop offset="0.344" stop-color="#ad40d0"/><stop offset="0.473" stop-color="#7d50d0"/><stop offset="0.551" stop-color="#2d73cf"/><stop offset="0.621" stop-color="#2da860"/><stop offset="0.673" stop-color="#9caf19"/><stop offset="0.811" stop-color="#9caf19"/><stop offset="0.841" stop-color="#1890c0"/><stop offset="0.847" stop-color="#c040c0"/><stop offset="0.854" stop-color="#c04020"/><stop offset="0.967" stop-color="#b83c1e"/></linearGradient>
<linearGradient id="g244" gradientUnits="userSpaceOnUse" x1="2693.0" y1="641.7" x2="2693.0" y2="878.7"><stop offset="0.034" stop-color="#1830d0"/><stop offset="0.083" stop-color="#1830d0"/><stop offset="0.091" stop-color="#8d9d19"/><stop offset="0.134" stop-color="#8c9d19"/><stop offset="0.153" stop-color="#3c8597"/><stop offset="0.172" stop-color="#5757c1"/><stop offset="0.200" stop-color="#9941c2"/><stop offset="0.275" stop-color="#a040c1"/><stop offset="0.280" stop-color="#20b080"/><stop offset="0.283" stop-color="#98d828"/><stop offset="0.288" stop-color="#70c030"/><stop offset="0.294" stop-color="#20a0a0"/><stop offset="0.325" stop-color="#ae40d0"/><stop offset="0.459" stop-color="#7e50d0"/><stop offset="0.539" stop-color="#2e72cf"/><stop offset="0.610" stop-color="#2ea860"/><stop offset="0.663" stop-color="#9bae19"/><stop offset="0.806" stop-color="#9bae19"/><stop offset="0.837" stop-color="#1890c0"/><stop offset="0.843" stop-color="#c040c0"/><stop offset="0.850" stop-color="#c04020"/><stop offset="0.966" stop-color="#b83c1e"/></linearGradient>
<linearGradient id="g245" gradientUnits="userSpaceOnUse" x1="2699.0" y1="645.4" x2="2699.0" y2="875.2"><stop offset="0.035" stop-color="#1830d0"/><stop offset="0.085" stop-color="#1830d0"/><stop offset="0.093" stop-color="#8c9c19"/><stop offset="0.131" stop-color="#8c9c19"/><stop offset="0.148" stop-color="#3c8499"/><stop offset="0.164" stop-color="#5955c1"/><stop offset="0.189" stop-color="#9b41c2"/><stop offset="0.256" stop-color="#a040c1"/><stop offset="0.260" stop-color="#20b080"/><stop offset="0.263" stop-color="#98d828"/><stop offset="0.268" stop-color="#70c030"/><stop offset="0.274" stop-color="#20a0a0"/><stop offset="0.306" stop-color="#ae40d0"/><stop offset="0.443" stop-color="#7e50d0"/><stop offset="0.526" stop-color="#2e72cf"/><stop offset="0.599" stop-color="#2ea860"/><stop offset="0.654" stop-color="#9bad19"/><stop offset="0.801" stop-color="#9bad19"/><stop offset="0.833" stop-color="#1890c0"/><stop offset="0.839" stop-color="#c040c0"/><stop offset="0.846" stop-color="#c04020"/><stop offset="0.965" stop-color="#b83c1e"/></linearGradient>
<linearGradient id="g246" gradientUnits="userSpaceOnUse" x1="2705.0" y1="649.2" x2="2705.0" y2="871.6"><stop offset="0.036" stop-color="#1830d0"/><stop offset="0.088" stop-color="#1830d0"/><stop offset="0.095" stop-color="#8c9c19"/><stop offset="0.128" stop-color="#8b9c19"/><stop offset="0.142" stop-color="#3d839a"/><stop offset="0.156" stop-color="#5a54c1"/><stop offset="0.178" stop-color="#9c41c1"/><stop offset="0.234" stop-color="#a040c1"/><stop offset="0.239" stop-color="#20b080"/><stop offset="0.242" stop-color="#98d828"/><stop offset="0.247" stop-color="#70c030"/><stop offset="0.252" stop-color="#20a0a0"/><stop offset="0.285" stop-color="#af40d0"/><stop offset="0.427" stop-color="#7f50d0"/><stop offset="0.512" stop-color="#2f71cf"/><stop offset="0.586" stop-color="#2fa860"/><stop offset="0.643" stop-color="#9aad19"/><stop offset="0.795" stop-color="#9aad19"/><stop offset="0.828" stop-color="#1890c0"/><stop offset="0.834" stop-color="#c040c0"/><stop offset="0.841" stop-color="#c04020"/><stop offset="0.964" stop-color="#b83c1e"/></linearGradient>
<linearGradient id="g247" gradientUnits="userSpaceOnUse" x1="2711.0" y1="653.1" x2="2711.0" y2="868.2"><stop offset="0.037" stop-color="#1830d0"/><stop offset="0.091" stop-color="#1830d0"/><stop offset="0.098" stop-color="#8b9b18"/><stop offset="0.125" stop-color="#8b9b18"/><stop offset="0.136" stop-color="#3e829c"/><stop offset="0.148" stop-color="#5c53c0"/><stop offset="0.165" stop-color="#9d40c1"/><stop offset="0.212" stop-color="#a040c0"/><stop offset="0.216" stop-color="#20b080"/><stop offset="0.220" stop-color="#98d828"/><stop offset="0.225" stop-color="#70c030"/><stop offset="0.230" stop-color="#20a0a0"/><stop offset="0.264" stop-color="#af40d0"/><stop offset="0.409" stop-color="#7f50d0"/><stop offset="0.497" stop-color="#2f71d0"/><stop offset="0.573" stop-color="#2fa860"/><stop offset="0.631" stop-color="#99ac18"/><stop offset="0.788" stop-color="#99ac18"/><stop offset="0.822" stop-color="#1890c0"/><stop offset="0.829" stop-color="#c040c0"/><stop offset="0.836" stop-color="#c04020"/><stop offset="0.963" stop-color="#b83c1e"/></linearGradient>
<linearGradient id="g248" gradientUnits="userSpaceOnUse" x1="2717.0" y1="657.0" x2="2717.0" y2="864.9"><stop offset="0.038" stop-color="#1830d0"/><stop offset="0.094" stop-color="#1830d0"/><stop offset="0.101" stop-color="#8b9b18"/><stop offset="0.121" stop-color="#8b9b18"/><stop offset="0.130" stop-color="#3f819e"/><stop offset="0.138" stop-color="#5e52c0"/><stop offset="0.152" stop-color="#9e40c1"/><stop offset="0.187" stop-color="#a040c0"/><stop offset="0.191" stop-color="#20b080"/><stop offset="0.195" stop-color="#98d828"/><stop offset="0.200" stop-color="#70c030"/><stop offset="0.206" stop-color="#20a0a0"/><stop offset="0.241" stop-color="#af40d0"/><stop offset="0.390" stop-color="#7f50d0"/><stop offset="0.480" stop-color="#2f71d0"/><stop offset="0.559" stop-color="#2fa860"/><stop offset="0.618" stop-color="#99ab18"/><stop offset="0.780" stop-color="#99ab18"/><stop offset="0.814" stop-color="#1890c0"/><stop offset="0.822" stop-color="#c040c0"/><stop offset="0.829" stop-color="#c04020"/><stop offset="0.962" stop-color="#b83c1e"/></linearGradient>
<linearGradient id="g249" gradientUnits="userSpaceOnUse" x1="2723.0" y1="661.0" x2="2723.0" y2="861.7"><stop offset="0.040" stop-color="#1830d0"/><stop offset="0.098" stop-color="#1830d0"/><stop offset="0.104" stop-color="#8a9a18"/><stop offset="0.117" stop-color="#8a9a18"/><stop offset="0.123" stop-color="#40809f"/><stop offset="0.128" stop-color="#5f51c0"/><stop offset="0.137" stop-color="#9f40c0"/><stop offset="0.159" stop-color="#a040c0"/><stop offset="0.164" stop-color="#20b080"/><stop offset="0.168" stop-color="#98d828"/><stop offset="0.173" stop-color="#70c030"/><stop offset="0.179" stop-color="#20a0a0"/><stop offset="0.215" stop-color="#b040d0"/><stop offset="0.369" stop-color="#8050d0"/><stop offset="0.462" stop-color="#3070d0"/><stop offset="0.542" stop-color="#30a860"/><stop offset="0.604" stop-color="#98aa18"/><stop offset="0.770" stop-color="#98aa18"/><stop offset="0.806" stop-color="#1890c0"/><stop offset="0.813" stop-color="#c040c0"/><stop offset="0.821" stop-color="#c04020"/><stop offset="0.960" stop-color="#b83c1e"/></linearGradient>
<linearGradient id="g250" gradientUnits="userSpaceOnUse" x1="2729.0" y1="665.2" x2="2729.0" y2="858.6"><stop offset="0.041" stop-color="#1830d0"/><stop offset="0.102" stop-color="#1830d0"/><stop offset="0.142" stop-color="#ae44c7"/><stop offset="0.312" stop-color="#8053c7"/><stop offset="0.415" stop-color="#3472c7"/><stop offset="0.504" stop-color="#34a75d"/><stop offset="0.572" stop-color="#97a918"/><stop offset="0.757" stop-color="#97a918"/><stop offset="0.796" stop-color="#1890c0"/><stop offset="0.804" stop-color="#c040c0"/><stop offset="0.811" stop-color="#c04020"/><stop offset="0.959" stop-color="#b83c1e"/></linearGradient>
<linearGradient id="g251" gradientUnits="userSpaceOnUse" x1="2735.0" y1="669.4" x2="2735.0" y2="855.6"><stop offset="0.043" stop-color="#1830d0"/><stop offset="0.107" stop-color="#1830d0"/><stop offset="0.146" stop-color="#ab4db6"/><stop offset="0.313" stop-color="#815ab6"/><stop offset="0.413" stop-color="#3d76b6"/><stop offset="0.499" stop-color="#3da656"/><stop offset="0.566" stop-color="#96a818"/><stop offset="0.746" stop-color="#96a818"/><stop offset="0.785" stop-color="#1890c0"/><stop offset="0.793" stop-color="#c040c0"/><stop offset="0.801" stop-color="#c04020"/><stop offset="0.957" stop-color="#b83c1e"/></linearGradient>
<linearGradient id="g252" gradientUnits="userSpaceOnUse" x1="2741.0" y1="673.7" x2="2741.0" y2="852.4"><stop offset="0.045" stop-color="#1830d0"/><stop offset="0.112" stop-color="#1830d0"/><stop offset="0.150" stop-color="#a755a5"/><stop offset="0.312" stop-color="#8261a5"/><stop offset="0.410" stop-color="#457aa5"/><stop offset="0.494" stop-color="#45a54f"/><stop offset="0.559" stop-color="#95a618"/><stop offset="0.735" stop-color="#95a618"/><stop offset="0.773" stop-color="#1890c0"/><stop offset="0.781" stop-color="#c040c0"/><stop offset="0.789" stop-color="#c04020"/><stop offset="0.955" stop-color="#b83c1e"/></linearGradient>
<linearGradient id="g253" gradientUnits="userSpaceOnUse" x1="2747.0" y1="678.0" x2="2747.0" y2="849.2"><stop offset="0.047" stop-color="#1830d0"/><stop offset="0.117" stop-color="#1830d0"/><stop offset="0.154" stop-color="#a45e94"/><stop offset="0.312" stop-color="#836894"/><stop offset="0.407" stop-color="#4e7e94"/><stop offset="0.489" stop-color="#4ea348"/><stop offset="0.552" stop-color="#93a518"/><stop offset="0.722" stop-color="#93a518"/><stop offset="0.760" stop-color="#1890c0"/><stop offset="0.768" stop-color="#c040c0"/><stop offset="0.777" stop-color="#c04020"/><stop offset="0.953" stop-color="#b83c1e"/></linearGradient>
<linearGradient id="g254" gradientUnits="userSpaceOnUse" x1="2753.0" y1="682.3" x2="2753.0" y2="845.7"><stop offset="0.049" stop-color="#1830d0"/><stop offset="0.122" stop-color="#1830d0"/><stop offset="0.159" stop-color="#a06682"/><stop offset="0.312" stop-color="#846f82"/><stop offset="0.404" stop-color="#568282"/><stop offset="0.483" stop-color="#56a242"/><stop offset="0.544" stop-color="#92a318"/><stop offset="0.709" stop-color="#92a318"/><stop offset="0.746" stop-color="#1890c0"/><stop offset="0.755" stop-color="#c040c0"/><stop offset="0.764" stop-color="#c04020"/><stop offset="0.951" stop-color="#b83c1e"/></linearGradient>
<linearGradient id="g255" gradientUnits="userSpaceOnUse" x1="2759.0" y1="686.6" x2="2759.0" y2="842.0"><stop offset="0.051" stop-color="#1830d0"/><stop offset="0.128" stop-color="#1830d0"/><stop offset="0.164" stop-color="#9c6e71"/><stop offset="0.312" stop-color="#857671"/><stop offset="0.400" stop-color="#5e8671"/><stop offset="0.477" stop-color="#5ea13b"/><stop offset="0.536" stop-color="#91a218"/><stop offset="0.695" stop-color="#91a218"/><stop offset="0.731" stop-color="#1890c0"/><stop offset="0.741" stop-color="#c040c0"/><stop offset="0.750" stop-color="#c04020"/><stop offset="0.949" stop-color="#b83c1e"/></linearGradient>
<linearGradient id="g256" gradientUnits="userSpaceOnUse" x1="2765.0" y1="691.0" x2="2765.0" y2="838.2"><stop offset="0.054" stop-color="#1830d0"/><stop offset="0.135" stop-color="#1830d0"/><stop offset="0.170" stop-color="#997760"/><stop offset="0.311" stop-color="#867d60"/><stop offset="0.396" stop-color="#678a60"/><stop offset="0.470" stop-color="#679f34"/><stop offset="0.527" stop-color="#8fa018"/><stop offset="0.680" stop-color="#8fa018"/><stop offset="0.715" stop-color="#1890c0"/><stop offset="0.725" stop-color="#c040c0"/><stop offset="0.735" stop-color="#c04020"/><stop offset="0.946" stop-color="#b83c1e"/></linearGradient>
<linearGradient id="g257" gradientUnits="userSpaceOnUse" x1="2771.0" y1="695.4" x2="2771.0" y2="834.3"><stop offset="0.058" stop-color="#1830d0"/><stop offset="0.142" stop-color="#1830d0"/><stop offset="0.176" stop-color="#957f4f"/><stop offset="0.311" stop-color="#87844f"/><stop offset="0.392" stop-color="#6f8e4f"/><stop offset="0.462" stop-color="#6f9e2d"/><stop offset="0.516" stop-color="#8e9f18"/><stop offset="0.661" stop-color="#8e9f18"/><stop offset="0.696" stop-color="#1890c0"/><stop offset="0.706" stop-color="#c040c0"/><stop offset="0.717" stop-color="#c04020"/><stop offset="0.942" stop-color="#b83c1e"/></linearGradient>
<linearGradient id="g258" gradientUnits="userSpaceOnUse" x1="2777.0" y1="699.9" x2="2777.0" y2="830.2"><stop offset="0.061" stop-color="#1830d0"/><stop offset="0.149" stop-color="#1830d0"/><stop offset="0.182" stop-color="#92883d"/><stop offset="0.310" stop-color="#888b3d"/><stop offset="0.386" stop-color="#78913d"/><stop offset="0.452" stop-color="#789d27"/><stop offset="0.503" stop-color="#8d9d18"/><stop offset="0.641" stop-color="#8d9d18"/><stop offset="0.674" stop-color="#1890c0"/><stop offset="0.685" stop-color="#c040c0"/><stop offset="0.697" stop-color="#c04020"/><stop offset="0.939" stop-color="#b83c1e"/></linearGradient>
<linearGradient id="g259" gradientUnits="userSpaceOnUse" x1="2783.0" y1="704.5" x2="2783.0" y2="825.9"><stop offset="0.066" stop-color="#1830d0"/><stop offset="0.157" stop-color="#1830d0"/><stop offset="0.189" stop-color="#8e902c"/><stop offset="0.308" stop-color="#89922c"/><stop offset="0.380" stop-color="#80952c"/><stop offset="0.441" stop-color="#809c20"/><stop offset="0.489" stop-color="#8c9c18"/><stop offset="0.618" stop-color="#8c9c18"/><stop offset="0.650" stop-color="#1890c0"/><stop offset="0.662" stop-color="#c040c0"/><stop offset="0.674" stop-color="#c04020"/><stop offset="0.934" stop-color="#b83c1e"/></linearGradient>
<linearGradient id="g260" gradientUnits="userSpaceOnUse" x1="2789.0" y1="709.0" x2="2789.0" y2="821.2"><stop offset="0.071" stop-color="#1830d0"/><stop offset="0.163" stop-color="#1830d0"/><stop offset="0.194" stop-color="#8b991b"/><stop offset="0.304" stop-color="#8a991b"/><stop offset="0.371" stop-color="#89991b"/><stop offset="0.429" stop-color="#899a19"/><stop offset="0.473" stop-color="#8a9a18"/><stop offset="0.593" stop-color="#8a9a18"/><stop offset="0.624" stop-color="#1890c0"/><stop offset="0.637" stop-color="#c040c0"/><stop offset="0.650" stop-color="#c04020"/><stop offset="0.929" stop-color="#b83c1e"/></linearGradient>
<linearGradient id="g261" gradientUnits="userSpaceOnUse" x1="2795.0" y1="713.5" x2="2795.0" y2="815.9"><stop offset="0.078" stop-color="#1830d0"/><stop offset="0.168" stop-color="#1830d0"/><stop offset="0.198" stop-color="#8a9a18"/><stop offset="0.299" stop-color="#8a9a18"/><stop offset="0.360" stop-color="#8a9a18"/><stop offset="0.413" stop-color="#8a9a18"/><stop offset="0.454" stop-color="#8a9a18"/><stop offset="0.563" stop-color="#8a9a18"/><stop offset="0.593" stop-color="#1890c0"/><stop offset="0.608" stop-color="#c040c0"/><stop offset="0.623" stop-color="#c04020"/><stop offset="0.922" stop-color="#b83c1e"/></linearGradient>
<linearGradient id="g262" gradientUnits="userSpaceOnUse" x1="2801.0" y1="718.3" x2="2801.0" y2="810.1"><stop offset="0.087" stop-color="#1830d0"/><stop offset="0.174" stop-color="#1830d0"/><stop offset="0.203" stop-color="#8a9a18"/><stop offset="0.293" stop-color="#8a9a18"/><stop offset="0.348" stop-color="#8a9a18"/><stop offset="0.395" stop-color="#8a9a18"/><stop offset="0.431" stop-color="#8a9a18"/><stop offset="0.529" stop-color="#8a9a18"/><stop offset="0.558" stop-color="#1890c0"/><stop offset="0.574" stop-color="#c040c0"/><stop offset="0.591" stop-color="#c04020"/><stop offset="0.913" stop-color="#b83c1e"/></linearGradient>
<linearGradient id="g263" gradientUnits="userSpaceOnUse" x1="2807.0" y1="723.5" x2="2807.0" y2="803.4"><stop offset="0.100" stop-color="#1830d0"/><stop offset="0.186" stop-color="#1830d0"/><stop offset="0.214" stop-color="#8a9a18"/><stop offset="0.290" stop-color="#8a9a18"/><stop offset="0.336" stop-color="#8a9a18"/><stop offset="0.376" stop-color="#8a9a18"/><stop offset="0.406" stop-color="#8a9a18"/><stop offset="0.489" stop-color="#8a9a18"/><stop offset="0.516" stop-color="#1890c0"/><stop offset="0.535" stop-color="#c040c0"/><stop offset="0.554" stop-color="#c04020"/><stop offset="0.900" stop-color="#b83c1e"/></linearGradient>
<linearGradient id="g264" gradientUnits="userSpaceOnUse" x1="2813.0" y1="729.0" x2="2813.0" y2="794.9"><stop offset="0.121" stop-color="#1830d0"/><stop offset="0.215" stop-color="#1830d0"/><stop offset="0.242" stop-color="#8a9a18"/><stop offset="0.299" stop-color="#8a9a18"/><stop offset="0.333" stop-color="#8a9a18"/><stop offset="0.362" stop-color="#8a9a18"/><stop offset="0.385" stop-color="#8a9a18"/><stop offset="0.446" stop-color="#8a9a18"/><stop offset="0.473" stop-color="#1890c0"/><stop offset="0.495" stop-color="#c040c0"/><stop offset="0.518" stop-color="#c04020"/><stop offset="0.879" stop-color="#b83c1e"/></linearGradient>
<linearGradient id="g265" gradientUnits="userSpaceOnUse" x1="2819.0" y1="734.9" x2="2819.0" y2="784.0"><stop offset="0.163" stop-color="#1830d0"/><stop offset="0.294" stop-color="#1830d0"/><stop offset="0.319" stop-color="#8a9a18"/><stop offset="0.343" stop-color="#8a9a18"/><stop offset="0.357" stop-color="#8a9a18"/><stop offset="0.370" stop-color="#8a9a18"/><stop offset="0.379" stop-color="#8a9a18"/><stop offset="0.405" stop-color="#8a9a18"/><stop offset="0.430" stop-color="#1890c0"/><stop offset="0.460" stop-color="#c040c0"/><stop offset="0.491" stop-color="#c04020"/><stop offset="0.837" stop-color="#b83c1e"/></linearGradient>
<linearGradient id="g266" gradientUnits="userSpaceOnUse" x1="2825.0" y1="744.6" x2="2825.0" y2="773.1"><stop offset="0.281" stop-color="#1830d0"/><stop offset="0.401" stop-color="#1830d0"/><stop offset="0.419" stop-color="#c04020"/><stop offset="0.719" stop-color="#b83c1e"/></linearGradient>
<linearGradient id="g267" gradientUnits="userSpaceOnUse" x1="2831.0" y1="744.6" x2="2831.0" y2="773.1"><stop offset="0.281" stop-color="#1830d0"/><stop offset="0.401" stop-color="#1830d0"/><stop offset="0.419" stop-color="#c04020"/><stop offset="0.719" stop-color="#b83c1e"/></linearGradient>
</defs>
<g clip-path="url(#bc)">
<rect x="136" y="1068" width="7" height="29" fill="url(#g0)"/>
<rect x="142" y="1062" width="7" height="41" fill="url(#g1)"/>
<rect x="148" y="1060" width="7" height="47" fill="url(#g2)"/>
<rect x="154" y="1058" width="7" height="50" fill="url(#g3)"/>
<rect x="160" y="1057" width="7" height="52" fill="url(#g4)"/>
<rect x="166" y="1057" width="7" height="54" fill="url(#g5)"/>
<rect x="172" y="1056" width="7" height="55" fill="url(#g6)"/>
<rect x="178" y="1055" width="7" height="56" fill="url(#g7)"/>
<rect x="184" y="1054" width="7" height="58" fill="url(#g8)"/>
<rect x="190" y="1053" width="7" height="60" fill="url(#g9)"/>
<rect x="196" y="1051" width="7" height="63" fill="url(#g10)"/>
<rect x="202" y="1050" width="7" height="65" fill="url(#g11)"/>
<rect x="208" y="1048" width="7" height="68" fill="url(#g12)"/>
<rect x="214" y="1046" width="7" height="71" fill="url(#g13)"/>
<rect x="220" y="1045" width="7" height="74" fill="url(#g14)"/>
<rect x="226" y="1043" width="7" height="77" fill="url(#g15)"/>
<rect x="232" y="1041" width="7" height="80" fill="url(#g16)"/>
<rect x="238" y="1040" width="7" height="83" fill="url(#g17)"/>
<rect x="244" y="1038" width="7" height="86" fill="url(#g18)"/>
<rect x="250" y="1037" width="7" height="90" fill="url(#g19)"/>
<rect x="256" y="1035" width="7" height="93" fill="url(#g20)"/>
<rect x="262" y="1034" width="7" height="96" fill="url(#g21)"/>
<rect x="268" y="1032" width="7" height="99" fill="url(#g22)"/>
<rect x="274" y="1031" width="7" height="103" fill="url(#g23)"/>
<rect x="280" y="1029" width="7" height="106" fill="url(#g24)"/>
<rect x="286" y="1027" width="7" height="110" fill="url(#g25)"/>
<rect x="292" y="1026" width="7" height="114" fill="url(#g26)"/>
<rect x="298" y="1024" width="7" height="118" fill="url(#g27)"/>
<rect x="304" y="1023" width="7" height="122" fill="url(#g28)"/>
<rect x="310" y="1021" width="7" height="126" fill="url(#g29)"/>
<rect x="316" y="1020" width="7" height="130" fill="url(#g30)"/>
<rect x="322" y="1018" width="7" height="134" fill="url(#g31)"/>
<rect x="328" y="1017" width="7" height="138" fill="url(#g32)"/>
<rect x="334" y="1015" width="7" height="143" fill="url(#g33)"/>
<rect x="340" y="1014" width="7" height="148" fill="url(#g34)"/>
<rect x="346" y="1012" width="7" height="153" fill="url(#g35)"/>
<rect x="352" y="1011" width="7" height="158" fill="url(#g36)"/>
<rect x="358" y="1009" width="7" height="163" fill="url(#g37)"/>
<rect x="364" y="1008" width="7" height="168" fill="url(#g38)"/>
<rect x="370" y="1006" width="7" height="173" fill="url(#g39)"/>
<rect x="376" y="1005" width="7" height="178" fill="url(#g40)"/>
<rect x="382" y="1003" width="7" height="183" fill="url(#g41)"/>
<rect x="388" y="1002" width="7" height="186" fill="url(#g42)"/>
<rect x="394" y="1000" width="7" height="186" fill="url(#g43)"/>
<rect x="400" y="999" width="7" height="186" fill="url(#g44)"/>
<rect x="406" y="997" width="7" height="187" fill="url(#g45)"/>
<rect x="412" y="996" width="7" height="187" fill="url(#g46)"/>
<rect x="418" y="994" width="7" height="188" fill="url(#g47)"/>
<rect x="424" y="993" width="7" height="188" fill="url(#g48)"/>
<rect x="430" y="991" width="7" height="189" fill="url(#g49)"/>
<rect x="436" y="990" width="7" height="190" fill="url(#g50)"/>
<rect x="442" y="989" width="7" height="191" fill="url(#g51)"/>
<rect x="448" y="987" width="7" height="192" fill="url(#g52)"/>
<rect x="454" y="986" width="7" height="193" fill="url(#g53)"/>
<rect x="460" y="984" width="7" height="194" fill="url(#g54)"/>
<rect x="466" y="983" width="7" height="195" fill="url(#g55)"/>
<rect x="472" y="981" width="7" height="196" fill="url(#g56)"/>
<rect x="478" y="980" width="7" height="198" fill="url(#g57)"/>
<rect x="484" y="978" width="7" height="200" fill="url(#g58)"/>
<rect x="490" y="977" width="7" height="202" fill="url(#g59)"/>
<rect x="496" y="976" width="7" height="204" fill="url(#g60)"/>
<rect x="502" y="974" width="7" height="206" fill="url(#g61)"/>
<rect x="508" y="973" width="7" height="208" fill="url(#g62)"/>
<rect x="514" y="971" width="7" height="211" fill="url(#g63)"/>
<rect x="520" y="970" width="7" height="214" fill="url(#g64)"/>
<rect x="526" y="968" width="7" height="217" fill="url(#g65)"/>
<rect x="532" y="967" width="7" height="220" fill="url(#g66)"/>
<rect x="538" y="966" width="7" height="223" fill="url(#g67)"/>
<rect x="544" y="964" width="7" height="226" fill="url(#g68)"/>
<rect x="550" y="963" width="7" height="229" fill="url(#g69)"/>
<rect x="556" y="961" width="7" height="232" fill="url(#g70)"/>
<rect x="562" y="960" width="7" height="235" fill="url(#g71)"/>
<rect x="568" y="959" width="7" height="238" fill="url(#g72)"/>
<rect x="574" y="957" width="7" height="241" fill="url(#g73)"/>
<rect x="580" y="956" width="7" height="244" fill="url(#g74)"/>
<rect x="586" y="954" width="7" height="247" fill="url(#g75)"/>
<rect x="592" y="953" width="7" height="249" fill="url(#g76)"/>
<rect x="598" y="952" width="7" height="252" fill="url(#g77)"/>
<rect x="604" y="950" width="7" height="254" fill="url(#g78)"/>
<rect x="610" y="949" width="7" height="255" fill="url(#g79)"/>
<rect x="616" y="948" width="7" height="257" fill="url(#g80)"/>
<rect x="622" y="946" width="7" height="259" fill="url(#g81)"/>
<rect x="628" y="945" width="7" height="261" fill="url(#g82)"/>
<rect x="634" y="944" width="7" height="263" fill="url(#g83)"/>
<rect x="640" y="942" width="7" height="264" fill="url(#g84)"/>
<rect x="646" y="941" width="7" height="266" fill="url(#g85)"/>
<rect x="652" y="939" width="7" height="268" fill="url(#g86)"/>
<rect x="658" y="938" width="7" height="269" fill="url(#g87)"/>
<rect x="664" y="934" width="17" height="273" fill="url(#g88)"/>
<rect x="680" y="931" width="17" height="277" fill="url(#g89)"/>
<rect x="696" y="927" width="17" height="280" fill="url(#g90)"/>
<rect x="712" y="924" width="17" height="284" fill="url(#g91)"/>
<rect x="728" y="920" width="17" height="288" fill="url(#g92)"/>
<rect x="744" y="917" width="17" height="291" fill="url(#g93)"/>
<rect x="760" y="913" width="17" height="295" fill="url(#g94)"/>
<rect x="776" y="910" width="17" height="298" fill="url(#g95)"/>
<rect x="792" y="906" width="17" height="302" fill="url(#g96)"/>
<rect x="808" y="903" width="17" height="305" fill="url(#g97)"/>
<rect x="824" y="900" width="17" height="308" fill="url(#g98)"/>
<rect x="840" y="896" width="17" height="312" fill="url(#g99)"/>
<rect x="856" y="893" width="17" height="315" fill="url(#g100)"/>
<rect x="872" y="890" width="17" height="318" fill="url(#g101)"/>
<rect x="888" y="886" width="17" height="321" fill="url(#g102)"/>
<rect x="904" y="883" width="17" height="324" fill="url(#g103)"/>
<rect x="920" y="880" width="17" height="328" fill="url(#g104)"/>
<rect x="936" y="876" width="17" height="331" fill="url(#g105)"/>
<rect x="952" y="873" width="17" height="334" fill="url(#g106)"/>
<rect x="968" y="870" width="17" height="337" fill="url(#g107)"/>
<rect x="984" y="866" width="17" height="340" fill="url(#g108)"/>
<rect x="1000" y="863" width="17" height="342" fill="url(#g109)"/>
<rect x="1016" y="860" width="17" height="345" fill="url(#g110)"/>
<rect x="1032" y="857" width="17" height="348" fill="url(#g111)"/>
<rect x="1048" y="854" width="17" height="351" fill="url(#g112)"/>
<rect x="1064" y="850" width="17" height="353" fill="url(#g113)"/>
<rect x="1080" y="847" width="17" height="356" fill="url(#g114)"/>
<rect x="1096" y="844" width="17" height="359" fill="url(#g115)"/>
<rect x="1112" y="841" width="17" height="361" fill="url(#g116)"/>
<rect x="1128" y="838" width="17" height="364" fill="url(#g117)"/>
<rect x="1144" y="835" width="17" height="366" fill="url(#g118)"/>
<rect x="1160" y="832" width="17" height="369" fill="url(#g119)"/>
<rect x="1176" y="828" width="17" height="371" fill="url(#g120)"/>
<rect x="1192" y="825" width="17" height="373" fill="url(#g121)"/>
<rect x="1208" y="822" width="17" height="376" fill="url(#g122)"/>
<rect x="1224" y="819" width="17" height="378" fill="url(#g123)"/>
<rect x="1240" y="816" width="17" height="380" fill="url(#g124)"/>
<rect x="1256" y="813" width="17" height="382" fill="url(#g125)"/>
<rect x="1272" y="810" width="17" height="384" fill="url(#g126)"/>
<rect x="1288" y="807" width="17" height="386" fill="url(#g127)"/>
<rect x="1304" y="804" width="17" height="388" fill="url(#g128)"/>
<rect x="1320" y="801" width="17" height="390" fill="url(#g129)"/>
<rect x="1336" y="798" width="17" height="392" fill="url(#g130)"/>
<rect x="1352" y="795" width="17" height="394" fill="url(#g131)"/>
<rect x="1368" y="792" width="17" height="396" fill="url(#g132)"/>
<rect x="1384" y="789" width="17" height="398" fill="url(#g133)"/>
<rect x="1400" y="786" width="17" height="399" fill="url(#g134)"/>
<rect x="1416" y="783" width="17" height="401" fill="url(#g135)"/>
<rect x="1432" y="780" width="17" height="403" fill="url(#g136)"/>
<rect x="1448" y="777" width="17" height="404" fill="url(#g137)"/>
<rect x="1464" y="774" width="17" height="406" fill="url(#g138)"/>
<rect x="1480" y="771" width="17" height="407" fill="url(#g139)"/>
<rect x="1496" y="769" width="17" height="409" fill="url(#g140)"/>
<rect x="1512" y="766" width="17" height="410" fill="url(#g141)"/>
<rect x="1528" y="763" width="17" height="412" fill="url(#g142)"/>
<rect x="1544" y="760" width="17" height="413" fill="url(#g143)"/>
<rect x="1560" y="757" width="17" height="414" fill="url(#g144)"/>
<rect x="1576" y="754" width="17" height="415" fill="url(#g145)"/>
<rect x="1592" y="751" width="17" height="416" fill="url(#g146)"/>
<rect x="1608" y="748" width="17" height="418" fill="url(#g147)"/>
<rect x="1624" y="745" width="17" height="419" fill="url(#g148)"/>
<rect x="1640" y="742" width="17" height="420" fill="url(#g149)"/>
<rect x="1656" y="740" width="17" height="421" fill="url(#g150)"/>
<rect x="1672" y="737" width="17" height="422" fill="url(#g151)"/>
<rect x="1688" y="734" width="17" height="422" fill="url(#g152)"/>
<rect x="1704" y="731" width="17" height="423" fill="url(#g153)"/>
<rect x="1720" y="728" width="17" height="424" fill="url(#g154)"/>
<rect x="1736" y="725" width="17" height="425" fill="url(#g155)"/>
<rect x="1752" y="722" width="17" height="426" fill="url(#g156)"/>
<rect x="1768" y="719" width="17" height="426" fill="url(#g157)"/>
<rect x="1784" y="716" width="17" height="427" fill="url(#g158)"/>
<rect x="1800" y="714" width="17" height="428" fill="url(#g159)"/>
<rect x="1816" y="711" width="17" height="428" fill="url(#g160)"/>
<rect x="1832" y="708" width="17" height="429" fill="url(#g161)"/>
<rect x="1848" y="705" width="17" height="429" fill="url(#g162)"/>
<rect x="1864" y="702" width="17" height="429" fill="url(#g163)"/>
<rect x="1880" y="699" width="17" height="430" fill="url(#g164)"/>
<rect x="1896" y="696" width="17" height="430" fill="url(#g165)"/>
<rect x="1912" y="693" width="17" height="430" fill="url(#g166)"/>
<rect x="1928" y="690" width="17" height="431" fill="url(#g167)"/>
<rect x="1944" y="687" width="17" height="431" fill="url(#g168)"/>
<rect x="1960" y="684" width="17" height="431" fill="url(#g169)"/>
<rect x="1976" y="681" width="17" height="431" fill="url(#g170)"/>
<rect x="1992" y="679" width="17" height="431" fill="url(#g171)"/>
<rect x="2008" y="676" width="17" height="431" fill="url(#g172)"/>
<rect x="2024" y="673" width="17" height="431" fill="url(#g173)"/>
<rect x="2040" y="670" width="17" height="431" fill="url(#g174)"/>
<rect x="2056" y="667" width="17" height="431" fill="url(#g175)"/>
<rect x="2072" y="663" width="17" height="431" fill="url(#g176)"/>
<rect x="2088" y="660" width="17" height="431" fill="url(#g177)"/>
<rect x="2104" y="657" width="17" height="431" fill="url(#g178)"/>
<rect x="2120" y="654" width="17" height="430" fill="url(#g179)"/>
<rect x="2136" y="651" width="17" height="430" fill="url(#g180)"/>
<rect x="2152" y="648" width="17" height="430" fill="url(#g181)"/>
<rect x="2168" y="645" width="17" height="429" fill="url(#g182)"/>
<rect x="2184" y="642" width="17" height="429" fill="url(#g183)"/>
<rect x="2200" y="639" width="17" height="429" fill="url(#g184)"/>
<rect x="2216" y="636" width="17" height="428" fill="url(#g185)"/>
<rect x="2232" y="632" width="17" height="427" fill="url(#g186)"/>
<rect x="2248" y="629" width="17" height="427" fill="url(#g187)"/>
<rect x="2264" y="626" width="17" height="426" fill="url(#g188)"/>
<rect x="2280" y="623" width="17" height="425" fill="url(#g189)"/>
<rect x="2296" y="619" width="17" height="424" fill="url(#g190)"/>
<rect x="2312" y="616" width="17" height="423" fill="url(#g191)"/>
<rect x="2328" y="613" width="17" height="422" fill="url(#g192)"/>
<rect x="2344" y="610" width="17" height="420" fill="url(#g193)"/>
<rect x="2360" y="606" width="17" height="419" fill="url(#g194)"/>
<rect x="2376" y="603" width="17" height="417" fill="url(#g195)"/>
<rect x="2392" y="600" width="17" height="416" fill="url(#g196)"/>
<rect x="2408" y="599" width="7" height="411" fill="url(#g197)"/>
<rect x="2414" y="597" width="7" height="411" fill="url(#g198)"/>
<rect x="2420" y="596" width="7" height="410" fill="url(#g199)"/>
<rect x="2426" y="595" width="7" height="409" fill="url(#g200)"/>
<rect x="2432" y="594" width="7" height="408" fill="url(#g201)"/>
<rect x="2438" y="593" width="7" height="406" fill="url(#g202)"/>
<rect x="2444" y="592" width="7" height="405" fill="url(#g203)"/>
<rect x="2450" y="591" width="7" height="404" fill="url(#g204)"/>
<rect x="2456" y="591" width="7" height="403" fill="url(#g205)"/>
<rect x="2462" y="590" width="7" height="401" fill="url(#g206)"/>
<rect x="2468" y="589" width="7" height="400" fill="url(#g207)"/>
<rect x="2474" y="588" width="7" height="398" fill="url(#g208)"/>
<rect x="2480" y="588" width="7" height="397" fill="url(#g209)"/>
<rect x="2486" y="587" width="7" height="395" fill="url(#g210)"/>
<rect x="2492" y="587" width="7" height="393" fill="url(#g211)"/>
<rect x="2498" y="587" width="7" height="391" fill="url(#g212)"/>
<rect x="2504" y="586" width="7" height="388" fill="url(#g213)"/>
<rect x="2510" y="586" width="7" height="386" fill="url(#g214)"/>
<rect x="2516" y="586" width="7" height="384" fill="url(#g215)"/>
<rect x="2522" y="586" width="7" height="382" fill="url(#g216)"/>
<rect x="2528" y="586" width="7" height="379" fill="url(#g217)"/>
<rect x="2534" y="586" width="7" height="376" fill="url(#g218)"/>
<rect x="2540" y="586" width="7" height="374" fill="url(#g219)"/>
<rect x="2546" y="586" width="7" height="371" fill="url(#g220)"/>
<rect x="2552" y="587" width="7" height="368" fill="url(#g221)"/>
<rect x="2558" y="587" width="7" height="365" fill="url(#g222)"/>
<rect x="2564" y="588" width="7" height="361" fill="url(#g223)"/>
<rect x="2570" y="589" width="7" height="358" fill="url(#g224)"/>
<rect x="2576" y="590" width="7" height="354" fill="url(#g225)"/>
<rect x="2582" y="591" width="7" height="350" fill="url(#g226)"/>
<rect x="2588" y="592" width="7" height="346" fill="url(#g227)"/>
<rect x="2594" y="593" width="7" height="342" fill="url(#g228)"/>
<rect x="2600" y="594" width="7" height="338" fill="url(#g229)"/>
<rect x="2606" y="596" width="7" height="334" fill="url(#g230)"/>
<rect x="2612" y="598" width="7" height="329" fill="url(#g231)"/>
<rect x="2618" y="599" width="7" height="324" fill="url(#g232)"/>
<rect x="2624" y="601" width="7" height="319" fill="url(#g233)"/>
<rect x="2630" y="604" width="7" height="313" fill="url(#g234)"/>
<rect x="2636" y="607" width="7" height="308" fill="url(#g235)"/>
<rect x="2642" y="609" width="7" height="302" fill="url(#g236)"/>
<rect x="2648" y="612" width="7" height="296" fill="url(#g237)"/>
<rect x="2654" y="615" width="7" height="290" fill="url(#g238)"/>
<rect x="2660" y="617" width="7" height="284" fill="url(#g239)"/>
<rect x="2666" y="620" width="7" height="278" fill="url(#g240)"/>
<rect x="2672" y="624" width="7" height="271" fill="url(#g241)"/>
<rect x="2678" y="627" width="7" height="264" fill="url(#g242)"/>
<rect x="2684" y="631" width="7" height="257" fill="url(#g243)"/>
<rect x="2690" y="635" width="7" height="249" fill="url(#g244)"/>
<rect x="2696" y="639" width="7" height="242" fill="url(#g245)"/>
<rect x="2702" y="643" width="7" height="235" fill="url(#g246)"/>
<rect x="2708" y="647" width="7" height="227" fill="url(#g247)"/>
<rect x="2714" y="651" width="7" height="220" fill="url(#g248)"/>
<rect x="2720" y="655" width="7" height="213" fill="url(#g249)"/>
<rect x="2726" y="659" width="7" height="206" fill="url(#g250)"/>
<rect x="2732" y="663" width="7" height="198" fill="url(#g251)"/>
<rect x="2738" y="667" width="7" height="191" fill="url(#g252)"/>
<rect x="2744" y="671" width="7" height="183" fill="url(#g253)"/>
<rect x="2750" y="676" width="7" height="176" fill="url(#g254)"/>
<rect x="2756" y="680" width="7" height="168" fill="url(#g255)"/>
<rect x="2762" y="684" width="7" height="160" fill="url(#g256)"/>
<rect x="2768" y="689" width="7" height="152" fill="url(#g257)"/>
<rect x="2774" y="693" width="7" height="143" fill="url(#g258)"/>
<rect x="2780" y="698" width="7" height="134" fill="url(#g259)"/>
<rect x="2786" y="702" width="7" height="125" fill="url(#g260)"/>
<rect x="2792" y="707" width="7" height="116" fill="url(#g261)"/>
<rect x="2798" y="711" width="7" height="106" fill="url(#g262)"/>
<rect x="2804" y="716" width="7" height="95" fill="url(#g263)"/>
<rect x="2810" y="722" width="7" height="82" fill="url(#g264)"/>
<rect x="2816" y="727" width="7" height="67" fill="url(#g265)"/>
<rect x="2822" y="736" width="7" height="44" fill="url(#g266)"/>
<rect x="2828" y="740" width="7" height="37" fill="url(#g267)"/>
<path d="M160.0,1092.0 L168.0,1091.8 L176.0,1091.4 L184.0,1090.9 L192.0,1090.4 L200.0,1090.0 L208.0,1089.7 L216.0,1089.5 L224.0,1089.2 L232.0,1089.0 L240.0,1088.6 L248.0,1088.0 L256.0,1087.2 L264.0,1086.3 L272.0,1085.5 L280.0,1084.8 L288.0,1084.0 L296.0,1083.3 L304.0,1082.5 L312.0,1081.7 L320.0,1081.0 L328.0,1080.2 L336.0,1079.4 L344.0,1078.7 L352.0,1077.9 L360.0,1077.2 L368.0,1076.5 L376.0,1075.7 L384.0,1075.0 L392.0,1074.2 L400.0,1073.4 L408.0,1072.7 L416.0,1071.9 L424.0,1071.1 L432.0,1070.4 L440.0,1069.6 L448.0,1068.9 L456.0,1068.1 L464.0,1067.4 L472.0,1066.7 L480.0,1065.9 L488.0,1065.1 L496.0,1064.4 L504.0,1063.6 L512.0,1062.8 L520.0,1062.0 L528.0,1061.3 L536.0,1060.5 L544.0,1059.7 L552.0,1059.0 L560.0,1058.2 L568.0,1057.5 L576.0,1056.7 L584.0,1055.9 L592.0,1055.1 L600.0,1054.3 L608.0,1053.5 L616.0,1052.8 L624.0,1052.0 L632.0,1051.2 L640.0,1050.4 L648.0,1049.6 L656.0,1048.8 L664.0,1048.0 L672.0,1047.2 L680.0,1046.4 L688.0,1045.6 L696.0,1044.8 L704.0,1044.0 L712.0,1043.2 L720.0,1042.4 L728.0,1041.6 L736.0,1040.8 L744.0,1039.9 L752.0,1039.1 L760.0,1038.3 L768.0,1037.4 L776.0,1036.6 L784.0,1035.8 L792.0,1035.0 L800.0,1034.1 L808.0,1033.3 L816.0,1032.5 L824.0,1031.6 L832.0,1030.8 L840.0,1029.9 L848.0,1029.0 L856.0,1028.1 L864.0,1027.3 L872.0,1026.4 L880.0,1025.5 L888.0,1024.6 L896.0,1023.7 L904.0,1022.9 L912.0,1021.9 L920.0,1021.0 L928.0,1020.1 L936.0,1019.2 L944.0,1018.3 L952.0,1017.4 L960.0,1016.5 L968.0,1015.6 L976.0,1014.6 L984.0,1013.6 L992.0,1012.7 L1000.0,1011.7 L1008.0,1010.8 L1016.0,1009.9 L1024.0,1008.9 L1032.0,1007.9 L1040.0,1006.9 L1048.0,1005.9 L1056.0,1005.0 L1064.0,1004.0 L1072.0,1003.0 L1080.0,1002.0 L1088.0,1001.0 L1096.0,1000.0 L1104.0,999.0 L1112.0,997.9 L1120.0,996.9 L1128.0,995.9 L1136.0,994.8 L1144.0,993.8 L1152.0,992.7 L1160.0,991.6 L1168.0,990.6 L1176.0,989.5 L1184.0,988.4 L1192.0,987.3 L1200.0,986.2 L1208.0,985.1 L1216.0,984.0 L1224.0,982.9 L1232.0,981.8 L1240.0,980.7 L1248.0,979.5 L1256.0,978.4 L1264.0,977.2 L1272.0,976.0 L1280.0,974.9 L1288.0,973.7 L1296.0,972.5 L1304.0,971.4 L1312.0,970.2 L1320.0,969.0 L1328.0,967.8 L1336.0,966.6 L1344.0,965.3 L1352.0,964.1 L1360.0,962.8 L1368.0,961.6 L1376.0,960.3 L1384.0,959.1 L1392.0,957.8 L1400.0,956.5 L1408.0,955.2 L1416.0,953.9 L1424.0,952.6 L1432.0,951.3 L1440.0,950.0 L1448.0,948.7 L1456.0,947.3 L1464.0,945.9 L1472.0,944.6 L1480.0,943.2 L1488.0,941.9 L1496.0,940.5 L1504.0,939.1 L1512.0,937.7 L1520.0,936.3 L1528.0,934.9 L1536.0,933.4 L1544.0,931.9 L1552.0,930.5 L1560.0,929.0 L1568.0,927.5 L1576.0,926.1 L1584.0,924.6 L1592.0,923.1 L1600.0,921.6 L1608.0,920.1 L1616.0,918.6 L1624.0,917.0 L1632.0,915.5 L1640.0,913.9 L1648.0,912.3 L1656.0,910.7 L1664.0,909.1 L1672.0,907.5 L1680.0,905.9 L1688.0,904.3 L1696.0,902.7 L1704.0,901.0 L1712.0,899.4 L1720.0,897.7 L1728.0,896.0 L1736.0,894.4 L1744.0,892.6 L1752.0,890.9 L1760.0,889.2 L1768.0,887.4 L1776.0,885.7 L1784.0,883.9 L1792.0,882.2 L1800.0,880.4 L1808.0,878.6 L1816.0,876.9 L1824.0,875.1 L1832.0,873.2 L1840.0,871.4 L1848.0,869.5 L1856.0,867.6 L1864.0,865.8 L1872.0,863.9 L1880.0,862.0 L1888.0,860.1 L1896.0,858.2 L1904.0,856.2 L1912.0,854.3 L1920.0,852.3 L1928.0,850.3 L1936.0,848.4 L1944.0,846.4 L1952.0,844.4 L1960.0,842.4 L1968.0,840.3 L1976.0,838.2 L1984.0,836.2 L1992.0,834.1 L2000.0,832.0 L2008.0,829.9 L2016.0,827.8 L2024.0,825.7 L2032.0,823.6 L2040.0,821.4 L2048.0,819.2 L2056.0,817.1 L2064.0,814.9 L2072.0,812.6 L2080.0,810.4 L2088.0,808.2 L2096.0,805.9 L2104.0,803.7 L2112.0,801.4 L2120.0,799.1 L2128.0,796.8 L2136.0,794.5 L2144.0,792.1 L2152.0,789.8 L2160.0,787.4 L2168.0,785.0 L2176.0,782.6 L2184.0,780.2 L2192.0,777.8 L2200.0,775.4 L2208.0,772.9 L2216.0,770.4 L2224.0,768.0 L2232.0,765.5 L2240.0,763.0 L2248.0,760.4 L2256.0,757.9 L2264.0,755.4 L2272.0,752.8 L2280.0,750.2 L2288.0,747.6 L2296.0,744.9 L2304.0,742.3 L2312.0,739.6 L2320.0,737.0 L2328.0,734.3 L2336.0,731.6 L2344.0,728.9 L2352.0,726.2 L2360.0,723.5 L2368.0,720.7 L2376.0,717.9 L2384.0,715.1 L2392.0,712.3 L2400.0,709.5 L2408.0,706.6 L2416.0,703.8 L2424.0,700.9 L2432.0,698.0 L2440.0,695.1 L2448.0,692.1 L2456.0,689.2 L2464.0,686.2 L2472.0,683.2 L2480.0,680.3 L2488.0,677.3 L2496.0,674.2 L2504.0,671.2 L2512.0,668.1 L2520.0,665.0 L2528.0,661.9 L2536.0,658.8 L2544.0,655.7 L2552.0,652.5 L2560.0,649.3 L2568.0,646.1 L2576.0,642.9 L2584.0,639.7 L2592.0,636.4 L2600.0,633.1 L2608.0,629.8 L2616.0,626.4 L2623.0,623.5" fill="none" stroke="#b030b0" stroke-width="2"/>
<path d="M160.0,1093.8 L168.0,1093.6 L176.0,1093.2 L184.0,1092.7 L192.0,1092.2 L200.0,1091.8 L208.0,1091.5 L216.0,1091.3 L224.0,1091.0 L232.0,1090.8 L240.0,1090.4 L248.0,1089.8 L256.0,1089.0 L264.0,1088.1 L272.0,1087.3 L280.0,1086.6 L288.0,1085.8 L296.0,1085.1 L304.0,1084.3 L312.0,1083.5 L320.0,1082.8 L328.0,1082.0 L336.0,1081.2 L344.0,1080.5 L352.0,1079.7 L360.0,1079.0 L368.0,1078.3 L376.0,1077.5 L384.0,1076.8 L392.0,1076.0 L400.0,1075.2 L408.0,1074.5 L416.0,1073.7 L424.0,1072.9 L432.0,1072.2 L440.0,1071.4 L448.0,1070.7 L456.0,1069.9 L464.0,1069.2 L472.0,1068.5 L480.0,1067.7 L488.0,1066.9 L496.0,1066.2 L504.0,1065.4 L512.0,1064.6 L520.0,1063.8 L528.0,1063.1 L536.0,1062.3 L544.0,1061.5 L552.0,1060.8 L560.0,1060.0 L568.0,1059.3 L576.0,1058.5 L584.0,1057.7 L592.0,1056.9 L600.0,1056.1 L608.0,1055.3 L616.0,1054.6 L624.0,1053.8 L632.0,1053.0 L640.0,1052.2 L648.0,1051.4 L656.0,1050.6 L664.0,1049.8 L672.0,1049.0 L680.0,1048.2 L688.0,1047.4 L696.0,1046.6 L704.0,1045.8 L712.0,1045.0 L720.0,1044.2 L728.0,1043.4 L736.0,1042.6 L744.0,1041.7 L752.0,1040.9 L760.0,1040.1 L768.0,1039.2 L776.0,1038.4 L784.0,1037.6 L792.0,1036.8 L800.0,1035.9 L808.0,1035.1 L816.0,1034.3 L824.0,1033.4 L832.0,1032.6 L840.0,1031.7 L848.0,1030.8 L856.0,1029.9 L864.0,1029.1 L872.0,1028.2 L880.0,1027.3 L888.0,1026.4 L896.0,1025.5 L904.0,1024.7 L912.0,1023.7 L920.0,1022.8 L928.0,1021.9 L936.0,1021.0 L944.0,1020.1 L952.0,1019.2 L960.0,1018.3 L968.0,1017.4 L976.0,1016.4 L984.0,1015.4 L992.0,1014.5 L1000.0,1013.5 L1008.0,1012.6 L1016.0,1011.7 L1024.0,1010.7 L1032.0,1009.7 L1040.0,1008.7 L1048.0,1007.7 L1056.0,1006.8 L1064.0,1005.8 L1072.0,1004.8 L1080.0,1003.8 L1088.0,1002.8 L1096.0,1001.8 L1104.0,1000.8 L1112.0,999.7 L1120.0,998.7 L1128.0,997.7 L1136.0,996.6 L1144.0,995.6 L1152.0,994.5 L1160.0,993.4 L1168.0,992.4 L1176.0,991.3 L1184.0,990.2 L1192.0,989.1 L1200.0,988.0 L1208.0,986.9 L1216.0,985.8 L1224.0,984.7 L1232.0,983.6 L1240.0,982.5 L1248.0,981.3 L1256.0,980.2 L1264.0,979.0 L1272.0,977.8 L1280.0,976.7 L1288.0,975.5 L1296.0,974.3 L1304.0,973.2 L1312.0,972.0 L1320.0,970.8 L1328.0,969.6 L1336.0,968.4 L1344.0,967.1 L1352.0,965.9 L1360.0,964.6 L1368.0,963.4 L1376.0,962.1 L1384.0,960.9 L1392.0,959.6 L1400.0,958.3 L1408.0,957.0 L1416.0,955.7 L1424.0,954.4 L1432.0,953.1 L1440.0,951.8 L1448.0,950.5 L1456.0,949.1 L1464.0,947.7 L1472.0,946.4 L1480.0,945.0 L1488.0,943.7 L1496.0,942.3 L1504.0,940.9 L1512.0,939.5 L1520.0,938.1 L1528.0,936.7 L1536.0,935.2 L1544.0,933.7 L1552.0,932.3 L1560.0,930.8 L1568.0,929.3 L1576.0,927.9 L1584.0,926.4 L1592.0,924.9 L1600.0,923.4 L1608.0,921.9 L1616.0,920.4 L1624.0,918.8 L1632.0,917.3 L1640.0,915.7 L1648.0,914.1 L1656.0,912.5 L1664.0,910.9 L1672.0,909.3 L1680.0,907.7 L1688.0,906.1 L1696.0,904.5 L1704.0,902.8 L1712.0,901.2 L1720.0,899.5 L1728.0,897.8 L1736.0,896.2 L1744.0,894.4 L1752.0,892.7 L1760.0,891.0 L1768.0,889.2 L1776.0,887.5 L1784.0,885.7 L1792.0,884.0 L1800.0,882.2 L1808.0,880.4 L1816.0,878.7 L1824.0,876.9 L1832.0,875.0 L1840.0,873.2 L1848.0,871.3 L1856.0,869.4 L1864.0,867.6 L1872.0,865.7 L1880.0,863.8 L1888.0,861.9 L1896.0,860.0 L1904.0,858.0 L1912.0,856.1 L1920.0,854.1 L1928.0,852.1 L1936.0,850.2 L1944.0,848.2 L1952.0,846.2 L1960.0,844.2 L1968.0,842.1 L1976.0,840.0 L1984.0,838.0 L1992.0,835.9 L2000.0,833.8 L2008.0,831.7 L2016.0,829.6 L2024.0,827.5 L2032.0,825.4 L2040.0,823.2 L2048.0,821.0 L2056.0,818.9 L2064.0,816.7 L2072.0,814.4 L2080.0,812.2 L2088.0,810.0 L2096.0,807.7 L2104.0,805.5 L2112.0,803.2 L2120.0,800.9 L2128.0,798.6 L2136.0,796.3 L2144.0,793.9 L2152.0,791.6 L2160.0,789.2 L2168.0,786.8 L2176.0,784.4 L2184.0,782.0 L2192.0,779.6 L2200.0,777.2 L2208.0,774.7 L2216.0,772.2 L2224.0,769.8 L2232.0,767.3 L2240.0,764.8 L2248.0,762.2 L2256.0,759.7 L2264.0,757.2 L2272.0,754.6 L2280.0,752.0 L2288.0,749.4 L2296.0,746.7 L2304.0,744.1 L2312.0,741.4 L2320.0,738.8 L2328.0,736.1 L2336.0,733.4 L2344.0,730.7 L2352.0,728.0 L2360.0,725.3 L2368.0,722.5 L2376.0,719.7 L2384.0,716.9 L2392.0,714.1 L2400.0,711.3 L2408.0,708.4 L2416.0,705.6 L2424.0,702.7 L2432.0,699.8 L2440.0,696.9 L2448.0,693.9 L2456.0,691.0 L2464.0,688.0 L2472.0,685.0 L2480.0,682.1 L2488.0,679.1 L2496.0,676.0 L2504.0,673.0 L2512.0,669.9 L2520.0,666.8 L2528.0,663.7 L2536.0,660.6 L2544.0,657.5 L2552.0,654.3 L2560.0,651.1 L2568.0,647.9 L2576.0,644.7 L2584.0,641.5 L2592.0,638.2 L2600.0,634.9 L2608.0,631.6 L2616.0,628.2 L2623.0,625.3" fill="none" stroke="#3050c0" stroke-width="1.5"/>
<path d="M393.0,1175.0 L399.0,1173.3 L405.0,1171.6 L411.0,1170.0 L417.0,1168.4 L423.0,1166.9 L429.0,1165.5 L435.0,1164.1 L441.0,1162.7 L447.0,1161.3 L453.0,1159.9 L459.0,1158.6 L465.0,1157.3 L471.0,1156.1 L477.0,1154.9 L483.0,1153.9 L489.0,1153.0 L495.0,1152.2 L501.0,1151.6 L507.0,1151.0 L513.0,1150.5 L519.0,1149.9 L525.0,1149.5 L531.0,1149.0 L537.0,1148.6 L543.0,1148.2 L549.0,1147.9 L555.0,1147.5 L561.0,1147.2 L567.0,1146.8 L573.0,1146.5 L579.0,1146.1 L585.0,1145.7 L591.0,1145.3 L597.0,1144.9 L603.0,1144.5 L609.0,1144.1 L615.0,1143.7 L621.0,1143.4 L627.0,1143.0 L633.0,1142.6 L639.0,1142.2 L645.0,1141.9 L651.0,1141.5 L657.0,1141.1 L663.0,1140.7 L669.0,1140.2 L675.0,1139.8 L681.0,1139.3 L687.0,1138.8 L693.0,1138.3 L699.0,1137.7 L705.0,1137.1 L711.0,1136.5 L717.0,1135.9 L723.0,1135.2 L729.0,1134.5 L735.0,1133.8 L741.0,1133.2 L747.0,1132.5 L753.0,1131.8 L759.0,1131.2 L765.0,1130.6 L771.0,1130.0 L777.0,1129.4 L783.0,1128.8 L789.0,1128.2 L795.0,1127.6 L801.0,1127.0 L807.0,1126.4 L813.0,1125.9 L819.0,1125.3 L825.0,1124.8 L831.0,1124.2 L837.0,1123.7 L843.0,1123.1 L849.0,1122.5 L855.0,1121.9 L860.0,1121.4" fill="none" stroke="#c040b0" stroke-width="2"/>
<path d="M860.0,1121.4 L868.0,1120.5 L876.0,1119.6 L884.0,1118.6 L892.0,1117.7 L900.0,1116.8 L908.0,1115.9 L916.0,1115.1 L924.0,1114.1 L932.0,1113.2 L940.0,1112.3 L948.0,1111.4 L956.0,1110.5 L964.0,1109.6 L972.0,1108.7 L980.0,1107.8 L988.0,1106.9 L996.0,1106.0 L1004.0,1105.0 L1012.0,1104.1 L1020.0,1103.2 L1028.0,1102.3 L1036.0,1101.5 L1044.0,1100.5 L1052.0,1099.6 L1060.0,1098.7 L1068.0,1097.8 L1076.0,1096.9 L1084.0,1096.0 L1092.0,1095.1 L1100.0,1094.2 L1108.0,1093.2 L1116.0,1092.3 L1124.0,1091.3 L1132.0,1090.3 L1140.0,1089.3 L1148.0,1088.3 L1156.0,1087.3 L1164.0,1086.3 L1172.0,1085.3 L1180.0,1084.3 L1188.0,1083.3 L1196.0,1082.3 L1204.0,1081.3 L1212.0,1080.3 L1220.0,1079.3 L1228.0,1078.3 L1236.0,1077.3 L1244.0,1076.2 L1252.0,1075.2 L1260.0,1074.2 L1268.0,1073.2 L1276.0,1072.1 L1284.0,1071.1 L1292.0,1070.0 L1300.0,1068.9 L1308.0,1067.9 L1316.0,1066.8 L1324.0,1065.8 L1332.0,1064.7 L1340.0,1063.6 L1348.0,1062.6 L1356.0,1061.5 L1364.0,1060.4 L1372.0,1059.3 L1380.0,1058.2 L1388.0,1057.1 L1396.0,1056.0 L1404.0,1054.9 L1412.0,1053.8 L1420.0,1052.6 L1428.0,1051.5 L1436.0,1050.3 L1444.0,1049.2 L1452.0,1048.0 L1460.0,1046.9 L1468.0,1045.7 L1476.0,1044.6 L1484.0,1043.4 L1492.0,1042.2 L1500.0,1041.0 L1508.0,1039.8 L1516.0,1038.5 L1524.0,1037.3 L1532.0,1036.1 L1540.0,1034.9 L1548.0,1033.7 L1556.0,1032.4 L1564.0,1031.1 L1572.0,1029.9 L1580.0,1028.6 L1588.0,1027.3 L1596.0,1026.0 L1604.0,1024.7 L1612.0,1023.4 L1620.0,1022.0 L1628.0,1020.7 L1636.0,1019.4 L1644.0,1018.0 L1652.0,1016.6 L1660.0,1015.3 L1668.0,1013.9 L1676.0,1012.5 L1684.0,1011.1 L1692.0,1009.7 L1700.0,1008.2 L1708.0,1006.8 L1716.0,1005.4 L1724.0,1003.9 L1732.0,1002.5 L1740.0,1001.0 L1748.0,999.5 L1756.0,998.0 L1764.0,996.5 L1772.0,995.0 L1780.0,993.4 L1788.0,991.9 L1796.0,990.3 L1804.0,988.8 L1812.0,987.2 L1820.0,985.6 L1828.0,984.0 L1836.0,982.4 L1844.0,980.7 L1852.0,979.1 L1860.0,977.4 L1868.0,975.8 L1876.0,974.1 L1884.0,972.4 L1892.0,970.7 L1900.0,968.9 L1908.0,967.2 L1916.0,965.4 L1924.0,963.7 L1932.0,961.9 L1940.0,960.1 L1948.0,958.3 L1956.0,956.5 L1964.0,954.7 L1972.0,952.8 L1980.0,950.9 L1988.0,949.0 L1996.0,947.1 L2004.0,945.3 L2012.0,943.4 L2020.0,941.5 L2028.0,939.7 L2036.0,937.8 L2044.0,935.9 L2052.0,933.9 L2060.0,932.0 L2068.0,930.1 L2076.0,928.1 L2084.0,926.1 L2092.0,924.1 L2100.0,922.1 L2108.0,920.0 L2116.0,917.9 L2124.0,915.8 L2132.0,913.7 L2140.0,911.6 L2148.0,909.4 L2156.0,907.3 L2164.0,905.1 L2172.0,902.9 L2180.0,900.7 L2188.0,898.5 L2196.0,896.2 L2204.0,894.0 L2212.0,891.7 L2220.0,889.3 L2228.0,887.0 L2236.0,884.6 L2244.0,882.2 L2252.0,879.8 L2260.0,877.4 L2268.0,874.9 L2276.0,872.5 L2284.0,870.0 L2292.0,867.4 L2300.0,864.9 L2308.0,862.3 L2316.0,859.8 L2324.0,857.2 L2332.0,854.5 L2340.0,851.9 L2348.0,849.3 L2356.0,846.6 L2364.0,843.9 L2372.0,841.2 L2380.0,838.4 L2388.0,835.7 L2396.0,832.9 L2404.0,830.2 L2412.0,827.5 L2420.0,824.8 L2428.0,822.0 L2436.0,819.3 L2444.0,816.5 L2452.0,813.7 L2460.0,810.9 L2468.0,808.0 L2476.0,805.1 L2484.0,802.1 L2492.0,798.9 L2500.0,795.7 L2508.0,792.4 L2516.0,789.1 L2524.0,785.8 L2532.0,782.4 L2540.0,779.0 L2548.0,775.6 L2556.0,772.2 L2564.0,768.7 L2572.0,765.3 L2580.0,761.7 L2588.0,758.2 L2596.0,754.6 L2604.0,751.1 L2612.0,747.5 L2620.0,743.9 L2628.0,740.3 L2636.0,736.6 L2644.0,732.9 L2652.0,729.1 L2660.0,725.4 L2668.0,721.6 L2676.0,717.8 L2684.0,714.0 L2692.0,710.1 L2700.0,706.3 L2708.0,702.4 L2716.0,698.5 L2724.0,694.6 L2726.0,693.6" fill="none" stroke="#90d830" stroke-width="3"/>
<path d="M1720.0,1139.0 L1726.0,1137.9 L1732.0,1136.8 L1738.0,1135.7 L1744.0,1134.6 L1750.0,1133.4 L1756.0,1132.3 L1762.0,1131.1 L1768.0,1129.8 L1774.0,1128.6 L1780.0,1127.3 L1786.0,1126.1 L1792.0,1124.8 L1798.0,1123.4 L1804.0,1122.1 L1810.0,1120.7 L1816.0,1119.3 L1822.0,1117.9 L1828.0,1116.4 L1834.0,1114.9 L1840.0,1113.4 L1846.0,1111.9 L1852.0,1110.3 L1858.0,1108.7 L1864.0,1107.2 L1870.0,1105.6 L1876.0,1104.0 L1882.0,1102.4 L1888.0,1100.8 L1894.0,1099.2 L1900.0,1097.6 L1906.0,1096.0 L1912.0,1094.3 L1918.0,1092.7 L1924.0,1091.0 L1930.0,1089.4 L1936.0,1087.8 L1942.0,1086.2 L1948.0,1084.6 L1954.0,1083.1 L1960.0,1081.5 L1966.0,1080.0 L1972.0,1078.4 L1978.0,1076.9 L1984.0,1075.4 L1990.0,1073.9 L1996.0,1072.4 L2002.0,1070.9 L2008.0,1069.4 L2014.0,1067.9 L2020.0,1066.4 L2026.0,1064.9 L2032.0,1063.5 L2038.0,1062.0 L2044.0,1060.6 L2050.0,1059.1 L2056.0,1057.7 L2062.0,1056.2 L2068.0,1054.8 L2074.0,1053.3 L2080.0,1051.9 L2086.0,1050.5 L2092.0,1049.0 L2098.0,1047.6 L2104.0,1046.1 L2110.0,1044.7 L2116.0,1043.3 L2122.0,1041.9 L2128.0,1040.4 L2134.0,1039.0 L2140.0,1037.6 L2146.0,1036.2 L2152.0,1034.7 L2158.0,1033.2 L2164.0,1031.8 L2170.0,1030.3 L2176.0,1028.8 L2182.0,1027.4 L2188.0,1025.9 L2194.0,1024.5 L2200.0,1023.0 L2206.0,1021.5 L2212.0,1020.0 L2218.0,1018.5 L2224.0,1017.0 L2230.0,1015.5 L2236.0,1014.0 L2242.0,1012.4 L2248.0,1010.9 L2254.0,1009.4 L2260.0,1007.8 L2266.0,1006.2 L2272.0,1004.6 L2278.0,1003.0 L2284.0,1001.4 L2290.0,999.8 L2296.0,998.2 L2302.0,996.6 L2308.0,994.9 L2314.0,993.3 L2320.0,991.6 L2326.0,989.9 L2332.0,988.2 L2338.0,986.4 L2344.0,984.7 L2350.0,982.9 L2356.0,981.1 L2362.0,979.3 L2368.0,977.6 L2374.0,975.7 L2380.0,973.9 L2386.0,972.0 L2392.0,970.1 L2398.0,968.2 L2404.0,966.3 L2410.0,964.3 L2416.0,962.3 L2422.0,960.4 L2428.0,958.4 L2434.0,956.3 L2440.0,954.3 L2446.0,952.2 L2452.0,950.1 L2458.0,948.0 L2464.0,945.9 L2470.0,943.7 L2476.0,941.5 L2482.0,939.3 L2488.0,937.1 L2494.0,934.8 L2500.0,932.5 L2506.0,930.2 L2512.0,927.8 L2518.0,925.4 L2524.0,923.0 L2530.0,920.6 L2536.0,918.1 L2542.0,915.6 L2548.0,913.1 L2554.0,910.6 L2560.0,908.0 L2566.0,905.4 L2572.0,902.7 L2578.0,900.1 L2584.0,897.3 L2590.0,894.6 L2596.0,891.8 L2602.0,889.0 L2608.0,886.2 L2614.0,883.3 L2620.0,880.4 L2626.0,877.5 L2632.0,874.5 L2638.0,871.4 L2644.0,868.4 L2650.0,865.3 L2656.0,862.2 L2662.0,859.0 L2668.0,855.8 L2674.0,852.6 L2680.0,849.3 L2686.0,846.0 L2692.0,842.7 L2698.0,839.3 L2704.0,835.9 L2710.0,832.4 L2716.0,828.9 L2722.0,825.3 L2728.0,821.8 L2734.0,818.1 L2740.0,814.4 L2746.0,810.6 L2752.0,806.8 L2758.0,802.9 L2764.0,798.9 L2770.0,794.7 L2776.0,790.5 L2782.0,786.1 L2788.0,781.7 L2794.0,777.1 L2800.0,772.3 L2806.0,767.5 L2812.0,762.9 L2818.0,758.7 L2822.0,756.2" fill="none" stroke="#c040c0" stroke-width="2"/>
<path d="M1720.0,1137.0 L1726.0,1135.9 L1732.0,1134.8 L1738.0,1133.7 L1744.0,1132.6 L1750.0,1131.4 L1756.0,1130.3 L1762.0,1129.1 L1768.0,1127.8 L1774.0,1126.6 L1780.0,1125.3 L1786.0,1124.1 L1792.0,1122.8 L1798.0,1121.4 L1804.0,1120.1 L1810.0,1118.7 L1816.0,1117.3 L1822.0,1115.9 L1828.0,1114.4 L1834.0,1112.9 L1840.0,1111.4 L1846.0,1109.9 L1852.0,1108.3 L1858.0,1106.7 L1864.0,1105.2 L1870.0,1103.6 L1876.0,1102.0 L1882.0,1100.4 L1888.0,1098.8 L1894.0,1097.2 L1900.0,1095.6 L1906.0,1094.0 L1912.0,1092.3 L1918.0,1090.7 L1924.0,1089.0 L1930.0,1087.4 L1936.0,1085.8 L1942.0,1084.2 L1948.0,1082.6 L1954.0,1081.1 L1960.0,1079.5 L1966.0,1078.0 L1972.0,1076.4 L1978.0,1074.9 L1984.0,1073.4 L1990.0,1071.9 L1996.0,1070.4 L2002.0,1068.9 L2008.0,1067.4 L2014.0,1065.9 L2020.0,1064.4 L2026.0,1062.9 L2032.0,1061.5 L2038.0,1060.0 L2044.0,1058.6 L2050.0,1057.1 L2056.0,1055.7 L2062.0,1054.2 L2068.0,1052.8 L2074.0,1051.3 L2080.0,1049.9 L2086.0,1048.5 L2092.0,1047.0 L2098.0,1045.6 L2104.0,1044.1 L2110.0,1042.7 L2116.0,1041.3 L2122.0,1039.9 L2128.0,1038.4 L2134.0,1037.0 L2140.0,1035.6 L2146.0,1034.2 L2152.0,1032.7 L2158.0,1031.2 L2164.0,1029.8 L2170.0,1028.3 L2176.0,1026.8 L2182.0,1025.4 L2188.0,1023.9 L2194.0,1022.5 L2200.0,1021.0 L2206.0,1019.5 L2212.0,1018.0 L2218.0,1016.5 L2224.0,1015.0 L2230.0,1013.5 L2236.0,1012.0 L2242.0,1010.4 L2248.0,1008.9 L2254.0,1007.4 L2260.0,1005.8 L2266.0,1004.2 L2272.0,1002.6 L2278.0,1001.0 L2284.0,999.4 L2290.0,997.8 L2296.0,996.2 L2302.0,994.6 L2308.0,992.9 L2314.0,991.3 L2320.0,989.6 L2326.0,987.9 L2332.0,986.2 L2338.0,984.4 L2344.0,982.7 L2350.0,980.9 L2356.0,979.1 L2362.0,977.3 L2368.0,975.6 L2374.0,973.7 L2380.0,971.9 L2386.0,970.0 L2392.0,968.1 L2398.0,966.2 L2404.0,964.3 L2410.0,962.3 L2416.0,960.3 L2422.0,958.4 L2428.0,956.4 L2434.0,954.3 L2440.0,952.3 L2446.0,950.2 L2452.0,948.1 L2458.0,946.0 L2464.0,943.9 L2470.0,941.7 L2476.0,939.5 L2482.0,937.3 L2488.0,935.1 L2494.0,932.8 L2500.0,930.5 L2506.0,928.2 L2512.0,925.8 L2518.0,923.4 L2524.0,921.0 L2530.0,918.6 L2536.0,916.1 L2542.0,913.6 L2548.0,911.1 L2554.0,908.6 L2560.0,906.0 L2566.0,903.4 L2572.0,900.7 L2578.0,898.1 L2584.0,895.3 L2590.0,892.6 L2596.0,889.8 L2602.0,887.0 L2608.0,884.2 L2614.0,881.3 L2620.0,878.4 L2626.0,875.5 L2632.0,872.5 L2638.0,869.4 L2644.0,866.4 L2650.0,863.3 L2656.0,860.2 L2662.0,857.0 L2668.0,853.8 L2674.0,850.6 L2680.0,847.3 L2686.0,844.0 L2692.0,840.7 L2698.0,837.3 L2704.0,833.9 L2710.0,830.4 L2716.0,826.9 L2722.0,823.3 L2728.0,819.8 L2734.0,816.1 L2740.0,812.4 L2746.0,808.6 L2752.0,804.8 L2758.0,800.9 L2764.0,796.9 L2770.0,792.7 L2776.0,788.5 L2782.0,784.1 L2788.0,779.7 L2794.0,775.1 L2800.0,770.3 L2806.0,765.5 L2812.0,760.9 L2818.0,756.7 L2822.0,754.2" fill="none" stroke="#1890c0" stroke-width="1.5"/>
<path d="M170.0,1096.4 L176.0,1097.2 L182.0,1097.8 L188.0,1098.5 L194.0,1099.1 L200.0,1100.0 L206.0,1101.1 L212.0,1102.3 L218.0,1103.5 L224.0,1104.8 L230.0,1106.2 L236.0,1107.6 L242.0,1109.1 L248.0,1110.6 L254.0,1112.2 L260.0,1113.9 L266.0,1115.6 L272.0,1117.4 L278.0,1119.2 L284.0,1121.1 L290.0,1123.2 L296.0,1125.4 L302.0,1127.7 L308.0,1130.1 L314.0,1132.6 L320.0,1135.2 L326.0,1137.9 L332.0,1140.7 L338.0,1143.6 L344.0,1146.8 L350.0,1150.2 L356.0,1153.7 L362.0,1157.4 L368.0,1161.0 L374.0,1164.6 L380.0,1168.1 L386.0,1171.4 L392.0,1174.3" fill="none" stroke="#141408" stroke-opacity=".85" stroke-width="5"/>
<path d="M470.0,1164.5 L476.0,1164.6 L482.0,1164.8 L488.0,1165.1 L494.0,1165.5 L500.0,1166.0 L506.0,1166.7 L512.0,1167.7 L518.0,1169.0 L524.0,1170.4 L530.0,1172.0 L536.0,1173.6 L542.0,1175.1 L548.0,1176.5 L554.0,1177.9 L560.0,1179.5 L566.0,1181.2 L572.0,1182.8 L578.0,1184.5 L584.0,1186.0 L590.0,1187.5 L596.0,1188.8 L602.0,1189.9 L608.0,1190.7 L614.0,1191.3 L620.0,1191.8 L626.0,1192.2 L632.0,1192.6 L638.0,1193.0" fill="none" stroke="#141408" stroke-opacity=".6" stroke-width="4"/>
<path d="M345.0,1029.0 L392.0,1016.0 L530.0,992.0 L685.0,959.0 L900.0,915.5 L1098.0,877.0 L1300.0,831.0 L1337.0,828.0 L1337.0,828.0 L1300.0,843.0 L1098.0,887.0 L900.0,926.0 L685.0,970.0 L530.0,1002.0 L392.0,1020.0 L345.0,1029.0 Z" fill="#6a9a2a"/>
<path d="M345.0,1029.0 L392.0,1016.0 L530.0,992.0 L685.0,959.0 L900.0,915.5 L1098.0,877.0 L1300.0,831.0 L1337.0,828.0" fill="none" stroke="#b030b0" stroke-width="2"/>
<path d="M345.0,1029.0 L392.0,1020.0 L530.0,1002.0 L685.0,970.0 L900.0,926.0 L1098.0,887.0 L1300.0,843.0 L1337.0,828.0" fill="none" stroke="#2850c0" stroke-width="2"/>
<path d="M2620.0,612.6 L2624.0,614.0 L2628.0,615.5 L2632.0,617.3 L2636.0,619.2 L2640.0,621.0 L2644.0,622.8 L2648.0,624.5 L2652.0,626.3 L2656.0,628.1 L2660.0,629.9 L2664.0,631.9 L2668.0,634.0 L2672.0,636.3 L2676.0,638.7 L2680.0,641.3 L2684.0,643.8 L2688.0,646.5 L2692.0,649.0 L2696.0,651.6 L2700.0,654.1 L2704.0,656.6 L2708.0,659.2 L2712.0,661.7 L2716.0,664.3 L2720.0,667.0 L2724.0,669.7 L2728.0,672.5 L2732.0,675.3 L2736.0,678.2 L2740.0,681.0 L2744.0,683.9 L2748.0,686.7 L2752.0,689.6 L2756.0,692.4 L2760.0,695.3 L2764.0,698.2 L2768.0,701.2 L2772.0,704.2 L2776.0,707.2 L2780.0,710.2 L2784.0,713.3 L2788.0,716.2 L2792.0,719.2 L2796.0,722.3 L2800.0,725.5 L2804.0,728.8 L2808.0,732.4 L2812.0,736.2 L2816.0,739.6 L2820.0,744.4 L2824.0,758.0 L2824.5,757.0 L2822.0,754.1 L2818.0,748.2 L2814.0,744.2 L2810.0,740.7 L2806.0,737.6 L2802.0,734.9 L2798.0,732.4 L2794.0,730.1 L2790.0,727.8 L2786.0,725.4 L2782.0,722.9 L2778.0,720.1 L2774.0,717.2 L2770.0,714.4 L2766.0,711.5 L2762.0,708.7 L2758.0,705.8 L2754.0,703.0 L2750.0,700.1 L2746.0,697.3 L2742.0,694.4 L2738.0,691.6 L2734.0,688.6 L2730.0,685.7 L2726.0,682.8 L2722.0,680.0 L2718.0,677.3 L2714.0,674.6 L2710.0,672.0 L2706.0,669.4 L2702.0,666.9 L2698.0,664.4 L2694.0,661.9 L2690.0,659.4 L2686.0,656.9 L2682.0,654.4 L2678.0,652.0 L2674.0,649.6 L2670.0,647.3 L2666.0,645.1 L2662.0,643.2 L2658.0,641.5 L2654.0,639.8 L2650.0,638.1 L2646.0,636.3 L2642.0,634.2 L2638.0,631.7 L2634.0,628.7 L2630.0,625.2 L2626.0,621.4 L2622.0,619.0 Z" fill="#1a2ed0"/>
</g>
<path d="M152.0,1072.6 L164.0,1070.0 L176.0,1068.6 L188.0,1067.0 L200.0,1064.3 L212.0,1060.9 L224.0,1057.6 L236.0,1054.5 L248.0,1051.3 L260.0,1048.2 L272.0,1045.1 L284.0,1042.0 L296.0,1038.9 L308.0,1035.8 L320.0,1032.8 L332.0,1029.7 L344.0,1026.7 L356.0,1023.7 L368.0,1020.7 L380.0,1017.7 L392.0,1014.7 L404.0,1011.7 L416.0,1008.8 L428.0,1005.9 L440.0,1003.0 L452.0,1000.0 L464.0,997.1 L476.0,994.2 L488.0,991.4 L500.0,988.5 L512.0,985.7 L524.0,982.9 L536.0,980.0 L548.0,977.2 L560.0,974.4 L572.0,971.6 L584.0,968.8 L596.0,966.0 L608.0,963.3 L620.0,960.5 L632.0,957.8 L644.0,955.1 L656.0,952.4 L668.0,949.7 L680.0,947.0 L692.0,944.3 L704.0,941.6 L716.0,939.0 L728.0,936.3 L740.0,933.7 L752.0,931.1 L764.0,928.4 L776.0,925.8 L788.0,923.2 L800.0,920.7 L812.0,918.1 L824.0,915.5 L836.0,913.0 L848.0,910.4 L860.0,907.9 L872.0,905.4 L884.0,902.9 L896.0,900.3 L908.0,897.8 L920.0,895.3 L932.0,892.9 L944.0,890.4 L956.0,887.9 L968.0,885.4 L980.0,883.0 L992.0,880.5 L1004.0,878.1 L1016.0,875.7 L1028.0,873.3 L1040.0,870.9 L1052.0,868.5 L1064.0,866.1 L1076.0,863.7 L1088.0,861.3 L1100.0,858.9 L1112.0,856.6 L1124.0,854.2 L1136.0,851.8 L1148.0,849.5 L1160.0,847.2 L1172.0,844.8 L1184.0,842.5 L1196.0,840.2 L1208.0,837.9 L1220.0,835.6 L1232.0,833.2 L1244.0,830.9 L1256.0,828.7 L1268.0,826.4 L1280.0,824.1 L1292.0,821.8 L1304.0,819.5 L1316.0,817.3 L1328.0,815.1 L1340.0,812.8 L1352.0,810.5 L1364.0,808.3 L1376.0,806.1 L1388.0,803.9 L1400.0,801.6 L1412.0,799.4 L1424.0,797.2 L1436.0,795.0 L1448.0,792.8 L1460.0,790.6 L1472.0,788.4 L1484.0,786.2 L1496.0,784.0 L1508.0,781.8 L1520.0,779.6 L1532.0,777.4 L1544.0,775.2 L1556.0,773.0 L1568.0,770.9 L1580.0,768.7 L1592.0,766.5 L1604.0,764.4 L1616.0,762.2 L1628.0,760.1 L1640.0,757.9 L1652.0,755.7 L1664.0,753.5 L1676.0,751.4 L1688.0,749.3 L1700.0,747.1 L1712.0,744.9 L1724.0,742.8 L1736.0,740.6 L1748.0,738.5 L1760.0,736.3 L1772.0,734.1 L1784.0,731.9 L1796.0,729.7 L1808.0,727.6 L1820.0,725.4 L1832.0,723.2 L1844.0,721.1 L1856.0,718.9 L1868.0,716.8 L1880.0,714.6 L1892.0,712.4 L1904.0,710.2 L1916.0,708.0 L1928.0,705.8 L1940.0,703.6 L1952.0,701.4 L1964.0,699.2 L1976.0,696.9 L1988.0,694.7 L2000.0,692.5 L2012.0,690.3 L2024.0,688.1 L2036.0,685.8 L2048.0,683.6 L2060.0,681.3 L2072.0,679.0 L2084.0,676.7 L2096.0,674.5 L2108.0,672.2 L2120.0,669.9 L2132.0,667.5 L2144.0,665.2 L2156.0,662.9 L2168.0,660.6 L2180.0,658.3 L2192.0,656.0 L2204.0,653.6 L2216.0,651.3 L2228.0,648.9 L2240.0,646.5 L2252.0,644.1 L2264.0,641.7 L2276.0,639.3 L2288.0,636.9 L2300.0,634.4 L2312.0,632.0 L2324.0,629.5 L2336.0,627.1 L2348.0,624.6 L2360.0,622.1 L2372.0,619.6 L2384.0,617.1 L2396.0,614.6 L2408.0,612.2 L2420.0,609.9 L2432.0,607.7 L2444.0,605.8 L2456.0,603.9 L2468.0,602.2 L2480.0,600.9 L2492.0,599.7 L2504.0,599.0 L2516.0,598.6 L2528.0,598.4 L2540.0,598.6 L2552.0,599.4 L2564.0,600.4 L2576.0,602.0 L2588.0,604.2 L2600.0,606.8 L2604.0,607.8 L2608.0,608.9 L2612.0,610.1 L2616.0,611.3 L2620.0,612.6 L2624.0,614.0 L2628.0,615.5 L2632.0,617.3 L2636.0,619.2 L2640.0,621.0 L2644.0,622.8 L2648.0,624.5 L2652.0,626.3 L2656.0,628.1 L2660.0,629.9 L2664.0,631.9 L2668.0,634.0 L2672.0,636.3 L2676.0,638.7 L2680.0,641.3 L2684.0,643.8 L2688.0,646.5 L2692.0,649.0 L2696.0,651.6 L2700.0,654.1 L2704.0,656.6 L2708.0,659.2 L2712.0,661.7 L2716.0,664.3 L2720.0,667.0 L2724.0,669.7 L2728.0,672.5 L2732.0,675.3 L2736.0,678.2 L2740.0,681.0 L2744.0,683.9 L2748.0,686.7 L2752.0,689.6 L2756.0,692.4 L2760.0,695.3 L2764.0,698.2 L2768.0,701.2 L2772.0,704.2 L2776.0,707.2 L2780.0,710.2 L2784.0,713.3 L2788.0,716.2 L2792.0,719.2 L2796.0,722.3 L2800.0,725.5 L2804.0,728.8 L2808.0,732.4 L2812.0,736.2 L2816.0,739.6 L2820.0,744.4 L2823.5,752.0 L2824.5,762.0 L2822.0,768.2 L2818.0,778.0 L2814.0,785.3 L2810.0,791.4 L2806.0,796.6 L2802.0,801.1 L2798.0,805.1 L2794.0,808.9 L2790.0,812.3 L2786.0,815.6 L2782.0,818.6 L2778.0,821.5 L2774.0,824.3 L2770.0,826.9 L2766.0,829.5 L2762.0,832.1 L2758.0,834.6 L2754.0,837.1 L2750.0,839.5 L2746.0,841.7 L2742.0,843.9 L2738.0,846.0 L2734.0,848.1 L2730.0,850.1 L2726.0,852.2 L2722.0,854.3 L2718.0,856.4 L2714.0,858.5 L2710.0,860.8 L2706.0,863.1 L2702.0,865.4 L2698.0,867.8 L2694.0,870.1 L2690.0,872.5 L2686.0,874.8 L2682.0,877.1 L2678.0,879.4 L2674.0,881.7 L2670.0,883.9 L2666.0,886.1 L2662.0,888.3 L2658.0,890.5 L2654.0,892.7 L2650.0,894.8 L2646.0,897.0 L2642.0,899.1 L2638.0,901.2 L2634.0,903.2 L2630.0,905.3 L2626.0,907.4 L2622.0,909.4 L2618.0,911.4 L2614.0,913.4 L2610.0,915.4 L2606.0,917.4 L2602.0,919.4 L2598.0,921.3 L2594.0,923.3 L2590.0,925.2 L2586.0,927.1 L2582.0,929.0 L2578.0,930.8 L2574.0,932.7 L2570.0,934.5 L2566.0,936.3 L2562.0,938.1 L2560.0,939.0 L2548.0,944.4 L2536.0,949.6 L2524.0,954.6 L2512.0,959.6 L2500.0,964.4 L2488.0,969.2 L2476.0,973.8 L2464.0,978.3 L2452.0,982.7 L2440.0,987.0 L2428.0,991.2 L2416.0,995.3 L2404.0,999.3 L2392.0,1003.2 L2380.0,1007.0 L2368.0,1010.7 L2356.0,1014.4 L2344.0,1018.0 L2332.0,1021.5 L2320.0,1024.9 L2308.0,1028.2 L2296.0,1031.5 L2284.0,1034.7 L2272.0,1037.8 L2260.0,1040.9 L2248.0,1043.9 L2236.0,1046.8 L2224.0,1049.7 L2212.0,1052.5 L2200.0,1055.3 L2188.0,1058.0 L2176.0,1060.7 L2164.0,1063.3 L2152.0,1065.9 L2140.0,1068.5 L2128.0,1071.1 L2116.0,1073.6 L2104.0,1076.0 L2092.0,1078.5 L2080.0,1080.9 L2068.0,1083.3 L2056.0,1085.7 L2044.0,1088.1 L2032.0,1090.3 L2020.0,1092.6 L2008.0,1094.8 L1996.0,1097.1 L1984.0,1099.3 L1972.0,1101.4 L1960.0,1103.5 L1948.0,1105.6 L1936.0,1107.6 L1924.0,1109.7 L1912.0,1111.8 L1900.0,1113.8 L1888.0,1115.7 L1876.0,1117.6 L1864.0,1119.5 L1852.0,1121.4 L1840.0,1123.3 L1828.0,1125.1 L1816.0,1126.9 L1804.0,1128.6 L1792.0,1130.3 L1780.0,1132.0 L1768.0,1133.7 L1756.0,1135.4 L1744.0,1137.0 L1732.0,1138.6 L1720.0,1140.2 L1708.0,1141.8 L1696.0,1143.4 L1684.0,1144.9 L1672.0,1146.4 L1660.0,1147.8 L1648.0,1149.3 L1636.0,1150.7 L1624.0,1152.1 L1612.0,1153.4 L1600.0,1154.7 L1588.0,1156.0 L1576.0,1157.4 L1564.0,1158.6 L1552.0,1159.9 L1540.0,1161.1 L1528.0,1162.3 L1516.0,1163.4 L1504.0,1164.6 L1492.0,1165.7 L1480.0,1166.8 L1468.0,1167.9 L1456.0,1169.0 L1444.0,1170.0 L1432.0,1171.0 L1420.0,1172.0 L1408.0,1173.0 L1396.0,1173.9 L1384.0,1174.8 L1372.0,1175.7 L1360.0,1176.6 L1348.0,1177.4 L1336.0,1178.3 L1324.0,1179.1 L1312.0,1179.9 L1300.0,1180.7 L1288.0,1181.4 L1276.0,1182.1 L1264.0,1182.8 L1252.0,1183.6 L1240.0,1184.3 L1228.0,1184.9 L1216.0,1185.5 L1204.0,1186.1 L1192.0,1186.7 L1180.0,1187.2 L1168.0,1187.8 L1156.0,1188.4 L1144.0,1188.9 L1132.0,1189.4 L1120.0,1189.8 L1108.0,1190.3 L1096.0,1190.7 L1084.0,1191.1 L1072.0,1191.5 L1060.0,1191.9 L1048.0,1192.3 L1036.0,1192.7 L1024.0,1193.0 L1012.0,1193.3 L1000.0,1193.5 L988.0,1193.8 L976.0,1194.1 L964.0,1194.4 L952.0,1194.6 L940.0,1194.8 L928.0,1195.0 L916.0,1195.1 L904.0,1195.3 L892.0,1195.5 L880.0,1195.6 L868.0,1195.7 L856.0,1195.8 L844.0,1195.8 L832.0,1195.9 L820.0,1195.9 L808.0,1196.0 L796.0,1196.0 L784.0,1196.0 L772.0,1196.0 L760.0,1196.0 L748.0,1195.9 L736.0,1195.8 L724.0,1195.8 L712.0,1195.7 L700.0,1195.6 L688.0,1195.5 L676.0,1195.4 L664.0,1195.2 L652.0,1194.7 L640.0,1194.1 L628.0,1193.4 L616.0,1192.4 L604.0,1191.2 L592.0,1188.9 L580.0,1186.0 L568.0,1182.7 L556.0,1179.4 L544.0,1176.5 L532.0,1173.5 L520.0,1170.4 L508.0,1168.0 L496.0,1166.7 L484.0,1165.9 L472.0,1165.5 L460.0,1165.8 L448.0,1166.7 L436.0,1167.9 L424.0,1169.2 L412.0,1171.1 L400.0,1173.0 L400.0,1172.6 L393.0,1176.3 L389.0,1174.4 L380.0,1169.6 L368.0,1162.5 L356.0,1155.2 L344.0,1148.3 L332.0,1142.2 L320.0,1136.7 L308.0,1131.6 L296.0,1126.9 L284.0,1122.6 L272.0,1118.9 L260.0,1115.4 L248.0,1112.1 L236.0,1109.1 L224.0,1106.3 L212.0,1103.8 L200.0,1101.5 L188.0,1100.0 L176.0,1098.7 L164.0,1096.9 L152.0,1093.9 L143.0,1089.0 L139.5,1082.0 L143.0,1075.5 Z" fill="none" stroke="#000" stroke-opacity=".55" stroke-width="2"/>
</svg>
<svg class="a" style="left:0;top:0" width="1900" height="230" viewBox="0 0 1900 230">
<defs>
<radialGradient id="sph" cx=".45" cy=".3" r=".75"><stop offset="0" stop-color="#d8fbff"/><stop offset=".3" stop-color="#28c8f8"/><stop offset=".75" stop-color="#1070f0"/><stop offset="1" stop-color="#1838e0"/></radialGradient>
<linearGradient id="lensH" x1="0" y1="0" x2="1" y2="0"><stop offset="0" stop-color="#bfeaff"/><stop offset=".45" stop-color="#4aa8e8"/><stop offset="1" stop-color="#1a6cb8"/></linearGradient>
<linearGradient id="lensV" x1="0" y1="0" x2="0" y2="1"><stop offset="0" stop-color="#a8e8ff"/><stop offset=".4" stop-color="#3aa0e8"/><stop offset="1" stop-color="#1a68b8"/></linearGradient>
<linearGradient id="tri" x1="0" y1="0" x2="0" y2="1"><stop offset="0" stop-color="#1c5a98"/><stop offset="1" stop-color="#0c3c78"/></linearGradient>
<linearGradient id="fire" x1="0" y1="0" x2="0" y2="1"><stop offset="0" stop-color="#5a8a70"/><stop offset=".25" stop-color="#f06010"/><stop offset=".5" stop-color="#f8a020"/><stop offset=".75" stop-color="#fffff0"/><stop offset="1" stop-color="#c0c0c0"/></linearGradient>
<linearGradient id="rainbow" x1="0" y1="0" x2="0" y2="1"><stop offset="0" stop-color="#f04040"/><stop offset=".2" stop-color="#f040c0"/><stop offset=".35" stop-color="#40a0f0"/><stop offset=".5" stop-color="#e8f030"/><stop offset=".65" stop-color="#60e040"/><stop offset=".8" stop-color="#40a0f0"/><stop offset="1" stop-color="#f04060"/></linearGradient>
<radialGradient id="gray" cx=".5" cy=".5" r=".5"><stop offset="0" stop-color="#e0e0e0"/><stop offset="1" stop-color="#404040"/></radialGradient>
</defs>
<!-- ===== main toolbar ===== -->
<ellipse cx="33" cy="73" rx="12.5" ry="26.5" fill="#fff" stroke="#777" stroke-width="2"/>
<ellipse cx="32" cy="64" rx="9" ry="9" fill="#f8c8d0"/>
<path d="M31,94 L31,80 L27,76 L27,72 L31,73 L31,63 Q33,60 35,63 L35,71 L39,71 L43,74 L43,94 Z" fill="#fff" stroke="#333" stroke-width="1.6"/>
<path d="M83,60 L86,54 L93,57 L107,63 L110,68 L110,86 L108,90" fill="#f8f4dc" stroke="#7a7a6a" stroke-width="2.2"/>
<path d="M78,62 L104,71 L108,91 L85,82 Z" fill="#f6ee90" stroke="#7a7a70" stroke-width="2.2"/>
<path d="M144,57 L149,54 L169,62 L172,65 L172,88 L176,92 L169,94 L150,84 L144,81 Z" fill="#5a5a5a"/>
<path d="M149,62 L167,69 L167,89 L149,80 Z" fill="url(#fire)"/>
<rect x="232" y="79" width="35" height="14" fill="#a8a8c8"/>
<rect x="230" y="76" width="34.5" height="14.4" fill="#f8d020"/>
<path d="M230,76.5 H264" stroke="#111" stroke-width="2.2" stroke-dasharray="2.2,2.2"/>
<path d="M230,61 H266 M257,54 V74" stroke="#808080" stroke-width="2"/>
<path d="M265,57 V73 M232,72.7 H265" stroke="#8a8a9a" stroke-width="1.6" stroke-dasharray="2,2.5"/>
<text x="240" y="88" font-size="9" fill="#b07010" font-family="Liberation Sans">1</text><text x="253" y="88" font-size="9" fill="#b07010" font-family="Liberation Sans">0</text>
<path d="M346.7,57 L362.8,88.7" stroke="#111" stroke-width="2"/>
<circle cx="346.7" cy="57" r="4.2" fill="#2048e0" stroke="#112" stroke-width="1"/>
<circle cx="355" cy="72.5" r="6.8" fill="#f02020" stroke="#222" stroke-width="1.5"/>
<circle cx="362.8" cy="88.7" r="4.8" fill="#20d040" stroke="#112" stroke-width="1"/>
<circle cx="516" cy="72.5" r="16" fill="url(#sph)"/>
<path d="M665,55.5 H690 L697,63 V90.5 H665 Z" fill="#fff" stroke="#333" stroke-width="2.4"/>
<path d="M689,55 L697.5,63.5 L689,63.5 Z" fill="#60c8f0" stroke="#2a7ab0" stroke-width="1"/>
<path d="M668,61 H678 M668,69 H692 M668,77 H681 M668,85 H692" stroke="#666" stroke-width="1.4" stroke-dasharray="2,2"/>
<rect x="836" y="53" width="10" height="10" fill="#fff" stroke="#1a1a6a" stroke-width="2.2"/>
<path d="M826.5,63 H855 V80 Q855,91 840.8,91 Q826.5,91 826.5,80 Z" fill="#9a9ab8" stroke="#1a1a6a" stroke-width="2.4"/>
<!-- ===== 3D toolbar ===== -->
<circle cx="38.8" cy="182.8" r="10" fill="#f6fafc" stroke="#5a6a70" stroke-width="3.4"/>
<path d="M46,190 L54.5,204" stroke="#5a6a70" stroke-width="6"/>
<rect x="80.5" y="166.5" width="24.5" height="18.5" fill="#eef6f8" stroke="#6a7272" stroke-width="2.3"/>
<circle cx="104.8" cy="187.7" r="10" fill="#f0f6f8" fill-opacity=".85" stroke="#5a6a70" stroke-width="3.4"/>
<path d="M112,195 L122,208" stroke="#5a6a70" stroke-width="6"/>
<rect x="153.7" y="159.7" width="58.3" height="57.6" rx="3" fill="#fdfdff" stroke="#6474e8" stroke-width="2.6"/>
<path d="M162,204 Q170,188 174,178 Q178,171 186,170 L198,171 Q204,174 200,182 Q192,190 190,194 L203,198 Q190,205 175,211" fill="#fff" stroke="#222" stroke-width="1.6"/>
<path d="M180,176 L184,186 M186,174 L191,186 M192,173 L196,182" stroke="#222" stroke-width="2.2"/>
<path d="M224,188 Q232,176 248,181 Q262,186 266,194" fill="none" stroke="#555" stroke-width="3"/>
<path d="M239,169 Q246,200 257,212" fill="none" stroke="#555" stroke-width="3"/>
<path d="M226,193 L248,200 L256,204 L246,188 Z" fill="#3a8ee8"/>
<path d="M251,170 L262,196 L258,210 L254,186 Z" fill="#3a8ee8"/>
<path d="M305,184 L322,172 L343,180 L343,204 L322,211 L306,210 Z" fill="#f8f000"/>
<path d="M300,168 L312,174 L307,178 Z" fill="#333"/>
<circle cx="328.5" cy="195.7" r="12.8" fill="url(#sph)"/>
<path d="M373,189 Q376,176 400,176 Q420,176 428,187 Q420,200 400,200 Q377,200 373,189 Z" fill="url(#lensV)"/>
<ellipse cx="462.8" cy="189.2" rx="26.8" ry="11.8" fill="#3a98dc"/>
<path d="M497,184 Q524,204 552,183 Q546,190 524,192 Q504,190 497,184 Z" fill="#3a90d8" stroke="#2a70b0" stroke-width="1"/>
<path d="M562,200 L587,177 L613,200 Z" fill="url(#tri)"/>
<path d="M624,200 L649,176 L674,200 Z" fill="url(#tri)"/>
<ellipse cx="710" cy="187.5" rx="27" ry="6.5" transform="rotate(14 710 187.5)" fill="url(#lensV)"/>
<ellipse cx="773" cy="187.5" rx="27" ry="6.5" transform="rotate(-14 773 187.5)" fill="url(#lensV)"/>
<path d="M809,202 L852,175 Q864,184 858,198 Q840,205 809,202 Z" fill="#3a9ae0"/>
<ellipse cx="897" cy="188.5" rx="27" ry="12" transform="rotate(22 897 188.5)" fill="#3898dc"/>
<ellipse cx="958" cy="189" rx="12" ry="27" fill="url(#lensH)"/>
<path d="M1006,162 V216 M1068,162 V216" stroke="#e0e2ea" stroke-width="1.5"/>
<path d="M1020,172 A23,23 0 0 1 1060,182 M1058,205 A23,23 0 0 1 1018,202" fill="none" stroke="#3a90d0" stroke-width="3.5"/>
<path d="M1013,200 L1038,177 L1063,200 Z" fill="url(#tri)"/>
<path d="M1076,188 Q1080,196 1099,197 Q1120,196 1124,188 Q1120,181 1110,180" fill="none" stroke="#f02020" stroke-width="4"/>
<ellipse cx="1097.5" cy="189" rx="10.5" ry="27" fill="url(#lensH)"/>
<path d="M1076,188 Q1080,196 1099,197 Q1112,197 1118,194" fill="none" stroke="#f02020" stroke-width="4"/>
<path d="M1087,181 Q1080,183 1076,188" fill="none" stroke="#f02020" stroke-width="4"/>
<path d="M1138,188 Q1142,196 1161,197 Q1182,196 1186,188 Q1182,181 1172,180" fill="none" stroke="#f02020" stroke-width="4"/>
<ellipse cx="1159.5" cy="189" rx="10.5" ry="27" fill="url(#lensH)"/>
<path d="M1138,188 Q1142,196 1161,197 Q1174,197 1180,194 M1149,181 Q1142,183 1138,188" fill="none" stroke="#f02020" stroke-width="4"/>
<path d="M1145,188 L1155,197 L1151,197 L1151,215 L1139,215 L1139,197 L1135,197 Z" fill="#f8b020" stroke="#705010" stroke-width="1.2"/>
<circle cx="1238" cy="187.6" r="17" fill="none" stroke="#111" stroke-width="2.4"/>
<ellipse cx="1238" cy="179" rx="9" ry="6" fill="none" stroke="#111" stroke-width="2.2"/>
<path d="M1222,192 Q1238,200 1254,192" fill="none" stroke="#111" stroke-width="2.2"/>
<circle cx="1300" cy="187.6" r="17" fill="none" stroke="#111" stroke-width="2.4"/>
<ellipse cx="1300" cy="179" rx="9" ry="6" fill="none" stroke="#e02020" stroke-width="2"/>
<path d="M1284,192 Q1300,200 1316,192" fill="none" stroke="#e02020" stroke-width="2"/>
<rect x="1333.7" y="159.7" width="58.3" height="57.6" rx="3" fill="#fdfdff" stroke="#6474e8" stroke-width="2.6"/>
<circle cx="1362" cy="188" r="17" fill="none" stroke="#222" stroke-width="2.6"/>
<path d="M1348,178 L1376,178 L1362,200 Z M1346,192 L1378,192 M1352,200 L1362,178 L1372,200 M1362,171 V205" fill="none" stroke="#222" stroke-width="2"/>
<circle cx="1441" cy="189.5" r="19" fill="url(#sph)"/>
<circle cx="1503.3" cy="189.5" r="19" fill="url(#sph)"/>
<circle cx="1563" cy="189" r="18" fill="url(#sph)"/>
<path d="M1560,203 L1583,170 L1590,176 L1567,208 Z" fill="#4a90f0" stroke="#111" stroke-width="2"/>
<path d="M1562,204 L1568,207 L1574,212 L1590,212" stroke="#20a0d0" stroke-width="4"/>
<circle cx="1643" cy="189" r="19.5" fill="url(#gray)"/>
<path d="M1625,178 H1661 M1624,184 H1662 M1624,190 H1662 M1624,196 H1662 M1626,202 H1660" stroke="#303030" stroke-width="2"/>
<rect x="1675.5" y="159.7" width="58.3" height="57.6" rx="3" fill="#fdfdff" stroke="#6474e8" stroke-width="2.6"/>
<circle cx="1704.6" cy="188.4" r="19.5" fill="url(#rainbow)"/>
<rect x="1753.8" y="159.7" width="58.3" height="57.6" rx="3" fill="#fdfdff" stroke="#6474e8" stroke-width="2.6"/>
<path d="M1770,172 Q1762,180 1766,188 Q1772,196 1765,206" fill="none" stroke="#2050e8" stroke-width="3" stroke-dasharray="4,2"/>
<path d="M1782,166 V211" stroke="#333" stroke-width="1.6" stroke-dasharray="3,2"/>
<path d="M1800,172 Q1790,182 1796,190 Q1802,198 1791,207" fill="none" stroke="#2050e8" stroke-width="3"/>
<rect x="1844" y="172" width="14" height="14" fill="#f02818"/>
<rect x="1862" y="172" width="14" height="14" fill="#f8c020"/>
<rect x="1844" y="190" width="14" height="14" fill="#a8d040"/>
<rect x="1862" y="190" width="14" height="14" fill="#68d0d8"/>
<!-- title icon -->
<circle cx="32" cy="131.5" r="14" fill="url(#sph)"/>
</svg>
<!-- window buttons -->
<div class="a" style="left:2765px;top:121px;width:29px;height:27px;background:#ececec;border-top:2px solid #fff;border-left:2px solid #fff;border-right:2px solid #6a6a6a;border-bottom:2px solid #6a6a6a"></div>
<div class="a" style="left:2772px;top:139px;width:12px;height:3px;background:#111"></div>
<div class="a" style="left:2797px;top:121px;width:31px;height:27px;background:#ececec;border-top:2px solid #fff;border-left:2px solid #fff;border-right:2px solid #6a6a6a;border-bottom:2px solid #6a6a6a"></div>
<div class="a" style="left:2803px;top:128px;width:18px;height:15px;border:1.5px solid #111;border-top:3px solid #111"></div>
<div class="a" style="left:2832px;top:121px;width:32px;height:27px;background:#ececec;border-top:2px solid #fff;border-left:2px solid #fff;border-right:2px solid #6a6a6a;border-bottom:2px solid #6a6a6a"></div>
<svg class="a" style="left:2832px;top:121px" width="32" height="27"><path d="M9,6 L23,20 M23,6 L9,20" stroke="#111" stroke-width="2.6"/></svg>
<!-- status grip + corners -->
<svg class="a" style="left:2850px;top:1770px" width="30" height="30"><path d="M6,28 L28,6 M14,28 L28,14 M22,28 L28,22" stroke="#888" stroke-width="2.2"/></svg>
<svg class="a" style="left:0;top:1788px" width="12" height="12"><path d="M0,0 Q0,12 12,12 L0,12 Z" fill="#000"/></svg>
<svg class="a" style="left:2868px;top:1788px" width="12" height="12"><path d="M12,0 Q12,12 0,12 L12,12 Z" fill="#000"/></svg>

<!-- status bar -->
<div class="a" id="help" style="left:7px;top:1771px;font-size:22px;line-height:30px;color:#2e2e2e">Press F1 for help</div>
<div class="pane" style="left:2176px;width:50px">"</div>
<div class="pane" style="left:2232px;width:140px">X: 56.7"</div>
<div class="pane" style="left:2379px;width:139px">Y: -9.8"</div>
<div class="pane" style="left:2524px;width:140px">Z: 6.6"</div>
<div class="pane" style="left:2670px;width:52px"></div>
<div class="pane" style="left:2728px;width:60px"></div>
<div class="pane" style="left:2794px;width:48px"></div>
</body></html>
